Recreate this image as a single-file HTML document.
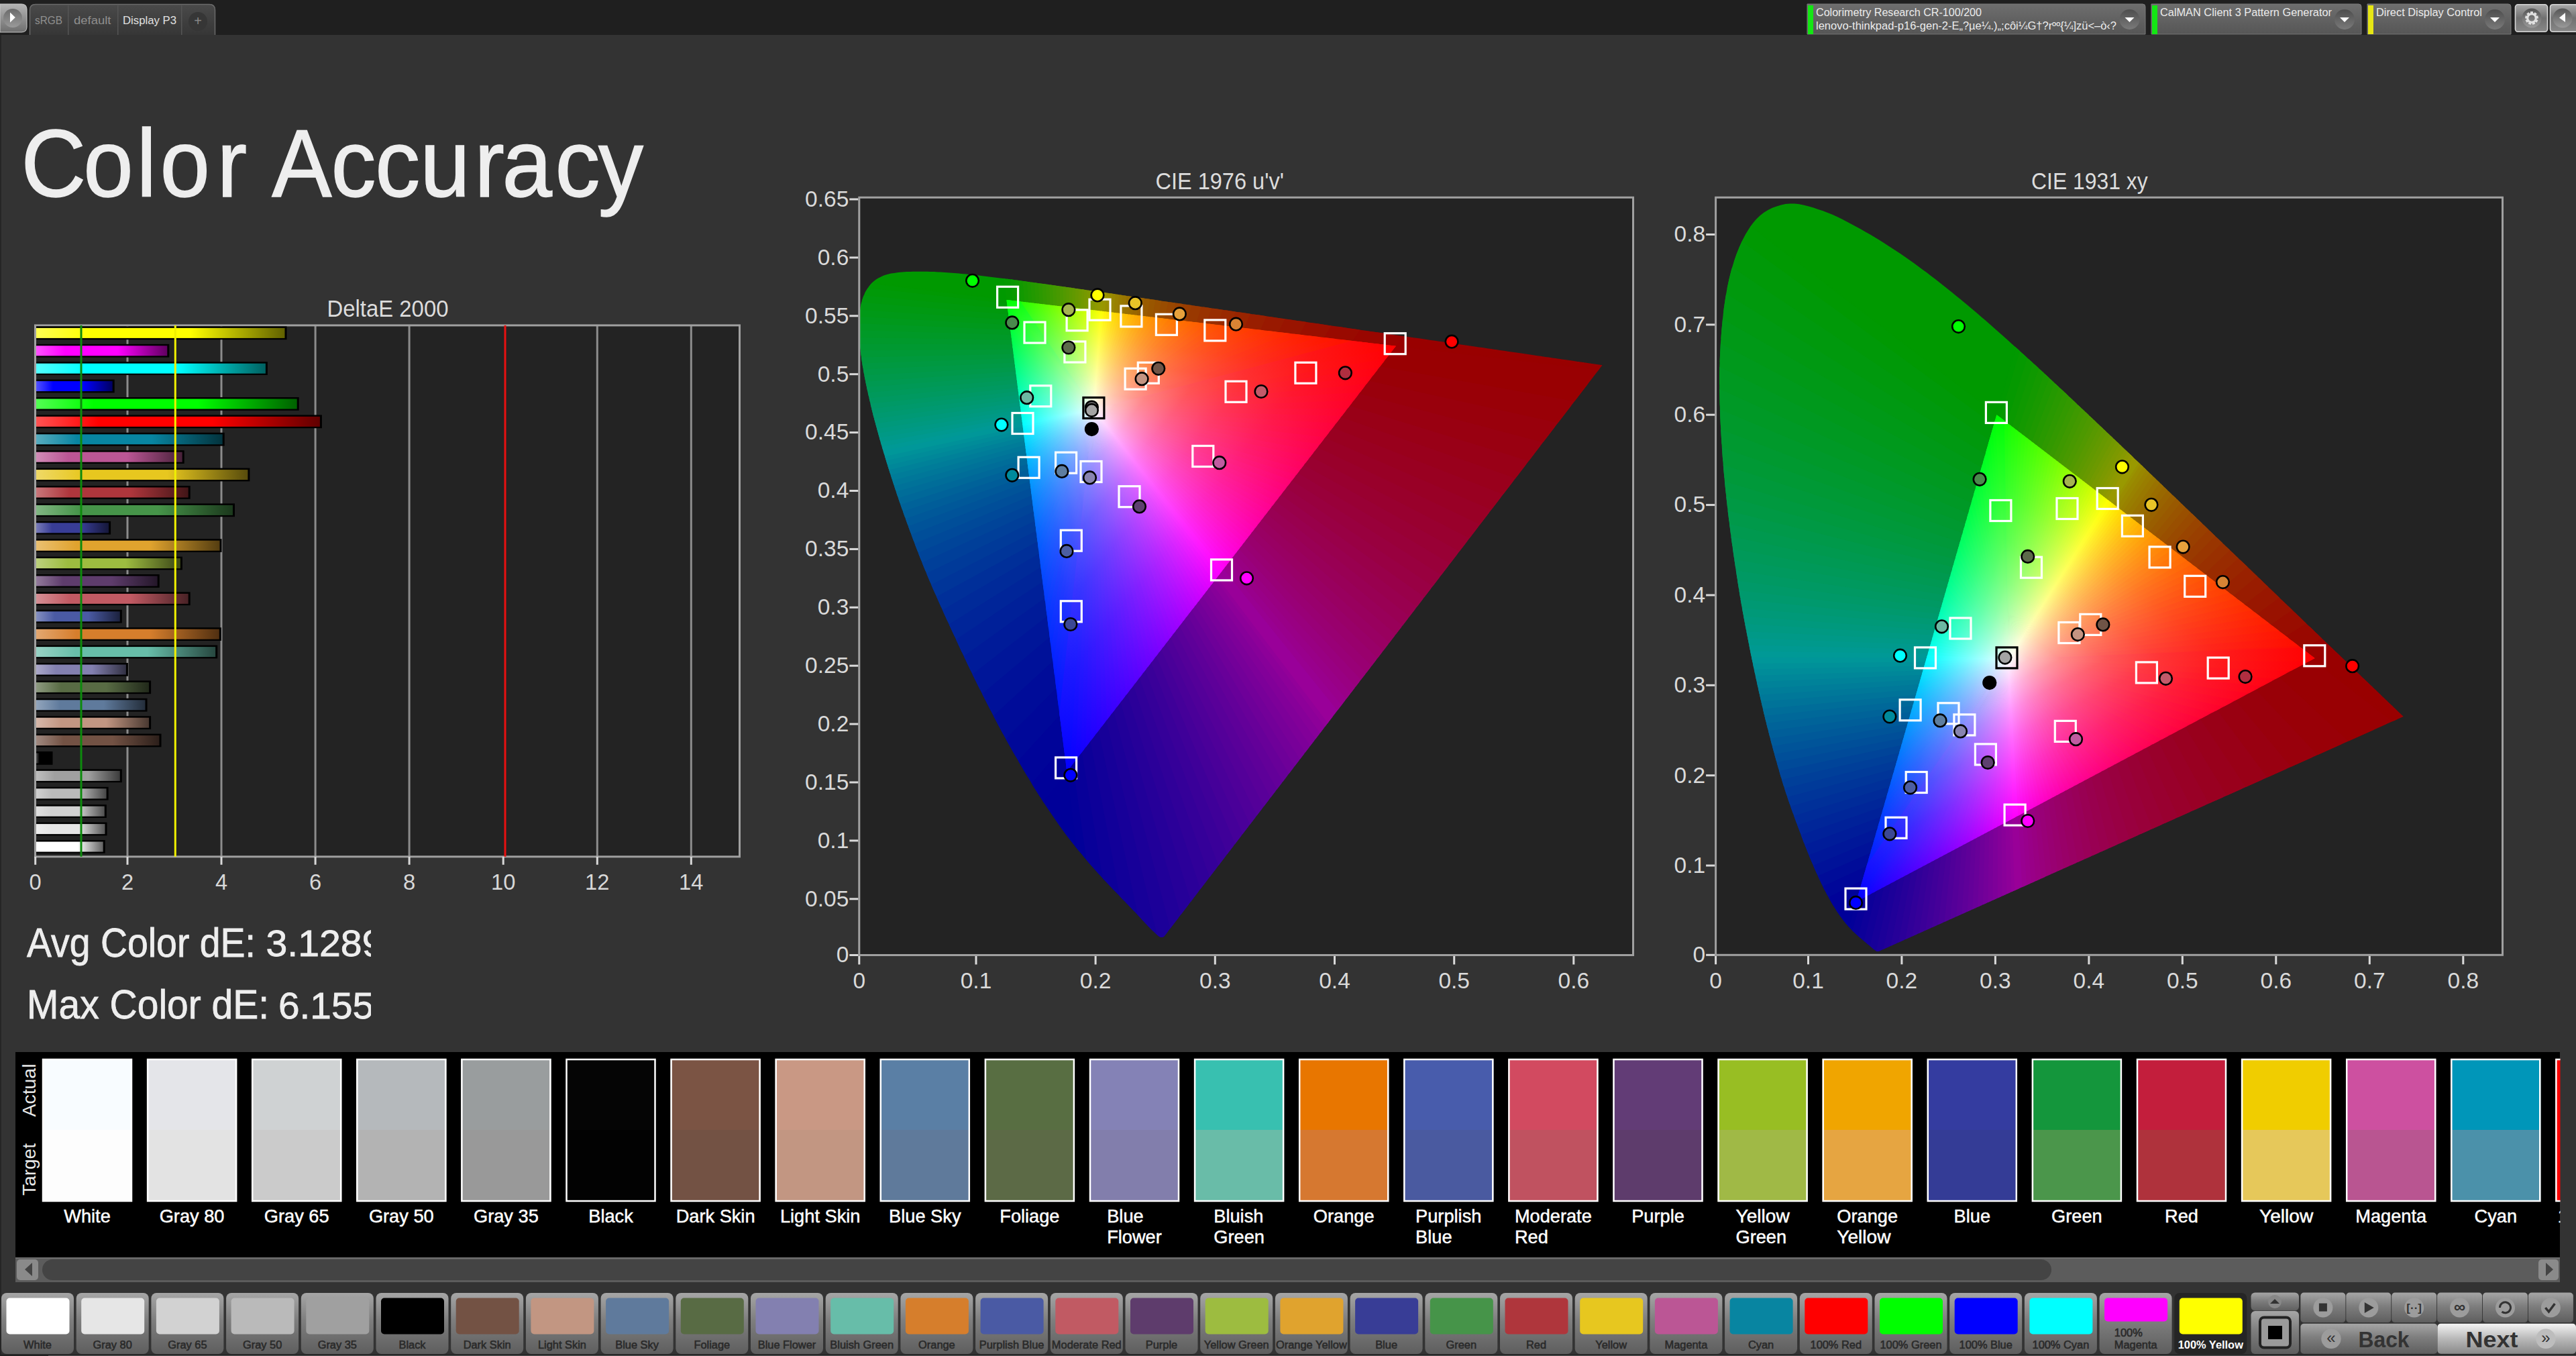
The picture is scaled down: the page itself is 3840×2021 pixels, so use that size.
<!DOCTYPE html>
<html><head><meta charset="utf-8"><style>
html,body{margin:0;padding:0;background:#333;overflow:hidden}
svg{display:block}
text{font-family:"Liberation Sans",sans-serif}
</style></head><body>
<svg width="3840" height="2021" viewBox="0 0 3840 2021">
<defs>
<linearGradient id="gPlay" x1="0" y1="0" x2="0" y2="1"><stop offset="0" stop-color="#b4b4b4"/><stop offset="1" stop-color="#6e6e6e"/></linearGradient>
<linearGradient id="gPlayC" x1="0" y1="0" x2="0" y2="1"><stop offset="0" stop-color="#6a6a6a"/><stop offset="1" stop-color="#9a9a9a"/></linearGradient>
<linearGradient id="gTab" x1="0" y1="0" x2="0" y2="1"><stop offset="0" stop-color="#4a4a4a"/><stop offset="1" stop-color="#363636"/></linearGradient>
<linearGradient id="gDev" x1="0" y1="0" x2="0" y2="1"><stop offset="0" stop-color="#6e6e6e"/><stop offset="1" stop-color="#565656"/></linearGradient>
<linearGradient id="gDd" x1="0" y1="0" x2="0" y2="1"><stop offset="0" stop-color="#4e4e4e"/><stop offset="1" stop-color="#7a7a7a"/></linearGradient>
<linearGradient id="gBtn" x1="0" y1="0" x2="0" y2="1"><stop offset="0" stop-color="#8a8a8a"/><stop offset="1" stop-color="#5a5a5a"/></linearGradient>
<linearGradient id="gBtn2" x1="0" y1="0" x2="0" y2="1"><stop offset="0" stop-color="#a8a8a8"/><stop offset=".5" stop-color="#707070"/><stop offset="1" stop-color="#888"/></linearGradient>
<linearGradient id="gCirc" x1="0" y1="0" x2="0" y2="1"><stop offset="0" stop-color="#555"/><stop offset="1" stop-color="#9a9a9a"/></linearGradient>
<linearGradient id="gb0" x1="0" y1="0" x2="1" y2="0"><stop offset="0" stop-color="#ffff52"/><stop offset=".22" stop-color="#ffff00"/><stop offset=".62" stop-color="#ffff00"/><stop offset="1" stop-color="#616100"/></linearGradient>
<linearGradient id="gb1" x1="0" y1="0" x2="1" y2="0"><stop offset="0" stop-color="#ff52ff"/><stop offset=".22" stop-color="#ff00ff"/><stop offset=".62" stop-color="#ff00ff"/><stop offset="1" stop-color="#610061"/></linearGradient>
<linearGradient id="gb2" x1="0" y1="0" x2="1" y2="0"><stop offset="0" stop-color="#52ffff"/><stop offset=".22" stop-color="#00ffff"/><stop offset=".62" stop-color="#00ffff"/><stop offset="1" stop-color="#006161"/></linearGradient>
<linearGradient id="gb3" x1="0" y1="0" x2="1" y2="0"><stop offset="0" stop-color="#5252ff"/><stop offset=".22" stop-color="#0000ff"/><stop offset=".62" stop-color="#0000ff"/><stop offset="1" stop-color="#000061"/></linearGradient>
<linearGradient id="gb4" x1="0" y1="0" x2="1" y2="0"><stop offset="0" stop-color="#52ff52"/><stop offset=".22" stop-color="#00ff00"/><stop offset=".62" stop-color="#00ff00"/><stop offset="1" stop-color="#006100"/></linearGradient>
<linearGradient id="gb5" x1="0" y1="0" x2="1" y2="0"><stop offset="0" stop-color="#ff5252"/><stop offset=".22" stop-color="#ff0000"/><stop offset=".62" stop-color="#ff0000"/><stop offset="1" stop-color="#610000"/></linearGradient>
<linearGradient id="gb6" x1="0" y1="0" x2="1" y2="0"><stop offset="0" stop-color="#57acbf"/><stop offset=".22" stop-color="#0885a1"/><stop offset=".62" stop-color="#0885a1"/><stop offset="1" stop-color="#03333d"/></linearGradient>
<linearGradient id="gb7" x1="0" y1="0" x2="1" y2="0"><stop offset="0" stop-color="#d18cb7"/><stop offset=".22" stop-color="#bb5695"/><stop offset=".62" stop-color="#bb5695"/><stop offset="1" stop-color="#472139"/></linearGradient>
<linearGradient id="gb8" x1="0" y1="0" x2="1" y2="0"><stop offset="0" stop-color="#efd967"/><stop offset=".22" stop-color="#e7c71f"/><stop offset=".62" stop-color="#e7c71f"/><stop offset="1" stop-color="#584c0c"/></linearGradient>
<linearGradient id="gb9" x1="0" y1="0" x2="1" y2="0"><stop offset="0" stop-color="#c9767a"/><stop offset=".22" stop-color="#af363c"/><stop offset=".62" stop-color="#af363c"/><stop offset="1" stop-color="#421517"/></linearGradient>
<linearGradient id="gb10" x1="0" y1="0" x2="1" y2="0"><stop offset="0" stop-color="#81b683"/><stop offset=".22" stop-color="#469449"/><stop offset=".62" stop-color="#469449"/><stop offset="1" stop-color="#1b381c"/></linearGradient>
<linearGradient id="gb11" x1="0" y1="0" x2="1" y2="0"><stop offset="0" stop-color="#787bb8"/><stop offset=".22" stop-color="#383d96"/><stop offset=".62" stop-color="#383d96"/><stop offset="1" stop-color="#151739"/></linearGradient>
<linearGradient id="gb12" x1="0" y1="0" x2="1" y2="0"><stop offset="0" stop-color="#eac071"/><stop offset=".22" stop-color="#e0a32e"/><stop offset=".62" stop-color="#e0a32e"/><stop offset="1" stop-color="#553e11"/></linearGradient>
<linearGradient id="gb13" x1="0" y1="0" x2="1" y2="0"><stop offset="0" stop-color="#bcd17d"/><stop offset=".22" stop-color="#9dbc40"/><stop offset=".62" stop-color="#9dbc40"/><stop offset="1" stop-color="#3c4718"/></linearGradient>
<linearGradient id="gb14" x1="0" y1="0" x2="1" y2="0"><stop offset="0" stop-color="#927a9b"/><stop offset=".22" stop-color="#5e3c6c"/><stop offset=".62" stop-color="#5e3c6c"/><stop offset="1" stop-color="#241729"/></linearGradient>
<linearGradient id="gb15" x1="0" y1="0" x2="1" y2="0"><stop offset="0" stop-color="#d58f95"/><stop offset=".22" stop-color="#c15a63"/><stop offset=".62" stop-color="#c15a63"/><stop offset="1" stop-color="#492226"/></linearGradient>
<linearGradient id="gb16" x1="0" y1="0" x2="1" y2="0"><stop offset="0" stop-color="#848fc1"/><stop offset=".22" stop-color="#4a5aa4"/><stop offset=".62" stop-color="#4a5aa4"/><stop offset="1" stop-color="#1c223e"/></linearGradient>
<linearGradient id="gb17" x1="0" y1="0" x2="1" y2="0"><stop offset="0" stop-color="#e3a770"/><stop offset=".22" stop-color="#d67e2c"/><stop offset=".62" stop-color="#d67e2c"/><stop offset="1" stop-color="#513011"/></linearGradient>
<linearGradient id="gb18" x1="0" y1="0" x2="1" y2="0"><stop offset="0" stop-color="#98d2c5"/><stop offset=".22" stop-color="#67bda9"/><stop offset=".62" stop-color="#67bda9"/><stop offset="1" stop-color="#274840"/></linearGradient>
<linearGradient id="gb19" x1="0" y1="0" x2="1" y2="0"><stop offset="0" stop-color="#aba9c9"/><stop offset=".22" stop-color="#8380b0"/><stop offset=".62" stop-color="#8380b0"/><stop offset="1" stop-color="#323143"/></linearGradient>
<linearGradient id="gb20" x1="0" y1="0" x2="1" y2="0"><stop offset="0" stop-color="#8d9a80"/><stop offset=".22" stop-color="#586b44"/><stop offset=".62" stop-color="#586b44"/><stop offset="1" stop-color="#21291a"/></linearGradient>
<linearGradient id="gb21" x1="0" y1="0" x2="1" y2="0"><stop offset="0" stop-color="#92a5bc"/><stop offset=".22" stop-color="#5f7a9c"/><stop offset=".62" stop-color="#5f7a9c"/><stop offset="1" stop-color="#242e3b"/></linearGradient>
<linearGradient id="gb22" x1="0" y1="0" x2="1" y2="0"><stop offset="0" stop-color="#d6b8aa"/><stop offset=".22" stop-color="#c29682"/><stop offset=".62" stop-color="#c29682"/><stop offset="1" stop-color="#4a3931"/></linearGradient>
<linearGradient id="gb23" x1="0" y1="0" x2="1" y2="0"><stop offset="0" stop-color="#a08980"/><stop offset=".22" stop-color="#735244"/><stop offset=".62" stop-color="#735244"/><stop offset="1" stop-color="#2c1f1a"/></linearGradient>
<linearGradient id="gb24" x1="0" y1="0" x2="1" y2="0"><stop offset="0" stop-color="#525252"/><stop offset=".22" stop-color="#000000"/><stop offset=".62" stop-color="#000000"/><stop offset="1" stop-color="#000000"/></linearGradient>
<linearGradient id="gb25" x1="0" y1="0" x2="1" y2="0"><stop offset="0" stop-color="#bebebe"/><stop offset=".22" stop-color="#a0a0a0"/><stop offset=".62" stop-color="#a0a0a0"/><stop offset="1" stop-color="#3d3d3d"/></linearGradient>
<linearGradient id="gb26" x1="0" y1="0" x2="1" y2="0"><stop offset="0" stop-color="#d0d0d0"/><stop offset=".22" stop-color="#bababa"/><stop offset=".62" stop-color="#bababa"/><stop offset="1" stop-color="#474747"/></linearGradient>
<linearGradient id="gb27" x1="0" y1="0" x2="1" y2="0"><stop offset="0" stop-color="#e0e0e0"/><stop offset=".22" stop-color="#d2d2d2"/><stop offset=".62" stop-color="#d2d2d2"/><stop offset="1" stop-color="#505050"/></linearGradient>
<linearGradient id="gb28" x1="0" y1="0" x2="1" y2="0"><stop offset="0" stop-color="#eeeeee"/><stop offset=".22" stop-color="#e6e6e6"/><stop offset=".62" stop-color="#e6e6e6"/><stop offset="1" stop-color="#575757"/></linearGradient>
<linearGradient id="gb29" x1="0" y1="0" x2="1" y2="0"><stop offset="0" stop-color="#ffffff"/><stop offset=".22" stop-color="#ffffff"/><stop offset=".62" stop-color="#ffffff"/><stop offset="1" stop-color="#616161"/></linearGradient>
<clipPath id="clipAvg"><rect x="0" y="1300" width="553" height="260"/></clipPath>
<clipPath id="uhs"><path d="M1735.3 1395.7 L1735.3 1395.7 L1735.3 1395.6 L1735.3 1395.6 L1735.2 1395.6 L1735.2 1395.6 L1735.1 1395.6 L1735.1 1395.6 L1735.1 1395.7 L1735 1395.7 L1735 1395.8 L1734.9 1395.9 L1734.9 1395.9 L1734.8 1396 L1734.8 1396.1 L1734.7 1396.2 L1734.7 1396.2 L1734.6 1396.3 L1734.5 1396.3 L1734.5 1396.2 L1734.4 1396.2 L1734.3 1396.2 L1734.2 1396.2 L1734.1 1396.2 L1734.1 1396.2 L1734 1396.3 L1733.9 1396.4 L1733.8 1396.4 L1733.7 1396.5 L1733.7 1396.6 L1733.6 1396.7 L1733.5 1396.8 L1733.4 1396.8 L1733.3 1396.8 L1733.2 1396.8 L1733.1 1396.8 L1733 1396.8 L1732.9 1396.8 L1732.7 1396.8 L1732.6 1396.8 L1732.5 1396.8 L1732.4 1396.8 L1732.2 1396.8 L1732.1 1396.8 L1731.9 1396.8 L1731.8 1396.8 L1731.6 1396.8 L1731.5 1396.8 L1731.3 1396.8 L1731.1 1396.8 L1731 1396.9 L1730.8 1396.9 L1730.7 1396.9 L1730.5 1396.9 L1730.3 1396.9 L1730.1 1396.9 L1729.8 1396.8 L1729.6 1396.7 L1729.3 1396.6 L1729 1396.4 L1728.7 1396.2 L1728.4 1396 L1728 1395.8 L1727.6 1395.5 L1727.2 1395.2 L1726.7 1394.8 L1726.2 1394.4 L1725.6 1394 L1725.1 1393.5 L1724.5 1393 L1723.9 1392.4 L1723.2 1391.9 L1722.5 1391.3 L1721.9 1390.6 L1721.2 1390 L1720.4 1389.3 L1719.7 1388.6 L1718.9 1387.8 L1718.1 1387 L1717.2 1386.1 L1716.3 1385.2 L1715.3 1384.2 L1714.3 1383.2 L1713.2 1382.1 L1712.1 1380.9 L1711 1379.8 L1709.8 1378.5 L1708.6 1377.3 L1707.3 1375.9 L1706 1374.6 L1704.7 1373.1 L1703.3 1371.7 L1702 1370.2 L1700.5 1368.6 L1699.1 1367 L1697.5 1365.3 L1695.9 1363.7 L1694.3 1361.9 L1692.7 1360.2 L1691 1358.4 L1689.2 1356.6 L1687.4 1354.7 L1685.6 1352.7 L1683.6 1350.7 L1681.6 1348.6 L1679.5 1346.4 L1677.3 1344.1 L1675 1341.8 L1672.7 1339.4 L1670.3 1336.9 L1667.8 1334.3 L1665.3 1331.7 L1662.8 1329 L1660.1 1326.3 L1657.5 1323.5 L1654.8 1320.7 L1652 1317.8 L1649.2 1314.8 L1646.2 1311.7 L1643.2 1308.4 L1640.1 1305 L1636.9 1301.4 L1633.6 1297.8 L1630.3 1294.1 L1626.9 1290.3 L1623.4 1286.3 L1619.8 1282.1 L1616.1 1277.7 L1612.3 1273.1 L1608.4 1268.4 L1604.6 1263.7 L1600.7 1258.9 L1596.7 1254 L1592.6 1248.7 L1588.2 1243 L1583.7 1236.7 L1578.8 1229.9 L1573.8 1222.7 L1568.7 1215.2 L1563.4 1207.5 L1557.9 1199.3 L1552.3 1190.8 L1546.6 1181.7 L1540.6 1172.2 L1534.5 1162.1 L1528.3 1151.7 L1522 1141.1 L1515.7 1130.2 L1509.2 1119 L1502.6 1107.3 L1495.9 1095.2 L1489.1 1082.5 L1482.1 1069.3 L1475.1 1055.7 L1468.1 1041.9 L1461 1027.9 L1453.9 1013.7 L1446.8 999.2 L1439.7 984.3 L1432.5 969.2 L1425.4 953.8 L1418.2 938.2 L1411 922.7 L1403.9 907.1 L1397 891.5 L1390.1 875.9 L1383.4 860.3 L1376.9 844.6 L1370.7 828.9 L1364.6 813.2 L1358.8 797.7 L1353.1 782.3 L1347.6 767 L1342.3 752.1 L1337.3 737.4 L1332.5 723 L1328 709 L1323.6 695.2 L1319.4 681.5 L1315.4 668.2 L1311.6 655.2 L1308.1 642.6 L1304.8 630.5 L1301.7 619 L1299 607.9 L1296.5 597.3 L1294.1 586.9 L1291.9 576.9 L1289.9 567.2 L1288.1 557.9 L1286.5 549.1 L1285.1 540.7 L1284 532.8 L1283 525.2 L1282.2 518 L1281.5 511 L1280.9 504.3 L1280.5 497.9 L1280.3 491.8 L1280.3 486 L1280.4 480.5 L1280.6 475.2 L1281 470.2 L1281.5 465.3 L1282.2 460.7 L1283 456.3 L1283.9 452.1 L1284.9 448.2 L1286.1 444.5 L1287.4 441.1 L1288.8 437.8 L1290.4 434.6 L1292.1 431.7 L1293.9 428.9 L1295.7 426.3 L1297.7 423.9 L1299.7 421.7 L1301.8 419.7 L1304 417.9 L1306.3 416.3 L1308.8 414.8 L1311.3 413.5 L1313.8 412.2 L1316.4 411.1 L1319 410.1 L1321.6 409.2 L1324.4 408.4 L1327.2 407.8 L1330.1 407.3 L1333 406.9 L1336 406.5 L1339 406.1 L1342 405.8 L1345 405.5 L1348 405.3 L1351.1 405.1 L1354.3 405 L1357.5 404.9 L1360.6 404.8 L1363.8 404.8 L1367 404.7 L1370.1 404.7 L1373.3 404.7 L1376.4 404.7 L1379.6 404.8 L1382.8 404.8 L1386 404.9 L1389.2 405 L1392.4 405.1 L1395.7 405.3 L1398.9 405.4 L1402.2 405.6 L1405.5 405.8 L1408.8 406 L1412.2 406.2 L1415.5 406.4 L1419 406.7 L1422.4 407 L1425.9 407.3 L1429.4 407.6 L1433 407.9 L1436.6 408.2 L1440.2 408.6 L1443.8 408.9 L1447.5 409.3 L1451.3 409.7 L1455.1 410.1 L1458.9 410.5 L1462.7 411 L1466.6 411.4 L1470.6 411.9 L1474.6 412.4 L1478.6 412.9 L1482.7 413.4 L1486.8 413.9 L1491 414.4 L1495.2 415 L1499.5 415.5 L1503.9 416.1 L1508.3 416.6 L1512.7 417.2 L1517.2 417.8 L1521.8 418.4 L1526.5 419.1 L1531.2 419.7 L1535.9 420.4 L1540.8 421 L1545.6 421.7 L1550.6 422.4 L1555.6 423.1 L1560.6 423.8 L1565.8 424.5 L1571 425.3 L1576.2 426 L1581.6 426.8 L1587 427.5 L1592.4 428.3 L1598 429.1 L1603.6 429.9 L1609.3 430.7 L1615 431.5 L1620.9 432.4 L1626.8 433.2 L1632.7 434.1 L1638.8 434.9 L1644.9 435.8 L1651.1 436.7 L1657.3 437.6 L1663.6 438.6 L1670 439.5 L1676.5 440.4 L1683.1 441.4 L1689.7 442.3 L1696.4 443.3 L1703.1 444.3 L1710 445.3 L1716.9 446.3 L1723.9 447.3 L1730.9 448.4 L1738 449.4 L1745.2 450.5 L1752.5 451.5 L1759.8 452.6 L1767.2 453.7 L1774.7 454.8 L1782.2 455.9 L1789.8 457 L1797.4 458.1 L1805.1 459.2 L1812.9 460.3 L1820.7 461.5 L1828.5 462.6 L1836.5 463.7 L1844.4 464.9 L1852.4 466.1 L1860.4 467.2 L1868.5 468.4 L1876.6 469.6 L1884.7 470.8 L1892.8 472 L1901 473.2 L1909.2 474.4 L1917.4 475.6 L1925.5 476.8 L1933.6 477.9 L1941.6 479.1 L1949.6 480.3 L1957.5 481.4 L1965.4 482.6 L1973.2 483.7 L1981 484.9 L1988.9 486 L1996.7 487.1 L2004.5 488.3 L2012.3 489.4 L2020.1 490.5 L2027.8 491.7 L2035.5 492.8 L2043.1 493.9 L2050.7 495 L2058.1 496.1 L2065.4 497.1 L2072.6 498.2 L2079.7 499.2 L2086.7 500.2 L2093.6 501.2 L2100.4 502.2 L2107.1 503.2 L2113.7 504.1 L2120.3 505.1 L2126.7 506 L2133 506.9 L2139.2 507.8 L2145.3 508.7 L2151.2 509.6 L2157.1 510.5 L2162.9 511.3 L2168.5 512.1 L2174.1 513 L2179.4 513.7 L2184.7 514.5 L2189.9 515.3 L2194.9 516 L2199.9 516.7 L2204.7 517.4 L2209.5 518.1 L2214.1 518.8 L2218.6 519.5 L2223 520.1 L2227.3 520.7 L2231.6 521.3 L2235.7 521.9 L2239.8 522.5 L2243.8 523.1 L2247.7 523.7 L2251.4 524.2 L2255.1 524.8 L2258.8 525.3 L2262.3 525.8 L2265.8 526.3 L2269.3 526.8 L2272.7 527.3 L2276.1 527.8 L2279.4 528.3 L2282.6 528.8 L2285.8 529.3 L2288.9 529.7 L2291.9 530.2 L2294.9 530.6 L2297.9 531 L2300.7 531.4 L2303.5 531.9 L2306.3 532.3 L2308.9 532.6 L2311.6 533 L2314.1 533.4 L2316.6 533.8 L2319 534.1 L2321.4 534.4 L2323.6 534.8 L2325.9 535.1 L2328 535.4 L2330.1 535.7 L2332.1 536 L2334.1 536.3 L2336 536.5 L2337.9 536.8 L2339.6 537.1 L2341.3 537.3 L2343 537.6 L2344.6 537.8 L2346.2 538 L2347.7 538.2 L2349.2 538.5 L2350.6 538.7 L2352 538.9 L2353.4 539.1 L2354.6 539.3 L2355.9 539.4 L2357.1 539.6 L2358.3 539.8 L2359.4 540 L2360.5 540.1 L2361.6 540.3 L2362.6 540.4 L2363.6 540.6 L2364.5 540.7 L2365.4 540.8 L2366.2 541 L2367 541.1 L2367.7 541.2 L2368.4 541.3 L2369 541.4 L2369.6 541.5 L2370.2 541.5 L2370.8 541.6 L2371.4 541.7 L2371.9 541.8 L2372.4 541.9 L2372.9 541.9 L2373.4 542 L2373.9 542.1 L2374.4 542.2 L2375 542.2 L2375.6 542.3 L2376.3 542.4 L2377.2 542.6 L2378 542.7 L2378.9 542.8 L2379.8 542.9 L2380.7 543.1 L2381.5 543.2 L2382.3 543.3 L2383 543.4 L2383.7 543.5 L2384.3 543.6 L2385 543.7 L2385.6 543.8 L2386.1 543.9 L2386.6 543.9 L2387.1 544 L2387.4 544.1 L2387.7 544.1 L2387.9 544.1 L2388.1 544.2 L2388.2 544.2 L2388.3 544.2 L2388.4 544.2 L2388.5 544.2Z"/></clipPath>
<clipPath id="utr"><path d="M2080.8 515.7 L1500.5 446.9 L1590.4 1150.1 Z"/></clipPath>
<clipPath id="uf0"><path d="M2080.8 515.7 L-1401 102.6 L-861.8 4321.9 Z"/></clipPath>
<clipPath id="uf1"><path d="M1590.4 1150.1 L4533 -2656.1 L1051.2 -3069.1 Z"/></clipPath>
<clipPath id="uf2"><path d="M1500.5 446.9 L2039.7 4666.1 L4982.4 860 Z"/></clipPath>
<radialGradient id="uwr"><stop offset="0" stop-color="#fff"/><stop offset=".4" stop-color="#fff" stop-opacity=".9"/><stop offset="1" stop-color="#fff" stop-opacity="0"/></radialGradient>
<linearGradient id="u0" gradientUnits="userSpaceOnUse" x1="1630.3" y1="610.6" x2="2068.7" y2="514.3"><stop offset=".00" stop-color="#fff"/><stop offset=".07" stop-color="#ffbebd"/><stop offset=".17" stop-color="#ff8685"/><stop offset=".32" stop-color="#ff5553"/><stop offset=".50" stop-color="#ff3331"/><stop offset=".72" stop-color="#ff1917"/><stop offset="1" stop-color="#ff0300"/></linearGradient>
<linearGradient id="u1" gradientUnits="userSpaceOnUse" x1="1630.3" y1="610.6" x2="2044.3" y2="511.4"><stop offset=".00" stop-color="#fff"/><stop offset=".07" stop-color="#ffc1c0"/><stop offset=".17" stop-color="#ff8a87"/><stop offset=".32" stop-color="#ff5a56"/><stop offset=".50" stop-color="#ff3733"/><stop offset=".72" stop-color="#ff1e18"/><stop offset="1" stop-color="#ff0800"/></linearGradient>
<linearGradient id="u2" gradientUnits="userSpaceOnUse" x1="1630.3" y1="610.6" x2="2020" y2="508.5"><stop offset=".00" stop-color="#fff"/><stop offset=".07" stop-color="#ffc4c2"/><stop offset=".17" stop-color="#ff8f8a"/><stop offset=".32" stop-color="#ff5f58"/><stop offset=".50" stop-color="#ff3d34"/><stop offset=".72" stop-color="#ff2319"/><stop offset="1" stop-color="#ff0d01"/></linearGradient>
<linearGradient id="u3" gradientUnits="userSpaceOnUse" x1="1630.3" y1="610.6" x2="1995.7" y2="505.6"><stop offset=".00" stop-color="#fff"/><stop offset=".07" stop-color="#ffc7c4"/><stop offset=".17" stop-color="#ff948d"/><stop offset=".32" stop-color="#ff655b"/><stop offset=".50" stop-color="#ff4236"/><stop offset=".72" stop-color="#ff281a"/><stop offset="1" stop-color="#ff1301"/></linearGradient>
<linearGradient id="u4" gradientUnits="userSpaceOnUse" x1="1630.3" y1="610.6" x2="1971.4" y2="502.7"><stop offset=".00" stop-color="#fff"/><stop offset=".07" stop-color="#ffcac6"/><stop offset=".17" stop-color="#ff9990"/><stop offset=".32" stop-color="#ff6a5e"/><stop offset=".50" stop-color="#ff4838"/><stop offset=".72" stop-color="#ff2e1b"/><stop offset="1" stop-color="#ff1801"/></linearGradient>
<linearGradient id="u5" gradientUnits="userSpaceOnUse" x1="1630.3" y1="610.6" x2="1947.8" y2="499.9"><stop offset=".00" stop-color="#fff"/><stop offset=".07" stop-color="#ffcec8"/><stop offset=".17" stop-color="#ff9e93"/><stop offset=".32" stop-color="#ff7161"/><stop offset=".50" stop-color="#ff4f3b"/><stop offset=".72" stop-color="#ff341c"/><stop offset="1" stop-color="#ff1e01"/></linearGradient>
<linearGradient id="u6" gradientUnits="userSpaceOnUse" x1="1630.3" y1="610.6" x2="1925.9" y2="497.3"><stop offset=".00" stop-color="#fff"/><stop offset=".07" stop-color="#ffd1ca"/><stop offset=".17" stop-color="#ffa396"/><stop offset=".32" stop-color="#ff7764"/><stop offset=".50" stop-color="#ff553d"/><stop offset=".72" stop-color="#ff3a1d"/><stop offset="1" stop-color="#ff2401"/></linearGradient>
<linearGradient id="u7" gradientUnits="userSpaceOnUse" x1="1630.3" y1="610.6" x2="1905.8" y2="495"><stop offset=".00" stop-color="#fff"/><stop offset=".07" stop-color="#ffd3cc"/><stop offset=".17" stop-color="#ffa899"/><stop offset=".32" stop-color="#ff7c67"/><stop offset=".50" stop-color="#ff5b3f"/><stop offset=".72" stop-color="#ff411e"/><stop offset="1" stop-color="#ff2b01"/></linearGradient>
<linearGradient id="u8" gradientUnits="userSpaceOnUse" x1="1630.3" y1="610.6" x2="1887.2" y2="492.8"><stop offset=".00" stop-color="#fff"/><stop offset=".07" stop-color="#ffd6ce"/><stop offset=".17" stop-color="#ffac9c"/><stop offset=".32" stop-color="#ff8269"/><stop offset=".50" stop-color="#ff6141"/><stop offset=".72" stop-color="#ff471f"/><stop offset="1" stop-color="#ff3101"/></linearGradient>
<linearGradient id="u9" gradientUnits="userSpaceOnUse" x1="1630.3" y1="610.6" x2="1870.1" y2="490.7"><stop offset=".00" stop-color="#fff"/><stop offset=".07" stop-color="#ffd9d0"/><stop offset=".17" stop-color="#ffb19f"/><stop offset=".32" stop-color="#ff886c"/><stop offset=".50" stop-color="#ff6743"/><stop offset=".72" stop-color="#ff4d21"/><stop offset="1" stop-color="#ff3701"/></linearGradient>
<linearGradient id="u10" gradientUnits="userSpaceOnUse" x1="1630.3" y1="610.6" x2="1854.2" y2="488.8"><stop offset=".00" stop-color="#fff"/><stop offset=".07" stop-color="#ffdbd2"/><stop offset=".17" stop-color="#ffb5a1"/><stop offset=".32" stop-color="#ff8d6f"/><stop offset=".50" stop-color="#ff6d45"/><stop offset=".72" stop-color="#ff5322"/><stop offset="1" stop-color="#ff3d01"/></linearGradient>
<linearGradient id="u11" gradientUnits="userSpaceOnUse" x1="1630.3" y1="610.6" x2="1839.3" y2="487.1"><stop offset=".00" stop-color="#fff"/><stop offset=".07" stop-color="#ffddd3"/><stop offset=".17" stop-color="#ffb9a4"/><stop offset=".32" stop-color="#ff9371"/><stop offset=".50" stop-color="#ff7347"/><stop offset=".72" stop-color="#ff5923"/><stop offset="1" stop-color="#ff4301"/></linearGradient>
<linearGradient id="u12" gradientUnits="userSpaceOnUse" x1="1630.3" y1="610.6" x2="1825.4" y2="485.4"><stop offset=".00" stop-color="#fff"/><stop offset=".07" stop-color="#ffdfd5"/><stop offset=".17" stop-color="#ffbda6"/><stop offset=".32" stop-color="#ff9874"/><stop offset=".50" stop-color="#ff7949"/><stop offset=".72" stop-color="#ff5f24"/><stop offset="1" stop-color="#ff4901"/></linearGradient>
<linearGradient id="u13" gradientUnits="userSpaceOnUse" x1="1630.3" y1="610.6" x2="1812.5" y2="483.9"><stop offset=".00" stop-color="#fff"/><stop offset=".07" stop-color="#ffe1d6"/><stop offset=".17" stop-color="#ffc1a8"/><stop offset=".32" stop-color="#ff9d76"/><stop offset=".50" stop-color="#ff7f4b"/><stop offset=".72" stop-color="#ff6525"/><stop offset="1" stop-color="#ff4f01"/></linearGradient>
<linearGradient id="u14" gradientUnits="userSpaceOnUse" x1="1630.3" y1="610.6" x2="1800.6" y2="482.5"><stop offset=".00" stop-color="#fff"/><stop offset=".07" stop-color="#ffe3d7"/><stop offset=".17" stop-color="#ffc4ab"/><stop offset=".32" stop-color="#ffa279"/><stop offset=".50" stop-color="#ff854d"/><stop offset=".72" stop-color="#ff6c27"/><stop offset="1" stop-color="#ff5501"/></linearGradient>
<linearGradient id="u15" gradientUnits="userSpaceOnUse" x1="1630.3" y1="610.6" x2="1789.4" y2="481.2"><stop offset=".00" stop-color="#fff"/><stop offset=".07" stop-color="#ffe5d9"/><stop offset=".17" stop-color="#ffc8ad"/><stop offset=".32" stop-color="#ffa77b"/><stop offset=".50" stop-color="#ff8a4f"/><stop offset=".72" stop-color="#ff7128"/><stop offset="1" stop-color="#ff5c01"/></linearGradient>
<linearGradient id="u16" gradientUnits="userSpaceOnUse" x1="1630.3" y1="610.6" x2="1779" y2="479.9"><stop offset=".00" stop-color="#fff"/><stop offset=".07" stop-color="#ffe7da"/><stop offset=".17" stop-color="#ffcbaf"/><stop offset=".32" stop-color="#ffab7d"/><stop offset=".50" stop-color="#ff9051"/><stop offset=".72" stop-color="#ff7729"/><stop offset="1" stop-color="#ff6201"/></linearGradient>
<linearGradient id="u17" gradientUnits="userSpaceOnUse" x1="1630.3" y1="610.6" x2="1769.3" y2="478.8"><stop offset=".00" stop-color="#fff"/><stop offset=".07" stop-color="#ffe8db"/><stop offset=".17" stop-color="#ffceb1"/><stop offset=".32" stop-color="#ffb07f"/><stop offset=".50" stop-color="#ff9553"/><stop offset=".72" stop-color="#ff7d2a"/><stop offset="1" stop-color="#ff6801"/></linearGradient>
<linearGradient id="u18" gradientUnits="userSpaceOnUse" x1="1630.3" y1="610.6" x2="1760.1" y2="477.7"><stop offset=".00" stop-color="#fff"/><stop offset=".07" stop-color="#ffeadc"/><stop offset=".17" stop-color="#ffd1b2"/><stop offset=".32" stop-color="#ffb482"/><stop offset=".50" stop-color="#ff9a55"/><stop offset=".72" stop-color="#ff832b"/><stop offset="1" stop-color="#ff6e01"/></linearGradient>
<linearGradient id="u19" gradientUnits="userSpaceOnUse" x1="1630.3" y1="610.6" x2="1751.4" y2="476.6"><stop offset=".00" stop-color="#fff"/><stop offset=".07" stop-color="#ffebdd"/><stop offset=".17" stop-color="#ffd4b4"/><stop offset=".32" stop-color="#ffb984"/><stop offset=".50" stop-color="#ffa057"/><stop offset=".72" stop-color="#ff892c"/><stop offset="1" stop-color="#ff7401"/></linearGradient>
<linearGradient id="u20" gradientUnits="userSpaceOnUse" x1="1630.3" y1="610.6" x2="1743.3" y2="475.7"><stop offset=".00" stop-color="#fff"/><stop offset=".07" stop-color="#ffedde"/><stop offset=".17" stop-color="#ffd7b6"/><stop offset=".32" stop-color="#ffbd86"/><stop offset=".50" stop-color="#ffa559"/><stop offset=".72" stop-color="#ff8f2e"/><stop offset="1" stop-color="#ff7a01"/></linearGradient>
<linearGradient id="u21" gradientUnits="userSpaceOnUse" x1="1630.3" y1="610.6" x2="1735.6" y2="474.8"><stop offset=".00" stop-color="#fff"/><stop offset=".07" stop-color="#ffeedf"/><stop offset=".17" stop-color="#ffd9b8"/><stop offset=".32" stop-color="#ffc188"/><stop offset=".50" stop-color="#ffaa5a"/><stop offset=".72" stop-color="#ff952f"/><stop offset="1" stop-color="#ff8101"/></linearGradient>
<linearGradient id="u22" gradientUnits="userSpaceOnUse" x1="1630.3" y1="610.6" x2="1728.4" y2="473.9"><stop offset=".00" stop-color="#fff"/><stop offset=".07" stop-color="#ffefe0"/><stop offset=".17" stop-color="#ffdcb9"/><stop offset=".32" stop-color="#ffc58a"/><stop offset=".50" stop-color="#ffaf5c"/><stop offset=".72" stop-color="#ff9a30"/><stop offset="1" stop-color="#ff8701"/></linearGradient>
<linearGradient id="u23" gradientUnits="userSpaceOnUse" x1="1630.3" y1="610.6" x2="1721.7" y2="473.1"><stop offset=".00" stop-color="#fff"/><stop offset=".07" stop-color="#fff0e1"/><stop offset=".17" stop-color="#ffdebb"/><stop offset=".32" stop-color="#ffc88c"/><stop offset=".50" stop-color="#ffb45e"/><stop offset=".72" stop-color="#ffa031"/><stop offset="1" stop-color="#ff8d01"/></linearGradient>
<linearGradient id="u24" gradientUnits="userSpaceOnUse" x1="1630.3" y1="610.6" x2="1715.2" y2="472.3"><stop offset=".00" stop-color="#fff"/><stop offset=".07" stop-color="#fff2e1"/><stop offset=".17" stop-color="#ffe1bc"/><stop offset=".32" stop-color="#ffcc8d"/><stop offset=".50" stop-color="#ffb860"/><stop offset=".72" stop-color="#ffa532"/><stop offset="1" stop-color="#ff9301"/></linearGradient>
<linearGradient id="u25" gradientUnits="userSpaceOnUse" x1="1630.3" y1="610.6" x2="1709" y2="471.6"><stop offset=".00" stop-color="#fff"/><stop offset=".07" stop-color="#fff3e2"/><stop offset=".17" stop-color="#ffe3be"/><stop offset=".32" stop-color="#ffd08f"/><stop offset=".50" stop-color="#ffbd61"/><stop offset=".72" stop-color="#ffab33"/><stop offset="1" stop-color="#ff9901"/></linearGradient>
<linearGradient id="u26" gradientUnits="userSpaceOnUse" x1="1630.3" y1="610.6" x2="1703" y2="470.9"><stop offset=".00" stop-color="#fff"/><stop offset=".07" stop-color="#fff4e3"/><stop offset=".17" stop-color="#ffe5bf"/><stop offset=".32" stop-color="#ffd391"/><stop offset=".50" stop-color="#ffc263"/><stop offset=".72" stop-color="#ffb134"/><stop offset="1" stop-color="#ffa001"/></linearGradient>
<linearGradient id="u27" gradientUnits="userSpaceOnUse" x1="1630.3" y1="610.6" x2="1697.3" y2="470.2"><stop offset=".00" stop-color="#fff"/><stop offset=".07" stop-color="#fff5e3"/><stop offset=".17" stop-color="#ffe8c0"/><stop offset=".32" stop-color="#ffd793"/><stop offset=".50" stop-color="#ffc665"/><stop offset=".72" stop-color="#ffb635"/><stop offset="1" stop-color="#ffa601"/></linearGradient>
<linearGradient id="u28" gradientUnits="userSpaceOnUse" x1="1630.3" y1="610.6" x2="1692.1" y2="469.6"><stop offset=".00" stop-color="#fff"/><stop offset=".07" stop-color="#fff6e4"/><stop offset=".17" stop-color="#ffeac1"/><stop offset=".32" stop-color="#ffda94"/><stop offset=".50" stop-color="#ffcb66"/><stop offset=".72" stop-color="#ffbc37"/><stop offset="1" stop-color="#ffac01"/></linearGradient>
<linearGradient id="u29" gradientUnits="userSpaceOnUse" x1="1630.3" y1="610.6" x2="1687.2" y2="469"><stop offset=".00" stop-color="#fff"/><stop offset=".07" stop-color="#fff7e5"/><stop offset=".17" stop-color="#ffecc3"/><stop offset=".32" stop-color="#ffdd96"/><stop offset=".50" stop-color="#ffcf68"/><stop offset=".72" stop-color="#ffc138"/><stop offset="1" stop-color="#ffb301"/></linearGradient>
<linearGradient id="u30" gradientUnits="userSpaceOnUse" x1="1630.3" y1="610.6" x2="1682.2" y2="468.4"><stop offset=".00" stop-color="#fff"/><stop offset=".07" stop-color="#fff7e5"/><stop offset=".17" stop-color="#ffeec4"/><stop offset=".32" stop-color="#ffe197"/><stop offset=".50" stop-color="#ffd469"/><stop offset=".72" stop-color="#ffc639"/><stop offset="1" stop-color="#ffb901"/></linearGradient>
<linearGradient id="u31" gradientUnits="userSpaceOnUse" x1="1630.3" y1="610.6" x2="1677.5" y2="467.9"><stop offset=".00" stop-color="#fff"/><stop offset=".07" stop-color="#fff8e6"/><stop offset=".17" stop-color="#ffefc5"/><stop offset=".32" stop-color="#ffe499"/><stop offset=".50" stop-color="#ffd86b"/><stop offset=".72" stop-color="#ffcc3a"/><stop offset="1" stop-color="#ffc001"/></linearGradient>
<linearGradient id="u32" gradientUnits="userSpaceOnUse" x1="1630.3" y1="610.6" x2="1673" y2="467.3"><stop offset=".00" stop-color="#fff"/><stop offset=".07" stop-color="#fff9e7"/><stop offset=".17" stop-color="#fff1c6"/><stop offset=".32" stop-color="#ffe79b"/><stop offset=".50" stop-color="#ffdc6c"/><stop offset=".72" stop-color="#ffd13b"/><stop offset="1" stop-color="#ffc601"/></linearGradient>
<linearGradient id="u33" gradientUnits="userSpaceOnUse" x1="1630.3" y1="610.6" x2="1668.8" y2="466.8"><stop offset=".00" stop-color="#fff"/><stop offset=".07" stop-color="#fffae7"/><stop offset=".17" stop-color="#fff3c7"/><stop offset=".32" stop-color="#ffea9c"/><stop offset=".50" stop-color="#ffe16e"/><stop offset=".72" stop-color="#ffd73c"/><stop offset="1" stop-color="#ffcc01"/></linearGradient>
<linearGradient id="u34" gradientUnits="userSpaceOnUse" x1="1630.3" y1="610.6" x2="1664.8" y2="466.4"><stop offset=".00" stop-color="#fff"/><stop offset=".07" stop-color="#fffbe8"/><stop offset=".17" stop-color="#fff5c8"/><stop offset=".32" stop-color="#ffed9d"/><stop offset=".50" stop-color="#ffe56f"/><stop offset=".72" stop-color="#ffdc3d"/><stop offset="1" stop-color="#ffd301"/></linearGradient>
<linearGradient id="u35" gradientUnits="userSpaceOnUse" x1="1630.3" y1="610.6" x2="1660.9" y2="465.9"><stop offset=".00" stop-color="#fff"/><stop offset=".07" stop-color="#fffbe8"/><stop offset=".17" stop-color="#fff6c9"/><stop offset=".32" stop-color="#fff09f"/><stop offset=".50" stop-color="#ffe971"/><stop offset=".72" stop-color="#ffe13e"/><stop offset="1" stop-color="#ffd901"/></linearGradient>
<linearGradient id="u36" gradientUnits="userSpaceOnUse" x1="1630.3" y1="610.6" x2="1657.1" y2="465.5"><stop offset=".00" stop-color="#fff"/><stop offset=".07" stop-color="#fffce9"/><stop offset=".17" stop-color="#fff8ca"/><stop offset=".32" stop-color="#fff3a0"/><stop offset=".50" stop-color="#ffed72"/><stop offset=".72" stop-color="#ffe63f"/><stop offset="1" stop-color="#ffe002"/></linearGradient>
<linearGradient id="u37" gradientUnits="userSpaceOnUse" x1="1630.3" y1="610.6" x2="1653.7" y2="465"><stop offset=".00" stop-color="#fff"/><stop offset=".07" stop-color="#fffde9"/><stop offset=".17" stop-color="#fffacb"/><stop offset=".32" stop-color="#fff5a2"/><stop offset=".50" stop-color="#fff074"/><stop offset=".72" stop-color="#ffeb40"/><stop offset="1" stop-color="#ffe602"/></linearGradient>
<linearGradient id="u38" gradientUnits="userSpaceOnUse" x1="1630.3" y1="610.6" x2="1650.2" y2="464.6"><stop offset=".00" stop-color="#fff"/><stop offset=".07" stop-color="#fffdea"/><stop offset=".17" stop-color="#fffbcc"/><stop offset=".32" stop-color="#fff8a3"/><stop offset=".50" stop-color="#fff475"/><stop offset=".72" stop-color="#fff141"/><stop offset="1" stop-color="#ffed02"/></linearGradient>
<linearGradient id="u39" gradientUnits="userSpaceOnUse" x1="1630.3" y1="610.6" x2="1646.7" y2="464.2"><stop offset=".00" stop-color="#fff"/><stop offset=".07" stop-color="#fffeea"/><stop offset=".17" stop-color="#fffdcd"/><stop offset=".32" stop-color="#fffba4"/><stop offset=".50" stop-color="#fff877"/><stop offset=".72" stop-color="#fff642"/><stop offset="1" stop-color="#fff302"/></linearGradient>
<linearGradient id="u40" gradientUnits="userSpaceOnUse" x1="1630.3" y1="610.6" x2="1643.5" y2="463.8"><stop offset=".00" stop-color="#fff"/><stop offset=".07" stop-color="#ffffea"/><stop offset=".17" stop-color="#fffece"/><stop offset=".32" stop-color="#fffda6"/><stop offset=".50" stop-color="#fffc78"/><stop offset=".72" stop-color="#fffb43"/><stop offset="1" stop-color="#fffa02"/></linearGradient>
<linearGradient id="u41" gradientUnits="userSpaceOnUse" x1="1630.3" y1="610.6" x2="1640" y2="463.4"><stop offset=".00" stop-color="#fff"/><stop offset=".07" stop-color="#ffffeb"/><stop offset=".17" stop-color="#feffce"/><stop offset=".32" stop-color="#feffa6"/><stop offset=".50" stop-color="#feff79"/><stop offset=".72" stop-color="#fdff44"/><stop offset="1" stop-color="#fcff02"/></linearGradient>
<linearGradient id="u42" gradientUnits="userSpaceOnUse" x1="1630.3" y1="610.6" x2="1636.5" y2="463"><stop offset=".00" stop-color="#fff"/><stop offset=".07" stop-color="#feffea"/><stop offset=".17" stop-color="#fdffce"/><stop offset=".32" stop-color="#fbffa6"/><stop offset=".50" stop-color="#f9ff78"/><stop offset=".72" stop-color="#f7ff44"/><stop offset="1" stop-color="#f5ff02"/></linearGradient>
<linearGradient id="u43" gradientUnits="userSpaceOnUse" x1="1630.3" y1="610.6" x2="1633.6" y2="462.7"><stop offset=".00" stop-color="#fff"/><stop offset=".07" stop-color="#fdffea"/><stop offset=".17" stop-color="#fcffce"/><stop offset=".32" stop-color="#f9ffa5"/><stop offset=".50" stop-color="#f6ff78"/><stop offset=".72" stop-color="#f2ff43"/><stop offset="1" stop-color="#efff02"/></linearGradient>
<linearGradient id="u44" gradientUnits="userSpaceOnUse" x1="1630.3" y1="610.6" x2="1630.6" y2="462.3"><stop offset=".00" stop-color="#fff"/><stop offset=".07" stop-color="#fdffea"/><stop offset=".17" stop-color="#faffce"/><stop offset=".32" stop-color="#f6ffa5"/><stop offset=".50" stop-color="#f2ff77"/><stop offset=".72" stop-color="#eeff43"/><stop offset="1" stop-color="#e8ff02"/></linearGradient>
<linearGradient id="u45" gradientUnits="userSpaceOnUse" x1="1630.3" y1="610.6" x2="1627.6" y2="462"><stop offset=".00" stop-color="#fff"/><stop offset=".07" stop-color="#fcffea"/><stop offset=".17" stop-color="#f9ffcd"/><stop offset=".32" stop-color="#f4ffa5"/><stop offset=".50" stop-color="#efff77"/><stop offset=".72" stop-color="#e9ff43"/><stop offset="1" stop-color="#e2ff02"/></linearGradient>
<linearGradient id="u46" gradientUnits="userSpaceOnUse" x1="1630.3" y1="610.6" x2="1624.6" y2="461.6"><stop offset=".00" stop-color="#fff"/><stop offset=".07" stop-color="#fcffea"/><stop offset=".17" stop-color="#f8ffcd"/><stop offset=".32" stop-color="#f2ffa4"/><stop offset=".50" stop-color="#ebff77"/><stop offset=".72" stop-color="#e4ff42"/><stop offset="1" stop-color="#dcff02"/></linearGradient>
<linearGradient id="u47" gradientUnits="userSpaceOnUse" x1="1630.3" y1="610.6" x2="1621.6" y2="461.2"><stop offset=".00" stop-color="#fff"/><stop offset=".07" stop-color="#fbffea"/><stop offset=".17" stop-color="#f6ffcd"/><stop offset=".32" stop-color="#efffa4"/><stop offset=".50" stop-color="#e8ff76"/><stop offset=".72" stop-color="#dfff42"/><stop offset="1" stop-color="#d6ff02"/></linearGradient>
<linearGradient id="u48" gradientUnits="userSpaceOnUse" x1="1630.3" y1="610.6" x2="1618.4" y2="460.9"><stop offset=".00" stop-color="#fff"/><stop offset=".07" stop-color="#fbffea"/><stop offset=".17" stop-color="#f5ffcd"/><stop offset=".32" stop-color="#edffa4"/><stop offset=".50" stop-color="#e4ff76"/><stop offset=".72" stop-color="#daff42"/><stop offset="1" stop-color="#d0ff02"/></linearGradient>
<linearGradient id="u49" gradientUnits="userSpaceOnUse" x1="1630.3" y1="610.6" x2="1614.9" y2="460.5"><stop offset=".00" stop-color="#fff"/><stop offset=".07" stop-color="#faffea"/><stop offset=".17" stop-color="#f3ffcc"/><stop offset=".32" stop-color="#eaffa3"/><stop offset=".50" stop-color="#e0ff75"/><stop offset=".72" stop-color="#d5ff41"/><stop offset="1" stop-color="#c9ff02"/></linearGradient>
<linearGradient id="u50" gradientUnits="userSpaceOnUse" x1="1630.3" y1="610.6" x2="1611.5" y2="460"><stop offset=".00" stop-color="#fff"/><stop offset=".07" stop-color="#f9ffe9"/><stop offset=".17" stop-color="#f2ffcc"/><stop offset=".32" stop-color="#e7ffa3"/><stop offset=".50" stop-color="#dcff75"/><stop offset=".72" stop-color="#cfff41"/><stop offset="1" stop-color="#c2ff02"/></linearGradient>
<linearGradient id="u51" gradientUnits="userSpaceOnUse" x1="1630.3" y1="610.6" x2="1608" y2="459.6"><stop offset=".00" stop-color="#fff"/><stop offset=".07" stop-color="#f9ffe9"/><stop offset=".17" stop-color="#f0ffcc"/><stop offset=".32" stop-color="#e5ffa2"/><stop offset=".50" stop-color="#d8ff74"/><stop offset=".72" stop-color="#caff41"/><stop offset="1" stop-color="#bbff02"/></linearGradient>
<linearGradient id="u52" gradientUnits="userSpaceOnUse" x1="1630.3" y1="610.6" x2="1604.5" y2="459.2"><stop offset=".00" stop-color="#fff"/><stop offset=".07" stop-color="#f8ffe9"/><stop offset=".17" stop-color="#efffcb"/><stop offset=".32" stop-color="#e2ffa2"/><stop offset=".50" stop-color="#d4ff74"/><stop offset=".72" stop-color="#c5ff40"/><stop offset="1" stop-color="#b4ff02"/></linearGradient>
<linearGradient id="u53" gradientUnits="userSpaceOnUse" x1="1630.3" y1="610.6" x2="1601" y2="458.8"><stop offset=".00" stop-color="#fff"/><stop offset=".07" stop-color="#f7ffe9"/><stop offset=".17" stop-color="#edffcb"/><stop offset=".32" stop-color="#dfffa1"/><stop offset=".50" stop-color="#d0ff74"/><stop offset=".72" stop-color="#c0ff40"/><stop offset="1" stop-color="#aeff02"/></linearGradient>
<linearGradient id="u54" gradientUnits="userSpaceOnUse" x1="1630.3" y1="610.6" x2="1597.6" y2="458.4"><stop offset=".00" stop-color="#fff"/><stop offset=".07" stop-color="#f7ffe9"/><stop offset=".17" stop-color="#ecffcb"/><stop offset=".32" stop-color="#dcffa1"/><stop offset=".50" stop-color="#ccff73"/><stop offset=".72" stop-color="#baff40"/><stop offset="1" stop-color="#a7ff02"/></linearGradient>
<linearGradient id="u55" gradientUnits="userSpaceOnUse" x1="1630.3" y1="610.6" x2="1594.1" y2="458"><stop offset=".00" stop-color="#fff"/><stop offset=".07" stop-color="#f6ffe9"/><stop offset=".17" stop-color="#eaffcb"/><stop offset=".32" stop-color="#daffa1"/><stop offset=".50" stop-color="#c8ff73"/><stop offset=".72" stop-color="#b5ff3f"/><stop offset="1" stop-color="#a1ff02"/></linearGradient>
<linearGradient id="u56" gradientUnits="userSpaceOnUse" x1="1630.3" y1="610.6" x2="1590.6" y2="457.6"><stop offset=".00" stop-color="#fff"/><stop offset=".07" stop-color="#f5ffe9"/><stop offset=".17" stop-color="#e9ffca"/><stop offset=".32" stop-color="#d7ffa0"/><stop offset=".50" stop-color="#c4ff72"/><stop offset=".72" stop-color="#b0ff3f"/><stop offset="1" stop-color="#9aff02"/></linearGradient>
<linearGradient id="u57" gradientUnits="userSpaceOnUse" x1="1630.3" y1="610.6" x2="1587.1" y2="457.2"><stop offset=".00" stop-color="#fff"/><stop offset=".07" stop-color="#f5ffe8"/><stop offset=".17" stop-color="#e7ffca"/><stop offset=".32" stop-color="#d5ffa0"/><stop offset=".50" stop-color="#c1ff72"/><stop offset=".72" stop-color="#abff3f"/><stop offset="1" stop-color="#94ff02"/></linearGradient>
<linearGradient id="u58" gradientUnits="userSpaceOnUse" x1="1630.3" y1="610.6" x2="1583.7" y2="456.7"><stop offset=".00" stop-color="#fff"/><stop offset=".07" stop-color="#f4ffe8"/><stop offset=".17" stop-color="#e6ffca"/><stop offset=".32" stop-color="#d2ff9f"/><stop offset=".50" stop-color="#bdff71"/><stop offset=".72" stop-color="#a6ff3e"/><stop offset="1" stop-color="#8eff01"/></linearGradient>
<linearGradient id="u59" gradientUnits="userSpaceOnUse" x1="1630.3" y1="610.6" x2="1580.2" y2="456.3"><stop offset=".00" stop-color="#fff"/><stop offset=".07" stop-color="#f3ffe8"/><stop offset=".17" stop-color="#e4ffc9"/><stop offset=".32" stop-color="#cfff9f"/><stop offset=".50" stop-color="#b9ff71"/><stop offset=".72" stop-color="#a1ff3e"/><stop offset="1" stop-color="#88ff01"/></linearGradient>
<linearGradient id="u60" gradientUnits="userSpaceOnUse" x1="1630.3" y1="610.6" x2="1576.7" y2="455.9"><stop offset=".00" stop-color="#fff"/><stop offset=".07" stop-color="#f3ffe8"/><stop offset=".17" stop-color="#e3ffc9"/><stop offset=".32" stop-color="#cdff9f"/><stop offset=".50" stop-color="#b5ff71"/><stop offset=".72" stop-color="#9cff3e"/><stop offset="1" stop-color="#81ff01"/></linearGradient>
<linearGradient id="u61" gradientUnits="userSpaceOnUse" x1="1630.3" y1="610.6" x2="1573.2" y2="455.5"><stop offset=".00" stop-color="#fff"/><stop offset=".07" stop-color="#f2ffe8"/><stop offset=".17" stop-color="#e1ffc9"/><stop offset=".32" stop-color="#caff9e"/><stop offset=".50" stop-color="#b2ff70"/><stop offset=".72" stop-color="#97ff3e"/><stop offset="1" stop-color="#7bff01"/></linearGradient>
<linearGradient id="u62" gradientUnits="userSpaceOnUse" x1="1630.3" y1="610.6" x2="1569.8" y2="455.1"><stop offset=".00" stop-color="#fff"/><stop offset=".07" stop-color="#f2ffe8"/><stop offset=".17" stop-color="#e0ffc8"/><stop offset=".32" stop-color="#c7ff9e"/><stop offset=".50" stop-color="#aeff70"/><stop offset=".72" stop-color="#93ff3d"/><stop offset="1" stop-color="#75ff01"/></linearGradient>
<linearGradient id="u63" gradientUnits="userSpaceOnUse" x1="1630.3" y1="610.6" x2="1566" y2="454.6"><stop offset=".00" stop-color="#fff"/><stop offset=".07" stop-color="#f1ffe8"/><stop offset=".17" stop-color="#deffc8"/><stop offset=".32" stop-color="#c5ff9d"/><stop offset=".50" stop-color="#aaff6f"/><stop offset=".72" stop-color="#8dff3d"/><stop offset="1" stop-color="#6fff01"/></linearGradient>
<linearGradient id="u64" gradientUnits="userSpaceOnUse" x1="1630.3" y1="610.6" x2="1562.1" y2="454.2"><stop offset=".00" stop-color="#fff"/><stop offset=".07" stop-color="#f0ffe7"/><stop offset=".17" stop-color="#dcffc8"/><stop offset=".32" stop-color="#c2ff9d"/><stop offset=".50" stop-color="#a6ff6f"/><stop offset=".72" stop-color="#88ff3d"/><stop offset="1" stop-color="#68ff01"/></linearGradient>
<linearGradient id="u65" gradientUnits="userSpaceOnUse" x1="1630.3" y1="610.6" x2="1558.1" y2="453.7"><stop offset=".00" stop-color="#fff"/><stop offset=".07" stop-color="#efffe7"/><stop offset=".17" stop-color="#dbffc8"/><stop offset=".32" stop-color="#bfff9c"/><stop offset=".50" stop-color="#a2ff6e"/><stop offset=".72" stop-color="#82ff3c"/><stop offset="1" stop-color="#61ff01"/></linearGradient>
<linearGradient id="u66" gradientUnits="userSpaceOnUse" x1="1630.3" y1="610.6" x2="1554.1" y2="453.2"><stop offset=".00" stop-color="#fff"/><stop offset=".07" stop-color="#efffe7"/><stop offset=".17" stop-color="#d9ffc7"/><stop offset=".32" stop-color="#bcff9c"/><stop offset=".50" stop-color="#9dff6e"/><stop offset=".72" stop-color="#7dff3c"/><stop offset="1" stop-color="#5bff01"/></linearGradient>
<linearGradient id="u67" gradientUnits="userSpaceOnUse" x1="1630.3" y1="610.6" x2="1550.2" y2="452.8"><stop offset=".00" stop-color="#fff"/><stop offset=".07" stop-color="#eeffe7"/><stop offset=".17" stop-color="#d7ffc7"/><stop offset=".32" stop-color="#b9ff9c"/><stop offset=".50" stop-color="#99ff6d"/><stop offset=".72" stop-color="#78ff3c"/><stop offset="1" stop-color="#54ff01"/></linearGradient>
<linearGradient id="u68" gradientUnits="userSpaceOnUse" x1="1630.3" y1="610.6" x2="1546.2" y2="452.3"><stop offset=".00" stop-color="#fff"/><stop offset=".07" stop-color="#edffe7"/><stop offset=".17" stop-color="#d6ffc7"/><stop offset=".32" stop-color="#b6ff9b"/><stop offset=".50" stop-color="#95ff6d"/><stop offset=".72" stop-color="#72ff3b"/><stop offset="1" stop-color="#4dff01"/></linearGradient>
<linearGradient id="u69" gradientUnits="userSpaceOnUse" x1="1630.3" y1="610.6" x2="1542.2" y2="451.8"><stop offset=".00" stop-color="#fff"/><stop offset=".07" stop-color="#ecffe7"/><stop offset=".17" stop-color="#d4ffc6"/><stop offset=".32" stop-color="#b3ff9b"/><stop offset=".50" stop-color="#91ff6d"/><stop offset=".72" stop-color="#6dff3b"/><stop offset="1" stop-color="#47ff01"/></linearGradient>
<linearGradient id="u70" gradientUnits="userSpaceOnUse" x1="1630.3" y1="610.6" x2="1538.2" y2="451.4"><stop offset=".00" stop-color="#fff"/><stop offset=".07" stop-color="#ecffe6"/><stop offset=".17" stop-color="#d2ffc6"/><stop offset=".32" stop-color="#b1ff9a"/><stop offset=".50" stop-color="#8dff6c"/><stop offset=".72" stop-color="#68ff3b"/><stop offset="1" stop-color="#40ff01"/></linearGradient>
<linearGradient id="u71" gradientUnits="userSpaceOnUse" x1="1630.3" y1="610.6" x2="1534.3" y2="450.9"><stop offset=".00" stop-color="#fff"/><stop offset=".07" stop-color="#ebffe6"/><stop offset=".17" stop-color="#d1ffc6"/><stop offset=".32" stop-color="#aeff9a"/><stop offset=".50" stop-color="#89ff6c"/><stop offset=".72" stop-color="#63ff3a"/><stop offset="1" stop-color="#3aff01"/></linearGradient>
<linearGradient id="u72" gradientUnits="userSpaceOnUse" x1="1630.3" y1="610.6" x2="1530.3" y2="450.4"><stop offset=".00" stop-color="#fff"/><stop offset=".07" stop-color="#eaffe6"/><stop offset=".17" stop-color="#cfffc5"/><stop offset=".32" stop-color="#abff99"/><stop offset=".50" stop-color="#85ff6b"/><stop offset=".72" stop-color="#5eff3a"/><stop offset="1" stop-color="#33ff01"/></linearGradient>
<linearGradient id="u73" gradientUnits="userSpaceOnUse" x1="1630.3" y1="610.6" x2="1526.3" y2="449.9"><stop offset=".00" stop-color="#fff"/><stop offset=".07" stop-color="#eaffe6"/><stop offset=".17" stop-color="#cdffc5"/><stop offset=".32" stop-color="#a8ff99"/><stop offset=".50" stop-color="#81ff6b"/><stop offset=".72" stop-color="#58ff3a"/><stop offset="1" stop-color="#2dff01"/></linearGradient>
<linearGradient id="u74" gradientUnits="userSpaceOnUse" x1="1630.3" y1="610.6" x2="1522.4" y2="449.5"><stop offset=".00" stop-color="#fff"/><stop offset=".07" stop-color="#e9ffe6"/><stop offset=".17" stop-color="#ccffc5"/><stop offset=".32" stop-color="#a5ff98"/><stop offset=".50" stop-color="#7dff6a"/><stop offset=".72" stop-color="#53ff39"/><stop offset="1" stop-color="#27ff01"/></linearGradient>
<linearGradient id="u75" gradientUnits="userSpaceOnUse" x1="1630.3" y1="610.6" x2="1518.4" y2="449"><stop offset=".00" stop-color="#fff"/><stop offset=".07" stop-color="#e8ffe6"/><stop offset=".17" stop-color="#caffc4"/><stop offset=".32" stop-color="#a3ff98"/><stop offset=".50" stop-color="#79ff6a"/><stop offset=".72" stop-color="#4eff39"/><stop offset="1" stop-color="#20ff01"/></linearGradient>
<linearGradient id="u76" gradientUnits="userSpaceOnUse" x1="1630.3" y1="610.6" x2="1514.4" y2="448.5"><stop offset=".00" stop-color="#fff"/><stop offset=".07" stop-color="#e7ffe5"/><stop offset=".17" stop-color="#c9ffc4"/><stop offset=".32" stop-color="#a0ff98"/><stop offset=".50" stop-color="#76ff6a"/><stop offset=".72" stop-color="#49ff39"/><stop offset="1" stop-color="#1aff01"/></linearGradient>
<linearGradient id="u77" gradientUnits="userSpaceOnUse" x1="1630.3" y1="610.6" x2="1510.4" y2="448.1"><stop offset=".00" stop-color="#fff"/><stop offset=".07" stop-color="#e7ffe5"/><stop offset=".17" stop-color="#c7ffc4"/><stop offset=".32" stop-color="#9dff97"/><stop offset=".50" stop-color="#72ff69"/><stop offset=".72" stop-color="#44ff39"/><stop offset="1" stop-color="#13ff01"/></linearGradient>
<linearGradient id="u78" gradientUnits="userSpaceOnUse" x1="1630.3" y1="610.6" x2="1506.5" y2="447.6"><stop offset=".00" stop-color="#fff"/><stop offset=".07" stop-color="#e6ffe5"/><stop offset=".17" stop-color="#c5ffc3"/><stop offset=".32" stop-color="#9aff97"/><stop offset=".50" stop-color="#6eff69"/><stop offset=".72" stop-color="#3fff38"/><stop offset="1" stop-color="#0cff01"/></linearGradient>
<linearGradient id="u79" gradientUnits="userSpaceOnUse" x1="1630.3" y1="610.6" x2="1502.5" y2="447.1"><stop offset=".00" stop-color="#fff"/><stop offset=".07" stop-color="#e5ffe5"/><stop offset=".17" stop-color="#c4ffc3"/><stop offset=".32" stop-color="#98ff96"/><stop offset=".50" stop-color="#6aff68"/><stop offset=".72" stop-color="#3aff38"/><stop offset="1" stop-color="#05ff01"/></linearGradient>
<linearGradient id="u80" gradientUnits="userSpaceOnUse" x1="1630.3" y1="610.6" x2="1500.8" y2="449.1"><stop offset=".00" stop-color="#fff"/><stop offset=".07" stop-color="#e5ffe5"/><stop offset=".17" stop-color="#c3ffc4"/><stop offset=".32" stop-color="#96ff97"/><stop offset=".50" stop-color="#68ff6a"/><stop offset=".72" stop-color="#38ff3a"/><stop offset="1" stop-color="#01ff05"/></linearGradient>
<linearGradient id="u81" gradientUnits="userSpaceOnUse" x1="1630.3" y1="610.6" x2="1501.4" y2="453.8"><stop offset=".00" stop-color="#fff"/><stop offset=".07" stop-color="#e5ffe6"/><stop offset=".17" stop-color="#c3ffc5"/><stop offset=".32" stop-color="#97ff9a"/><stop offset=".50" stop-color="#69ff6d"/><stop offset=".72" stop-color="#38ff3e"/><stop offset="1" stop-color="#01ff0b"/></linearGradient>
<linearGradient id="u82" gradientUnits="userSpaceOnUse" x1="1630.3" y1="610.6" x2="1502" y2="458.8"><stop offset=".00" stop-color="#fff"/><stop offset=".07" stop-color="#e5ffe6"/><stop offset=".17" stop-color="#c4ffc7"/><stop offset=".32" stop-color="#97ff9c"/><stop offset=".50" stop-color="#69ff71"/><stop offset=".72" stop-color="#39ff43"/><stop offset="1" stop-color="#01ff11"/></linearGradient>
<linearGradient id="u83" gradientUnits="userSpaceOnUse" x1="1630.3" y1="610.6" x2="1502.7" y2="463.7"><stop offset=".00" stop-color="#fff"/><stop offset=".07" stop-color="#e5ffe7"/><stop offset=".17" stop-color="#c4ffc8"/><stop offset=".32" stop-color="#98ff9f"/><stop offset=".50" stop-color="#6aff74"/><stop offset=".72" stop-color="#39ff48"/><stop offset="1" stop-color="#01ff17"/></linearGradient>
<linearGradient id="u84" gradientUnits="userSpaceOnUse" x1="1630.3" y1="610.6" x2="1503.3" y2="468.7"><stop offset=".00" stop-color="#fff"/><stop offset=".07" stop-color="#e6ffe8"/><stop offset=".17" stop-color="#c4ffca"/><stop offset=".32" stop-color="#98ffa1"/><stop offset=".50" stop-color="#6aff78"/><stop offset=".72" stop-color="#39ff4c"/><stop offset="1" stop-color="#01ff1d"/></linearGradient>
<linearGradient id="u85" gradientUnits="userSpaceOnUse" x1="1630.3" y1="610.6" x2="1504" y2="473.9"><stop offset=".00" stop-color="#fff"/><stop offset=".07" stop-color="#e6ffe9"/><stop offset=".17" stop-color="#c5ffcb"/><stop offset=".32" stop-color="#99ffa4"/><stop offset=".50" stop-color="#6aff7c"/><stop offset=".72" stop-color="#39ff51"/><stop offset="1" stop-color="#01ff23"/></linearGradient>
<linearGradient id="u86" gradientUnits="userSpaceOnUse" x1="1630.3" y1="610.6" x2="1504.7" y2="479.4"><stop offset=".00" stop-color="#fff"/><stop offset=".07" stop-color="#e6ffe9"/><stop offset=".17" stop-color="#c5ffcd"/><stop offset=".32" stop-color="#99ffa7"/><stop offset=".50" stop-color="#6bff80"/><stop offset=".72" stop-color="#3aff56"/><stop offset="1" stop-color="#01ff2a"/></linearGradient>
<linearGradient id="u87" gradientUnits="userSpaceOnUse" x1="1630.3" y1="610.6" x2="1505.4" y2="484.8"><stop offset=".00" stop-color="#fff"/><stop offset=".07" stop-color="#e6ffea"/><stop offset=".17" stop-color="#c5ffcf"/><stop offset=".32" stop-color="#9fa"/><stop offset=".50" stop-color="#6bff84"/><stop offset=".72" stop-color="#3aff5c"/><stop offset="1" stop-color="#01ff31"/></linearGradient>
<linearGradient id="u88" gradientUnits="userSpaceOnUse" x1="1630.3" y1="610.6" x2="1506" y2="490"><stop offset=".00" stop-color="#fff"/><stop offset=".07" stop-color="#e6ffeb"/><stop offset=".17" stop-color="#c6ffd0"/><stop offset=".32" stop-color="#9affad"/><stop offset=".50" stop-color="#6cff88"/><stop offset=".72" stop-color="#3aff61"/><stop offset="1" stop-color="#01ff37"/></linearGradient>
<linearGradient id="u89" gradientUnits="userSpaceOnUse" x1="1630.3" y1="610.6" x2="1506.7" y2="495"><stop offset=".00" stop-color="#fff"/><stop offset=".07" stop-color="#e6ffeb"/><stop offset=".17" stop-color="#c6ffd2"/><stop offset=".32" stop-color="#9affaf"/><stop offset=".50" stop-color="#6cff8b"/><stop offset=".72" stop-color="#3bff65"/><stop offset="1" stop-color="#01ff3d"/></linearGradient>
<linearGradient id="u90" gradientUnits="userSpaceOnUse" x1="1630.3" y1="610.6" x2="1507.3" y2="499.9"><stop offset=".00" stop-color="#fff"/><stop offset=".07" stop-color="#e7ffec"/><stop offset=".17" stop-color="#c6ffd3"/><stop offset=".32" stop-color="#9bffb2"/><stop offset=".50" stop-color="#6dff8f"/><stop offset=".72" stop-color="#3bff6a"/><stop offset="1" stop-color="#01ff43"/></linearGradient>
<linearGradient id="u91" gradientUnits="userSpaceOnUse" x1="1630.3" y1="610.6" x2="1507.9" y2="504.9"><stop offset=".00" stop-color="#fff"/><stop offset=".07" stop-color="#e7ffed"/><stop offset=".17" stop-color="#c7ffd5"/><stop offset=".32" stop-color="#9bffb5"/><stop offset=".50" stop-color="#6dff93"/><stop offset=".72" stop-color="#3bff6f"/><stop offset="1" stop-color="#01ff49"/></linearGradient>
<linearGradient id="u92" gradientUnits="userSpaceOnUse" x1="1630.3" y1="610.6" x2="1508.6" y2="509.9"><stop offset=".00" stop-color="#fff"/><stop offset=".07" stop-color="#e7ffee"/><stop offset=".17" stop-color="#c7ffd6"/><stop offset=".32" stop-color="#9cffb7"/><stop offset=".50" stop-color="#6eff97"/><stop offset=".72" stop-color="#3cff74"/><stop offset="1" stop-color="#01ff4f"/></linearGradient>
<linearGradient id="u93" gradientUnits="userSpaceOnUse" x1="1630.3" y1="610.6" x2="1509.2" y2="514.8"><stop offset=".00" stop-color="#fff"/><stop offset=".07" stop-color="#e7ffee"/><stop offset=".17" stop-color="#c7ffd8"/><stop offset=".32" stop-color="#9cffba"/><stop offset=".50" stop-color="#6eff9b"/><stop offset=".72" stop-color="#3cff79"/><stop offset="1" stop-color="#01ff55"/></linearGradient>
<linearGradient id="u94" gradientUnits="userSpaceOnUse" x1="1630.3" y1="610.6" x2="1509.8" y2="519.8"><stop offset=".00" stop-color="#fff"/><stop offset=".07" stop-color="#e7ffef"/><stop offset=".17" stop-color="#c8ffda"/><stop offset=".32" stop-color="#9dffbd"/><stop offset=".50" stop-color="#6fff9e"/><stop offset=".72" stop-color="#3cff7e"/><stop offset="1" stop-color="#01ff5c"/></linearGradient>
<linearGradient id="u95" gradientUnits="userSpaceOnUse" x1="1630.3" y1="610.6" x2="1510.5" y2="524.7"><stop offset=".00" stop-color="#fff"/><stop offset=".07" stop-color="#e7fff0"/><stop offset=".17" stop-color="#c8ffdb"/><stop offset=".32" stop-color="#9dffc0"/><stop offset=".50" stop-color="#6fffa2"/><stop offset=".72" stop-color="#3dff83"/><stop offset="1" stop-color="#01ff62"/></linearGradient>
<linearGradient id="u96" gradientUnits="userSpaceOnUse" x1="1630.3" y1="610.6" x2="1511.1" y2="529.7"><stop offset=".00" stop-color="#fff"/><stop offset=".07" stop-color="#e8fff0"/><stop offset=".17" stop-color="#c8ffdd"/><stop offset=".32" stop-color="#9effc2"/><stop offset=".50" stop-color="#70ffa6"/><stop offset=".72" stop-color="#3dff88"/><stop offset="1" stop-color="#01ff68"/></linearGradient>
<linearGradient id="u97" gradientUnits="userSpaceOnUse" x1="1630.3" y1="610.6" x2="1511.7" y2="534.7"><stop offset=".00" stop-color="#fff"/><stop offset=".07" stop-color="#e8fff1"/><stop offset=".17" stop-color="#c9ffde"/><stop offset=".32" stop-color="#9effc5"/><stop offset=".50" stop-color="#70ffaa"/><stop offset=".72" stop-color="#3dff8d"/><stop offset="1" stop-color="#01ff6f"/></linearGradient>
<linearGradient id="u98" gradientUnits="userSpaceOnUse" x1="1630.3" y1="610.6" x2="1512.4" y2="539.6"><stop offset=".00" stop-color="#fff"/><stop offset=".07" stop-color="#e8fff2"/><stop offset=".17" stop-color="#c9ffe0"/><stop offset=".32" stop-color="#9fffc8"/><stop offset=".50" stop-color="#71ffae"/><stop offset=".72" stop-color="#3eff93"/><stop offset="1" stop-color="#01ff75"/></linearGradient>
<linearGradient id="u99" gradientUnits="userSpaceOnUse" x1="1630.3" y1="610.6" x2="1513" y2="544.6"><stop offset=".00" stop-color="#fff"/><stop offset=".07" stop-color="#e8fff2"/><stop offset=".17" stop-color="#c9ffe2"/><stop offset=".32" stop-color="#9fffcb"/><stop offset=".50" stop-color="#71ffb2"/><stop offset=".72" stop-color="#3eff98"/><stop offset="1" stop-color="#01ff7c"/></linearGradient>
<linearGradient id="u100" gradientUnits="userSpaceOnUse" x1="1630.3" y1="610.6" x2="1513.6" y2="549.5"><stop offset=".00" stop-color="#fff"/><stop offset=".07" stop-color="#e8fff3"/><stop offset=".17" stop-color="#caffe3"/><stop offset=".32" stop-color="#a0ffcd"/><stop offset=".50" stop-color="#72ffb6"/><stop offset=".72" stop-color="#3fff9d"/><stop offset="1" stop-color="#01ff82"/></linearGradient>
<linearGradient id="u101" gradientUnits="userSpaceOnUse" x1="1630.3" y1="610.6" x2="1514.2" y2="554.2"><stop offset=".00" stop-color="#fff"/><stop offset=".07" stop-color="#e8fff4"/><stop offset=".17" stop-color="#caffe5"/><stop offset=".32" stop-color="#a0ffd0"/><stop offset=".50" stop-color="#72ffba"/><stop offset=".72" stop-color="#3fffa2"/><stop offset="1" stop-color="#01ff88"/></linearGradient>
<linearGradient id="u102" gradientUnits="userSpaceOnUse" x1="1630.3" y1="610.6" x2="1514.8" y2="558.7"><stop offset=".00" stop-color="#fff"/><stop offset=".07" stop-color="#e9fff4"/><stop offset=".17" stop-color="#caffe6"/><stop offset=".32" stop-color="#a0ffd3"/><stop offset=".50" stop-color="#72ffbe"/><stop offset=".72" stop-color="#3fffa7"/><stop offset="1" stop-color="#02ff8f"/></linearGradient>
<linearGradient id="u103" gradientUnits="userSpaceOnUse" x1="1630.3" y1="610.6" x2="1515.4" y2="563.2"><stop offset=".00" stop-color="#fff"/><stop offset=".07" stop-color="#e9fff5"/><stop offset=".17" stop-color="#cbffe8"/><stop offset=".32" stop-color="#a1ffd5"/><stop offset=".50" stop-color="#73ffc1"/><stop offset=".72" stop-color="#40ffac"/><stop offset="1" stop-color="#02ff95"/></linearGradient>
<linearGradient id="u104" gradientUnits="userSpaceOnUse" x1="1630.3" y1="610.6" x2="1515.9" y2="567.6"><stop offset=".00" stop-color="#fff"/><stop offset=".07" stop-color="#e9fff6"/><stop offset=".17" stop-color="#cbffe9"/><stop offset=".32" stop-color="#a1ffd8"/><stop offset=".50" stop-color="#73ffc5"/><stop offset=".72" stop-color="#40ffb1"/><stop offset="1" stop-color="#02ff9b"/></linearGradient>
<linearGradient id="u105" gradientUnits="userSpaceOnUse" x1="1630.3" y1="610.6" x2="1516.5" y2="572.1"><stop offset=".00" stop-color="#fff"/><stop offset=".07" stop-color="#e9fff6"/><stop offset=".17" stop-color="#cbffeb"/><stop offset=".32" stop-color="#a2ffda"/><stop offset=".50" stop-color="#74ffc9"/><stop offset=".72" stop-color="#40ffb6"/><stop offset="1" stop-color="#02ffa1"/></linearGradient>
<linearGradient id="u106" gradientUnits="userSpaceOnUse" x1="1630.3" y1="610.6" x2="1517.1" y2="576.6"><stop offset=".00" stop-color="#fff"/><stop offset=".07" stop-color="#e9fff7"/><stop offset=".17" stop-color="#ccffec"/><stop offset=".32" stop-color="#a2ffdd"/><stop offset=".50" stop-color="#74ffcd"/><stop offset=".72" stop-color="#41ffbb"/><stop offset="1" stop-color="#02ffa8"/></linearGradient>
<linearGradient id="u107" gradientUnits="userSpaceOnUse" x1="1630.3" y1="610.6" x2="1517.7" y2="581"><stop offset=".00" stop-color="#fff"/><stop offset=".07" stop-color="#e9fff8"/><stop offset=".17" stop-color="#cfe"/><stop offset=".32" stop-color="#a3ffe0"/><stop offset=".50" stop-color="#75ffd1"/><stop offset=".72" stop-color="#41ffc0"/><stop offset="1" stop-color="#02ffae"/></linearGradient>
<linearGradient id="u108" gradientUnits="userSpaceOnUse" x1="1630.3" y1="610.6" x2="1518.2" y2="585.5"><stop offset=".00" stop-color="#fff"/><stop offset=".07" stop-color="#e9fff8"/><stop offset=".17" stop-color="#ccffef"/><stop offset=".32" stop-color="#a3ffe2"/><stop offset=".50" stop-color="#75ffd4"/><stop offset=".72" stop-color="#41ffc5"/><stop offset="1" stop-color="#02ffb5"/></linearGradient>
<linearGradient id="u109" gradientUnits="userSpaceOnUse" x1="1630.3" y1="610.6" x2="1518.8" y2="589.9"><stop offset=".00" stop-color="#fff"/><stop offset=".07" stop-color="#eafff9"/><stop offset=".17" stop-color="#cdfff1"/><stop offset=".32" stop-color="#a4ffe5"/><stop offset=".50" stop-color="#76ffd8"/><stop offset=".72" stop-color="#42ffca"/><stop offset="1" stop-color="#02ffbb"/></linearGradient>
<linearGradient id="u110" gradientUnits="userSpaceOnUse" x1="1630.3" y1="610.6" x2="1519.4" y2="594.4"><stop offset=".00" stop-color="#fff"/><stop offset=".07" stop-color="#eafff9"/><stop offset=".17" stop-color="#cdfff2"/><stop offset=".32" stop-color="#a4ffe8"/><stop offset=".50" stop-color="#76ffdc"/><stop offset=".72" stop-color="#42ffd0"/><stop offset="1" stop-color="#02ffc2"/></linearGradient>
<linearGradient id="u111" gradientUnits="userSpaceOnUse" x1="1630.3" y1="610.6" x2="1519.9" y2="598.6"><stop offset=".00" stop-color="#fff"/><stop offset=".07" stop-color="#eafffa"/><stop offset=".17" stop-color="#cdfff3"/><stop offset=".32" stop-color="#a4ffea"/><stop offset=".50" stop-color="#77ffe0"/><stop offset=".72" stop-color="#42ffd5"/><stop offset="1" stop-color="#02ffc8"/></linearGradient>
<linearGradient id="u112" gradientUnits="userSpaceOnUse" x1="1630.3" y1="610.6" x2="1520.4" y2="602.6"><stop offset=".00" stop-color="#fff"/><stop offset=".07" stop-color="#eafffb"/><stop offset=".17" stop-color="#cdfff5"/><stop offset=".32" stop-color="#a5ffec"/><stop offset=".50" stop-color="#77ffe3"/><stop offset=".72" stop-color="#43ffd9"/><stop offset="1" stop-color="#02ffce"/></linearGradient>
<linearGradient id="u113" gradientUnits="userSpaceOnUse" x1="1630.3" y1="610.6" x2="1520.9" y2="606.6"><stop offset=".00" stop-color="#fff"/><stop offset=".07" stop-color="#eafffb"/><stop offset=".17" stop-color="#cefff6"/><stop offset=".32" stop-color="#a5ffef"/><stop offset=".50" stop-color="#78ffe7"/><stop offset=".72" stop-color="#43ffde"/><stop offset="1" stop-color="#02ffd4"/></linearGradient>
<linearGradient id="u114" gradientUnits="userSpaceOnUse" x1="1630.3" y1="610.6" x2="1521.4" y2="610.5"><stop offset=".00" stop-color="#fff"/><stop offset=".07" stop-color="#eafffc"/><stop offset=".17" stop-color="#cefff7"/><stop offset=".32" stop-color="#a6fff1"/><stop offset=".50" stop-color="#78ffea"/><stop offset=".72" stop-color="#43ffe3"/><stop offset="1" stop-color="#02ffdb"/></linearGradient>
<linearGradient id="u115" gradientUnits="userSpaceOnUse" x1="1630.3" y1="610.6" x2="1521.9" y2="614.5"><stop offset=".00" stop-color="#fff"/><stop offset=".07" stop-color="#ebfffc"/><stop offset=".17" stop-color="#cefff9"/><stop offset=".32" stop-color="#a6fff4"/><stop offset=".50" stop-color="#79ffee"/><stop offset=".72" stop-color="#44ffe8"/><stop offset="1" stop-color="#02ffe1"/></linearGradient>
<linearGradient id="u116" gradientUnits="userSpaceOnUse" x1="1630.3" y1="610.6" x2="1522.4" y2="618.5"><stop offset=".00" stop-color="#fff"/><stop offset=".07" stop-color="#ebfffd"/><stop offset=".17" stop-color="#cffffa"/><stop offset=".32" stop-color="#a7fff6"/><stop offset=".50" stop-color="#79fff2"/><stop offset=".72" stop-color="#44ffed"/><stop offset="1" stop-color="#02ffe7"/></linearGradient>
<linearGradient id="u117" gradientUnits="userSpaceOnUse" x1="1630.3" y1="610.6" x2="1522.9" y2="622.4"><stop offset=".00" stop-color="#fff"/><stop offset=".07" stop-color="#ebfffd"/><stop offset=".17" stop-color="#cffffb"/><stop offset=".32" stop-color="#a7fff9"/><stop offset=".50" stop-color="#79fff5"/><stop offset=".72" stop-color="#45fff2"/><stop offset="1" stop-color="#02ffee"/></linearGradient>
<linearGradient id="u118" gradientUnits="userSpaceOnUse" x1="1630.3" y1="610.6" x2="1523.5" y2="626.4"><stop offset=".00" stop-color="#fff"/><stop offset=".07" stop-color="#ebfffe"/><stop offset=".17" stop-color="#cffffd"/><stop offset=".32" stop-color="#a7fffb"/><stop offset=".50" stop-color="#7afff9"/><stop offset=".72" stop-color="#45fff7"/><stop offset="1" stop-color="#02fff4"/></linearGradient>
<linearGradient id="u119" gradientUnits="userSpaceOnUse" x1="1630.3" y1="610.6" x2="1524" y2="630.4"><stop offset=".00" stop-color="#fff"/><stop offset=".07" stop-color="#ebffff"/><stop offset=".17" stop-color="#cffffe"/><stop offset=".32" stop-color="#a8fffd"/><stop offset=".50" stop-color="#7afffd"/><stop offset=".72" stop-color="#45fffc"/><stop offset="1" stop-color="#02fffb"/></linearGradient>
<linearGradient id="u120" gradientUnits="userSpaceOnUse" x1="1630.3" y1="610.6" x2="1524.5" y2="634.6"><stop offset=".00" stop-color="#fff"/><stop offset=".07" stop-color="#ebffff"/><stop offset=".17" stop-color="#cffeff"/><stop offset=".32" stop-color="#a8feff"/><stop offset=".50" stop-color="#7afdff"/><stop offset=".72" stop-color="#45fdff"/><stop offset="1" stop-color="#02fcff"/></linearGradient>
<linearGradient id="u121" gradientUnits="userSpaceOnUse" x1="1630.3" y1="610.6" x2="1525" y2="638.8"><stop offset=".00" stop-color="#fff"/><stop offset=".07" stop-color="#ebfeff"/><stop offset=".17" stop-color="#cefdff"/><stop offset=".32" stop-color="#a6fbff"/><stop offset=".50" stop-color="#79faff"/><stop offset=".72" stop-color="#44f8ff"/><stop offset="1" stop-color="#02f5ff"/></linearGradient>
<linearGradient id="u122" gradientUnits="userSpaceOnUse" x1="1630.3" y1="610.6" x2="1525.5" y2="642.8"><stop offset=".00" stop-color="#fff"/><stop offset=".07" stop-color="#eafeff"/><stop offset=".17" stop-color="#cefcff"/><stop offset=".32" stop-color="#a5f9ff"/><stop offset=".50" stop-color="#78f6ff"/><stop offset=".72" stop-color="#43f3ff"/><stop offset="1" stop-color="#02efff"/></linearGradient>
<linearGradient id="u123" gradientUnits="userSpaceOnUse" x1="1630.3" y1="610.6" x2="1526.1" y2="647"><stop offset=".00" stop-color="#fff"/><stop offset=".07" stop-color="#eafdff"/><stop offset=".17" stop-color="#cdfaff"/><stop offset=".32" stop-color="#a4f6ff"/><stop offset=".50" stop-color="#76f2ff"/><stop offset=".72" stop-color="#42eeff"/><stop offset="1" stop-color="#02e9ff"/></linearGradient>
<linearGradient id="u124" gradientUnits="userSpaceOnUse" x1="1630.3" y1="610.6" x2="1526.7" y2="651.4"><stop offset=".00" stop-color="#fff"/><stop offset=".07" stop-color="#e9fcff"/><stop offset=".17" stop-color="#ccf9ff"/><stop offset=".32" stop-color="#a3f4ff"/><stop offset=".50" stop-color="#75eeff"/><stop offset=".72" stop-color="#41e9ff"/><stop offset="1" stop-color="#02e2ff"/></linearGradient>
<linearGradient id="u125" gradientUnits="userSpaceOnUse" x1="1630.3" y1="610.6" x2="1527.2" y2="655.9"><stop offset=".00" stop-color="#fff"/><stop offset=".07" stop-color="#e9fcff"/><stop offset=".17" stop-color="#cbf7ff"/><stop offset=".32" stop-color="#a1f1ff"/><stop offset=".50" stop-color="#74ebff"/><stop offset=".72" stop-color="#40e4ff"/><stop offset="1" stop-color="#02dcff"/></linearGradient>
<linearGradient id="u126" gradientUnits="userSpaceOnUse" x1="1630.3" y1="610.6" x2="1527.8" y2="660.6"><stop offset=".00" stop-color="#fff"/><stop offset=".07" stop-color="#e8fbff"/><stop offset=".17" stop-color="#caf6ff"/><stop offset=".32" stop-color="#a0efff"/><stop offset=".50" stop-color="#72e7ff"/><stop offset=".72" stop-color="#3fdfff"/><stop offset="1" stop-color="#01d6ff"/></linearGradient>
<linearGradient id="u127" gradientUnits="userSpaceOnUse" x1="1630.3" y1="610.6" x2="1528.5" y2="665.6"><stop offset=".00" stop-color="#fff"/><stop offset=".07" stop-color="#e8faff"/><stop offset=".17" stop-color="#c9f4ff"/><stop offset=".32" stop-color="#9fecff"/><stop offset=".50" stop-color="#71e3ff"/><stop offset=".72" stop-color="#3edaff"/><stop offset="1" stop-color="#01d0ff"/></linearGradient>
<linearGradient id="u128" gradientUnits="userSpaceOnUse" x1="1630.3" y1="610.6" x2="1529.1" y2="670.8"><stop offset=".00" stop-color="#fff"/><stop offset=".07" stop-color="#e8faff"/><stop offset=".17" stop-color="#c8f3ff"/><stop offset=".32" stop-color="#9de9ff"/><stop offset=".50" stop-color="#6fdfff"/><stop offset=".72" stop-color="#3dd4ff"/><stop offset="1" stop-color="#01c9ff"/></linearGradient>
<linearGradient id="u129" gradientUnits="userSpaceOnUse" x1="1630.3" y1="610.6" x2="1529.8" y2="676.2"><stop offset=".00" stop-color="#fff"/><stop offset=".07" stop-color="#e7f9ff"/><stop offset=".17" stop-color="#c7f1ff"/><stop offset=".32" stop-color="#9ce6ff"/><stop offset=".50" stop-color="#6edbff"/><stop offset=".72" stop-color="#3ccfff"/><stop offset="1" stop-color="#01c3ff"/></linearGradient>
<linearGradient id="u130" gradientUnits="userSpaceOnUse" x1="1630.3" y1="610.6" x2="1530.6" y2="681.9"><stop offset=".00" stop-color="#fff"/><stop offset=".07" stop-color="#e6f8ff"/><stop offset=".17" stop-color="#c6efff"/><stop offset=".32" stop-color="#9be3ff"/><stop offset=".50" stop-color="#6cd7ff"/><stop offset=".72" stop-color="#3bcaff"/><stop offset="1" stop-color="#01bcff"/></linearGradient>
<linearGradient id="u131" gradientUnits="userSpaceOnUse" x1="1630.3" y1="610.6" x2="1531.3" y2="687.9"><stop offset=".00" stop-color="#fff"/><stop offset=".07" stop-color="#e6f7ff"/><stop offset=".17" stop-color="#c5edff"/><stop offset=".32" stop-color="#99e0ff"/><stop offset=".50" stop-color="#6bd2ff"/><stop offset=".72" stop-color="#3ac4ff"/><stop offset="1" stop-color="#01b6ff"/></linearGradient>
<linearGradient id="u132" gradientUnits="userSpaceOnUse" x1="1630.3" y1="610.6" x2="1532.1" y2="694.1"><stop offset=".00" stop-color="#fff"/><stop offset=".07" stop-color="#e5f6ff"/><stop offset=".17" stop-color="#c4ebff"/><stop offset=".32" stop-color="#98ddff"/><stop offset=".50" stop-color="#69ceff"/><stop offset=".72" stop-color="#39bfff"/><stop offset="1" stop-color="#01b0ff"/></linearGradient>
<linearGradient id="u133" gradientUnits="userSpaceOnUse" x1="1630.3" y1="610.6" x2="1532.9" y2="700.5"><stop offset=".00" stop-color="#fff"/><stop offset=".07" stop-color="#e5f6ff"/><stop offset=".17" stop-color="#c3e9ff"/><stop offset=".32" stop-color="#96daff"/><stop offset=".50" stop-color="#68caff"/><stop offset=".72" stop-color="#38baff"/><stop offset="1" stop-color="#01aaff"/></linearGradient>
<linearGradient id="u134" gradientUnits="userSpaceOnUse" x1="1630.3" y1="610.6" x2="1533.8" y2="707.2"><stop offset=".00" stop-color="#fff"/><stop offset=".07" stop-color="#e4f5ff"/><stop offset=".17" stop-color="#c2e7ff"/><stop offset=".32" stop-color="#94d6ff"/><stop offset=".50" stop-color="#66c5ff"/><stop offset=".72" stop-color="#37b4ff"/><stop offset="1" stop-color="#01a3ff"/></linearGradient>
<linearGradient id="u135" gradientUnits="userSpaceOnUse" x1="1630.3" y1="610.6" x2="1534.7" y2="714.4"><stop offset=".00" stop-color="#fff"/><stop offset=".07" stop-color="#e3f4ff"/><stop offset=".17" stop-color="#c0e5ff"/><stop offset=".32" stop-color="#93d3ff"/><stop offset=".50" stop-color="#65c1ff"/><stop offset=".72" stop-color="#36afff"/><stop offset="1" stop-color="#019dff"/></linearGradient>
<linearGradient id="u136" gradientUnits="userSpaceOnUse" x1="1630.3" y1="610.6" x2="1535.7" y2="721.9"><stop offset=".00" stop-color="#fff"/><stop offset=".07" stop-color="#e3f3ff"/><stop offset=".17" stop-color="#bfe3ff"/><stop offset=".32" stop-color="#91cfff"/><stop offset=".50" stop-color="#63bcff"/><stop offset=".72" stop-color="#34a9ff"/><stop offset="1" stop-color="#0197ff"/></linearGradient>
<linearGradient id="u137" gradientUnits="userSpaceOnUse" x1="1630.3" y1="610.6" x2="1536.6" y2="729.5"><stop offset=".00" stop-color="#fff"/><stop offset=".07" stop-color="#e2f2ff"/><stop offset=".17" stop-color="#bee1ff"/><stop offset=".32" stop-color="#8fccff"/><stop offset=".50" stop-color="#62b8ff"/><stop offset=".72" stop-color="#33a4ff"/><stop offset="1" stop-color="#0191ff"/></linearGradient>
<linearGradient id="u138" gradientUnits="userSpaceOnUse" x1="1630.3" y1="610.6" x2="1537.7" y2="737.7"><stop offset=".00" stop-color="#fff"/><stop offset=".07" stop-color="#e1f1ff"/><stop offset=".17" stop-color="#bcdfff"/><stop offset=".32" stop-color="#8ec8ff"/><stop offset=".50" stop-color="#60b3ff"/><stop offset=".72" stop-color="#329eff"/><stop offset="1" stop-color="#018bff"/></linearGradient>
<linearGradient id="u139" gradientUnits="userSpaceOnUse" x1="1630.3" y1="610.6" x2="1538.8" y2="746.4"><stop offset=".00" stop-color="#fff"/><stop offset=".07" stop-color="#e1efff"/><stop offset=".17" stop-color="#bbdcff"/><stop offset=".32" stop-color="#8cc5ff"/><stop offset=".50" stop-color="#5eaeff"/><stop offset=".72" stop-color="#3199ff"/><stop offset="1" stop-color="#0184ff"/></linearGradient>
<linearGradient id="u140" gradientUnits="userSpaceOnUse" x1="1630.3" y1="610.6" x2="1540" y2="755.6"><stop offset=".00" stop-color="#fff"/><stop offset=".07" stop-color="#e0eeff"/><stop offset=".17" stop-color="#b9daff"/><stop offset=".32" stop-color="#8ac1ff"/><stop offset=".50" stop-color="#5ca9ff"/><stop offset=".72" stop-color="#3093ff"/><stop offset="1" stop-color="#017eff"/></linearGradient>
<linearGradient id="u141" gradientUnits="userSpaceOnUse" x1="1630.3" y1="610.6" x2="1541.2" y2="765.3"><stop offset=".00" stop-color="#fff"/><stop offset=".07" stop-color="#dfedff"/><stop offset=".17" stop-color="#b8d7ff"/><stop offset=".32" stop-color="#88bdff"/><stop offset=".50" stop-color="#5ba4ff"/><stop offset=".72" stop-color="#2f8dff"/><stop offset="1" stop-color="#0178ff"/></linearGradient>
<linearGradient id="u142" gradientUnits="userSpaceOnUse" x1="1630.3" y1="610.6" x2="1542.5" y2="775.4"><stop offset=".00" stop-color="#fff"/><stop offset=".07" stop-color="#deecff"/><stop offset=".17" stop-color="#b6d4ff"/><stop offset=".32" stop-color="#86b9ff"/><stop offset=".50" stop-color="#599fff"/><stop offset=".72" stop-color="#2e88ff"/><stop offset="1" stop-color="#0172ff"/></linearGradient>
<linearGradient id="u143" gradientUnits="userSpaceOnUse" x1="1630.3" y1="610.6" x2="1543.9" y2="786.1"><stop offset=".00" stop-color="#fff"/><stop offset=".07" stop-color="#ddeaff"/><stop offset=".17" stop-color="#b5d2ff"/><stop offset=".32" stop-color="#84b5ff"/><stop offset=".50" stop-color="#579aff"/><stop offset=".72" stop-color="#2d82ff"/><stop offset="1" stop-color="#016cff"/></linearGradient>
<linearGradient id="u144" gradientUnits="userSpaceOnUse" x1="1630.3" y1="610.6" x2="1545.3" y2="797.5"><stop offset=".00" stop-color="#fff"/><stop offset=".07" stop-color="#dce9ff"/><stop offset=".17" stop-color="#b3cfff"/><stop offset=".32" stop-color="#82b0ff"/><stop offset=".50" stop-color="#5595ff"/><stop offset=".72" stop-color="#2c7cff"/><stop offset="1" stop-color="#0165ff"/></linearGradient>
<linearGradient id="u145" gradientUnits="userSpaceOnUse" x1="1630.3" y1="610.6" x2="1546.9" y2="809.6"><stop offset=".00" stop-color="#fff"/><stop offset=".07" stop-color="#dbe7ff"/><stop offset=".17" stop-color="#b1ccff"/><stop offset=".32" stop-color="#80acff"/><stop offset=".50" stop-color="#5490ff"/><stop offset=".72" stop-color="#2a76ff"/><stop offset="1" stop-color="#015fff"/></linearGradient>
<linearGradient id="u146" gradientUnits="userSpaceOnUse" x1="1630.3" y1="610.6" x2="1548.5" y2="822.5"><stop offset=".00" stop-color="#fff"/><stop offset=".07" stop-color="#dae6ff"/><stop offset=".17" stop-color="#afc9ff"/><stop offset=".32" stop-color="#7ea7ff"/><stop offset=".50" stop-color="#528aff"/><stop offset=".72" stop-color="#2970ff"/><stop offset="1" stop-color="#0159ff"/></linearGradient>
<linearGradient id="u147" gradientUnits="userSpaceOnUse" x1="1630.3" y1="610.6" x2="1550.3" y2="836.2"><stop offset=".00" stop-color="#fff"/><stop offset=".07" stop-color="#d9e4ff"/><stop offset=".17" stop-color="#adc5ff"/><stop offset=".32" stop-color="#7ca3ff"/><stop offset=".50" stop-color="#5085ff"/><stop offset=".72" stop-color="#286bff"/><stop offset="1" stop-color="#0153ff"/></linearGradient>
<linearGradient id="u148" gradientUnits="userSpaceOnUse" x1="1630.3" y1="610.6" x2="1552.1" y2="850.5"><stop offset=".00" stop-color="#fff"/><stop offset=".07" stop-color="#d8e2ff"/><stop offset=".17" stop-color="#abc2ff"/><stop offset=".32" stop-color="#799eff"/><stop offset=".50" stop-color="#4e7fff"/><stop offset=".72" stop-color="#2765ff"/><stop offset="1" stop-color="#014dff"/></linearGradient>
<linearGradient id="u149" gradientUnits="userSpaceOnUse" x1="1630.3" y1="610.6" x2="1554.1" y2="865.9"><stop offset=".00" stop-color="#fff"/><stop offset=".07" stop-color="#d6e0ff"/><stop offset=".17" stop-color="#a9beff"/><stop offset=".32" stop-color="#79f"/><stop offset=".50" stop-color="#4c7aff"/><stop offset=".72" stop-color="#265fff"/><stop offset="1" stop-color="#0147ff"/></linearGradient>
<linearGradient id="u150" gradientUnits="userSpaceOnUse" x1="1630.3" y1="610.6" x2="1556.2" y2="882.5"><stop offset=".00" stop-color="#fff"/><stop offset=".07" stop-color="#d5deff"/><stop offset=".17" stop-color="#a7bbff"/><stop offset=".32" stop-color="#7594ff"/><stop offset=".50" stop-color="#4a74ff"/><stop offset=".72" stop-color="#2559ff"/><stop offset="1" stop-color="#0141ff"/></linearGradient>
<linearGradient id="u151" gradientUnits="userSpaceOnUse" x1="1630.3" y1="610.6" x2="1558.5" y2="900.4"><stop offset=".00" stop-color="#fff"/><stop offset=".07" stop-color="#d4dcff"/><stop offset=".17" stop-color="#a5b7ff"/><stop offset=".32" stop-color="#728fff"/><stop offset=".50" stop-color="#486eff"/><stop offset=".72" stop-color="#2353ff"/><stop offset="1" stop-color="#013bff"/></linearGradient>
<linearGradient id="u152" gradientUnits="userSpaceOnUse" x1="1630.3" y1="610.6" x2="1560.9" y2="919.5"><stop offset=".00" stop-color="#fff"/><stop offset=".07" stop-color="#d2daff"/><stop offset=".17" stop-color="#a2b3ff"/><stop offset=".32" stop-color="#708aff"/><stop offset=".50" stop-color="#4668ff"/><stop offset=".72" stop-color="#224dff"/><stop offset="1" stop-color="#0135ff"/></linearGradient>
<linearGradient id="u153" gradientUnits="userSpaceOnUse" x1="1630.3" y1="610.6" x2="1563.5" y2="940.1"><stop offset=".00" stop-color="#fff"/><stop offset=".07" stop-color="#d1d8ff"/><stop offset=".17" stop-color="#a0afff"/><stop offset=".32" stop-color="#6d84ff"/><stop offset=".50" stop-color="#4462ff"/><stop offset=".72" stop-color="#2146ff"/><stop offset="1" stop-color="#012fff"/></linearGradient>
<linearGradient id="u154" gradientUnits="userSpaceOnUse" x1="1630.3" y1="610.6" x2="1566.4" y2="962.1"><stop offset=".00" stop-color="#fff"/><stop offset=".07" stop-color="#cfd5ff"/><stop offset=".17" stop-color="#9daaff"/><stop offset=".32" stop-color="#6b7fff"/><stop offset=".50" stop-color="#425cff"/><stop offset=".72" stop-color="#2040ff"/><stop offset="1" stop-color="#0129ff"/></linearGradient>
<linearGradient id="u155" gradientUnits="userSpaceOnUse" x1="1630.3" y1="610.6" x2="1569.4" y2="985.7"><stop offset=".00" stop-color="#fff"/><stop offset=".07" stop-color="#cdd3ff"/><stop offset=".17" stop-color="#9ba6ff"/><stop offset=".32" stop-color="#6879ff"/><stop offset=".50" stop-color="#4056ff"/><stop offset=".72" stop-color="#1f3aff"/><stop offset="1" stop-color="#0123ff"/></linearGradient>
<linearGradient id="u156" gradientUnits="userSpaceOnUse" x1="1630.3" y1="610.6" x2="1572.5" y2="1010"><stop offset=".00" stop-color="#fff"/><stop offset=".07" stop-color="#cbd0ff"/><stop offset=".17" stop-color="#98a2ff"/><stop offset=".32" stop-color="#6574ff"/><stop offset=".50" stop-color="#3e51ff"/><stop offset=".72" stop-color="#1e34ff"/><stop offset="1" stop-color="#011dff"/></linearGradient>
<linearGradient id="u157" gradientUnits="userSpaceOnUse" x1="1630.3" y1="610.6" x2="1575.6" y2="1034.3"><stop offset=".00" stop-color="#fff"/><stop offset=".07" stop-color="#caceff"/><stop offset=".17" stop-color="#959dff"/><stop offset=".32" stop-color="#636eff"/><stop offset=".50" stop-color="#3c4bff"/><stop offset=".72" stop-color="#1d2fff"/><stop offset="1" stop-color="#0117ff"/></linearGradient>
<linearGradient id="u158" gradientUnits="userSpaceOnUse" x1="1630.3" y1="610.6" x2="1578.7" y2="1058.6"><stop offset=".00" stop-color="#fff"/><stop offset=".07" stop-color="#c8cbff"/><stop offset=".17" stop-color="#9399ff"/><stop offset=".32" stop-color="#6069ff"/><stop offset=".50" stop-color="#3a46ff"/><stop offset=".72" stop-color="#1c2aff"/><stop offset="1" stop-color="#0112ff"/></linearGradient>
<linearGradient id="u159" gradientUnits="userSpaceOnUse" x1="1630.3" y1="610.6" x2="1581.8" y2="1082.9"><stop offset=".00" stop-color="#fff"/><stop offset=".07" stop-color="#c6c9ff"/><stop offset=".17" stop-color="#9195ff"/><stop offset=".32" stop-color="#5e65ff"/><stop offset=".50" stop-color="#3941ff"/><stop offset=".72" stop-color="#1b25ff"/><stop offset="1" stop-color="#010dff"/></linearGradient>
<linearGradient id="u160" gradientUnits="userSpaceOnUse" x1="1630.3" y1="610.6" x2="1584.9" y2="1107.2"><stop offset=".00" stop-color="#fff"/><stop offset=".07" stop-color="#c5c6ff"/><stop offset=".17" stop-color="#8e91ff"/><stop offset=".32" stop-color="#5c60ff"/><stop offset=".50" stop-color="#373cff"/><stop offset=".72" stop-color="#1a20ff"/><stop offset="1" stop-color="#0109ff"/></linearGradient>
<linearGradient id="u161" gradientUnits="userSpaceOnUse" x1="1630.3" y1="610.6" x2="1588" y2="1131.5"><stop offset=".00" stop-color="#fff"/><stop offset=".07" stop-color="#c3c4ff"/><stop offset=".17" stop-color="#8c8dff"/><stop offset=".32" stop-color="#5a5cff"/><stop offset=".50" stop-color="#3638ff"/><stop offset=".72" stop-color="#191cff"/><stop offset="1" stop-color="#0104ff"/></linearGradient>
<linearGradient id="u162" gradientUnits="userSpaceOnUse" x1="1630.3" y1="610.6" x2="1590" y2="1146.9"><stop offset=".00" stop-color="#fff"/><stop offset=".07" stop-color="#c2c2ff"/><stop offset=".17" stop-color="#8b8bff"/><stop offset=".32" stop-color="#5959ff"/><stop offset=".50" stop-color="#3535ff"/><stop offset=".72" stop-color="#1919ff"/><stop offset="1" stop-color="#0001ff"/></linearGradient>
<linearGradient id="u163" gradientUnits="userSpaceOnUse" x1="1630.3" y1="610.6" x2="1594" y2="1145.3"><stop offset=".00" stop-color="#fff"/><stop offset=".07" stop-color="#c3c2ff"/><stop offset=".17" stop-color="#8c8bff"/><stop offset=".32" stop-color="#5b59ff"/><stop offset=".50" stop-color="#3735ff"/><stop offset=".72" stop-color="#1b19ff"/><stop offset="1" stop-color="#0401ff"/></linearGradient>
<linearGradient id="u164" gradientUnits="userSpaceOnUse" x1="1630.3" y1="610.6" x2="1601.7" y2="1135.4"><stop offset=".00" stop-color="#fff"/><stop offset=".07" stop-color="#c5c3ff"/><stop offset=".17" stop-color="#8f8cff"/><stop offset=".32" stop-color="#5f5aff"/><stop offset=".50" stop-color="#3b36ff"/><stop offset=".72" stop-color="#2019ff"/><stop offset="1" stop-color="#0a01ff"/></linearGradient>
<linearGradient id="u165" gradientUnits="userSpaceOnUse" x1="1630.3" y1="610.6" x2="1609.6" y2="1125.2"><stop offset=".00" stop-color="#fff"/><stop offset=".07" stop-color="#c6c4ff"/><stop offset=".17" stop-color="#928dff"/><stop offset=".32" stop-color="#635bff"/><stop offset=".50" stop-color="#4036ff"/><stop offset=".72" stop-color="#261aff"/><stop offset="1" stop-color="#1001ff"/></linearGradient>
<linearGradient id="u166" gradientUnits="userSpaceOnUse" x1="1630.3" y1="610.6" x2="1617.6" y2="1114.9"><stop offset=".00" stop-color="#fff"/><stop offset=".07" stop-color="#c8c5ff"/><stop offset=".17" stop-color="#968eff"/><stop offset=".32" stop-color="#675cff"/><stop offset=".50" stop-color="#4537ff"/><stop offset=".72" stop-color="#2b1aff"/><stop offset="1" stop-color="#1601ff"/></linearGradient>
<linearGradient id="u167" gradientUnits="userSpaceOnUse" x1="1630.3" y1="610.6" x2="1625.5" y2="1104.6"><stop offset=".00" stop-color="#fff"/><stop offset=".07" stop-color="#cac5ff"/><stop offset=".17" stop-color="#998fff"/><stop offset=".32" stop-color="#6c5dff"/><stop offset=".50" stop-color="#4a38ff"/><stop offset=".72" stop-color="#311aff"/><stop offset="1" stop-color="#1c01ff"/></linearGradient>
<linearGradient id="u168" gradientUnits="userSpaceOnUse" x1="1630.3" y1="610.6" x2="1633.5" y2="1094.3"><stop offset=".00" stop-color="#fff"/><stop offset=".07" stop-color="#ccc6ff"/><stop offset=".17" stop-color="#9c90ff"/><stop offset=".32" stop-color="#705eff"/><stop offset=".50" stop-color="#5038ff"/><stop offset=".72" stop-color="#361bff"/><stop offset="1" stop-color="#2201ff"/></linearGradient>
<linearGradient id="u169" gradientUnits="userSpaceOnUse" x1="1630.3" y1="610.6" x2="1641.3" y2="1084.2"><stop offset=".00" stop-color="#fff"/><stop offset=".07" stop-color="#cec7ff"/><stop offset=".17" stop-color="#a091ff"/><stop offset=".32" stop-color="#755fff"/><stop offset=".50" stop-color="#5539ff"/><stop offset=".72" stop-color="#3c1bff"/><stop offset="1" stop-color="#2801ff"/></linearGradient>
<linearGradient id="u170" gradientUnits="userSpaceOnUse" x1="1630.3" y1="610.6" x2="1648.9" y2="1074.3"><stop offset=".00" stop-color="#fff"/><stop offset=".07" stop-color="#d0c8ff"/><stop offset=".17" stop-color="#a392ff"/><stop offset=".32" stop-color="#7960ff"/><stop offset=".50" stop-color="#5a3aff"/><stop offset=".72" stop-color="#421cff"/><stop offset="1" stop-color="#2e01ff"/></linearGradient>
<linearGradient id="u171" gradientUnits="userSpaceOnUse" x1="1630.3" y1="610.6" x2="1656.4" y2="1064.7"><stop offset=".00" stop-color="#fff"/><stop offset=".07" stop-color="#d2c8ff"/><stop offset=".17" stop-color="#a793ff"/><stop offset=".32" stop-color="#7e61ff"/><stop offset=".50" stop-color="#5f3bff"/><stop offset=".72" stop-color="#481cff"/><stop offset="1" stop-color="#3501ff"/></linearGradient>
<linearGradient id="u172" gradientUnits="userSpaceOnUse" x1="1630.3" y1="610.6" x2="1663.8" y2="1055.2"><stop offset=".00" stop-color="#fff"/><stop offset=".07" stop-color="#d4c9ff"/><stop offset=".17" stop-color="#aa94ff"/><stop offset=".32" stop-color="#8262ff"/><stop offset=".50" stop-color="#653bff"/><stop offset=".72" stop-color="#4d1cff"/><stop offset="1" stop-color="#3b01ff"/></linearGradient>
<linearGradient id="u173" gradientUnits="userSpaceOnUse" x1="1630.3" y1="610.6" x2="1670.9" y2="1045.9"><stop offset=".00" stop-color="#fff"/><stop offset=".07" stop-color="#d6caff"/><stop offset=".17" stop-color="#ad95ff"/><stop offset=".32" stop-color="#8763ff"/><stop offset=".50" stop-color="#6a3cff"/><stop offset=".72" stop-color="#531dff"/><stop offset="1" stop-color="#4101ff"/></linearGradient>
<linearGradient id="u174" gradientUnits="userSpaceOnUse" x1="1630.3" y1="610.6" x2="1677.8" y2="1037"><stop offset=".00" stop-color="#fff"/><stop offset=".07" stop-color="#d7caff"/><stop offset=".17" stop-color="#b097ff"/><stop offset=".32" stop-color="#8b64ff"/><stop offset=".50" stop-color="#6f3dff"/><stop offset=".72" stop-color="#591dff"/><stop offset="1" stop-color="#4701ff"/></linearGradient>
<linearGradient id="u175" gradientUnits="userSpaceOnUse" x1="1630.3" y1="610.6" x2="1684.6" y2="1028.3"><stop offset=".00" stop-color="#fff"/><stop offset=".07" stop-color="#d9cbff"/><stop offset=".17" stop-color="#b498ff"/><stop offset=".32" stop-color="#8f65ff"/><stop offset=".50" stop-color="#743eff"/><stop offset=".72" stop-color="#5e1eff"/><stop offset="1" stop-color="#4d01ff"/></linearGradient>
<linearGradient id="u176" gradientUnits="userSpaceOnUse" x1="1630.3" y1="610.6" x2="1691.1" y2="1019.8"><stop offset=".00" stop-color="#fff"/><stop offset=".07" stop-color="#dbccff"/><stop offset=".17" stop-color="#b799ff"/><stop offset=".32" stop-color="#9466ff"/><stop offset=".50" stop-color="#793eff"/><stop offset=".72" stop-color="#641eff"/><stop offset="1" stop-color="#5301ff"/></linearGradient>
<linearGradient id="u177" gradientUnits="userSpaceOnUse" x1="1630.3" y1="610.6" x2="1697.5" y2="1011.5"><stop offset=".00" stop-color="#fff"/><stop offset=".07" stop-color="#dccdff"/><stop offset=".17" stop-color="#ba9aff"/><stop offset=".32" stop-color="#9867ff"/><stop offset=".50" stop-color="#7e3fff"/><stop offset=".72" stop-color="#6a1eff"/><stop offset="1" stop-color="#5901ff"/></linearGradient>
<linearGradient id="u178" gradientUnits="userSpaceOnUse" x1="1630.3" y1="610.6" x2="1703.8" y2="1003.4"><stop offset=".00" stop-color="#fff"/><stop offset=".07" stop-color="#decdff"/><stop offset=".17" stop-color="#bd9bff"/><stop offset=".32" stop-color="#9c68ff"/><stop offset=".50" stop-color="#8340ff"/><stop offset=".72" stop-color="#701fff"/><stop offset="1" stop-color="#5f01ff"/></linearGradient>
<linearGradient id="u179" gradientUnits="userSpaceOnUse" x1="1630.3" y1="610.6" x2="1709.9" y2="995.4"><stop offset=".00" stop-color="#fff"/><stop offset=".07" stop-color="#e0ceff"/><stop offset=".17" stop-color="#c09bff"/><stop offset=".32" stop-color="#a169ff"/><stop offset=".50" stop-color="#8941ff"/><stop offset=".72" stop-color="#751fff"/><stop offset="1" stop-color="#6601ff"/></linearGradient>
<linearGradient id="u180" gradientUnits="userSpaceOnUse" x1="1630.3" y1="610.6" x2="1715.9" y2="987.7"><stop offset=".00" stop-color="#fff"/><stop offset=".07" stop-color="#e1ceff"/><stop offset=".17" stop-color="#c39cff"/><stop offset=".32" stop-color="#a56aff"/><stop offset=".50" stop-color="#8e41ff"/><stop offset=".72" stop-color="#7b20ff"/><stop offset="1" stop-color="#6c01ff"/></linearGradient>
<linearGradient id="u181" gradientUnits="userSpaceOnUse" x1="1630.3" y1="610.6" x2="1721.7" y2="980.2"><stop offset=".00" stop-color="#fff"/><stop offset=".07" stop-color="#e3cfff"/><stop offset=".17" stop-color="#c69dff"/><stop offset=".32" stop-color="#a96bff"/><stop offset=".50" stop-color="#9342ff"/><stop offset=".72" stop-color="#8120ff"/><stop offset="1" stop-color="#7201ff"/></linearGradient>
<linearGradient id="u182" gradientUnits="userSpaceOnUse" x1="1630.3" y1="610.6" x2="1727.4" y2="972.9"><stop offset=".00" stop-color="#fff"/><stop offset=".07" stop-color="#e4d0ff"/><stop offset=".17" stop-color="#c99eff"/><stop offset=".32" stop-color="#ad6cff"/><stop offset=".50" stop-color="#9843ff"/><stop offset=".72" stop-color="#8620ff"/><stop offset="1" stop-color="#7801ff"/></linearGradient>
<linearGradient id="u183" gradientUnits="userSpaceOnUse" x1="1630.3" y1="610.6" x2="1732.9" y2="965.8"><stop offset=".00" stop-color="#fff"/><stop offset=".07" stop-color="#e6d0ff"/><stop offset=".17" stop-color="#cc9fff"/><stop offset=".32" stop-color="#b16dff"/><stop offset=".50" stop-color="#9d44ff"/><stop offset=".72" stop-color="#8c21ff"/><stop offset="1" stop-color="#7e01ff"/></linearGradient>
<linearGradient id="u184" gradientUnits="userSpaceOnUse" x1="1630.3" y1="610.6" x2="1738.2" y2="958.9"><stop offset=".00" stop-color="#fff"/><stop offset=".07" stop-color="#e7d1ff"/><stop offset=".17" stop-color="#cfa0ff"/><stop offset=".32" stop-color="#b66dff"/><stop offset=".50" stop-color="#a244ff"/><stop offset=".72" stop-color="#9221ff"/><stop offset="1" stop-color="#8401ff"/></linearGradient>
<linearGradient id="u185" gradientUnits="userSpaceOnUse" x1="1630.3" y1="610.6" x2="1743.4" y2="952.1"><stop offset=".00" stop-color="#fff"/><stop offset=".07" stop-color="#e9d1ff"/><stop offset=".17" stop-color="#d1a1ff"/><stop offset=".32" stop-color="#ba6eff"/><stop offset=".50" stop-color="#a745ff"/><stop offset=".72" stop-color="#9722ff"/><stop offset="1" stop-color="#8a01ff"/></linearGradient>
<linearGradient id="u186" gradientUnits="userSpaceOnUse" x1="1630.3" y1="610.6" x2="1748.6" y2="945.4"><stop offset=".00" stop-color="#fff"/><stop offset=".07" stop-color="#ead2ff"/><stop offset=".17" stop-color="#d4a2ff"/><stop offset=".32" stop-color="#be6fff"/><stop offset=".50" stop-color="#ac46ff"/><stop offset=".72" stop-color="#9d22ff"/><stop offset="1" stop-color="#9101ff"/></linearGradient>
<linearGradient id="u187" gradientUnits="userSpaceOnUse" x1="1630.3" y1="610.6" x2="1753.7" y2="938.9"><stop offset=".00" stop-color="#fff"/><stop offset=".07" stop-color="#ecd3ff"/><stop offset=".17" stop-color="#d7a3ff"/><stop offset=".32" stop-color="#c270ff"/><stop offset=".50" stop-color="#b146ff"/><stop offset=".72" stop-color="#a323ff"/><stop offset="1" stop-color="#9701ff"/></linearGradient>
<linearGradient id="u188" gradientUnits="userSpaceOnUse" x1="1630.3" y1="610.6" x2="1758.5" y2="932.6"><stop offset=".00" stop-color="#fff"/><stop offset=".07" stop-color="#edd3ff"/><stop offset=".17" stop-color="#daa4ff"/><stop offset=".32" stop-color="#c671ff"/><stop offset=".50" stop-color="#b647ff"/><stop offset=".72" stop-color="#a823ff"/><stop offset="1" stop-color="#9d01ff"/></linearGradient>
<linearGradient id="u189" gradientUnits="userSpaceOnUse" x1="1630.3" y1="610.6" x2="1763.3" y2="926.4"><stop offset=".00" stop-color="#fff"/><stop offset=".07" stop-color="#eed4ff"/><stop offset=".17" stop-color="#dca5ff"/><stop offset=".32" stop-color="#ca72ff"/><stop offset=".50" stop-color="#ba48ff"/><stop offset=".72" stop-color="#ae23ff"/><stop offset="1" stop-color="#a301ff"/></linearGradient>
<linearGradient id="u190" gradientUnits="userSpaceOnUse" x1="1630.3" y1="610.6" x2="1767.9" y2="920.5"><stop offset=".00" stop-color="#fff"/><stop offset=".07" stop-color="#f0d4ff"/><stop offset=".17" stop-color="#dfa5ff"/><stop offset=".32" stop-color="#cd73ff"/><stop offset=".50" stop-color="#bf49ff"/><stop offset=".72" stop-color="#b324ff"/><stop offset="1" stop-color="#aa01ff"/></linearGradient>
<linearGradient id="u191" gradientUnits="userSpaceOnUse" x1="1630.3" y1="610.6" x2="1772.5" y2="914.6"><stop offset=".00" stop-color="#fff"/><stop offset=".07" stop-color="#f1d5ff"/><stop offset=".17" stop-color="#e2a6ff"/><stop offset=".32" stop-color="#d174ff"/><stop offset=".50" stop-color="#c449ff"/><stop offset=".72" stop-color="#b924ff"/><stop offset="1" stop-color="#b001ff"/></linearGradient>
<linearGradient id="u192" gradientUnits="userSpaceOnUse" x1="1630.3" y1="610.6" x2="1776.9" y2="908.8"><stop offset=".00" stop-color="#fff"/><stop offset=".07" stop-color="#f2d5ff"/><stop offset=".17" stop-color="#e4a7ff"/><stop offset=".32" stop-color="#d575ff"/><stop offset=".50" stop-color="#c94aff"/><stop offset=".72" stop-color="#bf25ff"/><stop offset="1" stop-color="#b601ff"/></linearGradient>
<linearGradient id="u193" gradientUnits="userSpaceOnUse" x1="1630.3" y1="610.6" x2="1781.2" y2="903.3"><stop offset=".00" stop-color="#fff"/><stop offset=".07" stop-color="#f3d6ff"/><stop offset=".17" stop-color="#e7a8ff"/><stop offset=".32" stop-color="#d976ff"/><stop offset=".50" stop-color="#ce4bff"/><stop offset=".72" stop-color="#c425ff"/><stop offset="1" stop-color="#bc01ff"/></linearGradient>
<linearGradient id="u194" gradientUnits="userSpaceOnUse" x1="1630.3" y1="610.6" x2="1785.5" y2="897.8"><stop offset=".00" stop-color="#fff"/><stop offset=".07" stop-color="#f5d6ff"/><stop offset=".17" stop-color="#e9a9ff"/><stop offset=".32" stop-color="#d7f"/><stop offset=".50" stop-color="#d34cff"/><stop offset=".72" stop-color="#ca26ff"/><stop offset="1" stop-color="#c301ff"/></linearGradient>
<linearGradient id="u195" gradientUnits="userSpaceOnUse" x1="1630.3" y1="610.6" x2="1789.6" y2="892.4"><stop offset=".00" stop-color="#fff"/><stop offset=".07" stop-color="#f6d7ff"/><stop offset=".17" stop-color="#eba9ff"/><stop offset=".32" stop-color="#e077ff"/><stop offset=".50" stop-color="#d74cff"/><stop offset=".72" stop-color="#d026ff"/><stop offset="1" stop-color="#c901ff"/></linearGradient>
<linearGradient id="u196" gradientUnits="userSpaceOnUse" x1="1630.3" y1="610.6" x2="1793.6" y2="887.3"><stop offset=".00" stop-color="#fff"/><stop offset=".07" stop-color="#f7d7ff"/><stop offset=".17" stop-color="#eaf"/><stop offset=".32" stop-color="#e478ff"/><stop offset=".50" stop-color="#dc4dff"/><stop offset=".72" stop-color="#d526ff"/><stop offset="1" stop-color="#cf01ff"/></linearGradient>
<linearGradient id="u197" gradientUnits="userSpaceOnUse" x1="1630.3" y1="610.6" x2="1797.5" y2="882.1"><stop offset=".00" stop-color="#fff"/><stop offset=".07" stop-color="#f8d8ff"/><stop offset=".17" stop-color="#f0abff"/><stop offset=".32" stop-color="#e879ff"/><stop offset=".50" stop-color="#e14eff"/><stop offset=".72" stop-color="#db27ff"/><stop offset="1" stop-color="#d501ff"/></linearGradient>
<linearGradient id="u198" gradientUnits="userSpaceOnUse" x1="1630.3" y1="610.6" x2="1801.4" y2="877.2"><stop offset=".00" stop-color="#fff"/><stop offset=".07" stop-color="#f9d8ff"/><stop offset=".17" stop-color="#f3acff"/><stop offset=".32" stop-color="#eb7aff"/><stop offset=".50" stop-color="#e54eff"/><stop offset=".72" stop-color="#e027ff"/><stop offset="1" stop-color="#dc01ff"/></linearGradient>
<linearGradient id="u199" gradientUnits="userSpaceOnUse" x1="1630.3" y1="610.6" x2="1805" y2="872.4"><stop offset=".00" stop-color="#fff"/><stop offset=".07" stop-color="#fad8ff"/><stop offset=".17" stop-color="#f5acff"/><stop offset=".32" stop-color="#ef7bff"/><stop offset=".50" stop-color="#ea4fff"/><stop offset=".72" stop-color="#e628ff"/><stop offset="1" stop-color="#e201ff"/></linearGradient>
<linearGradient id="u200" gradientUnits="userSpaceOnUse" x1="1630.3" y1="610.6" x2="1808.7" y2="867.7"><stop offset=".00" stop-color="#fff"/><stop offset=".07" stop-color="#fbd9ff"/><stop offset=".17" stop-color="#f7adff"/><stop offset=".32" stop-color="#f27cff"/><stop offset=".50" stop-color="#ef50ff"/><stop offset=".72" stop-color="#eb28ff"/><stop offset="1" stop-color="#e801ff"/></linearGradient>
<linearGradient id="u201" gradientUnits="userSpaceOnUse" x1="1630.3" y1="610.6" x2="1812.4" y2="863"><stop offset=".00" stop-color="#fff"/><stop offset=".07" stop-color="#fcd9ff"/><stop offset=".17" stop-color="#f9aeff"/><stop offset=".32" stop-color="#f67cff"/><stop offset=".50" stop-color="#f350ff"/><stop offset=".72" stop-color="#f128ff"/><stop offset="1" stop-color="#ef01ff"/></linearGradient>
<linearGradient id="u202" gradientUnits="userSpaceOnUse" x1="1630.3" y1="610.6" x2="1815.9" y2="858.4"><stop offset=".00" stop-color="#fff"/><stop offset=".07" stop-color="#fddaff"/><stop offset=".17" stop-color="#fcafff"/><stop offset=".32" stop-color="#fa7dff"/><stop offset=".50" stop-color="#f851ff"/><stop offset=".72" stop-color="#f629ff"/><stop offset="1" stop-color="#f501ff"/></linearGradient>
<linearGradient id="u203" gradientUnits="userSpaceOnUse" x1="1630.3" y1="610.6" x2="1819.2" y2="854.1"><stop offset=".00" stop-color="#fff"/><stop offset=".07" stop-color="#fedaff"/><stop offset=".17" stop-color="#feafff"/><stop offset=".32" stop-color="#fd7eff"/><stop offset=".50" stop-color="#fc52ff"/><stop offset=".72" stop-color="#fc29ff"/><stop offset="1" stop-color="#fb01ff"/></linearGradient>
<linearGradient id="u204" gradientUnits="userSpaceOnUse" x1="1630.3" y1="610.6" x2="1822.8" y2="849.5"><stop offset=".00" stop-color="#fff"/><stop offset=".07" stop-color="#ffdaff"/><stop offset=".17" stop-color="#ffaffe"/><stop offset=".32" stop-color="#ff7efe"/><stop offset=".50" stop-color="#ff52fd"/><stop offset=".72" stop-color="#ff29fd"/><stop offset="1" stop-color="#ff01fc"/></linearGradient>
<linearGradient id="u205" gradientUnits="userSpaceOnUse" x1="1630.3" y1="610.6" x2="1826.3" y2="845"><stop offset=".00" stop-color="#fff"/><stop offset=".07" stop-color="#ffdafe"/><stop offset=".17" stop-color="#ffaffc"/><stop offset=".32" stop-color="#ff7dfa"/><stop offset=".50" stop-color="#ff51f8"/><stop offset=".72" stop-color="#ff29f7"/><stop offset="1" stop-color="#ff01f6"/></linearGradient>
<linearGradient id="u206" gradientUnits="userSpaceOnUse" x1="1630.3" y1="610.6" x2="1829.8" y2="840.4"><stop offset=".00" stop-color="#fff"/><stop offset=".07" stop-color="#ffd9fd"/><stop offset=".17" stop-color="#ffaefa"/><stop offset=".32" stop-color="#ff7cf6"/><stop offset=".50" stop-color="#ff50f4"/><stop offset=".72" stop-color="#ff28f1"/><stop offset="1" stop-color="#ff01ef"/></linearGradient>
<linearGradient id="u207" gradientUnits="userSpaceOnUse" x1="1630.3" y1="610.6" x2="1833.5" y2="835.7"><stop offset=".00" stop-color="#fff"/><stop offset=".07" stop-color="#ffd9fb"/><stop offset=".17" stop-color="#ffadf7"/><stop offset=".32" stop-color="#ff7bf3"/><stop offset=".50" stop-color="#ff50ef"/><stop offset=".72" stop-color="#ff28ec"/><stop offset="1" stop-color="#ff01e9"/></linearGradient>
<linearGradient id="u208" gradientUnits="userSpaceOnUse" x1="1630.3" y1="610.6" x2="1837.1" y2="830.9"><stop offset=".00" stop-color="#fff"/><stop offset=".07" stop-color="#ffd8fa"/><stop offset=".17" stop-color="#ffacf5"/><stop offset=".32" stop-color="#ff7aef"/><stop offset=".50" stop-color="#ff4feb"/><stop offset=".72" stop-color="#ff27e6"/><stop offset="1" stop-color="#ff01e3"/></linearGradient>
<linearGradient id="u209" gradientUnits="userSpaceOnUse" x1="1630.3" y1="610.6" x2="1841" y2="826"><stop offset=".00" stop-color="#fff"/><stop offset=".07" stop-color="#ffd8f9"/><stop offset=".17" stop-color="#ffabf3"/><stop offset=".32" stop-color="#ff79ec"/><stop offset=".50" stop-color="#ff4ee6"/><stop offset=".72" stop-color="#ff27e1"/><stop offset="1" stop-color="#ff01dc"/></linearGradient>
<linearGradient id="u210" gradientUnits="userSpaceOnUse" x1="1630.3" y1="610.6" x2="1844.9" y2="820.8"><stop offset=".00" stop-color="#fff"/><stop offset=".07" stop-color="#ffd7f8"/><stop offset=".17" stop-color="#ffaaf0"/><stop offset=".32" stop-color="#ff78e8"/><stop offset=".50" stop-color="#ff4de1"/><stop offset=".72" stop-color="#ff27db"/><stop offset="1" stop-color="#ff01d6"/></linearGradient>
<linearGradient id="u211" gradientUnits="userSpaceOnUse" x1="1630.3" y1="610.6" x2="1848.9" y2="815.7"><stop offset=".00" stop-color="#fff"/><stop offset=".07" stop-color="#ffd7f7"/><stop offset=".17" stop-color="#fae"/><stop offset=".32" stop-color="#ff78e4"/><stop offset=".50" stop-color="#ff4cdc"/><stop offset=".72" stop-color="#ff26d6"/><stop offset="1" stop-color="#ff01d0"/></linearGradient>
<linearGradient id="u212" gradientUnits="userSpaceOnUse" x1="1630.3" y1="610.6" x2="1853" y2="810.4"><stop offset=".00" stop-color="#fff"/><stop offset=".07" stop-color="#ffd6f6"/><stop offset=".17" stop-color="#ffa9ec"/><stop offset=".32" stop-color="#ff77e1"/><stop offset=".50" stop-color="#ff4cd8"/><stop offset=".72" stop-color="#ff26d0"/><stop offset="1" stop-color="#ff01ca"/></linearGradient>
<linearGradient id="u213" gradientUnits="userSpaceOnUse" x1="1630.3" y1="610.6" x2="1857.3" y2="804.8"><stop offset=".00" stop-color="#fff"/><stop offset=".07" stop-color="#ffd6f5"/><stop offset=".17" stop-color="#ffa8e9"/><stop offset=".32" stop-color="#ff76dd"/><stop offset=".50" stop-color="#ff4bd3"/><stop offset=".72" stop-color="#ff25ca"/><stop offset="1" stop-color="#ff01c3"/></linearGradient>
<linearGradient id="u214" gradientUnits="userSpaceOnUse" x1="1630.3" y1="610.6" x2="1861.6" y2="799.3"><stop offset=".00" stop-color="#fff"/><stop offset=".07" stop-color="#ffd5f3"/><stop offset=".17" stop-color="#ffa7e7"/><stop offset=".32" stop-color="#ff75d9"/><stop offset=".50" stop-color="#ff4ace"/><stop offset=".72" stop-color="#ff25c5"/><stop offset="1" stop-color="#ff01bd"/></linearGradient>
<linearGradient id="u215" gradientUnits="userSpaceOnUse" x1="1630.3" y1="610.6" x2="1866" y2="793.5"><stop offset=".00" stop-color="#fff"/><stop offset=".07" stop-color="#ffd5f2"/><stop offset=".17" stop-color="#ffa6e4"/><stop offset=".32" stop-color="#ff74d5"/><stop offset=".50" stop-color="#ff49c9"/><stop offset=".72" stop-color="#ff24bf"/><stop offset="1" stop-color="#ff01b7"/></linearGradient>
<linearGradient id="u216" gradientUnits="userSpaceOnUse" x1="1630.3" y1="610.6" x2="1870.6" y2="787.6"><stop offset=".00" stop-color="#fff"/><stop offset=".07" stop-color="#ffd4f1"/><stop offset=".17" stop-color="#ffa5e2"/><stop offset=".32" stop-color="#ff73d1"/><stop offset=".50" stop-color="#ff48c4"/><stop offset=".72" stop-color="#ff24ba"/><stop offset="1" stop-color="#ff01b1"/></linearGradient>
<linearGradient id="u217" gradientUnits="userSpaceOnUse" x1="1630.3" y1="610.6" x2="1875.3" y2="781.5"><stop offset=".00" stop-color="#fff"/><stop offset=".07" stop-color="#ffd3ef"/><stop offset=".17" stop-color="#ffa4df"/><stop offset=".32" stop-color="#ff72ce"/><stop offset=".50" stop-color="#ff48c0"/><stop offset=".72" stop-color="#ff23b4"/><stop offset="1" stop-color="#ff01aa"/></linearGradient>
<linearGradient id="u218" gradientUnits="userSpaceOnUse" x1="1630.3" y1="610.6" x2="1880.2" y2="775.2"><stop offset=".00" stop-color="#fff"/><stop offset=".07" stop-color="#ffd3ee"/><stop offset=".17" stop-color="#ffa3dc"/><stop offset=".32" stop-color="#ff71ca"/><stop offset=".50" stop-color="#ff47bb"/><stop offset=".72" stop-color="#ff23ae"/><stop offset="1" stop-color="#ff01a4"/></linearGradient>
<linearGradient id="u219" gradientUnits="userSpaceOnUse" x1="1630.3" y1="610.6" x2="1885.3" y2="768.6"><stop offset=".00" stop-color="#fff"/><stop offset=".07" stop-color="#ffd2ed"/><stop offset=".17" stop-color="#ffa2d9"/><stop offset=".32" stop-color="#ff6fc5"/><stop offset=".50" stop-color="#ff46b6"/><stop offset=".72" stop-color="#ff22a9"/><stop offset="1" stop-color="#ff019e"/></linearGradient>
<linearGradient id="u220" gradientUnits="userSpaceOnUse" x1="1630.3" y1="610.6" x2="1890.5" y2="761.9"><stop offset=".00" stop-color="#fff"/><stop offset=".07" stop-color="#ffd1eb"/><stop offset=".17" stop-color="#ffa1d7"/><stop offset=".32" stop-color="#ff6ec1"/><stop offset=".50" stop-color="#ff45b1"/><stop offset=".72" stop-color="#ff22a3"/><stop offset="1" stop-color="#ff0198"/></linearGradient>
<linearGradient id="u221" gradientUnits="userSpaceOnUse" x1="1630.3" y1="610.6" x2="1895.8" y2="755"><stop offset=".00" stop-color="#fff"/><stop offset=".07" stop-color="#ffd1ea"/><stop offset=".17" stop-color="#ffa0d4"/><stop offset=".32" stop-color="#ff6dbd"/><stop offset=".50" stop-color="#ff44ac"/><stop offset=".72" stop-color="#ff219d"/><stop offset="1" stop-color="#ff0192"/></linearGradient>
<linearGradient id="u222" gradientUnits="userSpaceOnUse" x1="1630.3" y1="610.6" x2="1901.3" y2="747.9"><stop offset=".00" stop-color="#fff"/><stop offset=".07" stop-color="#ffd0e8"/><stop offset=".17" stop-color="#ff9fd1"/><stop offset=".32" stop-color="#ff6cb9"/><stop offset=".50" stop-color="#ff43a7"/><stop offset=".72" stop-color="#ff2198"/><stop offset="1" stop-color="#ff018b"/></linearGradient>
<linearGradient id="u223" gradientUnits="userSpaceOnUse" x1="1630.3" y1="610.6" x2="1907" y2="740.6"><stop offset=".00" stop-color="#fff"/><stop offset=".07" stop-color="#ffcfe7"/><stop offset=".17" stop-color="#ff9ece"/><stop offset=".32" stop-color="#ff6bb5"/><stop offset=".50" stop-color="#ff42a1"/><stop offset=".72" stop-color="#ff2092"/><stop offset="1" stop-color="#ff0185"/></linearGradient>
<linearGradient id="u224" gradientUnits="userSpaceOnUse" x1="1630.3" y1="610.6" x2="1912.8" y2="733"><stop offset=".00" stop-color="#fff"/><stop offset=".07" stop-color="#ffcfe5"/><stop offset=".17" stop-color="#ff9dcb"/><stop offset=".32" stop-color="#ff6ab1"/><stop offset=".50" stop-color="#ff429c"/><stop offset=".72" stop-color="#ff208c"/><stop offset="1" stop-color="#ff017f"/></linearGradient>
<linearGradient id="u225" gradientUnits="userSpaceOnUse" x1="1630.3" y1="610.6" x2="1918.8" y2="725.3"><stop offset=".00" stop-color="#fff"/><stop offset=".07" stop-color="#ffcee4"/><stop offset=".17" stop-color="#ff9cc8"/><stop offset=".32" stop-color="#ff69ac"/><stop offset=".50" stop-color="#ff4197"/><stop offset=".72" stop-color="#ff1f87"/><stop offset="1" stop-color="#ff0179"/></linearGradient>
<linearGradient id="u226" gradientUnits="userSpaceOnUse" x1="1630.3" y1="610.6" x2="1925" y2="717.2"><stop offset=".00" stop-color="#fff"/><stop offset=".07" stop-color="#ffcde2"/><stop offset=".17" stop-color="#ff9bc5"/><stop offset=".32" stop-color="#ff68a8"/><stop offset=".50" stop-color="#ff4092"/><stop offset=".72" stop-color="#ff1f81"/><stop offset="1" stop-color="#ff0173"/></linearGradient>
<linearGradient id="u227" gradientUnits="userSpaceOnUse" x1="1630.3" y1="610.6" x2="1931.5" y2="708.9"><stop offset=".00" stop-color="#fff"/><stop offset=".07" stop-color="#ffcde0"/><stop offset=".17" stop-color="#ff9ac2"/><stop offset=".32" stop-color="#ff67a4"/><stop offset=".50" stop-color="#ff3f8d"/><stop offset=".72" stop-color="#ff1e7b"/><stop offset="1" stop-color="#ff016c"/></linearGradient>
<linearGradient id="u228" gradientUnits="userSpaceOnUse" x1="1630.3" y1="610.6" x2="1938" y2="700.4"><stop offset=".00" stop-color="#fff"/><stop offset=".07" stop-color="#ffccdf"/><stop offset=".17" stop-color="#ff98bf"/><stop offset=".32" stop-color="#ff669f"/><stop offset=".50" stop-color="#ff3e88"/><stop offset=".72" stop-color="#ff1e75"/><stop offset="1" stop-color="#ff0166"/></linearGradient>
<linearGradient id="u229" gradientUnits="userSpaceOnUse" x1="1630.3" y1="610.6" x2="1944.9" y2="691.5"><stop offset=".00" stop-color="#fff"/><stop offset=".07" stop-color="#ffcbdd"/><stop offset=".17" stop-color="#ff97bb"/><stop offset=".32" stop-color="#ff649b"/><stop offset=".50" stop-color="#ff3d82"/><stop offset=".72" stop-color="#ff1d6f"/><stop offset="1" stop-color="#ff0160"/></linearGradient>
<linearGradient id="u230" gradientUnits="userSpaceOnUse" x1="1630.3" y1="610.6" x2="1951.9" y2="682.4"><stop offset=".00" stop-color="#fff"/><stop offset=".07" stop-color="#ffcadb"/><stop offset=".17" stop-color="#ff96b8"/><stop offset=".32" stop-color="#ff6396"/><stop offset=".50" stop-color="#ff3c7d"/><stop offset=".72" stop-color="#ff1d6a"/><stop offset="1" stop-color="#ff015a"/></linearGradient>
<linearGradient id="u231" gradientUnits="userSpaceOnUse" x1="1630.3" y1="610.6" x2="1959.1" y2="673.1"><stop offset=".00" stop-color="#fff"/><stop offset=".07" stop-color="#ffc9d9"/><stop offset=".17" stop-color="#ff95b5"/><stop offset=".32" stop-color="#ff6292"/><stop offset=".50" stop-color="#ff3c78"/><stop offset=".72" stop-color="#ff1d64"/><stop offset="1" stop-color="#ff0154"/></linearGradient>
<linearGradient id="u232" gradientUnits="userSpaceOnUse" x1="1630.3" y1="610.6" x2="1966.6" y2="663.4"><stop offset=".00" stop-color="#fff"/><stop offset=".07" stop-color="#ffc8d7"/><stop offset=".17" stop-color="#ff94b1"/><stop offset=".32" stop-color="#ff618d"/><stop offset=".50" stop-color="#ff3b73"/><stop offset=".72" stop-color="#ff1c5e"/><stop offset="1" stop-color="#ff014e"/></linearGradient>
<linearGradient id="u233" gradientUnits="userSpaceOnUse" x1="1630.3" y1="610.6" x2="1974.4" y2="653.4"><stop offset=".00" stop-color="#fff"/><stop offset=".07" stop-color="#ffc8d5"/><stop offset=".17" stop-color="#ff92ae"/><stop offset=".32" stop-color="#ff6089"/><stop offset=".50" stop-color="#ff3a6d"/><stop offset=".72" stop-color="#ff1c58"/><stop offset="1" stop-color="#ff0148"/></linearGradient>
<linearGradient id="u234" gradientUnits="userSpaceOnUse" x1="1630.3" y1="610.6" x2="1982.5" y2="642.9"><stop offset=".00" stop-color="#fff"/><stop offset=".07" stop-color="#ffc7d3"/><stop offset=".17" stop-color="#ff91aa"/><stop offset=".32" stop-color="#ff5f84"/><stop offset=".50" stop-color="#ff3968"/><stop offset=".72" stop-color="#ff1b52"/><stop offset="1" stop-color="#ff0141"/></linearGradient>
<linearGradient id="u235" gradientUnits="userSpaceOnUse" x1="1630.3" y1="610.6" x2="1990.8" y2="632.2"><stop offset=".00" stop-color="#fff"/><stop offset=".07" stop-color="#ffc6d1"/><stop offset=".17" stop-color="#ff90a7"/><stop offset=".32" stop-color="#ff5d7f"/><stop offset=".50" stop-color="#ff3863"/><stop offset=".72" stop-color="#ff1b4d"/><stop offset="1" stop-color="#ff013b"/></linearGradient>
<linearGradient id="u236" gradientUnits="userSpaceOnUse" x1="1630.3" y1="610.6" x2="1999.2" y2="621.3"><stop offset=".00" stop-color="#fff"/><stop offset=".07" stop-color="#ffc5cf"/><stop offset=".17" stop-color="#ff8fa3"/><stop offset=".32" stop-color="#ff5c7b"/><stop offset=".50" stop-color="#ff375d"/><stop offset=".72" stop-color="#ff1a47"/><stop offset="1" stop-color="#ff0135"/></linearGradient>
<linearGradient id="u237" gradientUnits="userSpaceOnUse" x1="1630.3" y1="610.6" x2="2007.9" y2="610"><stop offset=".00" stop-color="#fff"/><stop offset=".07" stop-color="#ffc4cd"/><stop offset=".17" stop-color="#ff8d9f"/><stop offset=".32" stop-color="#ff5b76"/><stop offset=".50" stop-color="#ff3658"/><stop offset=".72" stop-color="#ff1a41"/><stop offset="1" stop-color="#ff012f"/></linearGradient>
<linearGradient id="u238" gradientUnits="userSpaceOnUse" x1="1630.3" y1="610.6" x2="2016.9" y2="598.4"><stop offset=".00" stop-color="#fff"/><stop offset=".07" stop-color="#ffc3cb"/><stop offset=".17" stop-color="#ff8c9c"/><stop offset=".32" stop-color="#ff5a71"/><stop offset=".50" stop-color="#ff3653"/><stop offset=".72" stop-color="#ff193b"/><stop offset="1" stop-color="#ff0129"/></linearGradient>
<linearGradient id="u239" gradientUnits="userSpaceOnUse" x1="1630.3" y1="610.6" x2="2026.2" y2="586.3"><stop offset=".00" stop-color="#fff"/><stop offset=".07" stop-color="#ffc2c9"/><stop offset=".17" stop-color="#ff8b98"/><stop offset=".32" stop-color="#ff596c"/><stop offset=".50" stop-color="#ff354d"/><stop offset=".72" stop-color="#ff1936"/><stop offset="1" stop-color="#ff0123"/></linearGradient>
<linearGradient id="u240" gradientUnits="userSpaceOnUse" x1="1630.3" y1="610.6" x2="2035.7" y2="574.1"><stop offset=".00" stop-color="#fff"/><stop offset=".07" stop-color="#ffc1c7"/><stop offset=".17" stop-color="#ff8994"/><stop offset=".32" stop-color="#ff5867"/><stop offset=".50" stop-color="#ff3448"/><stop offset=".72" stop-color="#ff1830"/><stop offset="1" stop-color="#ff011d"/></linearGradient>
<linearGradient id="u241" gradientUnits="userSpaceOnUse" x1="1630.3" y1="610.6" x2="2045.4" y2="561.6"><stop offset=".00" stop-color="#fff"/><stop offset=".07" stop-color="#ffc0c4"/><stop offset=".17" stop-color="#ff8890"/><stop offset=".32" stop-color="#ff5663"/><stop offset=".50" stop-color="#ff3342"/><stop offset=".72" stop-color="#ff182a"/><stop offset="1" stop-color="#ff0117"/></linearGradient>
<linearGradient id="u242" gradientUnits="userSpaceOnUse" x1="1630.3" y1="610.6" x2="2055.1" y2="548.9"><stop offset=".00" stop-color="#fff"/><stop offset=".07" stop-color="#ffbfc2"/><stop offset=".17" stop-color="#ff878d"/><stop offset=".32" stop-color="#ff555e"/><stop offset=".50" stop-color="#ff323d"/><stop offset=".72" stop-color="#ff1725"/><stop offset="1" stop-color="#ff0111"/></linearGradient>
<linearGradient id="u243" gradientUnits="userSpaceOnUse" x1="1630.3" y1="610.6" x2="2064.9" y2="536.3"><stop offset=".00" stop-color="#fff"/><stop offset=".07" stop-color="#ffbec0"/><stop offset=".17" stop-color="#ff8589"/><stop offset=".32" stop-color="#ff5459"/><stop offset=".50" stop-color="#ff3138"/><stop offset=".72" stop-color="#ff171f"/><stop offset="1" stop-color="#ff010b"/></linearGradient>
<linearGradient id="u244" gradientUnits="userSpaceOnUse" x1="1630.3" y1="610.6" x2="2074.6" y2="523.8"><stop offset=".00" stop-color="#fff"/><stop offset=".07" stop-color="#ffbdbe"/><stop offset=".17" stop-color="#ff8486"/><stop offset=".32" stop-color="#ff5355"/><stop offset=".50" stop-color="#ff3133"/><stop offset=".72" stop-color="#ff171a"/><stop offset="1" stop-color="#ff0105"/></linearGradient>
<linearGradient id="u245" gradientUnits="userSpaceOnUse" x1="1630.3" y1="610.6" x2="2080.1" y2="516.7"><stop offset=".00" stop-color="#fff"/><stop offset=".07" stop-color="#ffbdbd"/><stop offset=".17" stop-color="#ff8384"/><stop offset=".32" stop-color="#ff5253"/><stop offset=".50" stop-color="#ff3031"/><stop offset=".72" stop-color="#ff1617"/><stop offset="1" stop-color="#ff0101"/></linearGradient>
<clipPath id="xhs"><path d="M2800.8 1417.7 L2800.8 1417.7 L2800.8 1417.7 L2800.8 1417.7 L2800.8 1417.7 L2800.7 1417.7 L2800.7 1417.7 L2800.7 1417.7 L2800.7 1417.7 L2800.6 1417.7 L2800.6 1417.7 L2800.6 1417.7 L2800.5 1417.7 L2800.5 1417.8 L2800.5 1417.8 L2800.4 1417.8 L2800.4 1417.8 L2800.4 1417.8 L2800.3 1417.8 L2800.3 1417.8 L2800.3 1417.8 L2800.2 1417.8 L2800.2 1417.8 L2800.2 1417.8 L2800.1 1417.8 L2800.1 1417.8 L2800 1417.8 L2800 1417.9 L2799.9 1417.9 L2799.9 1417.9 L2799.8 1417.9 L2799.8 1417.9 L2799.7 1418 L2799.7 1418 L2799.6 1418 L2799.6 1418 L2799.5 1418 L2799.5 1418 L2799.4 1418 L2799.3 1418 L2799.3 1418 L2799.2 1418 L2799.2 1418 L2799.1 1418 L2799 1418 L2799 1418 L2798.9 1418 L2798.8 1418 L2798.7 1418 L2798.6 1418 L2798.6 1418 L2798.5 1418 L2798.4 1418 L2798.3 1418 L2798.2 1418 L2798.1 1418 L2798 1418 L2797.9 1417.9 L2797.8 1417.9 L2797.7 1417.9 L2797.6 1417.8 L2797.5 1417.8 L2797.3 1417.7 L2797.2 1417.6 L2797.1 1417.5 L2796.9 1417.5 L2796.7 1417.4 L2796.5 1417.3 L2796.3 1417.1 L2796.1 1417 L2795.9 1416.9 L2795.7 1416.8 L2795.5 1416.6 L2795.3 1416.5 L2795.1 1416.3 L2794.9 1416.1 L2794.6 1416 L2794.4 1415.8 L2794.1 1415.6 L2793.9 1415.4 L2793.6 1415.1 L2793.3 1414.9 L2792.9 1414.6 L2792.6 1414.4 L2792.3 1414.1 L2791.9 1413.8 L2791.5 1413.5 L2791.2 1413.2 L2790.8 1412.8 L2790.4 1412.5 L2790 1412.1 L2789.6 1411.8 L2789.1 1411.4 L2788.7 1411 L2788.3 1410.6 L2787.8 1410.2 L2787.3 1409.8 L2786.8 1409.3 L2786.3 1408.9 L2785.7 1408.4 L2785.2 1407.9 L2784.6 1407.5 L2784 1406.9 L2783.3 1406.4 L2782.7 1405.9 L2782 1405.3 L2781.3 1404.7 L2780.5 1404.1 L2779.7 1403.4 L2778.9 1402.8 L2778.1 1402.1 L2777.3 1401.4 L2776.4 1400.6 L2775.5 1399.9 L2774.6 1399.1 L2773.7 1398.3 L2772.7 1397.5 L2771.7 1396.7 L2770.7 1395.8 L2769.7 1394.9 L2768.6 1393.9 L2767.5 1392.9 L2766.3 1391.8 L2765.2 1390.8 L2764 1389.6 L2762.7 1388.5 L2761.5 1387.2 L2760.2 1385.9 L2758.8 1384.5 L2757.5 1383.1 L2756.1 1381.6 L2754.7 1380.1 L2753.3 1378.6 L2751.8 1376.9 L2750.3 1375 L2748.7 1373 L2747 1370.8 L2745.2 1368.4 L2743.4 1365.9 L2741.5 1363.2 L2739.6 1360.3 L2737.5 1357.3 L2735.5 1354 L2733.3 1350.5 L2731.1 1346.7 L2728.8 1342.7 L2726.5 1338.6 L2724 1334.2 L2721.6 1329.6 L2719 1324.7 L2716.4 1319.5 L2713.7 1313.8 L2710.9 1307.8 L2708 1301.4 L2705 1294.7 L2701.9 1287.6 L2698.8 1280.2 L2695.6 1272.4 L2692.3 1264.1 L2688.8 1255.4 L2685.3 1246.1 L2681.7 1236.3 L2677.9 1226.2 L2674 1215.6 L2670 1204.5 L2666 1192.9 L2661.9 1180.8 L2657.8 1168.1 L2653.8 1154.7 L2649.8 1140.8 L2645.7 1126.3 L2641.6 1111.2 L2637.5 1095.6 L2633.4 1079.4 L2629.3 1062.8 L2625.3 1045.6 L2621.3 1028 L2617.3 1009.8 L2613.3 991 L2609.3 971.5 L2605.4 951.6 L2601.5 931.4 L2597.7 910.9 L2594.1 890.4 L2590.8 869.9 L2587.6 849.2 L2584.4 828.1 L2581.4 806.8 L2578.6 785.3 L2575.9 763.9 L2573.5 742.6 L2571.3 721.6 L2569.4 701 L2567.8 680.7 L2566.4 660.4 L2565.2 640.2 L2564.2 620.3 L2563.6 600.6 L2563.2 581.4 L2563.1 562.7 L2563.4 544.6 L2564.1 526.9 L2565 509.5 L2566.3 492.5 L2567.9 475.9 L2569.7 460 L2572 444.6 L2574.5 430.1 L2577.4 416.4 L2580.6 403.5 L2584.3 391.2 L2588.3 379.6 L2592.6 368.7 L2597.2 358.6 L2602 349.3 L2607.1 340.9 L2612.3 333.4 L2617.7 326.9 L2623.4 321.4 L2629.4 316.7 L2635.6 312.9 L2642 309.8 L2648.5 307.4 L2655.1 305.5 L2661.6 304.1 L2668.3 303.4 L2675.1 303.5 L2682 304.3 L2689 305.7 L2696.1 307.5 L2703.2 309.6 L2710.2 312 L2717.3 314.3 L2724.3 316.9 L2731.4 319.8 L2738.5 323.1 L2745.7 326.6 L2752.8 330.2 L2759.8 334 L2766.8 337.8 L2773.8 341.6 L2780.6 345.4 L2787.4 349.3 L2794.1 353.3 L2800.7 357.3 L2807.4 361.5 L2813.9 365.7 L2820.5 369.9 L2827 374.2 L2833.5 378.6 L2840 383 L2846.4 387.5 L2852.8 392.1 L2859.2 396.7 L2865.5 401.4 L2871.9 406.1 L2878.2 410.9 L2884.6 415.8 L2890.9 420.7 L2897.2 425.7 L2903.5 430.7 L2909.8 435.8 L2916.1 440.9 L2922.4 446 L2928.7 451.2 L2935 456.5 L2941.2 461.7 L2947.5 467.1 L2953.7 472.4 L2960 477.8 L2966.2 483.3 L2972.4 488.7 L2978.6 494.2 L2984.9 499.7 L2991.1 505.3 L2997.3 510.9 L3003.5 516.5 L3009.8 522.1 L3016 527.7 L3022.2 533.4 L3028.4 539.1 L3034.7 544.8 L3040.9 550.5 L3047.2 556.3 L3053.4 562.1 L3059.7 567.9 L3065.9 573.7 L3072.1 579.5 L3078.4 585.3 L3084.6 591.2 L3090.8 597 L3097 602.9 L3103.2 608.7 L3109.4 614.6 L3115.6 620.5 L3121.8 626.3 L3128 632.2 L3134.2 638.1 L3140.4 643.9 L3146.6 649.8 L3152.8 655.7 L3159 661.6 L3165.1 667.4 L3171.3 673.3 L3177.4 679.1 L3183.5 684.9 L3189.6 690.8 L3195.7 696.6 L3201.7 702.4 L3207.8 708.2 L3213.8 714 L3219.8 719.7 L3225.8 725.5 L3231.7 731.2 L3237.7 736.9 L3243.6 742.6 L3249.5 748.2 L3255.4 753.9 L3261.2 759.5 L3267 765.1 L3272.8 770.6 L3278.5 776.1 L3284.2 781.6 L3289.9 787.1 L3295.6 792.5 L3301.2 797.9 L3306.8 803.3 L3312.3 808.6 L3317.8 813.9 L3323.3 819.1 L3328.7 824.3 L3334.1 829.4 L3339.4 834.5 L3344.7 839.6 L3350 844.6 L3355.1 849.6 L3360.2 854.4 L3365.3 859.3 L3370.3 864.1 L3375.2 868.9 L3380.1 873.6 L3384.9 878.2 L3389.6 882.8 L3394.3 887.3 L3398.9 891.7 L3403.3 896 L3407.7 900.2 L3412 904.3 L3416.2 908.3 L3420.4 912.3 L3424.5 916.2 L3428.5 920.1 L3432.5 923.9 L3436.4 927.7 L3440.3 931.4 L3444.1 935 L3447.8 938.6 L3451.5 942.2 L3455.1 945.6 L3458.6 949 L3462 952.3 L3465.4 955.4 L3468.6 958.6 L3471.8 961.6 L3474.9 964.5 L3477.9 967.4 L3480.9 970.2 L3483.8 972.9 L3486.6 975.6 L3489.3 978.3 L3492 980.8 L3494.6 983.3 L3497.1 985.7 L3499.6 988.1 L3501.9 990.4 L3504.3 992.7 L3506.5 994.9 L3508.7 997 L3510.9 999 L3512.9 1001 L3514.9 1003 L3516.9 1004.8 L3518.8 1006.7 L3520.6 1008.4 L3522.4 1010.2 L3524.2 1011.8 L3525.9 1013.5 L3527.5 1015 L3529.1 1016.6 L3530.7 1018 L3532.2 1019.5 L3533.7 1020.9 L3535.1 1022.3 L3536.5 1023.6 L3537.9 1024.9 L3539.2 1026.2 L3540.5 1027.4 L3541.7 1028.6 L3542.9 1029.8 L3544.1 1030.9 L3545.3 1032.1 L3546.5 1033.2 L3547.6 1034.3 L3548.7 1035.3 L3549.8 1036.4 L3550.8 1037.4 L3551.8 1038.4 L3552.8 1039.3 L3553.8 1040.3 L3554.8 1041.2 L3555.7 1042.1 L3556.6 1043 L3557.5 1043.8 L3558.3 1044.6 L3559.2 1045.4 L3560 1046.2 L3560.8 1047 L3561.6 1047.7 L3562.3 1048.4 L3563 1049.1 L3563.8 1049.8 L3564.4 1050.4 L3565.1 1051 L3565.7 1051.6 L3566.4 1052.2 L3567 1052.8 L3567.5 1053.3 L3568.1 1053.9 L3568.6 1054.4 L3569.1 1054.9 L3569.6 1055.3 L3570.1 1055.8 L3570.6 1056.3 L3571 1056.7 L3571.4 1057.1 L3571.9 1057.5 L3572.3 1057.9 L3572.7 1058.3 L3573 1058.7 L3573.4 1059 L3573.8 1059.3 L3574.1 1059.7 L3574.4 1060 L3574.7 1060.3 L3575.1 1060.6 L3575.3 1060.9 L3575.6 1061.1 L3575.9 1061.4 L3576.1 1061.6 L3576.4 1061.9 L3576.6 1062.1 L3576.8 1062.3 L3577 1062.4 L3577.1 1062.6 L3577.3 1062.8 L3577.5 1062.9 L3577.7 1063.1 L3577.8 1063.3 L3578 1063.4 L3578.1 1063.5 L3578.3 1063.7 L3578.4 1063.8 L3578.6 1064 L3578.7 1064.1 L3578.9 1064.3 L3579.1 1064.5 L3579.4 1064.8 L3579.6 1065 L3579.9 1065.2 L3580.2 1065.5 L3580.4 1065.7 L3580.7 1066 L3580.9 1066.2 L3581.1 1066.4 L3581.3 1066.6 L3581.5 1066.8 L3581.7 1067 L3581.8 1067.1 L3582 1067.3 L3582.1 1067.4 L3582.3 1067.5 L3582.4 1067.6 L3582.5 1067.7 L3582.5 1067.8 L3582.6 1067.8 L3582.6 1067.9 L3582.6 1067.9 L3582.7 1067.9 L3582.7 1067.9Z"/></clipPath>
<clipPath id="xtr"><path d="M3450.6 981 L2976.4 618.2 L2767.2 1343.8 Z"/></clipPath>
<clipPath id="xf0"><path d="M3450.6 981 L605.4 -1195.6 L-649.8 3157.6 Z"/></clipPath>
<clipPath id="xf1"><path d="M2767.2 1343.8 L6867.6 -832.8 L4022.4 -3009.5 Z"/></clipPath>
<clipPath id="xf2"><path d="M2976.4 618.2 L1721.2 4971.5 L5821.6 2794.9 Z"/></clipPath>
<radialGradient id="xwr"><stop offset="0" stop-color="#fff"/><stop offset=".4" stop-color="#fff" stop-opacity=".9"/><stop offset="1" stop-color="#fff" stop-opacity="0"/></radialGradient>
<linearGradient id="x0" gradientUnits="userSpaceOnUse" x1="2994.1" y1="982.4" x2="3443.5" y2="975.5"><stop offset=".00" stop-color="#fff"/><stop offset=".07" stop-color="#ffc3c2"/><stop offset=".17" stop-color="#ff8c8b"/><stop offset=".32" stop-color="#ff5a59"/><stop offset=".50" stop-color="#ff3735"/><stop offset=".72" stop-color="#ff1b19"/><stop offset="1" stop-color="#ff0401"/></linearGradient>
<linearGradient id="x1" gradientUnits="userSpaceOnUse" x1="2994.1" y1="982.4" x2="3428.8" y2="964.3"><stop offset=".00" stop-color="#fff"/><stop offset=".07" stop-color="#ffc5c4"/><stop offset=".17" stop-color="#ff908d"/><stop offset=".32" stop-color="#ff5f5b"/><stop offset=".50" stop-color="#ff3c36"/><stop offset=".72" stop-color="#ff201a"/><stop offset="1" stop-color="#ff0a01"/></linearGradient>
<linearGradient id="x2" gradientUnits="userSpaceOnUse" x1="2994.1" y1="982.4" x2="3413.9" y2="952.9"><stop offset=".00" stop-color="#fff"/><stop offset=".07" stop-color="#ffc8c5"/><stop offset=".17" stop-color="#ff948f"/><stop offset=".32" stop-color="#ff645d"/><stop offset=".50" stop-color="#ff4138"/><stop offset=".72" stop-color="#ff261a"/><stop offset="1" stop-color="#ff1001"/></linearGradient>
<linearGradient id="x3" gradientUnits="userSpaceOnUse" x1="2994.1" y1="982.4" x2="3399.4" y2="941.9"><stop offset=".00" stop-color="#fff"/><stop offset=".07" stop-color="#ffcac7"/><stop offset=".17" stop-color="#ff9891"/><stop offset=".32" stop-color="#ff6a5f"/><stop offset=".50" stop-color="#ff4739"/><stop offset=".72" stop-color="#ff2c1b"/><stop offset="1" stop-color="#ff1601"/></linearGradient>
<linearGradient id="x4" gradientUnits="userSpaceOnUse" x1="2994.1" y1="982.4" x2="3385.3" y2="931.1"><stop offset=".00" stop-color="#fff"/><stop offset=".07" stop-color="#ffcdc8"/><stop offset=".17" stop-color="#ff9d93"/><stop offset=".32" stop-color="#ff6f60"/><stop offset=".50" stop-color="#ff4d3a"/><stop offset=".72" stop-color="#ff321c"/><stop offset="1" stop-color="#ff1c01"/></linearGradient>
<linearGradient id="x5" gradientUnits="userSpaceOnUse" x1="2994.1" y1="982.4" x2="3371.8" y2="920.8"><stop offset=".00" stop-color="#fff"/><stop offset=".07" stop-color="#ffcfc9"/><stop offset=".17" stop-color="#ffa195"/><stop offset=".32" stop-color="#ff7462"/><stop offset=".50" stop-color="#ff523c"/><stop offset=".72" stop-color="#ff381d"/><stop offset="1" stop-color="#ff2201"/></linearGradient>
<linearGradient id="x6" gradientUnits="userSpaceOnUse" x1="2994.1" y1="982.4" x2="3359.1" y2="911"><stop offset=".00" stop-color="#fff"/><stop offset=".07" stop-color="#ffd2cb"/><stop offset=".17" stop-color="#ffa597"/><stop offset=".32" stop-color="#ff7964"/><stop offset=".50" stop-color="#ff583d"/><stop offset=".72" stop-color="#ff3e1d"/><stop offset="1" stop-color="#ff2801"/></linearGradient>
<linearGradient id="x7" gradientUnits="userSpaceOnUse" x1="2994.1" y1="982.4" x2="3347" y2="901.8"><stop offset=".00" stop-color="#fff"/><stop offset=".07" stop-color="#ffd4cc"/><stop offset=".17" stop-color="#ffa999"/><stop offset=".32" stop-color="#ff7e66"/><stop offset=".50" stop-color="#ff5e3f"/><stop offset=".72" stop-color="#ff441e"/><stop offset="1" stop-color="#ff2e01"/></linearGradient>
<linearGradient id="x8" gradientUnits="userSpaceOnUse" x1="2994.1" y1="982.4" x2="3335.5" y2="893"><stop offset=".00" stop-color="#fff"/><stop offset=".07" stop-color="#ffd6cd"/><stop offset=".17" stop-color="#ffad9b"/><stop offset=".32" stop-color="#ff8368"/><stop offset=".50" stop-color="#ff6340"/><stop offset=".72" stop-color="#ff4a1f"/><stop offset="1" stop-color="#ff3401"/></linearGradient>
<linearGradient id="x9" gradientUnits="userSpaceOnUse" x1="2994.1" y1="982.4" x2="3324.6" y2="884.6"><stop offset=".00" stop-color="#fff"/><stop offset=".07" stop-color="#ffd8cf"/><stop offset=".17" stop-color="#ffb09d"/><stop offset=".32" stop-color="#ff886a"/><stop offset=".50" stop-color="#ff6941"/><stop offset=".72" stop-color="#ff4f20"/><stop offset="1" stop-color="#ff3a01"/></linearGradient>
<linearGradient id="x10" gradientUnits="userSpaceOnUse" x1="2994.1" y1="982.4" x2="3314.1" y2="876.6"><stop offset=".00" stop-color="#fff"/><stop offset=".07" stop-color="#ffdad0"/><stop offset=".17" stop-color="#ffb49e"/><stop offset=".32" stop-color="#ff8d6c"/><stop offset=".50" stop-color="#ff6e43"/><stop offset=".72" stop-color="#ff5521"/><stop offset="1" stop-color="#ff4001"/></linearGradient>
<linearGradient id="x11" gradientUnits="userSpaceOnUse" x1="2994.1" y1="982.4" x2="3304" y2="868.8"><stop offset=".00" stop-color="#fff"/><stop offset=".07" stop-color="#ffdcd1"/><stop offset=".17" stop-color="#ffb8a0"/><stop offset=".32" stop-color="#ff926e"/><stop offset=".50" stop-color="#ff7444"/><stop offset=".72" stop-color="#ff5b21"/><stop offset="1" stop-color="#ff4701"/></linearGradient>
<linearGradient id="x12" gradientUnits="userSpaceOnUse" x1="2994.1" y1="982.4" x2="3294.5" y2="861.6"><stop offset=".00" stop-color="#fff"/><stop offset=".07" stop-color="#ffded2"/><stop offset=".17" stop-color="#ffbba2"/><stop offset=".32" stop-color="#ff976f"/><stop offset=".50" stop-color="#ff7946"/><stop offset=".72" stop-color="#ff6122"/><stop offset="1" stop-color="#ff4d01"/></linearGradient>
<linearGradient id="x13" gradientUnits="userSpaceOnUse" x1="2994.1" y1="982.4" x2="3285.5" y2="854.7"><stop offset=".00" stop-color="#fff"/><stop offset=".07" stop-color="#ffe0d3"/><stop offset=".17" stop-color="#ffbea4"/><stop offset=".32" stop-color="#ff9b71"/><stop offset=".50" stop-color="#ff7f47"/><stop offset=".72" stop-color="#ff6723"/><stop offset="1" stop-color="#ff5301"/></linearGradient>
<linearGradient id="x14" gradientUnits="userSpaceOnUse" x1="2994.1" y1="982.4" x2="3277" y2="848.2"><stop offset=".00" stop-color="#fff"/><stop offset=".07" stop-color="#ffe2d4"/><stop offset=".17" stop-color="#ffc2a5"/><stop offset=".32" stop-color="#ffa073"/><stop offset=".50" stop-color="#ff8448"/><stop offset=".72" stop-color="#ff6d24"/><stop offset="1" stop-color="#ff5901"/></linearGradient>
<linearGradient id="x15" gradientUnits="userSpaceOnUse" x1="2994.1" y1="982.4" x2="3268.9" y2="842"><stop offset=".00" stop-color="#fff"/><stop offset=".07" stop-color="#ffe3d5"/><stop offset=".17" stop-color="#ffc5a7"/><stop offset=".32" stop-color="#ffa474"/><stop offset=".50" stop-color="#ff894a"/><stop offset=".72" stop-color="#ff7225"/><stop offset="1" stop-color="#ff5f01"/></linearGradient>
<linearGradient id="x16" gradientUnits="userSpaceOnUse" x1="2994.1" y1="982.4" x2="3261.1" y2="836.1"><stop offset=".00" stop-color="#fff"/><stop offset=".07" stop-color="#ffe5d6"/><stop offset=".17" stop-color="#ffc8a8"/><stop offset=".32" stop-color="#ffa976"/><stop offset=".50" stop-color="#ff8e4b"/><stop offset=".72" stop-color="#ff7825"/><stop offset="1" stop-color="#ff6501"/></linearGradient>
<linearGradient id="x17" gradientUnits="userSpaceOnUse" x1="2994.1" y1="982.4" x2="3253.8" y2="830.4"><stop offset=".00" stop-color="#fff"/><stop offset=".07" stop-color="#ffe6d7"/><stop offset=".17" stop-color="#ffcbaa"/><stop offset=".32" stop-color="#ffad78"/><stop offset=".50" stop-color="#ff944d"/><stop offset=".72" stop-color="#ff7e26"/><stop offset="1" stop-color="#ff6b01"/></linearGradient>
<linearGradient id="x18" gradientUnits="userSpaceOnUse" x1="2994.1" y1="982.4" x2="3246.6" y2="825"><stop offset=".00" stop-color="#fff"/><stop offset=".07" stop-color="#ffe8d8"/><stop offset=".17" stop-color="#ffceab"/><stop offset=".32" stop-color="#ffb179"/><stop offset=".50" stop-color="#ff994e"/><stop offset=".72" stop-color="#ff8427"/><stop offset="1" stop-color="#ff7101"/></linearGradient>
<linearGradient id="x19" gradientUnits="userSpaceOnUse" x1="2994.1" y1="982.4" x2="3239.7" y2="819.7"><stop offset=".00" stop-color="#fff"/><stop offset=".07" stop-color="#ffe9d9"/><stop offset=".17" stop-color="#ffd1ad"/><stop offset=".32" stop-color="#ffb57b"/><stop offset=".50" stop-color="#ff9e4f"/><stop offset=".72" stop-color="#ff8928"/><stop offset="1" stop-color="#ff7701"/></linearGradient>
<linearGradient id="x20" gradientUnits="userSpaceOnUse" x1="2994.1" y1="982.4" x2="3233.2" y2="814.7"><stop offset=".00" stop-color="#fff"/><stop offset=".07" stop-color="#ffebd9"/><stop offset=".17" stop-color="#ffd3ae"/><stop offset=".32" stop-color="#ffb97c"/><stop offset=".50" stop-color="#ffa351"/><stop offset=".72" stop-color="#ff8f29"/><stop offset="1" stop-color="#ff7e01"/></linearGradient>
<linearGradient id="x21" gradientUnits="userSpaceOnUse" x1="2994.1" y1="982.4" x2="3227" y2="809.9"><stop offset=".00" stop-color="#fff"/><stop offset=".07" stop-color="#ffecda"/><stop offset=".17" stop-color="#ffd6af"/><stop offset=".32" stop-color="#ffbd7e"/><stop offset=".50" stop-color="#ffa852"/><stop offset=".72" stop-color="#ff9529"/><stop offset="1" stop-color="#ff8401"/></linearGradient>
<linearGradient id="x22" gradientUnits="userSpaceOnUse" x1="2994.1" y1="982.4" x2="3221" y2="805.4"><stop offset=".00" stop-color="#fff"/><stop offset=".07" stop-color="#ffeddb"/><stop offset=".17" stop-color="#ffd9b1"/><stop offset=".32" stop-color="#ffc17f"/><stop offset=".50" stop-color="#ffad53"/><stop offset=".72" stop-color="#ff9a2a"/><stop offset="1" stop-color="#ff8a01"/></linearGradient>
<linearGradient id="x23" gradientUnits="userSpaceOnUse" x1="2994.1" y1="982.4" x2="3215.3" y2="801"><stop offset=".00" stop-color="#fff"/><stop offset=".07" stop-color="#ffefdc"/><stop offset=".17" stop-color="#ffdbb2"/><stop offset=".32" stop-color="#ffc581"/><stop offset=".50" stop-color="#ffb154"/><stop offset=".72" stop-color="#ffa02b"/><stop offset="1" stop-color="#ff9001"/></linearGradient>
<linearGradient id="x24" gradientUnits="userSpaceOnUse" x1="2994.1" y1="982.4" x2="3209.7" y2="796.7"><stop offset=".00" stop-color="#fff"/><stop offset=".07" stop-color="#fff0dc"/><stop offset=".17" stop-color="#ffdeb3"/><stop offset=".32" stop-color="#ffc982"/><stop offset=".50" stop-color="#ffb656"/><stop offset=".72" stop-color="#ffa62c"/><stop offset="1" stop-color="#ff9601"/></linearGradient>
<linearGradient id="x25" gradientUnits="userSpaceOnUse" x1="2994.1" y1="982.4" x2="3204.4" y2="792.6"><stop offset=".00" stop-color="#fff"/><stop offset=".07" stop-color="#fff1dd"/><stop offset=".17" stop-color="#ffe0b4"/><stop offset=".32" stop-color="#ffcd84"/><stop offset=".50" stop-color="#ffbb57"/><stop offset=".72" stop-color="#ffab2c"/><stop offset="1" stop-color="#ff9d01"/></linearGradient>
<linearGradient id="x26" gradientUnits="userSpaceOnUse" x1="2994.1" y1="982.4" x2="3199.2" y2="788.7"><stop offset=".00" stop-color="#fff"/><stop offset=".07" stop-color="#fff2de"/><stop offset=".17" stop-color="#ffe3b5"/><stop offset=".32" stop-color="#ffd085"/><stop offset=".50" stop-color="#ffc058"/><stop offset=".72" stop-color="#ffb12d"/><stop offset="1" stop-color="#ffa301"/></linearGradient>
<linearGradient id="x27" gradientUnits="userSpaceOnUse" x1="2994.1" y1="982.4" x2="3194.3" y2="784.9"><stop offset=".00" stop-color="#fff"/><stop offset=".07" stop-color="#fff3de"/><stop offset=".17" stop-color="#ffe5b7"/><stop offset=".32" stop-color="#ffd487"/><stop offset=".50" stop-color="#ffc559"/><stop offset=".72" stop-color="#ffb62e"/><stop offset="1" stop-color="#ffa901"/></linearGradient>
<linearGradient id="x28" gradientUnits="userSpaceOnUse" x1="2994.1" y1="982.4" x2="3189.5" y2="781.3"><stop offset=".00" stop-color="#fff"/><stop offset=".07" stop-color="#fff4df"/><stop offset=".17" stop-color="#ffe7b8"/><stop offset=".32" stop-color="#ffd888"/><stop offset=".50" stop-color="#ffc95b"/><stop offset=".72" stop-color="#ffbc2f"/><stop offset="1" stop-color="#ffb001"/></linearGradient>
<linearGradient id="x29" gradientUnits="userSpaceOnUse" x1="2994.1" y1="982.4" x2="3184.9" y2="777.8"><stop offset=".00" stop-color="#fff"/><stop offset=".07" stop-color="#fff5e0"/><stop offset=".17" stop-color="#ffe9b9"/><stop offset=".32" stop-color="#ffdb89"/><stop offset=".50" stop-color="#ffce5c"/><stop offset=".72" stop-color="#ffc130"/><stop offset="1" stop-color="#ffb601"/></linearGradient>
<linearGradient id="x30" gradientUnits="userSpaceOnUse" x1="2994.1" y1="982.4" x2="3180.6" y2="774.4"><stop offset=".00" stop-color="#fff"/><stop offset=".07" stop-color="#fff6e0"/><stop offset=".17" stop-color="#ffecba"/><stop offset=".32" stop-color="#ffdf8b"/><stop offset=".50" stop-color="#ffd25d"/><stop offset=".72" stop-color="#ffc730"/><stop offset="1" stop-color="#ffbc01"/></linearGradient>
<linearGradient id="x31" gradientUnits="userSpaceOnUse" x1="2994.1" y1="982.4" x2="3176.4" y2="771.2"><stop offset=".00" stop-color="#fff"/><stop offset=".07" stop-color="#fff7e1"/><stop offset=".17" stop-color="#feb"/><stop offset=".32" stop-color="#ffe28c"/><stop offset=".50" stop-color="#ffd75e"/><stop offset=".72" stop-color="#ffcc31"/><stop offset="1" stop-color="#ffc201"/></linearGradient>
<linearGradient id="x32" gradientUnits="userSpaceOnUse" x1="2994.1" y1="982.4" x2="3172.4" y2="768.2"><stop offset=".00" stop-color="#fff"/><stop offset=".07" stop-color="#fff8e1"/><stop offset=".17" stop-color="#fff0bc"/><stop offset=".32" stop-color="#ffe58d"/><stop offset=".50" stop-color="#ffdb5f"/><stop offset=".72" stop-color="#ffd232"/><stop offset="1" stop-color="#ffc901"/></linearGradient>
<linearGradient id="x33" gradientUnits="userSpaceOnUse" x1="2994.1" y1="982.4" x2="3168.5" y2="765.2"><stop offset=".00" stop-color="#fff"/><stop offset=".07" stop-color="#fff9e2"/><stop offset=".17" stop-color="#fff2bd"/><stop offset=".32" stop-color="#ffe88e"/><stop offset=".50" stop-color="#ffe061"/><stop offset=".72" stop-color="#ffd733"/><stop offset="1" stop-color="#ffcf01"/></linearGradient>
<linearGradient id="x34" gradientUnits="userSpaceOnUse" x1="2994.1" y1="982.4" x2="3164.7" y2="762.3"><stop offset=".00" stop-color="#fff"/><stop offset=".07" stop-color="#fffae2"/><stop offset=".17" stop-color="#fff4be"/><stop offset=".32" stop-color="#ffec90"/><stop offset=".50" stop-color="#ffe462"/><stop offset=".72" stop-color="#ffdc33"/><stop offset="1" stop-color="#ffd501"/></linearGradient>
<linearGradient id="x35" gradientUnits="userSpaceOnUse" x1="2994.1" y1="982.4" x2="3161.1" y2="759.6"><stop offset=".00" stop-color="#fff"/><stop offset=".07" stop-color="#fffbe3"/><stop offset=".17" stop-color="#fff5bf"/><stop offset=".32" stop-color="#ffef91"/><stop offset=".50" stop-color="#ffe863"/><stop offset=".72" stop-color="#ffe234"/><stop offset="1" stop-color="#ffdb01"/></linearGradient>
<linearGradient id="x36" gradientUnits="userSpaceOnUse" x1="2994.1" y1="982.4" x2="3157.6" y2="756.8"><stop offset=".00" stop-color="#fff"/><stop offset=".07" stop-color="#fffce3"/><stop offset=".17" stop-color="#fff7c0"/><stop offset=".32" stop-color="#fff292"/><stop offset=".50" stop-color="#ffec64"/><stop offset=".72" stop-color="#ffe735"/><stop offset="1" stop-color="#ffe201"/></linearGradient>
<linearGradient id="x37" gradientUnits="userSpaceOnUse" x1="2994.1" y1="982.4" x2="3154.2" y2="754.2"><stop offset=".00" stop-color="#fff"/><stop offset=".07" stop-color="#fffce4"/><stop offset=".17" stop-color="#fff9c1"/><stop offset=".32" stop-color="#fff593"/><stop offset=".50" stop-color="#fff065"/><stop offset=".72" stop-color="#ffec36"/><stop offset="1" stop-color="#ffe801"/></linearGradient>
<linearGradient id="x38" gradientUnits="userSpaceOnUse" x1="2994.1" y1="982.4" x2="3151" y2="751.8"><stop offset=".00" stop-color="#fff"/><stop offset=".07" stop-color="#fffde4"/><stop offset=".17" stop-color="#fffbc1"/><stop offset=".32" stop-color="#fff794"/><stop offset=".50" stop-color="#fff466"/><stop offset=".72" stop-color="#fff136"/><stop offset="1" stop-color="#ffee01"/></linearGradient>
<linearGradient id="x39" gradientUnits="userSpaceOnUse" x1="2994.1" y1="982.4" x2="3147.8" y2="749.4"><stop offset=".00" stop-color="#fff"/><stop offset=".07" stop-color="#fffee5"/><stop offset=".17" stop-color="#fffcc2"/><stop offset=".32" stop-color="#fffa95"/><stop offset=".50" stop-color="#fff867"/><stop offset=".72" stop-color="#fff737"/><stop offset="1" stop-color="#fff501"/></linearGradient>
<linearGradient id="x40" gradientUnits="userSpaceOnUse" x1="2994.1" y1="982.4" x2="3144.7" y2="747"><stop offset=".00" stop-color="#fff"/><stop offset=".07" stop-color="#ffffe5"/><stop offset=".17" stop-color="#fffec3"/><stop offset=".32" stop-color="#fffd96"/><stop offset=".50" stop-color="#fffd68"/><stop offset=".72" stop-color="#fffc38"/><stop offset="1" stop-color="#fffb01"/></linearGradient>
<linearGradient id="x41" gradientUnits="userSpaceOnUse" x1="2994.1" y1="982.4" x2="3141.5" y2="744.5"><stop offset=".00" stop-color="#fff"/><stop offset=".07" stop-color="#ffffe5"/><stop offset=".17" stop-color="#feffc3"/><stop offset=".32" stop-color="#feff97"/><stop offset=".50" stop-color="#fdff69"/><stop offset=".72" stop-color="#fdff38"/><stop offset="1" stop-color="#fcff01"/></linearGradient>
<linearGradient id="x42" gradientUnits="userSpaceOnUse" x1="2994.1" y1="982.4" x2="3138.3" y2="742.1"><stop offset=".00" stop-color="#fff"/><stop offset=".07" stop-color="#feffe5"/><stop offset=".17" stop-color="#fdffc3"/><stop offset=".32" stop-color="#fbff96"/><stop offset=".50" stop-color="#f9ff68"/><stop offset=".72" stop-color="#f7ff38"/><stop offset="1" stop-color="#f5ff01"/></linearGradient>
<linearGradient id="x43" gradientUnits="userSpaceOnUse" x1="2994.1" y1="982.4" x2="3135.1" y2="739.7"><stop offset=".00" stop-color="#fff"/><stop offset=".07" stop-color="#fdffe5"/><stop offset=".17" stop-color="#fbffc2"/><stop offset=".32" stop-color="#f8ff96"/><stop offset=".50" stop-color="#f5ff67"/><stop offset=".72" stop-color="#f2ff37"/><stop offset="1" stop-color="#efff01"/></linearGradient>
<linearGradient id="x44" gradientUnits="userSpaceOnUse" x1="2994.1" y1="982.4" x2="3132" y2="737.2"><stop offset=".00" stop-color="#fff"/><stop offset=".07" stop-color="#fcffe4"/><stop offset=".17" stop-color="#f9ffc2"/><stop offset=".32" stop-color="#f5ff95"/><stop offset=".50" stop-color="#f1ff67"/><stop offset=".72" stop-color="#edff37"/><stop offset="1" stop-color="#e8ff01"/></linearGradient>
<linearGradient id="x45" gradientUnits="userSpaceOnUse" x1="2994.1" y1="982.4" x2="3128.8" y2="734.8"><stop offset=".00" stop-color="#fff"/><stop offset=".07" stop-color="#fcffe4"/><stop offset=".17" stop-color="#f7ffc2"/><stop offset=".32" stop-color="#f2ff94"/><stop offset=".50" stop-color="#edff66"/><stop offset=".72" stop-color="#e7ff37"/><stop offset="1" stop-color="#e2ff01"/></linearGradient>
<linearGradient id="x46" gradientUnits="userSpaceOnUse" x1="2994.1" y1="982.4" x2="3125.6" y2="732.4"><stop offset=".00" stop-color="#fff"/><stop offset=".07" stop-color="#fbffe4"/><stop offset=".17" stop-color="#f6ffc1"/><stop offset=".32" stop-color="#efff94"/><stop offset=".50" stop-color="#e9ff66"/><stop offset=".72" stop-color="#e2ff36"/><stop offset="1" stop-color="#dcff01"/></linearGradient>
<linearGradient id="x47" gradientUnits="userSpaceOnUse" x1="2994.1" y1="982.4" x2="3122.4" y2="730"><stop offset=".00" stop-color="#fff"/><stop offset=".07" stop-color="#faffe4"/><stop offset=".17" stop-color="#f4ffc1"/><stop offset=".32" stop-color="#ecff93"/><stop offset=".50" stop-color="#e5ff65"/><stop offset=".72" stop-color="#ddff36"/><stop offset="1" stop-color="#d6ff01"/></linearGradient>
<linearGradient id="x48" gradientUnits="userSpaceOnUse" x1="2994.1" y1="982.4" x2="3119.1" y2="727.4"><stop offset=".00" stop-color="#fff"/><stop offset=".07" stop-color="#f9ffe3"/><stop offset=".17" stop-color="#f2ffc0"/><stop offset=".32" stop-color="#e9ff93"/><stop offset=".50" stop-color="#e0ff65"/><stop offset=".72" stop-color="#d8ff35"/><stop offset="1" stop-color="#cfff01"/></linearGradient>
<linearGradient id="x49" gradientUnits="userSpaceOnUse" x1="2994.1" y1="982.4" x2="3115.5" y2="724.6"><stop offset=".00" stop-color="#fff"/><stop offset=".07" stop-color="#f9ffe3"/><stop offset=".17" stop-color="#f0ffc0"/><stop offset=".32" stop-color="#e6ff92"/><stop offset=".50" stop-color="#dcff64"/><stop offset=".72" stop-color="#d2ff35"/><stop offset="1" stop-color="#c9ff01"/></linearGradient>
<linearGradient id="x50" gradientUnits="userSpaceOnUse" x1="2994.1" y1="982.4" x2="3111.9" y2="721.9"><stop offset=".00" stop-color="#fff"/><stop offset=".07" stop-color="#f8ffe3"/><stop offset=".17" stop-color="#efffbf"/><stop offset=".32" stop-color="#e3ff91"/><stop offset=".50" stop-color="#d8ff63"/><stop offset=".72" stop-color="#cdff35"/><stop offset="1" stop-color="#c2ff01"/></linearGradient>
<linearGradient id="x51" gradientUnits="userSpaceOnUse" x1="2994.1" y1="982.4" x2="3108.4" y2="719.2"><stop offset=".00" stop-color="#fff"/><stop offset=".07" stop-color="#f7ffe3"/><stop offset=".17" stop-color="#edffbf"/><stop offset=".32" stop-color="#e0ff91"/><stop offset=".50" stop-color="#d3ff63"/><stop offset=".72" stop-color="#c7ff34"/><stop offset="1" stop-color="#bcff01"/></linearGradient>
<linearGradient id="x52" gradientUnits="userSpaceOnUse" x1="2994.1" y1="982.4" x2="3104.8" y2="716.4"><stop offset=".00" stop-color="#fff"/><stop offset=".07" stop-color="#f6ffe2"/><stop offset=".17" stop-color="#ebffbe"/><stop offset=".32" stop-color="#ddff90"/><stop offset=".50" stop-color="#cfff62"/><stop offset=".72" stop-color="#c2ff34"/><stop offset="1" stop-color="#b5ff01"/></linearGradient>
<linearGradient id="x53" gradientUnits="userSpaceOnUse" x1="2994.1" y1="982.4" x2="3101.2" y2="713.7"><stop offset=".00" stop-color="#fff"/><stop offset=".07" stop-color="#f5ffe2"/><stop offset=".17" stop-color="#e9ffbe"/><stop offset=".32" stop-color="#daff8f"/><stop offset=".50" stop-color="#cbff62"/><stop offset=".72" stop-color="#bdff33"/><stop offset="1" stop-color="#afff01"/></linearGradient>
<linearGradient id="x54" gradientUnits="userSpaceOnUse" x1="2994.1" y1="982.4" x2="3097.6" y2="711"><stop offset=".00" stop-color="#fff"/><stop offset=".07" stop-color="#f4ffe2"/><stop offset=".17" stop-color="#e7ffbd"/><stop offset=".32" stop-color="#d7ff8f"/><stop offset=".50" stop-color="#c7ff61"/><stop offset=".72" stop-color="#b8ff33"/><stop offset="1" stop-color="#a9ff01"/></linearGradient>
<linearGradient id="x55" gradientUnits="userSpaceOnUse" x1="2994.1" y1="982.4" x2="3093.9" y2="708.1"><stop offset=".00" stop-color="#fff"/><stop offset=".07" stop-color="#f3ffe2"/><stop offset=".17" stop-color="#e5ffbd"/><stop offset=".32" stop-color="#d4ff8e"/><stop offset=".50" stop-color="#c3ff60"/><stop offset=".72" stop-color="#b2ff33"/><stop offset="1" stop-color="#a3ff01"/></linearGradient>
<linearGradient id="x56" gradientUnits="userSpaceOnUse" x1="2994.1" y1="982.4" x2="3089.9" y2="705.1"><stop offset=".00" stop-color="#fff"/><stop offset=".07" stop-color="#f3ffe1"/><stop offset=".17" stop-color="#e3ffbc"/><stop offset=".32" stop-color="#d0ff8d"/><stop offset=".50" stop-color="#beff60"/><stop offset=".72" stop-color="#adff32"/><stop offset="1" stop-color="#9cff01"/></linearGradient>
<linearGradient id="x57" gradientUnits="userSpaceOnUse" x1="2994.1" y1="982.4" x2="3085.9" y2="702"><stop offset=".00" stop-color="#fff"/><stop offset=".07" stop-color="#f2ffe1"/><stop offset=".17" stop-color="#e1ffbc"/><stop offset=".32" stop-color="#cdff8d"/><stop offset=".50" stop-color="#baff5f"/><stop offset=".72" stop-color="#a7ff32"/><stop offset="1" stop-color="#96ff01"/></linearGradient>
<linearGradient id="x58" gradientUnits="userSpaceOnUse" x1="2994.1" y1="982.4" x2="3082" y2="699"><stop offset=".00" stop-color="#fff"/><stop offset=".07" stop-color="#f1ffe1"/><stop offset=".17" stop-color="#dfffbb"/><stop offset=".32" stop-color="#caff8c"/><stop offset=".50" stop-color="#b5ff5e"/><stop offset=".72" stop-color="#a2ff31"/><stop offset="1" stop-color="#8fff01"/></linearGradient>
<linearGradient id="x59" gradientUnits="userSpaceOnUse" x1="2994.1" y1="982.4" x2="3078" y2="696"><stop offset=".00" stop-color="#fff"/><stop offset=".07" stop-color="#f0ffe0"/><stop offset=".17" stop-color="#dfb"/><stop offset=".32" stop-color="#c7ff8b"/><stop offset=".50" stop-color="#b1ff5e"/><stop offset=".72" stop-color="#9dff31"/><stop offset="1" stop-color="#89ff01"/></linearGradient>
<linearGradient id="x60" gradientUnits="userSpaceOnUse" x1="2994.1" y1="982.4" x2="3074" y2="692.9"><stop offset=".00" stop-color="#fff"/><stop offset=".07" stop-color="#efffe0"/><stop offset=".17" stop-color="#dbffba"/><stop offset=".32" stop-color="#c3ff8b"/><stop offset=".50" stop-color="#adff5d"/><stop offset=".72" stop-color="#97ff31"/><stop offset="1" stop-color="#83ff01"/></linearGradient>
<linearGradient id="x61" gradientUnits="userSpaceOnUse" x1="2994.1" y1="982.4" x2="3069.9" y2="689.7"><stop offset=".00" stop-color="#fff"/><stop offset=".07" stop-color="#eeffe0"/><stop offset=".17" stop-color="#d9ffb9"/><stop offset=".32" stop-color="#c0ff8a"/><stop offset=".50" stop-color="#a8ff5d"/><stop offset=".72" stop-color="#92ff30"/><stop offset="1" stop-color="#7dff01"/></linearGradient>
<linearGradient id="x62" gradientUnits="userSpaceOnUse" x1="2994.1" y1="982.4" x2="3065.5" y2="686.4"><stop offset=".00" stop-color="#fff"/><stop offset=".07" stop-color="#edffe0"/><stop offset=".17" stop-color="#d7ffb9"/><stop offset=".32" stop-color="#bdff89"/><stop offset=".50" stop-color="#a4ff5c"/><stop offset=".72" stop-color="#8cff30"/><stop offset="1" stop-color="#76ff01"/></linearGradient>
<linearGradient id="x63" gradientUnits="userSpaceOnUse" x1="2994.1" y1="982.4" x2="3061.1" y2="683.1"><stop offset=".00" stop-color="#fff"/><stop offset=".07" stop-color="#ecffdf"/><stop offset=".17" stop-color="#d5ffb8"/><stop offset=".32" stop-color="#b9ff89"/><stop offset=".50" stop-color="#9fff5b"/><stop offset=".72" stop-color="#87ff2f"/><stop offset="1" stop-color="#70ff01"/></linearGradient>
<linearGradient id="x64" gradientUnits="userSpaceOnUse" x1="2994.1" y1="982.4" x2="3056.8" y2="679.7"><stop offset=".00" stop-color="#fff"/><stop offset=".07" stop-color="#ebffdf"/><stop offset=".17" stop-color="#d3ffb8"/><stop offset=".32" stop-color="#b6ff88"/><stop offset=".50" stop-color="#9bff5b"/><stop offset=".72" stop-color="#81ff2f"/><stop offset="1" stop-color="#6aff01"/></linearGradient>
<linearGradient id="x65" gradientUnits="userSpaceOnUse" x1="2994.1" y1="982.4" x2="3052.4" y2="676.4"><stop offset=".00" stop-color="#fff"/><stop offset=".07" stop-color="#eaffdf"/><stop offset=".17" stop-color="#d1ffb7"/><stop offset=".32" stop-color="#b2ff87"/><stop offset=".50" stop-color="#96ff5a"/><stop offset=".72" stop-color="#7cff2e"/><stop offset="1" stop-color="#63ff01"/></linearGradient>
<linearGradient id="x66" gradientUnits="userSpaceOnUse" x1="2994.1" y1="982.4" x2="3048" y2="673"><stop offset=".00" stop-color="#fff"/><stop offset=".07" stop-color="#e9ffde"/><stop offset=".17" stop-color="#cfffb7"/><stop offset=".32" stop-color="#afff87"/><stop offset=".50" stop-color="#92ff59"/><stop offset=".72" stop-color="#77ff2e"/><stop offset="1" stop-color="#5dff01"/></linearGradient>
<linearGradient id="x67" gradientUnits="userSpaceOnUse" x1="2994.1" y1="982.4" x2="3043.5" y2="669.5"><stop offset=".00" stop-color="#fff"/><stop offset=".07" stop-color="#e8ffde"/><stop offset=".17" stop-color="#cdffb6"/><stop offset=".32" stop-color="#acff86"/><stop offset=".50" stop-color="#8dff59"/><stop offset=".72" stop-color="#71ff2e"/><stop offset="1" stop-color="#57ff01"/></linearGradient>
<linearGradient id="x68" gradientUnits="userSpaceOnUse" x1="2994.1" y1="982.4" x2="3038.7" y2="665.9"><stop offset=".00" stop-color="#fff"/><stop offset=".07" stop-color="#e7ffde"/><stop offset=".17" stop-color="#caffb5"/><stop offset=".32" stop-color="#a8ff85"/><stop offset=".50" stop-color="#89ff58"/><stop offset=".72" stop-color="#6cff2d"/><stop offset="1" stop-color="#51ff01"/></linearGradient>
<linearGradient id="x69" gradientUnits="userSpaceOnUse" x1="2994.1" y1="982.4" x2="3033.9" y2="662.3"><stop offset=".00" stop-color="#fff"/><stop offset=".07" stop-color="#e6ffdd"/><stop offset=".17" stop-color="#c8ffb5"/><stop offset=".32" stop-color="#a5ff85"/><stop offset=".50" stop-color="#84ff58"/><stop offset=".72" stop-color="#66ff2d"/><stop offset="1" stop-color="#4aff01"/></linearGradient>
<linearGradient id="x70" gradientUnits="userSpaceOnUse" x1="2994.1" y1="982.4" x2="3029.2" y2="658.6"><stop offset=".00" stop-color="#fff"/><stop offset=".07" stop-color="#e5ffdd"/><stop offset=".17" stop-color="#c6ffb4"/><stop offset=".32" stop-color="#a1ff84"/><stop offset=".50" stop-color="#80ff57"/><stop offset=".72" stop-color="#61ff2c"/><stop offset="1" stop-color="#44ff01"/></linearGradient>
<linearGradient id="x71" gradientUnits="userSpaceOnUse" x1="2994.1" y1="982.4" x2="3024.4" y2="655"><stop offset=".00" stop-color="#fff"/><stop offset=".07" stop-color="#e4ffdd"/><stop offset=".17" stop-color="#c4ffb4"/><stop offset=".32" stop-color="#9eff83"/><stop offset=".50" stop-color="#7bff56"/><stop offset=".72" stop-color="#5bff2c"/><stop offset="1" stop-color="#3eff01"/></linearGradient>
<linearGradient id="x72" gradientUnits="userSpaceOnUse" x1="2994.1" y1="982.4" x2="3019.7" y2="651.3"><stop offset=".00" stop-color="#fff"/><stop offset=".07" stop-color="#e3ffdc"/><stop offset=".17" stop-color="#c1ffb3"/><stop offset=".32" stop-color="#9aff82"/><stop offset=".50" stop-color="#77ff56"/><stop offset=".72" stop-color="#56ff2c"/><stop offset="1" stop-color="#38ff01"/></linearGradient>
<linearGradient id="x73" gradientUnits="userSpaceOnUse" x1="2994.1" y1="982.4" x2="3014.7" y2="647.5"><stop offset=".00" stop-color="#fff"/><stop offset=".07" stop-color="#e2ffdc"/><stop offset=".17" stop-color="#bfffb3"/><stop offset=".32" stop-color="#97ff82"/><stop offset=".50" stop-color="#72ff55"/><stop offset=".72" stop-color="#51ff2b"/><stop offset="1" stop-color="#31ff01"/></linearGradient>
<linearGradient id="x74" gradientUnits="userSpaceOnUse" x1="2994.1" y1="982.4" x2="3009.5" y2="643.6"><stop offset=".00" stop-color="#fff"/><stop offset=".07" stop-color="#e1ffdc"/><stop offset=".17" stop-color="#bdffb2"/><stop offset=".32" stop-color="#93ff81"/><stop offset=".50" stop-color="#6dff54"/><stop offset=".72" stop-color="#4bff2b"/><stop offset="1" stop-color="#2bff01"/></linearGradient>
<linearGradient id="x75" gradientUnits="userSpaceOnUse" x1="2994.1" y1="982.4" x2="3004.4" y2="639.6"><stop offset=".00" stop-color="#fff"/><stop offset=".07" stop-color="#dfffdb"/><stop offset=".17" stop-color="#baffb1"/><stop offset=".32" stop-color="#8fff80"/><stop offset=".50" stop-color="#69ff54"/><stop offset=".72" stop-color="#45ff2b"/><stop offset="1" stop-color="#24ff01"/></linearGradient>
<linearGradient id="x76" gradientUnits="userSpaceOnUse" x1="2994.1" y1="982.4" x2="2999.2" y2="635.7"><stop offset=".00" stop-color="#fff"/><stop offset=".07" stop-color="#deffdb"/><stop offset=".17" stop-color="#b8ffb1"/><stop offset=".32" stop-color="#8cff80"/><stop offset=".50" stop-color="#64ff53"/><stop offset=".72" stop-color="#40ff2a"/><stop offset="1" stop-color="#1eff01"/></linearGradient>
<linearGradient id="x77" gradientUnits="userSpaceOnUse" x1="2994.1" y1="982.4" x2="2994.1" y2="631.7"><stop offset=".00" stop-color="#fff"/><stop offset=".07" stop-color="#ddffdb"/><stop offset=".17" stop-color="#b6ffb0"/><stop offset=".32" stop-color="#88ff7f"/><stop offset=".50" stop-color="#60ff53"/><stop offset=".72" stop-color="#3bff2a"/><stop offset="1" stop-color="#18ff01"/></linearGradient>
<linearGradient id="x78" gradientUnits="userSpaceOnUse" x1="2994.1" y1="982.4" x2="2988.9" y2="627.8"><stop offset=".00" stop-color="#fff"/><stop offset=".07" stop-color="#dcffda"/><stop offset=".17" stop-color="#b3ffaf"/><stop offset=".32" stop-color="#85ff7e"/><stop offset=".50" stop-color="#5bff52"/><stop offset=".72" stop-color="#35ff29"/><stop offset="1" stop-color="#11ff01"/></linearGradient>
<linearGradient id="x79" gradientUnits="userSpaceOnUse" x1="2994.1" y1="982.4" x2="2983.9" y2="624"><stop offset=".00" stop-color="#fff"/><stop offset=".07" stop-color="#dbffda"/><stop offset=".17" stop-color="#b1ffaf"/><stop offset=".32" stop-color="#82ff7e"/><stop offset=".50" stop-color="#57ff51"/><stop offset=".72" stop-color="#30ff29"/><stop offset="1" stop-color="#0bff01"/></linearGradient>
<linearGradient id="x80" gradientUnits="userSpaceOnUse" x1="2994.1" y1="982.4" x2="2979" y2="620.2"><stop offset=".00" stop-color="#fff"/><stop offset=".07" stop-color="#daffda"/><stop offset=".17" stop-color="#afffae"/><stop offset=".32" stop-color="#7eff7d"/><stop offset=".50" stop-color="#53ff51"/><stop offset=".72" stop-color="#2bff29"/><stop offset="1" stop-color="#05ff01"/></linearGradient>
<linearGradient id="x81" gradientUnits="userSpaceOnUse" x1="2994.1" y1="982.4" x2="2974.6" y2="624.5"><stop offset=".00" stop-color="#fff"/><stop offset=".07" stop-color="#daffda"/><stop offset=".17" stop-color="#aeffaf"/><stop offset=".32" stop-color="#7dff7e"/><stop offset=".50" stop-color="#51ff53"/><stop offset=".72" stop-color="#29ff2b"/><stop offset="1" stop-color="#01ff04"/></linearGradient>
<linearGradient id="x82" gradientUnits="userSpaceOnUse" x1="2994.1" y1="982.4" x2="2970.9" y2="637.4"><stop offset=".00" stop-color="#fff"/><stop offset=".07" stop-color="#daffdb"/><stop offset=".17" stop-color="#afffb2"/><stop offset=".32" stop-color="#7eff82"/><stop offset=".50" stop-color="#52ff57"/><stop offset=".72" stop-color="#29ff30"/><stop offset="1" stop-color="#01ff0a"/></linearGradient>
<linearGradient id="x83" gradientUnits="userSpaceOnUse" x1="2994.1" y1="982.4" x2="2967" y2="650.9"><stop offset=".00" stop-color="#fff"/><stop offset=".07" stop-color="#dbffdd"/><stop offset=".17" stop-color="#b0ffb4"/><stop offset=".32" stop-color="#7fff86"/><stop offset=".50" stop-color="#53ff5c"/><stop offset=".72" stop-color="#2aff35"/><stop offset="1" stop-color="#01ff10"/></linearGradient>
<linearGradient id="x84" gradientUnits="userSpaceOnUse" x1="2994.1" y1="982.4" x2="2963.1" y2="664.3"><stop offset=".00" stop-color="#fff"/><stop offset=".07" stop-color="#dbffde"/><stop offset=".17" stop-color="#b2ffb7"/><stop offset=".32" stop-color="#81ff89"/><stop offset=".50" stop-color="#54ff60"/><stop offset=".72" stop-color="#2bff3a"/><stop offset="1" stop-color="#01ff16"/></linearGradient>
<linearGradient id="x85" gradientUnits="userSpaceOnUse" x1="2994.1" y1="982.4" x2="2959.3" y2="677.5"><stop offset=".00" stop-color="#fff"/><stop offset=".07" stop-color="#dcffdf"/><stop offset=".17" stop-color="#b3ffb9"/><stop offset=".32" stop-color="#82ff8d"/><stop offset=".50" stop-color="#55ff65"/><stop offset=".72" stop-color="#2bff40"/><stop offset="1" stop-color="#01ff1d"/></linearGradient>
<linearGradient id="x86" gradientUnits="userSpaceOnUse" x1="2994.1" y1="982.4" x2="2955.6" y2="690.5"><stop offset=".00" stop-color="#fff"/><stop offset=".07" stop-color="#ddffe0"/><stop offset=".17" stop-color="#b4ffbc"/><stop offset=".32" stop-color="#83ff91"/><stop offset=".50" stop-color="#56ff6a"/><stop offset=".72" stop-color="#2cff45"/><stop offset="1" stop-color="#01ff23"/></linearGradient>
<linearGradient id="x87" gradientUnits="userSpaceOnUse" x1="2994.1" y1="982.4" x2="2951.9" y2="703.2"><stop offset=".00" stop-color="#fff"/><stop offset=".07" stop-color="#ddffe2"/><stop offset=".17" stop-color="#b5ffbf"/><stop offset=".32" stop-color="#84ff95"/><stop offset=".50" stop-color="#57ff6f"/><stop offset=".72" stop-color="#2dff4b"/><stop offset="1" stop-color="#01ff29"/></linearGradient>
<linearGradient id="x88" gradientUnits="userSpaceOnUse" x1="2994.1" y1="982.4" x2="2948.3" y2="715.7"><stop offset=".00" stop-color="#fff"/><stop offset=".07" stop-color="#deffe3"/><stop offset=".17" stop-color="#b6ffc1"/><stop offset=".32" stop-color="#85ff99"/><stop offset=".50" stop-color="#58ff73"/><stop offset=".72" stop-color="#2dff50"/><stop offset="1" stop-color="#01ff2f"/></linearGradient>
<linearGradient id="x89" gradientUnits="userSpaceOnUse" x1="2994.1" y1="982.4" x2="2944.8" y2="728"><stop offset=".00" stop-color="#fff"/><stop offset=".07" stop-color="#deffe4"/><stop offset=".17" stop-color="#b7ffc4"/><stop offset=".32" stop-color="#87ff9d"/><stop offset=".50" stop-color="#59ff78"/><stop offset=".72" stop-color="#2eff56"/><stop offset="1" stop-color="#01ff35"/></linearGradient>
<linearGradient id="x90" gradientUnits="userSpaceOnUse" x1="2994.1" y1="982.4" x2="2941.4" y2="739.7"><stop offset=".00" stop-color="#fff"/><stop offset=".07" stop-color="#dfffe5"/><stop offset=".17" stop-color="#b8ffc6"/><stop offset=".32" stop-color="#88ffa0"/><stop offset=".50" stop-color="#5bff7d"/><stop offset=".72" stop-color="#2fff5b"/><stop offset="1" stop-color="#01ff3b"/></linearGradient>
<linearGradient id="x91" gradientUnits="userSpaceOnUse" x1="2994.1" y1="982.4" x2="2938.1" y2="751.2"><stop offset=".00" stop-color="#fff"/><stop offset=".07" stop-color="#dfffe6"/><stop offset=".17" stop-color="#b9ffc8"/><stop offset=".32" stop-color="#89ffa4"/><stop offset=".50" stop-color="#5cff82"/><stop offset=".72" stop-color="#2fff61"/><stop offset="1" stop-color="#01ff42"/></linearGradient>
<linearGradient id="x92" gradientUnits="userSpaceOnUse" x1="2994.1" y1="982.4" x2="2934.8" y2="762.5"><stop offset=".00" stop-color="#fff"/><stop offset=".07" stop-color="#e0ffe8"/><stop offset=".17" stop-color="#baffcb"/><stop offset=".32" stop-color="#8affa8"/><stop offset=".50" stop-color="#5dff86"/><stop offset=".72" stop-color="#30ff66"/><stop offset="1" stop-color="#01ff48"/></linearGradient>
<linearGradient id="x93" gradientUnits="userSpaceOnUse" x1="2994.1" y1="982.4" x2="2931.7" y2="773.3"><stop offset=".00" stop-color="#fff"/><stop offset=".07" stop-color="#e0ffe9"/><stop offset=".17" stop-color="#baffcd"/><stop offset=".32" stop-color="#8bffab"/><stop offset=".50" stop-color="#5eff8b"/><stop offset=".72" stop-color="#31ff6c"/><stop offset="1" stop-color="#01ff4e"/></linearGradient>
<linearGradient id="x94" gradientUnits="userSpaceOnUse" x1="2994.1" y1="982.4" x2="2928.6" y2="783.9"><stop offset=".00" stop-color="#fff"/><stop offset=".07" stop-color="#e1ffea"/><stop offset=".17" stop-color="#bbffcf"/><stop offset=".32" stop-color="#8cffaf"/><stop offset=".50" stop-color="#5fff90"/><stop offset=".72" stop-color="#32ff71"/><stop offset="1" stop-color="#01ff54"/></linearGradient>
<linearGradient id="x95" gradientUnits="userSpaceOnUse" x1="2994.1" y1="982.4" x2="2925.7" y2="794.2"><stop offset=".00" stop-color="#fff"/><stop offset=".07" stop-color="#e1ffeb"/><stop offset=".17" stop-color="#bcffd2"/><stop offset=".32" stop-color="#8effb2"/><stop offset=".50" stop-color="#60ff94"/><stop offset=".72" stop-color="#32ff77"/><stop offset="1" stop-color="#01ff5a"/></linearGradient>
<linearGradient id="x96" gradientUnits="userSpaceOnUse" x1="2994.1" y1="982.4" x2="2922.8" y2="804.1"><stop offset=".00" stop-color="#fff"/><stop offset=".07" stop-color="#e2ffec"/><stop offset=".17" stop-color="#bdffd4"/><stop offset=".32" stop-color="#8fffb6"/><stop offset=".50" stop-color="#61ff99"/><stop offset=".72" stop-color="#33ff7c"/><stop offset="1" stop-color="#01ff60"/></linearGradient>
<linearGradient id="x97" gradientUnits="userSpaceOnUse" x1="2994.1" y1="982.4" x2="2920.1" y2="813.7"><stop offset=".00" stop-color="#fff"/><stop offset=".07" stop-color="#e2ffed"/><stop offset=".17" stop-color="#beffd6"/><stop offset=".32" stop-color="#90ffb9"/><stop offset=".50" stop-color="#62ff9d"/><stop offset=".72" stop-color="#34ff82"/><stop offset="1" stop-color="#01ff66"/></linearGradient>
<linearGradient id="x98" gradientUnits="userSpaceOnUse" x1="2994.1" y1="982.4" x2="2917.4" y2="823"><stop offset=".00" stop-color="#fff"/><stop offset=".07" stop-color="#e3ffee"/><stop offset=".17" stop-color="#bfffd8"/><stop offset=".32" stop-color="#91ffbd"/><stop offset=".50" stop-color="#63ffa2"/><stop offset=".72" stop-color="#34ff87"/><stop offset="1" stop-color="#01ff6d"/></linearGradient>
<linearGradient id="x99" gradientUnits="userSpaceOnUse" x1="2994.1" y1="982.4" x2="2914.7" y2="832.2"><stop offset=".00" stop-color="#fff"/><stop offset=".07" stop-color="#e3ffef"/><stop offset=".17" stop-color="#c0ffda"/><stop offset=".32" stop-color="#92ffc0"/><stop offset=".50" stop-color="#64ffa6"/><stop offset=".72" stop-color="#35ff8c"/><stop offset="1" stop-color="#01ff73"/></linearGradient>
<linearGradient id="x100" gradientUnits="userSpaceOnUse" x1="2994.1" y1="982.4" x2="2912.2" y2="841"><stop offset=".00" stop-color="#fff"/><stop offset=".07" stop-color="#e4fff0"/><stop offset=".17" stop-color="#c1ffdc"/><stop offset=".32" stop-color="#93ffc3"/><stop offset=".50" stop-color="#65ffaa"/><stop offset=".72" stop-color="#36ff92"/><stop offset="1" stop-color="#01ff79"/></linearGradient>
<linearGradient id="x101" gradientUnits="userSpaceOnUse" x1="2994.1" y1="982.4" x2="2909.7" y2="849.7"><stop offset=".00" stop-color="#fff"/><stop offset=".07" stop-color="#e4fff1"/><stop offset=".17" stop-color="#c1ffde"/><stop offset=".32" stop-color="#94ffc6"/><stop offset=".50" stop-color="#66ffaf"/><stop offset=".72" stop-color="#36ff97"/><stop offset="1" stop-color="#01ff7f"/></linearGradient>
<linearGradient id="x102" gradientUnits="userSpaceOnUse" x1="2994.1" y1="982.4" x2="2907.3" y2="858.1"><stop offset=".00" stop-color="#fff"/><stop offset=".07" stop-color="#e4fff1"/><stop offset=".17" stop-color="#c2ffe0"/><stop offset=".32" stop-color="#95ffca"/><stop offset=".50" stop-color="#67ffb3"/><stop offset=".72" stop-color="#37ff9c"/><stop offset="1" stop-color="#01ff86"/></linearGradient>
<linearGradient id="x103" gradientUnits="userSpaceOnUse" x1="2994.1" y1="982.4" x2="2904.9" y2="866.3"><stop offset=".00" stop-color="#fff"/><stop offset=".07" stop-color="#e5fff2"/><stop offset=".17" stop-color="#c3ffe2"/><stop offset=".32" stop-color="#96ffcd"/><stop offset=".50" stop-color="#68ffb7"/><stop offset=".72" stop-color="#38ffa2"/><stop offset="1" stop-color="#01ff8c"/></linearGradient>
<linearGradient id="x104" gradientUnits="userSpaceOnUse" x1="2994.1" y1="982.4" x2="2902.6" y2="874.2"><stop offset=".00" stop-color="#fff"/><stop offset=".07" stop-color="#e5fff3"/><stop offset=".17" stop-color="#c4ffe4"/><stop offset=".32" stop-color="#97ffd0"/><stop offset=".50" stop-color="#69ffbc"/><stop offset=".72" stop-color="#39ffa7"/><stop offset="1" stop-color="#01ff92"/></linearGradient>
<linearGradient id="x105" gradientUnits="userSpaceOnUse" x1="2994.1" y1="982.4" x2="2900.4" y2="881.9"><stop offset=".00" stop-color="#fff"/><stop offset=".07" stop-color="#e6fff4"/><stop offset=".17" stop-color="#c4ffe6"/><stop offset=".32" stop-color="#98ffd3"/><stop offset=".50" stop-color="#6affc0"/><stop offset=".72" stop-color="#39ffac"/><stop offset="1" stop-color="#01ff98"/></linearGradient>
<linearGradient id="x106" gradientUnits="userSpaceOnUse" x1="2994.1" y1="982.4" x2="2898.3" y2="889.3"><stop offset=".00" stop-color="#fff"/><stop offset=".07" stop-color="#e6fff5"/><stop offset=".17" stop-color="#c5ffe8"/><stop offset=".32" stop-color="#99ffd6"/><stop offset=".50" stop-color="#6bffc4"/><stop offset=".72" stop-color="#3affb1"/><stop offset="1" stop-color="#01ff9e"/></linearGradient>
<linearGradient id="x107" gradientUnits="userSpaceOnUse" x1="2994.1" y1="982.4" x2="2896.2" y2="896.5"><stop offset=".00" stop-color="#fff"/><stop offset=".07" stop-color="#e6fff6"/><stop offset=".17" stop-color="#c6ffe9"/><stop offset=".32" stop-color="#9affd9"/><stop offset=".50" stop-color="#6cffc8"/><stop offset=".72" stop-color="#3bffb7"/><stop offset="1" stop-color="#01ffa5"/></linearGradient>
<linearGradient id="x108" gradientUnits="userSpaceOnUse" x1="2994.1" y1="982.4" x2="2894.1" y2="903.7"><stop offset=".00" stop-color="#fff"/><stop offset=".07" stop-color="#e7fff6"/><stop offset=".17" stop-color="#c7ffeb"/><stop offset=".32" stop-color="#9bffdc"/><stop offset=".50" stop-color="#6dffcc"/><stop offset=".72" stop-color="#3bffbc"/><stop offset="1" stop-color="#01ffab"/></linearGradient>
<linearGradient id="x109" gradientUnits="userSpaceOnUse" x1="2994.1" y1="982.4" x2="2892.1" y2="910.7"><stop offset=".00" stop-color="#fff"/><stop offset=".07" stop-color="#e7fff7"/><stop offset=".17" stop-color="#c7ffed"/><stop offset=".32" stop-color="#9cffdf"/><stop offset=".50" stop-color="#6effd0"/><stop offset=".72" stop-color="#3cffc1"/><stop offset="1" stop-color="#01ffb1"/></linearGradient>
<linearGradient id="x110" gradientUnits="userSpaceOnUse" x1="2994.1" y1="982.4" x2="2890.2" y2="917.4"><stop offset=".00" stop-color="#fff"/><stop offset=".07" stop-color="#e7fff8"/><stop offset=".17" stop-color="#c8ffee"/><stop offset=".32" stop-color="#9dffe2"/><stop offset=".50" stop-color="#6fffd4"/><stop offset=".72" stop-color="#3dffc6"/><stop offset="1" stop-color="#01ffb7"/></linearGradient>
<linearGradient id="x111" gradientUnits="userSpaceOnUse" x1="2994.1" y1="982.4" x2="2888.3" y2="923.9"><stop offset=".00" stop-color="#fff"/><stop offset=".07" stop-color="#e8fff9"/><stop offset=".17" stop-color="#c9fff0"/><stop offset=".32" stop-color="#9effe4"/><stop offset=".50" stop-color="#70ffd8"/><stop offset=".72" stop-color="#3dffcb"/><stop offset="1" stop-color="#01ffbe"/></linearGradient>
<linearGradient id="x112" gradientUnits="userSpaceOnUse" x1="2994.1" y1="982.4" x2="2886.5" y2="930.1"><stop offset=".00" stop-color="#fff"/><stop offset=".07" stop-color="#e8fff9"/><stop offset=".17" stop-color="#c9fff1"/><stop offset=".32" stop-color="#9fffe7"/><stop offset=".50" stop-color="#71ffdc"/><stop offset=".72" stop-color="#3effd0"/><stop offset="1" stop-color="#01ffc4"/></linearGradient>
<linearGradient id="x113" gradientUnits="userSpaceOnUse" x1="2994.1" y1="982.4" x2="2884.7" y2="936.4"><stop offset=".00" stop-color="#fff"/><stop offset=".07" stop-color="#e8fffa"/><stop offset=".17" stop-color="#cafff3"/><stop offset=".32" stop-color="#a0ffea"/><stop offset=".50" stop-color="#72ffe0"/><stop offset=".72" stop-color="#3fffd5"/><stop offset="1" stop-color="#01ffca"/></linearGradient>
<linearGradient id="x114" gradientUnits="userSpaceOnUse" x1="2994.1" y1="982.4" x2="2883" y2="942.4"><stop offset=".00" stop-color="#fff"/><stop offset=".07" stop-color="#e9fffb"/><stop offset=".17" stop-color="#cafff5"/><stop offset=".32" stop-color="#a0ffec"/><stop offset=".50" stop-color="#73ffe4"/><stop offset=".72" stop-color="#3fffda"/><stop offset="1" stop-color="#01ffd0"/></linearGradient>
<linearGradient id="x115" gradientUnits="userSpaceOnUse" x1="2994.1" y1="982.4" x2="2881.3" y2="948.1"><stop offset=".00" stop-color="#fff"/><stop offset=".07" stop-color="#e9fffb"/><stop offset=".17" stop-color="#cbfff6"/><stop offset=".32" stop-color="#a1ffef"/><stop offset=".50" stop-color="#73ffe7"/><stop offset=".72" stop-color="#40ffdf"/><stop offset="1" stop-color="#02ffd6"/></linearGradient>
<linearGradient id="x116" gradientUnits="userSpaceOnUse" x1="2994.1" y1="982.4" x2="2879.6" y2="953.9"><stop offset=".00" stop-color="#fff"/><stop offset=".07" stop-color="#e9fffc"/><stop offset=".17" stop-color="#ccfff8"/><stop offset=".32" stop-color="#a2fff2"/><stop offset=".50" stop-color="#74ffeb"/><stop offset=".72" stop-color="#41ffe4"/><stop offset="1" stop-color="#02ffdd"/></linearGradient>
<linearGradient id="x117" gradientUnits="userSpaceOnUse" x1="2994.1" y1="982.4" x2="2878" y2="959.4"><stop offset=".00" stop-color="#fff"/><stop offset=".07" stop-color="#e9fffc"/><stop offset=".17" stop-color="#ccfff9"/><stop offset=".32" stop-color="#a3fff4"/><stop offset=".50" stop-color="#75ffef"/><stop offset=".72" stop-color="#41ffe9"/><stop offset="1" stop-color="#02ffe3"/></linearGradient>
<linearGradient id="x118" gradientUnits="userSpaceOnUse" x1="2994.1" y1="982.4" x2="2876.5" y2="964.7"><stop offset=".00" stop-color="#fff"/><stop offset=".07" stop-color="#eafffd"/><stop offset=".17" stop-color="#cdfffa"/><stop offset=".32" stop-color="#a4fff7"/><stop offset=".50" stop-color="#76fff2"/><stop offset=".72" stop-color="#42ffee"/><stop offset="1" stop-color="#02ffe9"/></linearGradient>
<linearGradient id="x119" gradientUnits="userSpaceOnUse" x1="2994.1" y1="982.4" x2="2875" y2="970"><stop offset=".00" stop-color="#fff"/><stop offset=".07" stop-color="#eafffe"/><stop offset=".17" stop-color="#cdfffc"/><stop offset=".32" stop-color="#a5fff9"/><stop offset=".50" stop-color="#77fff6"/><stop offset=".72" stop-color="#43fff3"/><stop offset="1" stop-color="#02ffef"/></linearGradient>
<linearGradient id="x120" gradientUnits="userSpaceOnUse" x1="2994.1" y1="982.4" x2="2873.5" y2="975.2"><stop offset=".00" stop-color="#fff"/><stop offset=".07" stop-color="#eafffe"/><stop offset=".17" stop-color="#cefffd"/><stop offset=".32" stop-color="#a5fffb"/><stop offset=".50" stop-color="#78fffa"/><stop offset=".72" stop-color="#43fff8"/><stop offset="1" stop-color="#02fff6"/></linearGradient>
<linearGradient id="x121" gradientUnits="userSpaceOnUse" x1="2994.1" y1="982.4" x2="2872" y2="980.3"><stop offset=".00" stop-color="#fff"/><stop offset=".07" stop-color="#ebffff"/><stop offset=".17" stop-color="#cefffe"/><stop offset=".32" stop-color="#a6fffe"/><stop offset=".50" stop-color="#79fffd"/><stop offset=".72" stop-color="#44fffd"/><stop offset="1" stop-color="#02fffc"/></linearGradient>
<linearGradient id="x122" gradientUnits="userSpaceOnUse" x1="2994.1" y1="982.4" x2="2870.6" y2="985.1"><stop offset=".00" stop-color="#fff"/><stop offset=".07" stop-color="#ebffff"/><stop offset=".17" stop-color="#cefeff"/><stop offset=".32" stop-color="#a6feff"/><stop offset=".50" stop-color="#79fdff"/><stop offset=".72" stop-color="#44fdff"/><stop offset="1" stop-color="#02fcff"/></linearGradient>
<linearGradient id="x123" gradientUnits="userSpaceOnUse" x1="2994.1" y1="982.4" x2="2869.2" y2="990.1"><stop offset=".00" stop-color="#fff"/><stop offset=".07" stop-color="#eafeff"/><stop offset=".17" stop-color="#cefdff"/><stop offset=".32" stop-color="#a5fbff"/><stop offset=".50" stop-color="#78faff"/><stop offset=".72" stop-color="#43f8ff"/><stop offset="1" stop-color="#02f6ff"/></linearGradient>
<linearGradient id="x124" gradientUnits="userSpaceOnUse" x1="2994.1" y1="982.4" x2="2867.7" y2="995.4"><stop offset=".00" stop-color="#fff"/><stop offset=".07" stop-color="#eafeff"/><stop offset=".17" stop-color="#cdfcff"/><stop offset=".32" stop-color="#a5f9ff"/><stop offset=".50" stop-color="#77f6ff"/><stop offset=".72" stop-color="#43f3ff"/><stop offset="1" stop-color="#02efff"/></linearGradient>
<linearGradient id="x125" gradientUnits="userSpaceOnUse" x1="2994.1" y1="982.4" x2="2866.1" y2="1000.7"><stop offset=".00" stop-color="#fff"/><stop offset=".07" stop-color="#eafdff"/><stop offset=".17" stop-color="#cdfaff"/><stop offset=".32" stop-color="#a4f7ff"/><stop offset=".50" stop-color="#76f2ff"/><stop offset=".72" stop-color="#42eeff"/><stop offset="1" stop-color="#02e9ff"/></linearGradient>
<linearGradient id="x126" gradientUnits="userSpaceOnUse" x1="2994.1" y1="982.4" x2="2864.6" y2="1006"><stop offset=".00" stop-color="#fff"/><stop offset=".07" stop-color="#e9fcff"/><stop offset=".17" stop-color="#ccf9ff"/><stop offset=".32" stop-color="#a3f4ff"/><stop offset=".50" stop-color="#75efff"/><stop offset=".72" stop-color="#41e9ff"/><stop offset="1" stop-color="#02e3ff"/></linearGradient>
<linearGradient id="x127" gradientUnits="userSpaceOnUse" x1="2994.1" y1="982.4" x2="2863" y2="1011.5"><stop offset=".00" stop-color="#fff"/><stop offset=".07" stop-color="#e9fcff"/><stop offset=".17" stop-color="#ccf8ff"/><stop offset=".32" stop-color="#a2f2ff"/><stop offset=".50" stop-color="#74ebff"/><stop offset=".72" stop-color="#41e4ff"/><stop offset="1" stop-color="#02ddff"/></linearGradient>
<linearGradient id="x128" gradientUnits="userSpaceOnUse" x1="2994.1" y1="982.4" x2="2861.4" y2="1017.3"><stop offset=".00" stop-color="#fff"/><stop offset=".07" stop-color="#e9fbff"/><stop offset=".17" stop-color="#cbf6ff"/><stop offset=".32" stop-color="#a1efff"/><stop offset=".50" stop-color="#73e7ff"/><stop offset=".72" stop-color="#40dfff"/><stop offset="1" stop-color="#02d6ff"/></linearGradient>
<linearGradient id="x129" gradientUnits="userSpaceOnUse" x1="2994.1" y1="982.4" x2="2859.7" y2="1023"><stop offset=".00" stop-color="#fff"/><stop offset=".07" stop-color="#e9fbff"/><stop offset=".17" stop-color="#caf5ff"/><stop offset=".32" stop-color="#a1ecff"/><stop offset=".50" stop-color="#73e4ff"/><stop offset=".72" stop-color="#3fdaff"/><stop offset="1" stop-color="#01d0ff"/></linearGradient>
<linearGradient id="x130" gradientUnits="userSpaceOnUse" x1="2994.1" y1="982.4" x2="2858" y2="1029"><stop offset=".00" stop-color="#fff"/><stop offset=".07" stop-color="#e8faff"/><stop offset=".17" stop-color="#caf3ff"/><stop offset=".32" stop-color="#a0eaff"/><stop offset=".50" stop-color="#72e0ff"/><stop offset=".72" stop-color="#3fd5ff"/><stop offset="1" stop-color="#01caff"/></linearGradient>
<linearGradient id="x131" gradientUnits="userSpaceOnUse" x1="2994.1" y1="982.4" x2="2856.2" y2="1035.3"><stop offset=".00" stop-color="#fff"/><stop offset=".07" stop-color="#e8f9ff"/><stop offset=".17" stop-color="#c9f2ff"/><stop offset=".32" stop-color="#9fe7ff"/><stop offset=".50" stop-color="#71dcff"/><stop offset=".72" stop-color="#3ed0ff"/><stop offset="1" stop-color="#01c4ff"/></linearGradient>
<linearGradient id="x132" gradientUnits="userSpaceOnUse" x1="2994.1" y1="982.4" x2="2854.4" y2="1041.5"><stop offset=".00" stop-color="#fff"/><stop offset=".07" stop-color="#e8f9ff"/><stop offset=".17" stop-color="#c9f0ff"/><stop offset=".32" stop-color="#9ee4ff"/><stop offset=".50" stop-color="#70d8ff"/><stop offset=".72" stop-color="#3dcbff"/><stop offset="1" stop-color="#01beff"/></linearGradient>
<linearGradient id="x133" gradientUnits="userSpaceOnUse" x1="2994.1" y1="982.4" x2="2852.5" y2="1048"><stop offset=".00" stop-color="#fff"/><stop offset=".07" stop-color="#e7f8ff"/><stop offset=".17" stop-color="#c8eeff"/><stop offset=".32" stop-color="#9de2ff"/><stop offset=".50" stop-color="#6fd4ff"/><stop offset=".72" stop-color="#3dc6ff"/><stop offset="1" stop-color="#01b7ff"/></linearGradient>
<linearGradient id="x134" gradientUnits="userSpaceOnUse" x1="2994.1" y1="982.4" x2="2850.6" y2="1054.7"><stop offset=".00" stop-color="#fff"/><stop offset=".07" stop-color="#e7f7ff"/><stop offset=".17" stop-color="#c7edff"/><stop offset=".32" stop-color="#9cdfff"/><stop offset=".50" stop-color="#6ed0ff"/><stop offset=".72" stop-color="#3cc1ff"/><stop offset="1" stop-color="#01b1ff"/></linearGradient>
<linearGradient id="x135" gradientUnits="userSpaceOnUse" x1="2994.1" y1="982.4" x2="2848.6" y2="1061.4"><stop offset=".00" stop-color="#fff"/><stop offset=".07" stop-color="#e7f6ff"/><stop offset=".17" stop-color="#c7ebff"/><stop offset=".32" stop-color="#9bdcff"/><stop offset=".50" stop-color="#6dccff"/><stop offset=".72" stop-color="#3bbcff"/><stop offset="1" stop-color="#01abff"/></linearGradient>
<linearGradient id="x136" gradientUnits="userSpaceOnUse" x1="2994.1" y1="982.4" x2="2846.6" y2="1068.4"><stop offset=".00" stop-color="#fff"/><stop offset=".07" stop-color="#e6f6ff"/><stop offset=".17" stop-color="#c6e9ff"/><stop offset=".32" stop-color="#9ad9ff"/><stop offset=".50" stop-color="#6cc8ff"/><stop offset=".72" stop-color="#3bb7ff"/><stop offset="1" stop-color="#01a5ff"/></linearGradient>
<linearGradient id="x137" gradientUnits="userSpaceOnUse" x1="2994.1" y1="982.4" x2="2844.5" y2="1075.6"><stop offset=".00" stop-color="#fff"/><stop offset=".07" stop-color="#e6f5ff"/><stop offset=".17" stop-color="#c5e8ff"/><stop offset=".32" stop-color="#99d6ff"/><stop offset=".50" stop-color="#6bc4ff"/><stop offset=".72" stop-color="#3ab2ff"/><stop offset="1" stop-color="#019fff"/></linearGradient>
<linearGradient id="x138" gradientUnits="userSpaceOnUse" x1="2994.1" y1="982.4" x2="2842.4" y2="1083"><stop offset=".00" stop-color="#fff"/><stop offset=".07" stop-color="#e6f4ff"/><stop offset=".17" stop-color="#c5e6ff"/><stop offset=".32" stop-color="#98d3ff"/><stop offset=".50" stop-color="#6ac0ff"/><stop offset=".72" stop-color="#39acff"/><stop offset="1" stop-color="#0198ff"/></linearGradient>
<linearGradient id="x139" gradientUnits="userSpaceOnUse" x1="2994.1" y1="982.4" x2="2840.2" y2="1090.7"><stop offset=".00" stop-color="#fff"/><stop offset=".07" stop-color="#e5f3ff"/><stop offset=".17" stop-color="#c4e4ff"/><stop offset=".32" stop-color="#97d0ff"/><stop offset=".50" stop-color="#69bcff"/><stop offset=".72" stop-color="#39a7ff"/><stop offset="1" stop-color="#0192ff"/></linearGradient>
<linearGradient id="x140" gradientUnits="userSpaceOnUse" x1="2994.1" y1="982.4" x2="2837.9" y2="1098.7"><stop offset=".00" stop-color="#fff"/><stop offset=".07" stop-color="#e5f2ff"/><stop offset=".17" stop-color="#c3e2ff"/><stop offset=".32" stop-color="#96cdff"/><stop offset=".50" stop-color="#68b8ff"/><stop offset=".72" stop-color="#38a2ff"/><stop offset="1" stop-color="#018cff"/></linearGradient>
<linearGradient id="x141" gradientUnits="userSpaceOnUse" x1="2994.1" y1="982.4" x2="2835.5" y2="1106.8"><stop offset=".00" stop-color="#fff"/><stop offset=".07" stop-color="#e4f2ff"/><stop offset=".17" stop-color="#c2e0ff"/><stop offset=".32" stop-color="#95caff"/><stop offset=".50" stop-color="#67b3ff"/><stop offset=".72" stop-color="#379dff"/><stop offset="1" stop-color="#0186ff"/></linearGradient>
<linearGradient id="x142" gradientUnits="userSpaceOnUse" x1="2994.1" y1="982.4" x2="2833.2" y2="1115"><stop offset=".00" stop-color="#fff"/><stop offset=".07" stop-color="#e4f1ff"/><stop offset=".17" stop-color="#c2deff"/><stop offset=".32" stop-color="#94c7ff"/><stop offset=".50" stop-color="#66afff"/><stop offset=".72" stop-color="#3797ff"/><stop offset="1" stop-color="#017fff"/></linearGradient>
<linearGradient id="x143" gradientUnits="userSpaceOnUse" x1="2994.1" y1="982.4" x2="2830.8" y2="1123.4"><stop offset=".00" stop-color="#fff"/><stop offset=".07" stop-color="#e4f0ff"/><stop offset=".17" stop-color="#c1dcff"/><stop offset=".32" stop-color="#93c4ff"/><stop offset=".50" stop-color="#65abff"/><stop offset=".72" stop-color="#3692ff"/><stop offset="1" stop-color="#0179ff"/></linearGradient>
<linearGradient id="x144" gradientUnits="userSpaceOnUse" x1="2994.1" y1="982.4" x2="2828.3" y2="1132"><stop offset=".00" stop-color="#fff"/><stop offset=".07" stop-color="#e3efff"/><stop offset=".17" stop-color="#c0daff"/><stop offset=".32" stop-color="#92c0ff"/><stop offset=".50" stop-color="#64a6ff"/><stop offset=".72" stop-color="#358dff"/><stop offset="1" stop-color="#0173ff"/></linearGradient>
<linearGradient id="x145" gradientUnits="userSpaceOnUse" x1="2994.1" y1="982.4" x2="2825.7" y2="1140.9"><stop offset=".00" stop-color="#fff"/><stop offset=".07" stop-color="#e3eeff"/><stop offset=".17" stop-color="#bfd8ff"/><stop offset=".32" stop-color="#91bdff"/><stop offset=".50" stop-color="#63a2ff"/><stop offset=".72" stop-color="#3588ff"/><stop offset="1" stop-color="#016dff"/></linearGradient>
<linearGradient id="x146" gradientUnits="userSpaceOnUse" x1="2994.1" y1="982.4" x2="2823" y2="1150.3"><stop offset=".00" stop-color="#fff"/><stop offset=".07" stop-color="#e2edff"/><stop offset=".17" stop-color="#bed6ff"/><stop offset=".32" stop-color="#90baff"/><stop offset=".50" stop-color="#629eff"/><stop offset=".72" stop-color="#3482ff"/><stop offset="1" stop-color="#0167ff"/></linearGradient>
<linearGradient id="x147" gradientUnits="userSpaceOnUse" x1="2994.1" y1="982.4" x2="2820.2" y2="1159.9"><stop offset=".00" stop-color="#fff"/><stop offset=".07" stop-color="#e2ecff"/><stop offset=".17" stop-color="#bdd4ff"/><stop offset=".32" stop-color="#8fb6ff"/><stop offset=".50" stop-color="#6199ff"/><stop offset=".72" stop-color="#337dff"/><stop offset="1" stop-color="#0161ff"/></linearGradient>
<linearGradient id="x148" gradientUnits="userSpaceOnUse" x1="2994.1" y1="982.4" x2="2817.4" y2="1169.7"><stop offset=".00" stop-color="#fff"/><stop offset=".07" stop-color="#e2ebff"/><stop offset=".17" stop-color="#bdd2ff"/><stop offset=".32" stop-color="#8eb3ff"/><stop offset=".50" stop-color="#6095ff"/><stop offset=".72" stop-color="#3277ff"/><stop offset="1" stop-color="#015bff"/></linearGradient>
<linearGradient id="x149" gradientUnits="userSpaceOnUse" x1="2994.1" y1="982.4" x2="2814.5" y2="1179.8"><stop offset=".00" stop-color="#fff"/><stop offset=".07" stop-color="#e1eaff"/><stop offset=".17" stop-color="#bcd0ff"/><stop offset=".32" stop-color="#8dafff"/><stop offset=".50" stop-color="#5f90ff"/><stop offset=".72" stop-color="#3272ff"/><stop offset="1" stop-color="#0154ff"/></linearGradient>
<linearGradient id="x150" gradientUnits="userSpaceOnUse" x1="2994.1" y1="982.4" x2="2811.5" y2="1190.1"><stop offset=".00" stop-color="#fff"/><stop offset=".07" stop-color="#e1e9ff"/><stop offset=".17" stop-color="#bbceff"/><stop offset=".32" stop-color="#8cacff"/><stop offset=".50" stop-color="#5e8bff"/><stop offset=".72" stop-color="#316cff"/><stop offset="1" stop-color="#014eff"/></linearGradient>
<linearGradient id="x151" gradientUnits="userSpaceOnUse" x1="2994.1" y1="982.4" x2="2808.4" y2="1200.9"><stop offset=".00" stop-color="#fff"/><stop offset=".07" stop-color="#e0e8ff"/><stop offset=".17" stop-color="#bacbff"/><stop offset=".32" stop-color="#8ba8ff"/><stop offset=".50" stop-color="#5d87ff"/><stop offset=".72" stop-color="#3067ff"/><stop offset="1" stop-color="#0148ff"/></linearGradient>
<linearGradient id="x152" gradientUnits="userSpaceOnUse" x1="2994.1" y1="982.4" x2="2805.2" y2="1212"><stop offset=".00" stop-color="#fff"/><stop offset=".07" stop-color="#e0e7ff"/><stop offset=".17" stop-color="#b9c9ff"/><stop offset=".32" stop-color="#89a4ff"/><stop offset=".50" stop-color="#5c82ff"/><stop offset=".72" stop-color="#3061ff"/><stop offset="1" stop-color="#0142ff"/></linearGradient>
<linearGradient id="x153" gradientUnits="userSpaceOnUse" x1="2994.1" y1="982.4" x2="2802" y2="1223.3"><stop offset=".00" stop-color="#fff"/><stop offset=".07" stop-color="#dfe6ff"/><stop offset=".17" stop-color="#b8c7ff"/><stop offset=".32" stop-color="#88a1ff"/><stop offset=".50" stop-color="#5b7dff"/><stop offset=".72" stop-color="#2f5cff"/><stop offset="1" stop-color="#013cff"/></linearGradient>
<linearGradient id="x154" gradientUnits="userSpaceOnUse" x1="2994.1" y1="982.4" x2="2798.6" y2="1234.8"><stop offset=".00" stop-color="#fff"/><stop offset=".07" stop-color="#dee4ff"/><stop offset=".17" stop-color="#b7c4ff"/><stop offset=".32" stop-color="#879dff"/><stop offset=".50" stop-color="#5a79ff"/><stop offset=".72" stop-color="#2e57ff"/><stop offset="1" stop-color="#0136ff"/></linearGradient>
<linearGradient id="x155" gradientUnits="userSpaceOnUse" x1="2994.1" y1="982.4" x2="2795.2" y2="1246.5"><stop offset=".00" stop-color="#fff"/><stop offset=".07" stop-color="#dee3ff"/><stop offset=".17" stop-color="#b6c2ff"/><stop offset=".32" stop-color="#8699ff"/><stop offset=".50" stop-color="#5974ff"/><stop offset=".72" stop-color="#2e51ff"/><stop offset="1" stop-color="#0130ff"/></linearGradient>
<linearGradient id="x156" gradientUnits="userSpaceOnUse" x1="2994.1" y1="982.4" x2="2791.7" y2="1258.8"><stop offset=".00" stop-color="#fff"/><stop offset=".07" stop-color="#dde2ff"/><stop offset=".17" stop-color="#b5bfff"/><stop offset=".32" stop-color="#8596ff"/><stop offset=".50" stop-color="#586fff"/><stop offset=".72" stop-color="#2d4cff"/><stop offset="1" stop-color="#012aff"/></linearGradient>
<linearGradient id="x157" gradientUnits="userSpaceOnUse" x1="2994.1" y1="982.4" x2="2788.1" y2="1271.3"><stop offset=".00" stop-color="#fff"/><stop offset=".07" stop-color="#dde1ff"/><stop offset=".17" stop-color="#b4bdff"/><stop offset=".32" stop-color="#8492ff"/><stop offset=".50" stop-color="#576bff"/><stop offset=".72" stop-color="#2c46ff"/><stop offset="1" stop-color="#0123ff"/></linearGradient>
<linearGradient id="x158" gradientUnits="userSpaceOnUse" x1="2994.1" y1="982.4" x2="2784.4" y2="1284"><stop offset=".00" stop-color="#fff"/><stop offset=".07" stop-color="#dcdfff"/><stop offset=".17" stop-color="#b3baff"/><stop offset=".32" stop-color="#828eff"/><stop offset=".50" stop-color="#5666ff"/><stop offset=".72" stop-color="#2c41ff"/><stop offset="1" stop-color="#011dff"/></linearGradient>
<linearGradient id="x159" gradientUnits="userSpaceOnUse" x1="2994.1" y1="982.4" x2="2780.7" y2="1297"><stop offset=".00" stop-color="#fff"/><stop offset=".07" stop-color="#dcdeff"/><stop offset=".17" stop-color="#b2b8ff"/><stop offset=".32" stop-color="#818aff"/><stop offset=".50" stop-color="#5561ff"/><stop offset=".72" stop-color="#2b3bff"/><stop offset="1" stop-color="#0117ff"/></linearGradient>
<linearGradient id="x160" gradientUnits="userSpaceOnUse" x1="2994.1" y1="982.4" x2="2777" y2="1309.9"><stop offset=".00" stop-color="#fff"/><stop offset=".07" stop-color="#dbddff"/><stop offset=".17" stop-color="#b1b5ff"/><stop offset=".32" stop-color="#8087ff"/><stop offset=".50" stop-color="#545dff"/><stop offset=".72" stop-color="#2a36ff"/><stop offset="1" stop-color="#0111ff"/></linearGradient>
<linearGradient id="x161" gradientUnits="userSpaceOnUse" x1="2994.1" y1="982.4" x2="2773.2" y2="1322.9"><stop offset=".00" stop-color="#fff"/><stop offset=".07" stop-color="#dbdcff"/><stop offset=".17" stop-color="#b0b3ff"/><stop offset=".32" stop-color="#7f83ff"/><stop offset=".50" stop-color="#5358ff"/><stop offset=".72" stop-color="#2a31ff"/><stop offset="1" stop-color="#010bff"/></linearGradient>
<linearGradient id="x162" gradientUnits="userSpaceOnUse" x1="2994.1" y1="982.4" x2="2769.3" y2="1336.6"><stop offset=".00" stop-color="#fff"/><stop offset=".07" stop-color="#dadaff"/><stop offset=".17" stop-color="#afb0ff"/><stop offset=".32" stop-color="#7e7fff"/><stop offset=".50" stop-color="#5254ff"/><stop offset=".72" stop-color="#292cff"/><stop offset="1" stop-color="#0105ff"/></linearGradient>
<linearGradient id="x163" gradientUnits="userSpaceOnUse" x1="2994.1" y1="982.4" x2="2770.3" y2="1342.1"><stop offset=".00" stop-color="#fff"/><stop offset=".07" stop-color="#dadaff"/><stop offset=".17" stop-color="#afafff"/><stop offset=".32" stop-color="#7e7dff"/><stop offset=".50" stop-color="#5351ff"/><stop offset=".72" stop-color="#2b29ff"/><stop offset="1" stop-color="#0401ff"/></linearGradient>
<linearGradient id="x164" gradientUnits="userSpaceOnUse" x1="2994.1" y1="982.4" x2="2776.9" y2="1338.6"><stop offset=".00" stop-color="#fff"/><stop offset=".07" stop-color="#dbdaff"/><stop offset=".17" stop-color="#b1afff"/><stop offset=".32" stop-color="#827eff"/><stop offset=".50" stop-color="#5752ff"/><stop offset=".72" stop-color="#3029ff"/><stop offset="1" stop-color="#0a01ff"/></linearGradient>
<linearGradient id="x165" gradientUnits="userSpaceOnUse" x1="2994.1" y1="982.4" x2="2784" y2="1334.9"><stop offset=".00" stop-color="#fff"/><stop offset=".07" stop-color="#dcdaff"/><stop offset=".17" stop-color="#b4b0ff"/><stop offset=".32" stop-color="#857fff"/><stop offset=".50" stop-color="#5b52ff"/><stop offset=".72" stop-color="#352aff"/><stop offset="1" stop-color="#1001ff"/></linearGradient>
<linearGradient id="x166" gradientUnits="userSpaceOnUse" x1="2994.1" y1="982.4" x2="2791" y2="1331.1"><stop offset=".00" stop-color="#fff"/><stop offset=".07" stop-color="#dddbff"/><stop offset=".17" stop-color="#b6b0ff"/><stop offset=".32" stop-color="#887fff"/><stop offset=".50" stop-color="#5f53ff"/><stop offset=".72" stop-color="#3a2aff"/><stop offset="1" stop-color="#1701ff"/></linearGradient>
<linearGradient id="x167" gradientUnits="userSpaceOnUse" x1="2994.1" y1="982.4" x2="2798.1" y2="1327.4"><stop offset=".00" stop-color="#fff"/><stop offset=".07" stop-color="#dedbff"/><stop offset=".17" stop-color="#b8b1ff"/><stop offset=".32" stop-color="#8c80ff"/><stop offset=".50" stop-color="#6454ff"/><stop offset=".72" stop-color="#3f2aff"/><stop offset="1" stop-color="#1d01ff"/></linearGradient>
<linearGradient id="x168" gradientUnits="userSpaceOnUse" x1="2994.1" y1="982.4" x2="2805.2" y2="1323.6"><stop offset=".00" stop-color="#fff"/><stop offset=".07" stop-color="#dfdbff"/><stop offset=".17" stop-color="#bab2ff"/><stop offset=".32" stop-color="#8f81ff"/><stop offset=".50" stop-color="#6854ff"/><stop offset=".72" stop-color="#442bff"/><stop offset="1" stop-color="#2301ff"/></linearGradient>
<linearGradient id="x169" gradientUnits="userSpaceOnUse" x1="2994.1" y1="982.4" x2="2812.2" y2="1319.9"><stop offset=".00" stop-color="#fff"/><stop offset=".07" stop-color="#e0dcff"/><stop offset=".17" stop-color="#bcb2ff"/><stop offset=".32" stop-color="#9281ff"/><stop offset=".50" stop-color="#6c55ff"/><stop offset=".72" stop-color="#492bff"/><stop offset="1" stop-color="#2901ff"/></linearGradient>
<linearGradient id="x170" gradientUnits="userSpaceOnUse" x1="2994.1" y1="982.4" x2="2819.3" y2="1316.1"><stop offset=".00" stop-color="#fff"/><stop offset=".07" stop-color="#e1dcff"/><stop offset=".17" stop-color="#bfb3ff"/><stop offset=".32" stop-color="#9682ff"/><stop offset=".50" stop-color="#7155ff"/><stop offset=".72" stop-color="#4f2bff"/><stop offset="1" stop-color="#2f01ff"/></linearGradient>
<linearGradient id="x171" gradientUnits="userSpaceOnUse" x1="2994.1" y1="982.4" x2="2826.4" y2="1312.4"><stop offset=".00" stop-color="#fff"/><stop offset=".07" stop-color="#e3dcff"/><stop offset=".17" stop-color="#c1b3ff"/><stop offset=".32" stop-color="#9983ff"/><stop offset=".50" stop-color="#7556ff"/><stop offset=".72" stop-color="#542cff"/><stop offset="1" stop-color="#3501ff"/></linearGradient>
<linearGradient id="x172" gradientUnits="userSpaceOnUse" x1="2994.1" y1="982.4" x2="2833.4" y2="1308.6"><stop offset=".00" stop-color="#fff"/><stop offset=".07" stop-color="#e4ddff"/><stop offset=".17" stop-color="#c3b4ff"/><stop offset=".32" stop-color="#9d83ff"/><stop offset=".50" stop-color="#7a57ff"/><stop offset=".72" stop-color="#5a2cff"/><stop offset="1" stop-color="#3c01ff"/></linearGradient>
<linearGradient id="x173" gradientUnits="userSpaceOnUse" x1="2994.1" y1="982.4" x2="2840.3" y2="1305"><stop offset=".00" stop-color="#fff"/><stop offset=".07" stop-color="#e5ddff"/><stop offset=".17" stop-color="#c5b5ff"/><stop offset=".32" stop-color="#a084ff"/><stop offset=".50" stop-color="#7e57ff"/><stop offset=".72" stop-color="#5f2dff"/><stop offset="1" stop-color="#4201ff"/></linearGradient>
<linearGradient id="x174" gradientUnits="userSpaceOnUse" x1="2994.1" y1="982.4" x2="2846.9" y2="1301.5"><stop offset=".00" stop-color="#fff"/><stop offset=".07" stop-color="#e6ddff"/><stop offset=".17" stop-color="#c8b5ff"/><stop offset=".32" stop-color="#a485ff"/><stop offset=".50" stop-color="#8358ff"/><stop offset=".72" stop-color="#642dff"/><stop offset="1" stop-color="#4801ff"/></linearGradient>
<linearGradient id="x175" gradientUnits="userSpaceOnUse" x1="2994.1" y1="982.4" x2="2853.5" y2="1298"><stop offset=".00" stop-color="#fff"/><stop offset=".07" stop-color="#e7deff"/><stop offset=".17" stop-color="#cab6ff"/><stop offset=".32" stop-color="#a785ff"/><stop offset=".50" stop-color="#8758ff"/><stop offset=".72" stop-color="#6a2dff"/><stop offset="1" stop-color="#4e01ff"/></linearGradient>
<linearGradient id="x176" gradientUnits="userSpaceOnUse" x1="2994.1" y1="982.4" x2="2860.1" y2="1294.5"><stop offset=".00" stop-color="#fff"/><stop offset=".07" stop-color="#e8deff"/><stop offset=".17" stop-color="#ccb6ff"/><stop offset=".32" stop-color="#aa86ff"/><stop offset=".50" stop-color="#8c59ff"/><stop offset=".72" stop-color="#6f2eff"/><stop offset="1" stop-color="#5401ff"/></linearGradient>
<linearGradient id="x177" gradientUnits="userSpaceOnUse" x1="2994.1" y1="982.4" x2="2866.8" y2="1290.9"><stop offset=".00" stop-color="#fff"/><stop offset=".07" stop-color="#e9deff"/><stop offset=".17" stop-color="#ceb7ff"/><stop offset=".32" stop-color="#ae87ff"/><stop offset=".50" stop-color="#905aff"/><stop offset=".72" stop-color="#742eff"/><stop offset="1" stop-color="#5a01ff"/></linearGradient>
<linearGradient id="x178" gradientUnits="userSpaceOnUse" x1="2994.1" y1="982.4" x2="2873.2" y2="1287.5"><stop offset=".00" stop-color="#fff"/><stop offset=".07" stop-color="#eadfff"/><stop offset=".17" stop-color="#d0b7ff"/><stop offset=".32" stop-color="#b188ff"/><stop offset=".50" stop-color="#955aff"/><stop offset=".72" stop-color="#7a2fff"/><stop offset="1" stop-color="#6101ff"/></linearGradient>
<linearGradient id="x179" gradientUnits="userSpaceOnUse" x1="2994.1" y1="982.4" x2="2879.3" y2="1284.3"><stop offset=".00" stop-color="#fff"/><stop offset=".07" stop-color="#ebdfff"/><stop offset=".17" stop-color="#d2b8ff"/><stop offset=".32" stop-color="#b588ff"/><stop offset=".50" stop-color="#995bff"/><stop offset=".72" stop-color="#7f2fff"/><stop offset="1" stop-color="#6701ff"/></linearGradient>
<linearGradient id="x180" gradientUnits="userSpaceOnUse" x1="2994.1" y1="982.4" x2="2885.5" y2="1281"><stop offset=".00" stop-color="#fff"/><stop offset=".07" stop-color="#ecdfff"/><stop offset=".17" stop-color="#d4b8ff"/><stop offset=".32" stop-color="#b889ff"/><stop offset=".50" stop-color="#9d5bff"/><stop offset=".72" stop-color="#842fff"/><stop offset="1" stop-color="#6d01ff"/></linearGradient>
<linearGradient id="x181" gradientUnits="userSpaceOnUse" x1="2994.1" y1="982.4" x2="2891.7" y2="1277.7"><stop offset=".00" stop-color="#fff"/><stop offset=".07" stop-color="#ede0ff"/><stop offset=".17" stop-color="#d6b9ff"/><stop offset=".32" stop-color="#bb8aff"/><stop offset=".50" stop-color="#a25cff"/><stop offset=".72" stop-color="#8a30ff"/><stop offset="1" stop-color="#7301ff"/></linearGradient>
<linearGradient id="x182" gradientUnits="userSpaceOnUse" x1="2994.1" y1="982.4" x2="2897.9" y2="1274.4"><stop offset=".00" stop-color="#fff"/><stop offset=".07" stop-color="#eee0ff"/><stop offset=".17" stop-color="#d8baff"/><stop offset=".32" stop-color="#bf8aff"/><stop offset=".50" stop-color="#a65dff"/><stop offset=".72" stop-color="#8f30ff"/><stop offset="1" stop-color="#7a01ff"/></linearGradient>
<linearGradient id="x183" gradientUnits="userSpaceOnUse" x1="2994.1" y1="982.4" x2="2903.8" y2="1271.3"><stop offset=".00" stop-color="#fff"/><stop offset=".07" stop-color="#efe0ff"/><stop offset=".17" stop-color="#dabaff"/><stop offset=".32" stop-color="#c28bff"/><stop offset=".50" stop-color="#ab5dff"/><stop offset=".72" stop-color="#9531ff"/><stop offset="1" stop-color="#8001ff"/></linearGradient>
<linearGradient id="x184" gradientUnits="userSpaceOnUse" x1="2994.1" y1="982.4" x2="2909.6" y2="1268.2"><stop offset=".00" stop-color="#fff"/><stop offset=".07" stop-color="#efe0ff"/><stop offset=".17" stop-color="#dcbbff"/><stop offset=".32" stop-color="#c58cff"/><stop offset=".50" stop-color="#af5eff"/><stop offset=".72" stop-color="#9a31ff"/><stop offset="1" stop-color="#8601ff"/></linearGradient>
<linearGradient id="x185" gradientUnits="userSpaceOnUse" x1="2994.1" y1="982.4" x2="2915.3" y2="1265.2"><stop offset=".00" stop-color="#fff"/><stop offset=".07" stop-color="#f0e1ff"/><stop offset=".17" stop-color="#debbff"/><stop offset=".32" stop-color="#c88cff"/><stop offset=".50" stop-color="#b35fff"/><stop offset=".72" stop-color="#9f31ff"/><stop offset="1" stop-color="#8c01ff"/></linearGradient>
<linearGradient id="x186" gradientUnits="userSpaceOnUse" x1="2994.1" y1="982.4" x2="2921.1" y2="1262.1"><stop offset=".00" stop-color="#fff"/><stop offset=".07" stop-color="#f1e1ff"/><stop offset=".17" stop-color="#e0bcff"/><stop offset=".32" stop-color="#cc8dff"/><stop offset=".50" stop-color="#b85fff"/><stop offset=".72" stop-color="#a532ff"/><stop offset="1" stop-color="#9301ff"/></linearGradient>
<linearGradient id="x187" gradientUnits="userSpaceOnUse" x1="2994.1" y1="982.4" x2="2926.8" y2="1259.1"><stop offset=".00" stop-color="#fff"/><stop offset=".07" stop-color="#f2e1ff"/><stop offset=".17" stop-color="#e2bcff"/><stop offset=".32" stop-color="#cf8eff"/><stop offset=".50" stop-color="#bc60ff"/><stop offset=".72" stop-color="#aa32ff"/><stop offset="1" stop-color="#9901ff"/></linearGradient>
<linearGradient id="x188" gradientUnits="userSpaceOnUse" x1="2994.1" y1="982.4" x2="2932.3" y2="1256.1"><stop offset=".00" stop-color="#fff"/><stop offset=".07" stop-color="#f3e2ff"/><stop offset=".17" stop-color="#e4bdff"/><stop offset=".32" stop-color="#d28eff"/><stop offset=".50" stop-color="#c060ff"/><stop offset=".72" stop-color="#b033ff"/><stop offset="1" stop-color="#9f01ff"/></linearGradient>
<linearGradient id="x189" gradientUnits="userSpaceOnUse" x1="2994.1" y1="982.4" x2="2937.6" y2="1253.3"><stop offset=".00" stop-color="#fff"/><stop offset=".07" stop-color="#f4e2ff"/><stop offset=".17" stop-color="#e6bdff"/><stop offset=".32" stop-color="#d58fff"/><stop offset=".50" stop-color="#c561ff"/><stop offset=".72" stop-color="#b533ff"/><stop offset="1" stop-color="#a501ff"/></linearGradient>
<linearGradient id="x190" gradientUnits="userSpaceOnUse" x1="2994.1" y1="982.4" x2="2942.9" y2="1250.5"><stop offset=".00" stop-color="#fff"/><stop offset=".07" stop-color="#f5e2ff"/><stop offset=".17" stop-color="#e8beff"/><stop offset=".32" stop-color="#d88fff"/><stop offset=".50" stop-color="#c962ff"/><stop offset=".72" stop-color="#ba33ff"/><stop offset="1" stop-color="#ac01ff"/></linearGradient>
<linearGradient id="x191" gradientUnits="userSpaceOnUse" x1="2994.1" y1="982.4" x2="2948.2" y2="1247.7"><stop offset=".00" stop-color="#fff"/><stop offset=".07" stop-color="#f6e2ff"/><stop offset=".17" stop-color="#eabeff"/><stop offset=".32" stop-color="#db90ff"/><stop offset=".50" stop-color="#cd62ff"/><stop offset=".72" stop-color="#bf34ff"/><stop offset="1" stop-color="#b201ff"/></linearGradient>
<linearGradient id="x192" gradientUnits="userSpaceOnUse" x1="2994.1" y1="982.4" x2="2953.5" y2="1244.9"><stop offset=".00" stop-color="#fff"/><stop offset=".07" stop-color="#f6e3ff"/><stop offset=".17" stop-color="#ecbfff"/><stop offset=".32" stop-color="#de91ff"/><stop offset=".50" stop-color="#d163ff"/><stop offset=".72" stop-color="#c534ff"/><stop offset="1" stop-color="#b801ff"/></linearGradient>
<linearGradient id="x193" gradientUnits="userSpaceOnUse" x1="2994.1" y1="982.4" x2="2958.6" y2="1242.2"><stop offset=".00" stop-color="#fff"/><stop offset=".07" stop-color="#f7e3ff"/><stop offset=".17" stop-color="#eebfff"/><stop offset=".32" stop-color="#e291ff"/><stop offset=".50" stop-color="#d663ff"/><stop offset=".72" stop-color="#ca35ff"/><stop offset="1" stop-color="#bf01ff"/></linearGradient>
<linearGradient id="x194" gradientUnits="userSpaceOnUse" x1="2994.1" y1="982.4" x2="2963.4" y2="1239.6"><stop offset=".00" stop-color="#fff"/><stop offset=".07" stop-color="#f8e3ff"/><stop offset=".17" stop-color="#efc0ff"/><stop offset=".32" stop-color="#e492ff"/><stop offset=".50" stop-color="#da64ff"/><stop offset=".72" stop-color="#cf35ff"/><stop offset="1" stop-color="#c501ff"/></linearGradient>
<linearGradient id="x195" gradientUnits="userSpaceOnUse" x1="2994.1" y1="982.4" x2="2968.3" y2="1237"><stop offset=".00" stop-color="#fff"/><stop offset=".07" stop-color="#f9e3ff"/><stop offset=".17" stop-color="#f1c0ff"/><stop offset=".32" stop-color="#e793ff"/><stop offset=".50" stop-color="#de65ff"/><stop offset=".72" stop-color="#d435ff"/><stop offset="1" stop-color="#cb01ff"/></linearGradient>
<linearGradient id="x196" gradientUnits="userSpaceOnUse" x1="2994.1" y1="982.4" x2="2973.2" y2="1234.5"><stop offset=".00" stop-color="#fff"/><stop offset=".07" stop-color="#fae4ff"/><stop offset=".17" stop-color="#f3c1ff"/><stop offset=".32" stop-color="#ea93ff"/><stop offset=".50" stop-color="#e265ff"/><stop offset=".72" stop-color="#da36ff"/><stop offset="1" stop-color="#d201ff"/></linearGradient>
<linearGradient id="x197" gradientUnits="userSpaceOnUse" x1="2994.1" y1="982.4" x2="2978" y2="1231.9"><stop offset=".00" stop-color="#fff"/><stop offset=".07" stop-color="#fae4ff"/><stop offset=".17" stop-color="#f5c1ff"/><stop offset=".32" stop-color="#ed94ff"/><stop offset=".50" stop-color="#e666ff"/><stop offset=".72" stop-color="#df36ff"/><stop offset="1" stop-color="#d801ff"/></linearGradient>
<linearGradient id="x198" gradientUnits="userSpaceOnUse" x1="2994.1" y1="982.4" x2="2982.6" y2="1229.4"><stop offset=".00" stop-color="#fff"/><stop offset=".07" stop-color="#fbe4ff"/><stop offset=".17" stop-color="#f6c2ff"/><stop offset=".32" stop-color="#f094ff"/><stop offset=".50" stop-color="#ea66ff"/><stop offset=".72" stop-color="#e437ff"/><stop offset="1" stop-color="#de01ff"/></linearGradient>
<linearGradient id="x199" gradientUnits="userSpaceOnUse" x1="2994.1" y1="982.4" x2="2987.1" y2="1227.1"><stop offset=".00" stop-color="#fff"/><stop offset=".07" stop-color="#fce4ff"/><stop offset=".17" stop-color="#f8c2ff"/><stop offset=".32" stop-color="#f395ff"/><stop offset=".50" stop-color="#ee67ff"/><stop offset=".72" stop-color="#e937ff"/><stop offset="1" stop-color="#e401ff"/></linearGradient>
<linearGradient id="x200" gradientUnits="userSpaceOnUse" x1="2994.1" y1="982.4" x2="2991.5" y2="1224.7"><stop offset=".00" stop-color="#fff"/><stop offset=".07" stop-color="#fde5ff"/><stop offset=".17" stop-color="#fac2ff"/><stop offset=".32" stop-color="#f696ff"/><stop offset=".50" stop-color="#f267ff"/><stop offset=".72" stop-color="#ee37ff"/><stop offset="1" stop-color="#eb01ff"/></linearGradient>
<linearGradient id="x201" gradientUnits="userSpaceOnUse" x1="2994.1" y1="982.4" x2="2995.9" y2="1222.4"><stop offset=".00" stop-color="#fff"/><stop offset=".07" stop-color="#fde5ff"/><stop offset=".17" stop-color="#fbc3ff"/><stop offset=".32" stop-color="#f996ff"/><stop offset=".50" stop-color="#f668ff"/><stop offset=".72" stop-color="#f338ff"/><stop offset="1" stop-color="#f101ff"/></linearGradient>
<linearGradient id="x202" gradientUnits="userSpaceOnUse" x1="2994.1" y1="982.4" x2="3000.3" y2="1220"><stop offset=".00" stop-color="#fff"/><stop offset=".07" stop-color="#fee5ff"/><stop offset=".17" stop-color="#fdc3ff"/><stop offset=".32" stop-color="#fc97ff"/><stop offset=".50" stop-color="#fa69ff"/><stop offset=".72" stop-color="#f938ff"/><stop offset="1" stop-color="#f701ff"/></linearGradient>
<linearGradient id="x203" gradientUnits="userSpaceOnUse" x1="2994.1" y1="982.4" x2="3006.3" y2="1216.9"><stop offset=".00" stop-color="#fff"/><stop offset=".07" stop-color="#ffe5ff"/><stop offset=".17" stop-color="#ffc4ff"/><stop offset=".32" stop-color="#ff97ff"/><stop offset=".50" stop-color="#ff69fe"/><stop offset=".72" stop-color="#ff39fe"/><stop offset="1" stop-color="#ff01fe"/></linearGradient>
<linearGradient id="x204" gradientUnits="userSpaceOnUse" x1="2994.1" y1="982.4" x2="3012.2" y2="1213.7"><stop offset=".00" stop-color="#fff"/><stop offset=".07" stop-color="#ffe5fe"/><stop offset=".17" stop-color="#ffc3fd"/><stop offset=".32" stop-color="#ff96fb"/><stop offset=".50" stop-color="#ff68f9"/><stop offset=".72" stop-color="#ff38f7"/><stop offset="1" stop-color="#ff01f5"/></linearGradient>
<linearGradient id="x205" gradientUnits="userSpaceOnUse" x1="2994.1" y1="982.4" x2="3016.6" y2="1211.4"><stop offset=".00" stop-color="#fff"/><stop offset=".07" stop-color="#ffe4fd"/><stop offset=".17" stop-color="#ffc2fb"/><stop offset=".32" stop-color="#ff95f8"/><stop offset=".50" stop-color="#ff67f5"/><stop offset=".72" stop-color="#ff37f2"/><stop offset="1" stop-color="#ff01ef"/></linearGradient>
<linearGradient id="x206" gradientUnits="userSpaceOnUse" x1="2994.1" y1="982.4" x2="3021.3" y2="1208.9"><stop offset=".00" stop-color="#fff"/><stop offset=".07" stop-color="#ffe4fc"/><stop offset=".17" stop-color="#ffc1f9"/><stop offset=".32" stop-color="#ff94f5"/><stop offset=".50" stop-color="#ff66f1"/><stop offset=".72" stop-color="#ff36ed"/><stop offset="1" stop-color="#ff01e9"/></linearGradient>
<linearGradient id="x207" gradientUnits="userSpaceOnUse" x1="2994.1" y1="982.4" x2="3026.1" y2="1206.3"><stop offset=".00" stop-color="#fff"/><stop offset=".07" stop-color="#ffe3fc"/><stop offset=".17" stop-color="#ffc0f7"/><stop offset=".32" stop-color="#ff92f2"/><stop offset=".50" stop-color="#ff64ed"/><stop offset=".72" stop-color="#ff35e8"/><stop offset="1" stop-color="#ff01e3"/></linearGradient>
<linearGradient id="x208" gradientUnits="userSpaceOnUse" x1="2994.1" y1="982.4" x2="3031.2" y2="1203.6"><stop offset=".00" stop-color="#fff"/><stop offset=".07" stop-color="#ffe3fb"/><stop offset=".17" stop-color="#ffbff6"/><stop offset=".32" stop-color="#ff91ef"/><stop offset=".50" stop-color="#ff63e9"/><stop offset=".72" stop-color="#ff35e2"/><stop offset="1" stop-color="#ff01dc"/></linearGradient>
<linearGradient id="x209" gradientUnits="userSpaceOnUse" x1="2994.1" y1="982.4" x2="3036.5" y2="1200.8"><stop offset=".00" stop-color="#fff"/><stop offset=".07" stop-color="#ffe2fa"/><stop offset=".17" stop-color="#ffbef4"/><stop offset=".32" stop-color="#ff90ec"/><stop offset=".50" stop-color="#ff62e4"/><stop offset=".72" stop-color="#ff34dd"/><stop offset="1" stop-color="#ff01d6"/></linearGradient>
<linearGradient id="x210" gradientUnits="userSpaceOnUse" x1="2994.1" y1="982.4" x2="3041.8" y2="1198"><stop offset=".00" stop-color="#fff"/><stop offset=".07" stop-color="#ffe2f9"/><stop offset=".17" stop-color="#ffbdf2"/><stop offset=".32" stop-color="#ff8fe9"/><stop offset=".50" stop-color="#ff61e0"/><stop offset=".72" stop-color="#ff33d8"/><stop offset="1" stop-color="#ff01d0"/></linearGradient>
<linearGradient id="x211" gradientUnits="userSpaceOnUse" x1="2994.1" y1="982.4" x2="3047.3" y2="1195.1"><stop offset=".00" stop-color="#fff"/><stop offset=".07" stop-color="#ffe1f8"/><stop offset=".17" stop-color="#ffbcf0"/><stop offset=".32" stop-color="#ff8ee6"/><stop offset=".50" stop-color="#ff60dc"/><stop offset=".72" stop-color="#ff32d2"/><stop offset="1" stop-color="#ff01c9"/></linearGradient>
<linearGradient id="x212" gradientUnits="userSpaceOnUse" x1="2994.1" y1="982.4" x2="3053.1" y2="1192"><stop offset=".00" stop-color="#fff"/><stop offset=".07" stop-color="#ffe1f7"/><stop offset=".17" stop-color="#fbe"/><stop offset=".32" stop-color="#ff8ce2"/><stop offset=".50" stop-color="#ff5fd7"/><stop offset=".72" stop-color="#ff32cd"/><stop offset="1" stop-color="#ff01c3"/></linearGradient>
<linearGradient id="x213" gradientUnits="userSpaceOnUse" x1="2994.1" y1="982.4" x2="3059" y2="1188.9"><stop offset=".00" stop-color="#fff"/><stop offset=".07" stop-color="#ffe0f6"/><stop offset=".17" stop-color="#ffbaec"/><stop offset=".32" stop-color="#ff8bdf"/><stop offset=".50" stop-color="#ff5ed3"/><stop offset=".72" stop-color="#ff31c8"/><stop offset="1" stop-color="#ff01bd"/></linearGradient>
<linearGradient id="x214" gradientUnits="userSpaceOnUse" x1="2994.1" y1="982.4" x2="3065.2" y2="1185.6"><stop offset=".00" stop-color="#fff"/><stop offset=".07" stop-color="#ffe0f5"/><stop offset=".17" stop-color="#ffb9ea"/><stop offset=".32" stop-color="#ff8adc"/><stop offset=".50" stop-color="#ff5ccf"/><stop offset=".72" stop-color="#ff30c2"/><stop offset="1" stop-color="#ff01b7"/></linearGradient>
<linearGradient id="x215" gradientUnits="userSpaceOnUse" x1="2994.1" y1="982.4" x2="3071.6" y2="1182.2"><stop offset=".00" stop-color="#fff"/><stop offset=".07" stop-color="#ffdff4"/><stop offset=".17" stop-color="#ffb8e8"/><stop offset=".32" stop-color="#ff89d8"/><stop offset=".50" stop-color="#ff5bca"/><stop offset=".72" stop-color="#ff2fbd"/><stop offset="1" stop-color="#ff01b1"/></linearGradient>
<linearGradient id="x216" gradientUnits="userSpaceOnUse" x1="2994.1" y1="982.4" x2="3078.2" y2="1178.7"><stop offset=".00" stop-color="#fff"/><stop offset=".07" stop-color="#ffdff3"/><stop offset=".17" stop-color="#ffb7e6"/><stop offset=".32" stop-color="#ff87d5"/><stop offset=".50" stop-color="#ff5ac6"/><stop offset=".72" stop-color="#ff2eb8"/><stop offset="1" stop-color="#ff01aa"/></linearGradient>
<linearGradient id="x217" gradientUnits="userSpaceOnUse" x1="2994.1" y1="982.4" x2="3085.1" y2="1175.1"><stop offset=".00" stop-color="#fff"/><stop offset=".07" stop-color="#ffdef2"/><stop offset=".17" stop-color="#ffb6e3"/><stop offset=".32" stop-color="#ff86d1"/><stop offset=".50" stop-color="#ff59c1"/><stop offset=".72" stop-color="#ff2eb2"/><stop offset="1" stop-color="#ff01a4"/></linearGradient>
<linearGradient id="x218" gradientUnits="userSpaceOnUse" x1="2994.1" y1="982.4" x2="3092.4" y2="1171.2"><stop offset=".00" stop-color="#fff"/><stop offset=".07" stop-color="#ffddf1"/><stop offset=".17" stop-color="#ffb5e1"/><stop offset=".32" stop-color="#ff84ce"/><stop offset=".50" stop-color="#ff58bc"/><stop offset=".72" stop-color="#ff2dad"/><stop offset="1" stop-color="#ff019e"/></linearGradient>
<linearGradient id="x219" gradientUnits="userSpaceOnUse" x1="2994.1" y1="982.4" x2="3099.9" y2="1167.2"><stop offset=".00" stop-color="#fff"/><stop offset=".07" stop-color="#ffddf0"/><stop offset=".17" stop-color="#ffb4df"/><stop offset=".32" stop-color="#ff83ca"/><stop offset=".50" stop-color="#ff56b8"/><stop offset=".72" stop-color="#ff2ca7"/><stop offset="1" stop-color="#ff0198"/></linearGradient>
<linearGradient id="x220" gradientUnits="userSpaceOnUse" x1="2994.1" y1="982.4" x2="3107.6" y2="1163.1"><stop offset=".00" stop-color="#fff"/><stop offset=".07" stop-color="#ffdcef"/><stop offset=".17" stop-color="#ffb2dc"/><stop offset=".32" stop-color="#ff82c6"/><stop offset=".50" stop-color="#ff55b3"/><stop offset=".72" stop-color="#ff2ba2"/><stop offset="1" stop-color="#ff0192"/></linearGradient>
<linearGradient id="x221" gradientUnits="userSpaceOnUse" x1="2994.1" y1="982.4" x2="3115.7" y2="1158.8"><stop offset=".00" stop-color="#fff"/><stop offset=".07" stop-color="#ffdbee"/><stop offset=".17" stop-color="#ffb1da"/><stop offset=".32" stop-color="#ff80c3"/><stop offset=".50" stop-color="#ff54ae"/><stop offset=".72" stop-color="#ff2a9c"/><stop offset="1" stop-color="#ff018c"/></linearGradient>
<linearGradient id="x222" gradientUnits="userSpaceOnUse" x1="2994.1" y1="982.4" x2="3124.4" y2="1154.2"><stop offset=".00" stop-color="#fff"/><stop offset=".07" stop-color="#ffdaec"/><stop offset=".17" stop-color="#ffb0d7"/><stop offset=".32" stop-color="#ff7fbf"/><stop offset=".50" stop-color="#ff52a9"/><stop offset=".72" stop-color="#ff2a96"/><stop offset="1" stop-color="#ff0185"/></linearGradient>
<linearGradient id="x223" gradientUnits="userSpaceOnUse" x1="2994.1" y1="982.4" x2="3133.4" y2="1149.4"><stop offset=".00" stop-color="#fff"/><stop offset=".07" stop-color="#ffdaeb"/><stop offset=".17" stop-color="#ffafd4"/><stop offset=".32" stop-color="#ff7dbb"/><stop offset=".50" stop-color="#ff51a4"/><stop offset=".72" stop-color="#ff2991"/><stop offset="1" stop-color="#ff017f"/></linearGradient>
<linearGradient id="x224" gradientUnits="userSpaceOnUse" x1="2994.1" y1="982.4" x2="3142.7" y2="1144.5"><stop offset=".00" stop-color="#fff"/><stop offset=".07" stop-color="#ffd9ea"/><stop offset=".17" stop-color="#ffadd2"/><stop offset=".32" stop-color="#ff7cb6"/><stop offset=".50" stop-color="#ff509f"/><stop offset=".72" stop-color="#ff288b"/><stop offset="1" stop-color="#ff0179"/></linearGradient>
<linearGradient id="x225" gradientUnits="userSpaceOnUse" x1="2994.1" y1="982.4" x2="3152.2" y2="1139.4"><stop offset=".00" stop-color="#fff"/><stop offset=".07" stop-color="#ffd8e8"/><stop offset=".17" stop-color="#ffaccf"/><stop offset=".32" stop-color="#ff7ab2"/><stop offset=".50" stop-color="#ff4e9a"/><stop offset=".72" stop-color="#ff2785"/><stop offset="1" stop-color="#ff0173"/></linearGradient>
<linearGradient id="x226" gradientUnits="userSpaceOnUse" x1="2994.1" y1="982.4" x2="3162.1" y2="1134.2"><stop offset=".00" stop-color="#fff"/><stop offset=".07" stop-color="#ffd7e7"/><stop offset=".17" stop-color="#fac"/><stop offset=".32" stop-color="#ff78ae"/><stop offset=".50" stop-color="#ff4d95"/><stop offset=".72" stop-color="#ff2780"/><stop offset="1" stop-color="#ff016d"/></linearGradient>
<linearGradient id="x227" gradientUnits="userSpaceOnUse" x1="2994.1" y1="982.4" x2="3172.7" y2="1128.5"><stop offset=".00" stop-color="#fff"/><stop offset=".07" stop-color="#ffd6e5"/><stop offset=".17" stop-color="#ffa9c9"/><stop offset=".32" stop-color="#f7a"/><stop offset=".50" stop-color="#ff4c90"/><stop offset=".72" stop-color="#ff267a"/><stop offset="1" stop-color="#ff0167"/></linearGradient>
<linearGradient id="x228" gradientUnits="userSpaceOnUse" x1="2994.1" y1="982.4" x2="3184" y2="1122.6"><stop offset=".00" stop-color="#fff"/><stop offset=".07" stop-color="#ffd5e4"/><stop offset=".17" stop-color="#ffa7c6"/><stop offset=".32" stop-color="#ff75a6"/><stop offset=".50" stop-color="#ff4a8b"/><stop offset=".72" stop-color="#ff2574"/><stop offset="1" stop-color="#ff0161"/></linearGradient>
<linearGradient id="x229" gradientUnits="userSpaceOnUse" x1="2994.1" y1="982.4" x2="3195.7" y2="1116.3"><stop offset=".00" stop-color="#fff"/><stop offset=".07" stop-color="#ffd4e2"/><stop offset=".17" stop-color="#ffa6c3"/><stop offset=".32" stop-color="#ff73a1"/><stop offset=".50" stop-color="#ff4986"/><stop offset=".72" stop-color="#ff246e"/><stop offset="1" stop-color="#ff015a"/></linearGradient>
<linearGradient id="x230" gradientUnits="userSpaceOnUse" x1="2994.1" y1="982.4" x2="3207.8" y2="1109.9"><stop offset=".00" stop-color="#fff"/><stop offset=".07" stop-color="#ffd3e0"/><stop offset=".17" stop-color="#ffa4bf"/><stop offset=".32" stop-color="#ff729d"/><stop offset=".50" stop-color="#ff4880"/><stop offset=".72" stop-color="#ff2369"/><stop offset="1" stop-color="#ff0154"/></linearGradient>
<linearGradient id="x231" gradientUnits="userSpaceOnUse" x1="2994.1" y1="982.4" x2="3220.6" y2="1103.1"><stop offset=".00" stop-color="#fff"/><stop offset=".07" stop-color="#ffd2df"/><stop offset=".17" stop-color="#ffa3bc"/><stop offset=".32" stop-color="#ff7098"/><stop offset=".50" stop-color="#ff467b"/><stop offset=".72" stop-color="#ff2263"/><stop offset="1" stop-color="#ff014e"/></linearGradient>
<linearGradient id="x232" gradientUnits="userSpaceOnUse" x1="2994.1" y1="982.4" x2="3234.1" y2="1096"><stop offset=".00" stop-color="#fff"/><stop offset=".07" stop-color="#ffd1dd"/><stop offset=".17" stop-color="#ffa1b9"/><stop offset=".32" stop-color="#ff6e93"/><stop offset=".50" stop-color="#ff4576"/><stop offset=".72" stop-color="#ff225d"/><stop offset="1" stop-color="#ff0148"/></linearGradient>
<linearGradient id="x233" gradientUnits="userSpaceOnUse" x1="2994.1" y1="982.4" x2="3248.2" y2="1088.5"><stop offset=".00" stop-color="#fff"/><stop offset=".07" stop-color="#ffd0db"/><stop offset=".17" stop-color="#ff9fb5"/><stop offset=".32" stop-color="#ff6c8f"/><stop offset=".50" stop-color="#ff4370"/><stop offset=".72" stop-color="#ff2157"/><stop offset="1" stop-color="#ff0142"/></linearGradient>
<linearGradient id="x234" gradientUnits="userSpaceOnUse" x1="2994.1" y1="982.4" x2="3263.2" y2="1080.5"><stop offset=".00" stop-color="#fff"/><stop offset=".07" stop-color="#ffcfd9"/><stop offset=".17" stop-color="#ff9db2"/><stop offset=".32" stop-color="#ff6b8a"/><stop offset=".50" stop-color="#ff426b"/><stop offset=".72" stop-color="#ff2051"/><stop offset="1" stop-color="#ff013c"/></linearGradient>
<linearGradient id="x235" gradientUnits="userSpaceOnUse" x1="2994.1" y1="982.4" x2="3278.9" y2="1072.2"><stop offset=".00" stop-color="#fff"/><stop offset=".07" stop-color="#ffced7"/><stop offset=".17" stop-color="#ff9cae"/><stop offset=".32" stop-color="#ff6985"/><stop offset=".50" stop-color="#ff4165"/><stop offset=".72" stop-color="#ff1f4b"/><stop offset="1" stop-color="#ff0136"/></linearGradient>
<linearGradient id="x236" gradientUnits="userSpaceOnUse" x1="2994.1" y1="982.4" x2="3295.2" y2="1063.5"><stop offset=".00" stop-color="#fff"/><stop offset=".07" stop-color="#ffcdd5"/><stop offset=".17" stop-color="#ff9aaa"/><stop offset=".32" stop-color="#ff6780"/><stop offset=".50" stop-color="#ff3f5f"/><stop offset=".72" stop-color="#ff1e45"/><stop offset="1" stop-color="#ff0130"/></linearGradient>
<linearGradient id="x237" gradientUnits="userSpaceOnUse" x1="2994.1" y1="982.4" x2="3312.4" y2="1054.4"><stop offset=".00" stop-color="#fff"/><stop offset=".07" stop-color="#ffcbd2"/><stop offset=".17" stop-color="#ff98a6"/><stop offset=".32" stop-color="#ff657b"/><stop offset=".50" stop-color="#ff3e5a"/><stop offset=".72" stop-color="#ff1e40"/><stop offset="1" stop-color="#ff012a"/></linearGradient>
<linearGradient id="x238" gradientUnits="userSpaceOnUse" x1="2994.1" y1="982.4" x2="3330.5" y2="1044.8"><stop offset=".00" stop-color="#fff"/><stop offset=".07" stop-color="#ffcad0"/><stop offset=".17" stop-color="#ff96a2"/><stop offset=".32" stop-color="#ff6376"/><stop offset=".50" stop-color="#ff3c54"/><stop offset=".72" stop-color="#ff1d3a"/><stop offset="1" stop-color="#ff0124"/></linearGradient>
<linearGradient id="x239" gradientUnits="userSpaceOnUse" x1="2994.1" y1="982.4" x2="3349.5" y2="1034.7"><stop offset=".00" stop-color="#fff"/><stop offset=".07" stop-color="#ffc9ce"/><stop offset=".17" stop-color="#ff949e"/><stop offset=".32" stop-color="#ff6171"/><stop offset=".50" stop-color="#ff3b4f"/><stop offset=".72" stop-color="#ff1c34"/><stop offset="1" stop-color="#ff011e"/></linearGradient>
<linearGradient id="x240" gradientUnits="userSpaceOnUse" x1="2994.1" y1="982.4" x2="3369.4" y2="1024.1"><stop offset=".00" stop-color="#fff"/><stop offset=".07" stop-color="#ffc7cb"/><stop offset=".17" stop-color="#ff929a"/><stop offset=".32" stop-color="#ff5f6b"/><stop offset=".50" stop-color="#ff3949"/><stop offset=".72" stop-color="#ff1b2e"/><stop offset="1" stop-color="#ff0118"/></linearGradient>
<linearGradient id="x241" gradientUnits="userSpaceOnUse" x1="2994.1" y1="982.4" x2="3390.1" y2="1013.1"><stop offset=".00" stop-color="#fff"/><stop offset=".07" stop-color="#ffc6c9"/><stop offset=".17" stop-color="#ff9096"/><stop offset=".32" stop-color="#ff5d66"/><stop offset=".50" stop-color="#ff3843"/><stop offset=".72" stop-color="#ff1b28"/><stop offset="1" stop-color="#ff0112"/></linearGradient>
<linearGradient id="x242" gradientUnits="userSpaceOnUse" x1="2994.1" y1="982.4" x2="3411.5" y2="1001.8"><stop offset=".00" stop-color="#fff"/><stop offset=".07" stop-color="#ffc4c6"/><stop offset=".17" stop-color="#ff8e91"/><stop offset=".32" stop-color="#ff5b61"/><stop offset=".50" stop-color="#ff373e"/><stop offset=".72" stop-color="#ff1a22"/><stop offset="1" stop-color="#ff010c"/></linearGradient>
<linearGradient id="x243" gradientUnits="userSpaceOnUse" x1="2994.1" y1="982.4" x2="3433.2" y2="990.3"><stop offset=".00" stop-color="#fff"/><stop offset=".07" stop-color="#ffc3c4"/><stop offset=".17" stop-color="#ff8c8d"/><stop offset=".32" stop-color="#ff5a5c"/><stop offset=".50" stop-color="#ff3538"/><stop offset=".72" stop-color="#ff191d"/><stop offset="1" stop-color="#ff0106"/></linearGradient>
<linearGradient id="x244" gradientUnits="userSpaceOnUse" x1="2994.1" y1="982.4" x2="3447.3" y2="982.8"><stop offset=".00" stop-color="#fff"/><stop offset=".07" stop-color="#ffc2c2"/><stop offset=".17" stop-color="#ff8a8b"/><stop offset=".32" stop-color="#ff5859"/><stop offset=".50" stop-color="#ff3435"/><stop offset=".72" stop-color="#ff1919"/><stop offset="1" stop-color="#ff0102"/></linearGradient>
<clipPath id="swclip"><rect x="23" y="1568" width="3793.5" height="306"/></clipPath>
<linearGradient id="gBb" x1="0" y1="0" x2="0" y2="1"><stop offset="0" stop-color="#a6a6a6"/><stop offset=".45" stop-color="#7e7e7e"/><stop offset="1" stop-color="#5e5e5e"/></linearGradient>
<linearGradient id="gNext" x1="0" y1="0" x2="0" y2="1"><stop offset="0" stop-color="#f4f4f4"/><stop offset=".5" stop-color="#b8b8b8"/><stop offset="1" stop-color="#8a8a8a"/></linearGradient>
</defs>
<rect x="0" y="0" width="3840" height="2021" fill="#333333"/>
<rect x="0" y="0" width="3840" height="52" fill="#1f1f1f"/>
<rect x="0" y="52" width="2" height="1969" fill="#262626"/>
<path d="M0 6 H32 Q40 6 40 14 V40 Q40 48 32 48 H0 Z" fill="url(#gPlay)" stroke="#c8c8c8" stroke-width="1"/>
<circle cx="19" cy="27" r="14" fill="url(#gPlayC)"/>
<path d="M15 18.5 L22.8 26 L15 33.5 Z" fill="#fff"/>
<path d="M44 52 V15 Q44 6 53 6 H312 Q321 6 321 15 V52 Z" fill="url(#gTab)"/>
<path d="M44.5 52 V15 Q44.5 6.5 53 6.5 H312 Q320.5 6.5 320.5 15 V52" fill="none" stroke="#6a6a6a" stroke-width="1.5"/>
<rect x="101" y="8" width="1.5" height="44" fill="#555"/>
<rect x="175" y="8" width="1.5" height="44" fill="#555"/>
<rect x="270" y="8" width="1.5" height="44" fill="#555"/>
<text x="52" y="35.6" font-size="16.3" fill="#8f8f8f" textLength="41" lengthAdjust="spacingAndGlyphs">sRGB</text>
<text x="110" y="35.6" font-size="16.3" fill="#8f8f8f" textLength="55.5" lengthAdjust="spacingAndGlyphs">default</text>
<text x="183" y="35.6" font-size="16.3" fill="#e0e0e0" textLength="80" lengthAdjust="spacingAndGlyphs">Display P3</text>
<circle cx="295" cy="32" r="14" fill="#363636"/>
<text x="295" y="38" font-size="20" fill="#8a8a8a" text-anchor="middle">+</text>
<path d="M2694 6 H3194 Q3198 6 3198 10 V51 H2694 Z" fill="url(#gDev)" stroke="#7a7a7a" stroke-width="1"/>
<rect x="2695" y="8" width="8" height="43" fill="#14e614"/>
<text x="2707" y="23.6" font-size="16.3" fill="#ececec" textLength="247" lengthAdjust="spacingAndGlyphs">Colorimetry Research CR-100/200</text>
<text x="2707" y="44.1" font-size="16.3" fill="#ececec" textLength="448" lengthAdjust="spacingAndGlyphs">lenovo-thinkpad-p16-gen-2-E„?µe¼.)„;côi¼G†?rºº{¼]zü&lt;–ò‹?</text>
<circle cx="3174.5" cy="29" r="15" fill="url(#gDd)"/>
<path d="M3167.5 26 L3181.5 26 L3174.5 33 Z" fill="#fff"/>
<path d="M3207 6 H3516 Q3520 6 3520 10 V51 H3207 Z" fill="url(#gDev)" stroke="#7a7a7a" stroke-width="1"/>
<rect x="3208" y="8" width="8" height="43" fill="#14e614"/>
<text x="3220" y="23.6" font-size="16.3" fill="#ececec" textLength="256" lengthAdjust="spacingAndGlyphs">CalMAN Client 3 Pattern Generator</text>
<circle cx="3495" cy="29" r="15" fill="url(#gDd)"/>
<path d="M3488 26 L3502 26 L3495 33 Z" fill="#fff"/>
<path d="M3529 6 H3739 Q3743 6 3743 10 V51 H3529 Z" fill="url(#gDev)" stroke="#7a7a7a" stroke-width="1"/>
<rect x="3530" y="8" width="8" height="43" fill="#e6e614"/>
<text x="3542" y="23.6" font-size="16.3" fill="#ececec" textLength="158" lengthAdjust="spacingAndGlyphs">Direct Display Control</text>
<circle cx="3719" cy="29" r="15" fill="url(#gDd)"/>
<path d="M3712 26 L3726 26 L3719 33 Z" fill="#fff"/>
<rect x="3749.5" y="6.8" width="48" height="40.5" rx="4" fill="url(#gBtn2)" stroke="#d8d8d8" stroke-width="1.6"/>
<circle cx="3774" cy="27" r="14.5" fill="url(#gCirc)"/>
<g transform="translate(3774 27)"><rect x="-2" y="-9.8" width="4" height="5" transform="rotate(0)" fill="#e0e0e0"/><rect x="-2" y="-9.8" width="4" height="5" transform="rotate(40)" fill="#e0e0e0"/><rect x="-2" y="-9.8" width="4" height="5" transform="rotate(80)" fill="#e0e0e0"/><rect x="-2" y="-9.8" width="4" height="5" transform="rotate(120)" fill="#e0e0e0"/><rect x="-2" y="-9.8" width="4" height="5" transform="rotate(160)" fill="#e0e0e0"/><rect x="-2" y="-9.8" width="4" height="5" transform="rotate(200)" fill="#e0e0e0"/><rect x="-2" y="-9.8" width="4" height="5" transform="rotate(240)" fill="#e0e0e0"/><rect x="-2" y="-9.8" width="4" height="5" transform="rotate(280)" fill="#e0e0e0"/><rect x="-2" y="-9.8" width="4" height="5" transform="rotate(320)" fill="#e0e0e0"/><circle r="6.3" fill="none" stroke="#e0e0e0" stroke-width="3"/></g>
<path d="M3840 6.8 H3806 Q3801.5 6.8 3801.5 11 V43 Q3801.5 47.3 3806 47.3 H3840" fill="url(#gBtn2)" stroke="#d8d8d8" stroke-width="1.6"/>
<circle cx="3820" cy="27" r="14.5" fill="url(#gCirc)"/>
<path d="M3815 26.5 L3824 19 L3824 33 Z" fill="#fafafa"/>
<text x="33.6 132.2 216.6 253.8 344.1 391.5 431 524.9 594.9 666.2 752.4 796.4 880.4 948.9" y="292.8" font-size="142.4" fill="#eee" stroke="#eee" stroke-width="1.5" transform="scale(0.94 1)">Color Accuracy</text>
<text x="487.5" y="472.3" font-size="34.9" fill="#dcdcdc" textLength="181" lengthAdjust="spacingAndGlyphs">DeltaE 2000</text>
<rect x="52.5" y="484.9" width="1050" height="791.9" fill="#232323"/>
<rect x="188.5" y="484.9" width="3" height="791.9" fill="#8c8c8c"/>
<rect x="328.5" y="484.9" width="3" height="791.9" fill="#8c8c8c"/>
<rect x="468.6" y="484.9" width="3" height="791.9" fill="#8c8c8c"/>
<rect x="608.6" y="484.9" width="3" height="791.9" fill="#8c8c8c"/>
<rect x="888.8" y="484.9" width="3" height="791.9" fill="#8c8c8c"/>
<rect x="1028.8" y="484.9" width="3" height="791.9" fill="#8c8c8c"/>
<rect x="52.5" y="484.9" width="1050" height="791.9" fill="none" stroke="#a0a0a0" stroke-width="3"/>
<rect x="54" y="486.4" width="373.5" height="19.8" fill="#000"/>
<rect x="54" y="488.9" width="370.5" height="15" fill="url(#gb0)"/>
<rect x="54" y="512.8" width="198.3" height="19.8" fill="#000"/>
<rect x="54" y="515.3" width="195.3" height="15" fill="url(#gb1)"/>
<rect x="54" y="539.2" width="344.9" height="19.8" fill="#000"/>
<rect x="54" y="541.7" width="341.9" height="15" fill="url(#gb2)"/>
<rect x="54" y="565.6" width="116.7" height="19.8" fill="#000"/>
<rect x="54" y="568.1" width="113.7" height="15" fill="url(#gb3)"/>
<rect x="54" y="592" width="391.7" height="19.8" fill="#000"/>
<rect x="54" y="594.5" width="388.7" height="15" fill="url(#gb4)"/>
<rect x="54" y="618.4" width="425.9" height="19.8" fill="#000"/>
<rect x="54" y="620.9" width="422.9" height="15" fill="url(#gb5)"/>
<rect x="54" y="644.8" width="280.7" height="19.8" fill="#000"/>
<rect x="54" y="647.3" width="277.7" height="15" fill="url(#gb6)"/>
<rect x="54" y="671.2" width="220.7" height="19.8" fill="#000"/>
<rect x="54" y="673.7" width="217.7" height="15" fill="url(#gb7)"/>
<rect x="54" y="697.6" width="318.4" height="19.8" fill="#000"/>
<rect x="54" y="700.1" width="315.4" height="15" fill="url(#gb8)"/>
<rect x="54" y="724" width="229.7" height="19.8" fill="#000"/>
<rect x="54" y="726.5" width="226.7" height="15" fill="url(#gb9)"/>
<rect x="54" y="750.4" width="296" height="19.8" fill="#000"/>
<rect x="54" y="752.9" width="293" height="15" fill="url(#gb10)"/>
<rect x="54" y="776.8" width="111.1" height="19.8" fill="#000"/>
<rect x="54" y="779.3" width="108.1" height="15" fill="url(#gb11)"/>
<rect x="54" y="803.2" width="276.5" height="19.8" fill="#000"/>
<rect x="54" y="805.7" width="273.5" height="15" fill="url(#gb12)"/>
<rect x="54" y="829.6" width="217.9" height="19.8" fill="#000"/>
<rect x="54" y="832.1" width="214.9" height="15" fill="url(#gb13)"/>
<rect x="54" y="856" width="183.7" height="19.8" fill="#000"/>
<rect x="54" y="858.5" width="180.7" height="15" fill="url(#gb14)"/>
<rect x="54" y="882.4" width="229.7" height="19.8" fill="#000"/>
<rect x="54" y="884.9" width="226.7" height="15" fill="url(#gb15)"/>
<rect x="54" y="908.8" width="127.8" height="19.8" fill="#000"/>
<rect x="54" y="911.3" width="124.8" height="15" fill="url(#gb16)"/>
<rect x="54" y="935.2" width="275.8" height="19.8" fill="#000"/>
<rect x="54" y="937.7" width="272.8" height="15" fill="url(#gb17)"/>
<rect x="54" y="961.6" width="270.2" height="19.8" fill="#000"/>
<rect x="54" y="964.1" width="267.2" height="15" fill="url(#gb18)"/>
<rect x="54" y="988" width="136.9" height="19.8" fill="#000"/>
<rect x="54" y="990.5" width="133.9" height="15" fill="url(#gb19)"/>
<rect x="54" y="1014.4" width="171.1" height="19.8" fill="#000"/>
<rect x="54" y="1016.9" width="168.1" height="15" fill="url(#gb20)"/>
<rect x="54" y="1040.8" width="165.5" height="19.8" fill="#000"/>
<rect x="54" y="1043.3" width="162.5" height="15" fill="url(#gb21)"/>
<rect x="54" y="1067.2" width="171.1" height="19.8" fill="#000"/>
<rect x="54" y="1069.7" width="168.1" height="15" fill="url(#gb22)"/>
<rect x="54" y="1093.6" width="186.5" height="19.8" fill="#000"/>
<rect x="54" y="1096.1" width="183.5" height="15" fill="url(#gb23)"/>
<rect x="54" y="1120" width="24.5" height="19.8" fill="#000"/>
<rect x="54" y="1122.5" width="21.5" height="15" fill="url(#gb24)"/>
<rect x="54" y="1146.4" width="127.8" height="19.8" fill="#000"/>
<rect x="54" y="1148.9" width="124.8" height="15" fill="url(#gb25)"/>
<rect x="54" y="1172.8" width="107.6" height="19.8" fill="#000"/>
<rect x="54" y="1175.3" width="104.6" height="15" fill="url(#gb26)"/>
<rect x="54" y="1199.2" width="104.8" height="19.8" fill="#000"/>
<rect x="54" y="1201.7" width="101.8" height="15" fill="url(#gb27)"/>
<rect x="54" y="1225.6" width="105.5" height="19.8" fill="#000"/>
<rect x="54" y="1228.1" width="102.5" height="15" fill="url(#gb28)"/>
<rect x="54" y="1252" width="102.7" height="19.8" fill="#000"/>
<rect x="54" y="1254.5" width="99.7" height="15" fill="url(#gb29)"/>
<rect x="119.5" y="484.9" width="3" height="791.9" fill="#0c8a0c"/>
<rect x="259.8" y="484.9" width="3" height="791.9" fill="#f0f000"/>
<rect x="751.5" y="484.9" width="3" height="791.9" fill="#e81010"/>
<rect x="51.2" y="1276.8" width="3" height="12" fill="#d8d8d8"/>
<text x="52.7" y="1326" font-size="32.7" fill="#d8d8d8" text-anchor="middle">0</text>
<rect x="188.5" y="1276.8" width="3" height="12" fill="#d8d8d8"/>
<text x="190" y="1326" font-size="32.7" fill="#d8d8d8" text-anchor="middle">2</text>
<rect x="328.5" y="1276.8" width="3" height="12" fill="#d8d8d8"/>
<text x="330" y="1326" font-size="32.7" fill="#d8d8d8" text-anchor="middle">4</text>
<rect x="468.6" y="1276.8" width="3" height="12" fill="#d8d8d8"/>
<text x="470.1" y="1326" font-size="32.7" fill="#d8d8d8" text-anchor="middle">6</text>
<rect x="608.6" y="1276.8" width="3" height="12" fill="#d8d8d8"/>
<text x="610.1" y="1326" font-size="32.7" fill="#d8d8d8" text-anchor="middle">8</text>
<rect x="748.7" y="1276.8" width="3" height="12" fill="#d8d8d8"/>
<text x="750.2" y="1326" font-size="32.7" fill="#d8d8d8" text-anchor="middle">10</text>
<rect x="888.8" y="1276.8" width="3" height="12" fill="#d8d8d8"/>
<text x="890.3" y="1326" font-size="32.7" fill="#d8d8d8" text-anchor="middle">12</text>
<rect x="1028.8" y="1276.8" width="3" height="12" fill="#d8d8d8"/>
<text x="1030.3" y="1326" font-size="32.7" fill="#d8d8d8" text-anchor="middle">14</text>
<g clip-path="url(#clipAvg)">
<text x="40" y="1425.7" font-size="60.3" fill="#eeeeee" textLength="341" lengthAdjust="spacingAndGlyphs" stroke="#eee" stroke-width="0.8">Avg Color dE:</text>
<text x="396.5" y="1425.2" font-size="55.9" fill="#eeeeee" textLength="175" lengthAdjust="spacingAndGlyphs" stroke="#eee" stroke-width="0.8">3.1289</text>
<text x="40.1" y="1518" font-size="60.3" fill="#eeeeee" textLength="361" lengthAdjust="spacingAndGlyphs" stroke="#eee" stroke-width="0.8">Max Color dE:</text>
<text x="415" y="1517.8" font-size="55.9" fill="#eeeeee" textLength="142" lengthAdjust="spacingAndGlyphs" stroke="#eee" stroke-width="0.8">6.155</text>
</g>
<rect x="1280.8" y="294.3" width="1153.7" height="1129.2" fill="#232323"/>
<g clip-path="url(#uhs)">
<path fill="#090" stroke="#090" stroke-width="4" d="M1500.5 446.9 L-1981.3 33.8 L961.3 -3772.3 Z"/>
<path fill="#900" stroke="#900" stroke-width="4" d="M2080.8 515.7 L5562.7 928.8 L5023.5 -3290.4 Z"/>
<path fill="#009" stroke="#009" stroke-width="4" d="M1590.4 1150.1 L-1352.3 4956.2 L2129.6 5369.3 Z"/>
<g clip-path="url(#uf0)">
<path fill="#009903" d="M1558.2 450.7 L-1403.6 82.4 L-1392 173.5 L1559.9 464.4 Z"/>
<path fill="#009908" d="M1559.1 458.3 L-1397.1 133 L-1385.5 224 L1560.9 472 Z"/>
<path fill="#00990d" d="M1560.1 466.1 L-1390.5 184.8 L-1379.6 270.5 L1561.8 478.9 Z"/>
<path fill="#009912" d="M1561 473.2 L-1384.4 232.4 L-1373.5 318.1 L1562.7 486.1 Z"/>
<path fill="#009917" d="M1562 480.5 L-1378.2 281.2 L-1367.9 361.5 L1563.5 492.6 Z"/>
<path fill="#00991c" d="M1562.8 487.2 L-1372.5 325.8 L-1362.2 406.1 L1564.4 499.3 Z"/>
<path fill="#092" d="M1563.7 493.9 L-1366.8 370.4 L-1356.5 450.8 L1565.2 506 Z"/>
<path fill="#009927" d="M1564.5 500.6 L-1361.1 415.1 L-1350.8 495.4 L1566.1 512.7 Z"/>
<path fill="#00992c" d="M1565.4 507.5 L-1355.2 460.9 L-1345.7 535.9 L1566.8 518.7 Z"/>
<path fill="#009931" d="M1566.2 513.7 L-1349.9 502.5 L-1340.3 577.5 L1567.6 525 Z"/>
<path fill="#009936" d="M1567 520 L-1344.6 544.2 L-1335 619.2 L1568.4 531.2 Z"/>
<path fill="#00993c" d="M1567.8 526.4 L-1339.1 587 L-1330.2 656.7 L1569.2 536.9 Z"/>
<path fill="#009941" d="M1568.6 532.2 L-1334.2 625.7 L-1325.3 695.4 L1569.9 542.7 Z"/>
<path fill="#009946" d="M1569.3 538 L-1329.2 664.4 L-1320.3 734 L1570.6 548.5 Z"/>
<path fill="#00994b" d="M1570.1 543.8 L-1324.3 703.1 L-1315.4 772.7 L1571.4 554.3 Z"/>
<path fill="#009951" d="M1570.8 549.8 L-1319.2 743 L-1311 807.2 L1572 559.4 Z"/>
<path fill="#009956" d="M1571.5 555.2 L-1314.6 778.7 L-1306.4 842.9 L1572.7 564.8 Z"/>
<path fill="#00995b" d="M1572.2 560.5 L-1310.1 814.4 L-1301.9 878.6 L1573.4 570.2 Z"/>
<path fill="#009960" d="M1572.9 565.9 L-1305.5 850.1 L-1297.3 914.4 L1574.1 575.5 Z"/>
<path fill="#096" d="M1573.6 571.4 L-1300.8 887 L-1293.3 945.9 L1574.7 580.2 Z"/>
<path fill="#00996b" d="M1574.2 576.3 L-1296.6 919.7 L-1289.1 978.6 L1575.3 585.2 Z"/>
<path fill="#009970" d="M1574.8 581.2 L-1292.4 952.4 L-1284.9 1011.4 L1576 590.1 Z"/>
<path fill="#009975" d="M1575.5 586.1 L-1288.2 985.2 L-1280.7 1044.1 L1576.6 595 Z"/>
<path fill="#00997b" d="M1576.1 591 L-1284.1 1017.9 L-1276.5 1076.8 L1577.2 599.9 Z"/>
<path fill="#009980" d="M1576.7 596.1 L-1279.7 1051.8 L-1272.9 1105.4 L1577.8 604.2 Z"/>
<path fill="#009985" d="M1577.3 600.6 L-1275.9 1081.6 L-1269.1 1135.1 L1578.3 608.6 Z"/>
<path fill="#00998a" d="M1577.9 605.1 L-1272.1 1111.3 L-1265.3 1164.9 L1578.9 613.1 Z"/>
<path fill="#009990" d="M1578.4 609.5 L-1268.3 1141.1 L-1261.5 1194.6 L1579.5 617.6 Z"/>
<path fill="#009995" d="M1579 614 L-1264.5 1170.8 L-1257.7 1224.4 L1580 622 Z"/>
<path fill="#009799" d="M1579.5 618.1 L-1261 1198.2 L-1252.8 1262.5 L1580.8 627.7 Z"/>
<path fill="#009199" d="M1580.3 623.8 L-1256.1 1236.3 L-1249.3 1289.9 L1581.3 631.8 Z"/>
<path fill="#008c99" d="M1580.8 628.1 L-1252.5 1264.9 L-1245 1323.8 L1582 636.9 Z"/>
<path fill="#008799" d="M1581.4 633 L-1248.3 1297.6 L-1240.8 1356.5 L1582.6 641.8 Z"/>
<path fill="#008199" d="M1582.1 637.7 L-1244.3 1329.1 L-1236.1 1393.4 L1583.3 647.4 Z"/>
<path fill="#007c99" d="M1582.7 642.9 L-1239.9 1363.6 L-1231 1433.3 L1584.1 653.4 Z"/>
<path fill="#079" d="M1583.5 648.7 L-1234.9 1402.3 L-1226 1472 L1584.8 659.2 Z"/>
<path fill="#007299" d="M1584.2 654.3 L-1230.1 1439.8 L-1220.6 1514.8 L1585.6 665.6 Z"/>
<path fill="#006d99" d="M1585 660.4 L-1225 1480.3 L-1214.7 1560.6 L1586.5 672.5 Z"/>
<path fill="#006899" d="M1585.8 666.9 L-1219.4 1523.7 L-1208.5 1609.4 L1587.4 679.8 Z"/>
<path fill="#006299" d="M1586.7 673.9 L-1213.5 1570.1 L-1201.8 1661.2 L1588.4 687.5 Z"/>
<path fill="#005d99" d="M1587.6 681.3 L-1207.2 1619.5 L-1194.9 1715.9 L1589.5 695.8 Z"/>
<path fill="#005899" d="M1588.6 689.1 L-1200.5 1671.9 L-1187.5 1773.7 L1590.6 704.4 Z"/>
<path fill="#005399" d="M1589.7 697.3 L-1193.6 1726.1 L-1179.2 1838.5 L1591.8 714.1 Z"/>
<path fill="#004e99" d="M1590.8 706.3 L-1185.9 1786.2 L-1170.1 1909.3 L1593.2 724.8 Z"/>
<path fill="#004999" d="M1592.1 716.4 L-1177.3 1853.4 L-1160.9 1982 L1594.6 735.7 Z"/>
<path fill="#049" d="M1593.4 726.7 L-1168.5 1922.4 L-1150.7 2061.7 L1596.1 747.6 Z"/>
<path fill="#003f99" d="M1594.8 737.8 L-1159 1996.2 L-1139.2 2151.6 L1597.8 761.1 Z"/>
<path fill="#003a99" d="M1596.5 750.4 L-1148.3 2080.1 L-1127.1 2246.2 L1599.6 775.3 Z"/>
<path fill="#003599" d="M1598.2 763.7 L-1137 2168.8 L-1113.7 2350.9 L1601.6 791 Z"/>
<path fill="#002f99" d="M1600 778.1 L-1124.7 2265.2 L-1098.6 2468.7 L1603.9 808.7 Z"/>
<path fill="#002a99" d="M1602.1 794.4 L-1110.8 2373.5 L-1082.1 2598.5 L1606.4 828.1 Z"/>
<path fill="#002599" d="M1604.4 812.4 L-1095.5 2493.7 L-1064 2740.1 L1609.1 849.4 Z"/>
<path fill="#002099" d="M1606.9 831.9 L-1078.9 2623.5 L-1043.3 2902 L1612.2 873.7 Z"/>
<path fill="#001b99" d="M1609.7 854 L-1060 2771 L-1020.3 3081.7 L1615.6 900.6 Z"/>
<path fill="#001699" d="M1612.8 878.5 L-1039.2 2934.1 L-994 3287.6 L1619.6 931.5 Z"/>
<path fill="#019" d="M1616.4 906.3 L-1015.4 3119.8 L-964.1 3521.5 L1624.1 966.6 Z"/>
<path fill="#000c99" d="M1620.5 938.7 L-987.8 3335.8 L-932.4 3769.6 L1628.8 1003.8 Z"/>
<path fill="#000899" d="M1625.1 974.9 L-957 3576.8 L-901.6 4010.6 L1633.5 1040 Z"/>
<path fill="#000499" d="M1629.8 1011 L-926.2 3817.8 L-870.8 4251.6 L1638.1 1076.1 Z"/>
<path fill="#000199" d="M1635 1051.7 L-891.6 4088.6 L-853.3 4388.5 L1640.7 1096.6 Z"/>
</g>
<g clip-path="url(#uf1)">
<path fill="#990200" d="M2046.3 580.9 L4629.5 -2644.6 L4195.3 -2696.1 L1981.1 573.1 Z"/>
<path fill="#990600" d="M2010.1 576.6 L4388.3 -2673.2 L3954 -2724.8 L1944.9 568.9 Z"/>
<path fill="#990a00" d="M1973.9 572.3 L4147 -2701.9 L3712.8 -2753.4 L1908.7 564.6 Z"/>
<path fill="#990f00" d="M1935.7 567.8 L3892.7 -2732 L3517.4 -2776.6 L1879.4 561.1 Z"/>
<path fill="#991400" d="M1902.7 563.8 L3672.2 -2758.2 L3350.6 -2796.3 L1854.4 558.1 Z"/>
<path fill="#991900" d="M1874.4 560.5 L3484 -2780.5 L3205.2 -2813.6 L1832.6 555.5 Z"/>
<path fill="#991e00" d="M1850.1 557.6 L3322 -2799.7 L3075.4 -2829 L1813.1 553.2 Z"/>
<path fill="#992400" d="M1828.7 555.1 L3179 -2816.7 L2959.2 -2842.8 L1795.7 551.2 Z"/>
<path fill="#992900" d="M1809.5 552.8 L3050.9 -2831.9 L2857.9 -2854.8 L1780.5 549.3 Z"/>
<path fill="#992e00" d="M1792.7 550.8 L2938.9 -2845.2 L2767.4 -2865.5 L1766.9 547.7 Z"/>
<path fill="#930" d="M1777.8 549 L2840.1 -2856.9 L2684.6 -2875.4 L1754.5 546.3 Z"/>
<path fill="#993800" d="M1764.5 547.5 L2751.3 -2867.4 L2606.5 -2884.6 L1742.8 544.9 Z"/>
<path fill="#993d00" d="M1751.9 546 L2667.3 -2877.4 L2538.6 -2892.7 L1732.6 543.7 Z"/>
<path fill="#994200" d="M1740.8 544.6 L2593.4 -2886.2 L2475.5 -2900.2 L1723.1 542.5 Z"/>
<path fill="#994700" d="M1730.7 543.4 L2525.5 -2894.2 L2418.3 -2907 L1714.6 541.5 Z"/>
<path fill="#994c00" d="M1721.5 542.4 L2464.8 -2901.4 L2362.9 -2913.5 L1706.3 540.5 Z"/>
<path fill="#995100" d="M1712.7 541.3 L2405.8 -2908.4 L2314.7 -2919.2 L1699 539.7 Z"/>
<path fill="#995600" d="M1704.9 540.4 L2354 -2914.6 L2268.2 -2924.8 L1692.1 538.9 Z"/>
<path fill="#995b00" d="M1697.6 539.5 L2305.1 -2920.4 L2224.7 -2929.9 L1685.5 538.1 Z"/>
<path fill="#996100" d="M1690.7 538.7 L2259.3 -2925.8 L2184.2 -2934.7 L1679.5 537.4 Z"/>
<path fill="#960" d="M1684.3 537.9 L2216.4 -2930.9 L2146.7 -2939.2 L1673.8 536.7 Z"/>
<path fill="#996b00" d="M1678.3 537.2 L2176.5 -2935.6 L2112.1 -2943.3 L1668.6 536.1 Z"/>
<path fill="#997000" d="M1672.9 536.6 L2140.7 -2939.9 L2076.4 -2947.5 L1663.3 535.4 Z"/>
<path fill="#997600" d="M1667.4 535.9 L2103.8 -2944.3 L2044.8 -2951.3 L1658.5 534.9 Z"/>
<path fill="#997b00" d="M1662.3 535.3 L2069.8 -2948.3 L2016.2 -2954.7 L1654.3 534.4 Z"/>
<path fill="#998000" d="M1657.8 534.8 L2040 -2951.8 L1986.4 -2958.2 L1649.8 533.8 Z"/>
<path fill="#998600" d="M1653.2 534.2 L2009.1 -2955.5 L1960.8 -2961.2 L1645.9 533.4 Z"/>
<path fill="#998b00" d="M1649.2 533.8 L1982.3 -2958.7 L1934 -2964.4 L1641.9 532.9 Z"/>
<path fill="#999000" d="M1645 533.3 L1954.3 -2962 L1911.4 -2967.1 L1638.5 532.5 Z"/>
<path fill="#999600" d="M1641.4 532.8 L1930.4 -2964.8 L1887.5 -2969.9 L1635 532.1 Z"/>
<path fill="#979900" d="M1637.8 532.4 L1906.6 -2967.7 L1863.7 -2972.7 L1631.4 531.7 Z"/>
<path fill="#919900" d="M1634.2 532 L1882.8 -2970.5 L1839.9 -2975.6 L1627.8 531.2 Z"/>
<path fill="#8c9900" d="M1630.7 531.6 L1858.9 -2973.3 L1816.1 -2978.4 L1624.2 530.8 Z"/>
<path fill="#869900" d="M1627.1 531.1 L1835.1 -2976.1 L1792.2 -2981.2 L1620.7 530.4 Z"/>
<path fill="#819900" d="M1623.5 530.7 L1811.3 -2979 L1768.4 -2984.1 L1617.1 530 Z"/>
<path fill="#7c9900" d="M1619.9 530.3 L1787.5 -2981.8 L1744.6 -2986.9 L1613.5 529.5 Z"/>
<path fill="#769900" d="M1616.4 529.9 L1763.6 -2984.6 L1720.7 -2989.7 L1609.9 529.1 Z"/>
<path fill="#719900" d="M1612.8 529.5 L1739.8 -2987.4 L1696.9 -2992.5 L1606.4 528.7 Z"/>
<path fill="#6c9900" d="M1609.4 529 L1717.2 -2990.1 L1668.9 -2995.9 L1602.2 528.2 Z"/>
<path fill="#679900" d="M1605.4 528.6 L1690.4 -2993.3 L1642.1 -2999 L1598.1 527.7 Z"/>
<path fill="#619900" d="M1601.4 528.1 L1663.6 -2996.5 L1615.3 -3002.2 L1594.1 527.2 Z"/>
<path fill="#5c9900" d="M1597.3 527.6 L1636.7 -2999.7 L1588.5 -3005.4 L1590.1 526.8 Z"/>
<path fill="#579900" d="M1593.3 527.1 L1609.9 -3002.9 L1561.7 -3008.6 L1586.1 526.3 Z"/>
<path fill="#529900" d="M1589.3 526.7 L1583.1 -3006 L1534.9 -3011.8 L1582.1 525.8 Z"/>
<path fill="#4c9900" d="M1585.5 526.2 L1557.5 -3009.1 L1503.9 -3015.4 L1577.4 525.3 Z"/>
<path fill="#479900" d="M1581 525.7 L1527.7 -3012.6 L1474.1 -3019 L1572.9 524.7 Z"/>
<path fill="#429900" d="M1576.5 525.1 L1498 -3016.1 L1444.3 -3022.5 L1568.5 524.2 Z"/>
<path fill="#3c9900" d="M1572 524.6 L1468.2 -3019.7 L1414.6 -3026 L1564 523.7 Z"/>
<path fill="#379900" d="M1567.6 524.1 L1438.4 -3023.2 L1384.8 -3029.6 L1559.5 523.1 Z"/>
<path fill="#329900" d="M1563.3 523.6 L1409.8 -3026.6 L1350.8 -3033.6 L1554.4 522.5 Z"/>
<path fill="#2c9900" d="M1558.4 523 L1377 -3030.5 L1318.1 -3037.5 L1549.5 521.9 Z"/>
<path fill="#279900" d="M1553.5 522.4 L1344.3 -3034.4 L1285.3 -3041.4 L1544.6 521.4 Z"/>
<path fill="#290" d="M1548.5 521.8 L1311.5 -3038.3 L1252.5 -3045.3 L1539.7 520.8 Z"/>
<path fill="#1d9900" d="M1543.6 521.2 L1278.7 -3042.1 L1219.8 -3049.1 L1534.8 520.2 Z"/>
<path fill="#189900" d="M1538.9 520.7 L1247.2 -3045.9 L1182.8 -3053.5 L1529.2 519.5 Z"/>
<path fill="#129900" d="M1533.5 520 L1211.4 -3050.1 L1147.1 -3057.8 L1523.9 518.9 Z"/>
<path fill="#0d9900" d="M1528.2 519.4 L1175.7 -3054.4 L1111.3 -3062 L1518.5 518.3 Z"/>
<path fill="#089900" d="M1522.8 518.8 L1139.9 -3058.6 L1075.6 -3066.2 L1513.2 517.6 Z"/>
<path fill="#039900" d="M1517.6 518.2 L1105.4 -3062.7 L1035.7 -3071 L1507.2 516.9 Z"/>
</g>
<g clip-path="url(#uf2)">
<path fill="#020099" d="M1576.3 1086.3 L2006 4709.8 L2157.9 4513.3 L1599.1 1056.8 Z"/>
<path fill="#080099" d="M1589.3 1069.5 L2092.5 4597.8 L2234.5 4414.1 L1610.6 1042 Z"/>
<path fill="#0d0099" d="M1601.4 1053.9 L2172.9 4493.8 L2308.3 4318.7 L1621.7 1027.6 Z"/>
<path fill="#120099" d="M1612.9 1039 L2249.6 4394.6 L2378.4 4228.1 L1632.2 1014.1 Z"/>
<path fill="#170099" d="M1623.8 1024.9 L2322.6 4300.2 L2444.8 4142.2 L1642.2 1001.2 Z"/>
<path fill="#1c0099" d="M1634.2 1011.4 L2391.9 4210.5 L2507.5 4061 L1651.6 989 Z"/>
<path fill="#210099" d="M1644.1 998.7 L2457.6 4125.6 L2566.6 3984.6 L1660.4 977.5 Z"/>
<path fill="#260099" d="M1653.3 986.8 L2518.9 4046.3 L2624.6 3909.6 L1669.1 966.3 Z"/>
<path fill="#2b0099" d="M1662.3 975.1 L2579.1 3968.5 L2678.1 3840.3 L1677.2 955.9 Z"/>
<path fill="#300099" d="M1670.7 964.3 L2634.8 3896.3 L2730.6 3772.5 L1685 945.7 Z"/>
<path fill="#350099" d="M1678.8 953.8 L2688.8 3826.6 L2781.2 3707 L1692.6 935.9 Z"/>
<path fill="#3a0099" d="M1686.6 943.7 L2740.9 3759.2 L2830 3643.9 L1699.9 926.4 Z"/>
<path fill="#3f0099" d="M1694.2 933.8 L2791.9 3693.2 L2874.4 3586.4 L1706.6 917.8 Z"/>
<path fill="#450099" d="M1701.2 924.8 L2838.5 3632.9 L2917.7 3530.4 L1713.1 909.4 Z"/>
<path fill="#4a0099" d="M1707.9 916.1 L2883.2 3575 L2959.2 3476.8 L1719.3 901.4 Z"/>
<path fill="#4f0099" d="M1714.4 907.8 L2926.2 3519.5 L2998.8 3425.5 L1725.3 893.7 Z"/>
<path fill="#540099" d="M1720.4 899.9 L2966.5 3467.3 L3039.2 3373.3 L1731.3 885.8 Z"/>
<path fill="#590099" d="M1726.6 892 L3007.6 3414.2 L3077 3324.5 L1737 878.5 Z"/>
<path fill="#5e0099" d="M1732.5 884.3 L3046.9 3363.4 L3112.9 3277.9 L1742.4 871.5 Z"/>
<path fill="#630099" d="M1738.1 877.1 L3084.3 3315 L3147.1 3233.8 L1747.5 864.9 Z"/>
<path fill="#680099" d="M1743.3 870.3 L3119.2 3269.9 L3181.9 3188.7 L1752.7 858.2 Z"/>
<path fill="#6e0099" d="M1748.6 863.4 L3154.8 3223.8 L3214.2 3147 L1757.6 851.9 Z"/>
<path fill="#730099" d="M1753.7 856.9 L3188.5 3180.2 L3244.7 3107.6 L1762.1 846 Z"/>
<path fill="#780099" d="M1758.4 850.8 L3219.7 3139.8 L3275.8 3067.2 L1766.8 839.9 Z"/>
<path fill="#7d0099" d="M1763.2 844.6 L3251.6 3098.6 L3304.5 3030.2 L1771.1 834.4 Z"/>
<path fill="#820099" d="M1767.6 838.9 L3281 3060.6 L3333.8 2992.3 L1775.5 828.7 Z"/>
<path fill="#870099" d="M1772.1 833.1 L3311.1 3021.7 L3360.6 2957.6 L1779.5 823.5 Z"/>
<path fill="#8d0099" d="M1776.2 827.8 L3338.6 2986.1 L3388.1 2922 L1783.7 818.1 Z"/>
<path fill="#920099" d="M1780.5 822.3 L3366.8 2949.5 L3413.1 2889.7 L1787.4 813.3 Z"/>
<path fill="#909" d="M1783 819 L3383.7 2927.7 L3469.6 2816.7 L1795.9 802.3 Z"/>
<path fill="#990091" d="M1791.5 808 L3440.2 2854.6 L3486.5 2794.8 L1798.4 799.1 Z"/>
<path fill="#99008c" d="M1795.2 803.2 L3465.2 2822.4 L3514.7 2758.3 L1802.6 793.6 Z"/>
<path fill="#990087" d="M1799.3 797.9 L3492.7 2786.8 L3542.2 2722.7 L1806.8 788.2 Z"/>
<path fill="#990082" d="M1803.4 792.7 L3519.5 2752.1 L3572.3 2683.8 L1811.3 782.4 Z"/>
<path fill="#99007d" d="M1807.6 787.1 L3548.1 2715.1 L3604.2 2642.5 L1816.1 776.2 Z"/>
<path fill="#907" d="M1812.3 781.1 L3579.3 2674.8 L3635.4 2602.1 L1820.7 770.2 Z"/>
<path fill="#990072" d="M1816.9 775.1 L3609.7 2635.4 L3669.2 2558.5 L1825.8 763.6 Z"/>
<path fill="#99006d" d="M1821.7 768.9 L3642 2593.6 L3704.8 2512.4 L1831.2 756.7 Z"/>
<path fill="#990068" d="M1827 762.1 L3676.9 2548.5 L3739.6 2467.4 L1836.4 749.9 Z"/>
<path fill="#990063" d="M1832.1 755.5 L3711 2504.4 L3777 2419 L1842 742.7 Z"/>
<path fill="#99005e" d="M1837.5 748.5 L3747 2457.9 L3816.3 2368.2 L1847.9 735.1 Z"/>
<path fill="#990059" d="M1843.1 741.2 L3784.8 2409 L3857.4 2315 L1854 727.1 Z"/>
<path fill="#990054" d="M1849.1 733.5 L3824.4 2357.7 L3900.3 2259.5 L1860.5 718.8 Z"/>
<path fill="#99004f" d="M1855.3 725.5 L3865.8 2304.1 L3945.1 2201.6 L1867.2 710.1 Z"/>
<path fill="#99004a" d="M1861.8 717.1 L3909.1 2248.1 L3991.7 2141.3 L1874.2 701 Z"/>
<path fill="#904" d="M1868.5 708.4 L3953.5 2190.7 L4042.7 2075.4 L1881.8 691.1 Z"/>
<path fill="#99003f" d="M1875.8 699 L4002.3 2127.6 L4094.8 2008 L1889.7 681 Z"/>
<path fill="#99003a" d="M1883.4 689.2 L4053 2062.1 L4148.7 1938.2 L1897.7 670.6 Z"/>
<path fill="#990035" d="M1891.1 679.1 L4104.7 1995.2 L4207.1 1862.7 L1906.5 659.3 Z"/>
<path fill="#990030" d="M1899.5 668.4 L4160.1 1923.5 L4269.1 1782.5 L1915.8 647.2 Z"/>
<path fill="#99002b" d="M1908.3 656.9 L4219.2 1847.1 L4334.8 1697.6 L1925.6 634.5 Z"/>
<path fill="#990026" d="M1917.7 644.7 L4281.9 1765.9 L4404.1 1607.9 L1936.1 621 Z"/>
<path fill="#990021" d="M1927.7 631.8 L4348.3 1680 L4477.1 1513.5 L1947 606.9 Z"/>
<path fill="#99001c" d="M1938.2 618.3 L4418.4 1589.4 L4553.8 1414.3 L1958.5 592 Z"/>
<path fill="#990017" d="M1949.1 604.1 L4491.4 1494.9 L4636.7 1307 L1970.9 575.9 Z"/>
<path fill="#901" d="M1960.9 588.9 L4569.9 1393.4 L4725.1 1192.6 L1984.2 558.7 Z"/>
<path fill="#99000c" d="M1973.5 572.5 L4654 1284.7 L4819.1 1071.1 L1998.3 540.5 Z"/>
<path fill="#990007" d="M1986.8 555.3 L4742.8 1169.9 L4921.1 939.2 L2013.6 520.7 Z"/>
<path fill="#990002" d="M2001.6 536.2 L4841.1 1042.7 L5022.7 807.8 L2028.8 501 Z"/>
</g>
</g>
<g clip-path="url(#utr)">
<circle cx="1630.3" cy="610.6" r="85" fill="url(#uwr)"/>
<path fill="url(#u0)" d="M1630.3 610.6 L2129 515.5 L2064.7 507.9 Z"/>
<path fill="url(#u1)" d="M1630.3 610.6 L2082.4 510 L2039.4 504.9 Z"/>
<path fill="url(#u2)" d="M1630.3 610.6 L2057.1 507 L2014.1 501.9 Z"/>
<path fill="url(#u3)" d="M1630.3 610.6 L2031.8 504 L1988.8 498.9 Z"/>
<path fill="url(#u4)" d="M1630.3 610.6 L2006.5 501 L1963.5 495.9 Z"/>
<path fill="url(#u5)" d="M1630.3 610.6 L1980.7 497.9 L1940.3 493.1 Z"/>
<path fill="url(#u6)" d="M1630.3 610.6 L1956.2 495 L1919.3 490.6 Z"/>
<path fill="url(#u7)" d="M1630.3 610.6 L1934 492.4 L1899.7 488.3 Z"/>
<path fill="url(#u8)" d="M1630.3 610.6 L1913.3 489.9 L1881.7 486.2 Z"/>
<path fill="url(#u9)" d="M1630.3 610.6 L1894.2 487.6 L1865.2 484.2 Z"/>
<path fill="url(#u10)" d="M1630.3 610.6 L1876.8 485.6 L1849.6 482.4 Z"/>
<path fill="url(#u11)" d="M1630.3 610.6 L1860.4 483.6 L1835 480.6 Z"/>
<path fill="url(#u12)" d="M1630.3 610.6 L1845.1 481.8 L1821.4 479 Z"/>
<path fill="url(#u13)" d="M1630.3 610.6 L1830.8 480.1 L1808.8 477.5 Z"/>
<path fill="url(#u14)" d="M1630.3 610.6 L1817.5 478.6 L1797.3 476.2 Z"/>
<path fill="url(#u15)" d="M1630.3 610.6 L1805.4 477.1 L1786.1 474.8 Z"/>
<path fill="url(#u16)" d="M1630.3 610.6 L1793.7 475.7 L1776.2 473.6 Z"/>
<path fill="url(#u17)" d="M1630.3 610.6 L1783.2 474.5 L1766.5 472.5 Z"/>
<path fill="url(#u18)" d="M1630.3 610.6 L1773.2 473.3 L1757.4 471.4 Z"/>
<path fill="url(#u19)" d="M1630.3 610.6 L1763.8 472.2 L1748.8 470.4 Z"/>
<path fill="url(#u20)" d="M1630.3 610.6 L1754.8 471.1 L1740.8 469.4 Z"/>
<path fill="url(#u21)" d="M1630.3 610.6 L1746.4 470.1 L1733.2 468.5 Z"/>
<path fill="url(#u22)" d="M1630.3 610.6 L1738.4 469.2 L1726.1 467.7 Z"/>
<path fill="url(#u23)" d="M1630.3 610.6 L1731 468.3 L1719.6 466.9 Z"/>
<path fill="url(#u24)" d="M1630.3 610.6 L1724.3 467.5 L1712.9 466.1 Z"/>
<path fill="url(#u25)" d="M1630.3 610.6 L1717.4 466.7 L1706.9 465.4 Z"/>
<path fill="url(#u26)" d="M1630.3 610.6 L1711.2 465.9 L1700.7 464.7 Z"/>
<path fill="url(#u27)" d="M1630.3 610.6 L1704.9 465.2 L1695.2 464 Z"/>
<path fill="url(#u28)" d="M1630.3 610.6 L1699 464.5 L1690.2 463.4 Z"/>
<path fill="url(#u29)" d="M1630.3 610.6 L1693.8 463.9 L1685.1 462.8 Z"/>
<path fill="url(#u30)" d="M1630.3 610.6 L1688.7 463.3 L1679.9 462.2 Z"/>
<path fill="url(#u31)" d="M1630.3 610.6 L1683.3 462.6 L1675.4 461.7 Z"/>
<path fill="url(#u32)" d="M1630.3 610.6 L1678.7 462.1 L1670.8 461.1 Z"/>
<path fill="url(#u33)" d="M1630.3 610.6 L1673.8 461.5 L1666.8 460.7 Z"/>
<path fill="url(#u34)" d="M1630.3 610.6 L1669.7 461 L1662.7 460.2 Z"/>
<path fill="url(#u35)" d="M1630.3 610.6 L1665.6 460.5 L1658.6 459.7 Z"/>
<path fill="url(#u36)" d="M1630.3 610.6 L1661.3 460 L1655.1 459.3 Z"/>
<path fill="url(#u37)" d="M1630.3 610.6 L1657.7 459.6 L1651.5 458.9 Z"/>
<path fill="url(#u38)" d="M1630.3 610.6 L1654 459.2 L1647.9 458.4 Z"/>
<path fill="url(#u39)" d="M1630.3 610.6 L1650.4 458.7 L1644.3 458 Z"/>
<path fill="url(#u40)" d="M1630.3 610.6 L1646.6 458.3 L1641.4 457.7 Z"/>
<path fill="url(#u41)" d="M1630.3 610.6 L1643.9 458 L1636.9 457.1 Z"/>
<path fill="url(#u42)" d="M1630.3 610.6 L1639.4 457.4 L1634.1 456.8 Z"/>
<path fill="url(#u43)" d="M1630.3 610.6 L1636.3 457.1 L1631 456.4 Z"/>
<path fill="url(#u44)" d="M1630.3 610.6 L1633.2 456.7 L1628 456.1 Z"/>
<path fill="url(#u45)" d="M1630.3 610.6 L1630.1 456.3 L1624.9 455.7 Z"/>
<path fill="url(#u46)" d="M1630.3 610.6 L1627 456 L1621.8 455.3 Z"/>
<path fill="url(#u47)" d="M1630.3 610.6 L1623.9 455.6 L1618.7 455 Z"/>
<path fill="url(#u48)" d="M1630.3 610.6 L1621 455.2 L1614.9 454.5 Z"/>
<path fill="url(#u49)" d="M1630.3 610.6 L1617.4 454.8 L1611.3 454.1 Z"/>
<path fill="url(#u50)" d="M1630.3 610.6 L1613.8 454.4 L1607.6 453.7 Z"/>
<path fill="url(#u51)" d="M1630.3 610.6 L1610.2 454 L1604 453.2 Z"/>
<path fill="url(#u52)" d="M1630.3 610.6 L1606.6 453.5 L1600.4 452.8 Z"/>
<path fill="url(#u53)" d="M1630.3 610.6 L1602.9 453.1 L1596.8 452.4 Z"/>
<path fill="url(#u54)" d="M1630.3 610.6 L1599.3 452.7 L1593.2 451.9 Z"/>
<path fill="url(#u55)" d="M1630.3 610.6 L1595.7 452.2 L1589.6 451.5 Z"/>
<path fill="url(#u56)" d="M1630.3 610.6 L1592.1 451.8 L1586 451.1 Z"/>
<path fill="url(#u57)" d="M1630.3 610.6 L1588.5 451.4 L1582.3 450.7 Z"/>
<path fill="url(#u58)" d="M1630.3 610.6 L1584.9 451 L1578.7 450.2 Z"/>
<path fill="url(#u59)" d="M1630.3 610.6 L1581.3 450.5 L1575.1 449.8 Z"/>
<path fill="url(#u60)" d="M1630.3 610.6 L1577.6 450.1 L1571.5 449.4 Z"/>
<path fill="url(#u61)" d="M1630.3 610.6 L1574 449.7 L1567.9 448.9 Z"/>
<path fill="url(#u62)" d="M1630.3 610.6 L1570.4 449.2 L1564.3 448.5 Z"/>
<path fill="url(#u63)" d="M1630.3 610.6 L1567 448.8 L1560 448 Z"/>
<path fill="url(#u64)" d="M1630.3 610.6 L1562.9 448.3 L1555.8 447.5 Z"/>
<path fill="url(#u65)" d="M1630.3 610.6 L1558.7 447.8 L1551.7 447 Z"/>
<path fill="url(#u66)" d="M1630.3 610.6 L1554.6 447.4 L1547.6 446.5 Z"/>
<path fill="url(#u67)" d="M1630.3 610.6 L1550.5 446.9 L1543.4 446 Z"/>
<path fill="url(#u68)" d="M1630.3 610.6 L1546.3 446.4 L1539.3 445.5 Z"/>
<path fill="url(#u69)" d="M1630.3 610.6 L1542.2 445.9 L1535.2 445.1 Z"/>
<path fill="url(#u70)" d="M1630.3 610.6 L1538.1 445.4 L1531 444.6 Z"/>
<path fill="url(#u71)" d="M1630.3 610.6 L1533.9 444.9 L1526.9 444.1 Z"/>
<path fill="url(#u72)" d="M1630.3 610.6 L1529.8 444.4 L1522.8 443.6 Z"/>
<path fill="url(#u73)" d="M1630.3 610.6 L1525.7 443.9 L1518.7 443.1 Z"/>
<path fill="url(#u74)" d="M1630.3 610.6 L1521.5 443.4 L1514.5 442.6 Z"/>
<path fill="url(#u75)" d="M1630.3 610.6 L1517.4 442.9 L1510.4 442.1 Z"/>
<path fill="url(#u76)" d="M1630.3 610.6 L1513.3 442.5 L1506.3 441.6 Z"/>
<path fill="url(#u77)" d="M1630.3 610.6 L1509.2 442 L1502.1 441.1 Z"/>
<path fill="url(#u78)" d="M1630.3 610.6 L1505 441.5 L1498 440.6 Z"/>
<path fill="url(#u79)" d="M1630.3 610.6 L1500.9 441 L1465.1 436.7 Z"/>
<path fill="url(#u80)" d="M1630.3 610.6 L1490.6 403.8 L1496.1 446.6 Z"/>
<path fill="url(#u81)" d="M1630.3 610.6 L1495.7 443.2 L1496.8 451.9 Z"/>
<path fill="url(#u82)" d="M1630.3 610.6 L1496.3 448.3 L1497.5 457.1 Z"/>
<path fill="url(#u83)" d="M1630.3 610.6 L1497 453.5 L1498.1 462.2 Z"/>
<path fill="url(#u84)" d="M1630.3 610.6 L1497.7 458.6 L1498.8 467.4 Z"/>
<path fill="url(#u85)" d="M1630.3 610.6 L1498.3 463.6 L1499.5 473.3 Z"/>
<path fill="url(#u86)" d="M1630.3 610.6 L1499 469.3 L1500.3 478.9 Z"/>
<path fill="url(#u87)" d="M1630.3 610.6 L1499.7 475 L1501 484.6 Z"/>
<path fill="url(#u88)" d="M1630.3 610.6 L1500.5 480.8 L1501.6 489.6 Z"/>
<path fill="url(#u89)" d="M1630.3 610.6 L1501.2 486 L1502.3 494.7 Z"/>
<path fill="url(#u90)" d="M1630.3 610.6 L1501.8 491.1 L1502.9 499.9 Z"/>
<path fill="url(#u91)" d="M1630.3 610.6 L1502.5 496.3 L1503.6 505.1 Z"/>
<path fill="url(#u92)" d="M1630.3 610.6 L1503.1 501.4 L1504.3 510.2 Z"/>
<path fill="url(#u93)" d="M1630.3 610.6 L1503.8 506.6 L1504.9 515.4 Z"/>
<path fill="url(#u94)" d="M1630.3 610.6 L1504.5 511.8 L1505.6 520.5 Z"/>
<path fill="url(#u95)" d="M1630.3 610.6 L1505.1 516.9 L1506.2 525.7 Z"/>
<path fill="url(#u96)" d="M1630.3 610.6 L1505.8 522.1 L1506.9 530.8 Z"/>
<path fill="url(#u97)" d="M1630.3 610.6 L1506.4 527.2 L1507.5 536 Z"/>
<path fill="url(#u98)" d="M1630.3 610.6 L1507.1 532.4 L1508.2 541.2 Z"/>
<path fill="url(#u99)" d="M1630.3 610.6 L1507.7 537.5 L1508.9 546.3 Z"/>
<path fill="url(#u100)" d="M1630.3 610.6 L1508.4 542.7 L1509.5 551.5 Z"/>
<path fill="url(#u101)" d="M1630.3 610.6 L1509.1 548 L1510.1 555.9 Z"/>
<path fill="url(#u102)" d="M1630.3 610.6 L1509.7 552.7 L1510.7 560.6 Z"/>
<path fill="url(#u103)" d="M1630.3 610.6 L1510.3 557.3 L1511.3 565.2 Z"/>
<path fill="url(#u104)" d="M1630.3 610.6 L1510.9 562 L1511.9 569.9 Z"/>
<path fill="url(#u105)" d="M1630.3 610.6 L1511.5 566.6 L1512.5 574.5 Z"/>
<path fill="url(#u106)" d="M1630.3 610.6 L1512.1 571.3 L1513.1 579.1 Z"/>
<path fill="url(#u107)" d="M1630.3 610.6 L1512.6 575.9 L1513.7 583.8 Z"/>
<path fill="url(#u108)" d="M1630.3 610.6 L1513.2 580.5 L1514.2 588.4 Z"/>
<path fill="url(#u109)" d="M1630.3 610.6 L1513.8 585.2 L1514.8 593.1 Z"/>
<path fill="url(#u110)" d="M1630.3 610.6 L1514.4 589.8 L1515.4 597.7 Z"/>
<path fill="url(#u111)" d="M1630.3 610.6 L1515 594.6 L1515.9 601.7 Z"/>
<path fill="url(#u112)" d="M1630.3 610.6 L1515.6 598.8 L1516.5 605.8 Z"/>
<path fill="url(#u113)" d="M1630.3 610.6 L1516.1 602.9 L1517 609.9 Z"/>
<path fill="url(#u114)" d="M1630.3 610.6 L1516.6 607 L1517.5 614 Z"/>
<path fill="url(#u115)" d="M1630.3 610.6 L1517.2 611.1 L1518 618.2 Z"/>
<path fill="url(#u116)" d="M1630.3 610.6 L1517.7 615.3 L1518.6 622.3 Z"/>
<path fill="url(#u117)" d="M1630.3 610.6 L1518.2 619.4 L1519.1 626.4 Z"/>
<path fill="url(#u118)" d="M1630.3 610.6 L1518.7 623.5 L1519.6 630.5 Z"/>
<path fill="url(#u119)" d="M1630.3 610.6 L1519.3 627.6 L1520.2 634.7 Z"/>
<path fill="url(#u120)" d="M1630.3 610.6 L1519.8 631.6 L1520.8 639.5 Z"/>
<path fill="url(#u121)" d="M1630.3 610.6 L1520.4 636.4 L1521.3 643.4 Z"/>
<path fill="url(#u122)" d="M1630.3 610.6 L1520.9 640.5 L1521.8 647.6 Z"/>
<path fill="url(#u123)" d="M1630.3 610.6 L1521.4 644.5 L1522.4 652.4 Z"/>
<path fill="url(#u124)" d="M1630.3 610.6 L1522 649.1 L1523 657 Z"/>
<path fill="url(#u125)" d="M1630.3 610.6 L1522.6 653.8 L1523.6 661.7 Z"/>
<path fill="url(#u126)" d="M1630.3 610.6 L1523.2 658.2 L1524.3 667 Z"/>
<path fill="url(#u127)" d="M1630.3 610.6 L1523.8 663.4 L1524.9 672.2 Z"/>
<path fill="url(#u128)" d="M1630.3 610.6 L1524.5 668.4 L1525.7 678 Z"/>
<path fill="url(#u129)" d="M1630.3 610.6 L1525.2 674 L1526.4 683.7 Z"/>
<path fill="url(#u130)" d="M1630.3 610.6 L1525.9 679.5 L1527.2 690.1 Z"/>
<path fill="url(#u131)" d="M1630.3 610.6 L1526.7 685.7 L1528 696.2 Z"/>
<path fill="url(#u132)" d="M1630.3 610.6 L1527.5 691.7 L1528.9 703.1 Z"/>
<path fill="url(#u133)" d="M1630.3 610.6 L1528.3 698.4 L1529.8 709.8 Z"/>
<path fill="url(#u134)" d="M1630.3 610.6 L1529.1 705 L1530.7 717.2 Z"/>
<path fill="url(#u135)" d="M1630.3 610.6 L1530 712 L1531.7 725.2 Z"/>
<path fill="url(#u136)" d="M1630.3 610.6 L1531 719.7 L1532.7 732.9 Z"/>
<path fill="url(#u137)" d="M1630.3 610.6 L1532 727.3 L1533.8 741.3 Z"/>
<path fill="url(#u138)" d="M1630.3 610.6 L1533 735.4 L1534.9 750.3 Z"/>
<path fill="url(#u139)" d="M1630.3 610.6 L1534.1 743.9 L1536.1 759.7 Z"/>
<path fill="url(#u140)" d="M1630.3 610.6 L1535.3 753.1 L1537.4 769.7 Z"/>
<path fill="url(#u141)" d="M1630.3 610.6 L1536.5 762.7 L1538.8 780.2 Z"/>
<path fill="url(#u142)" d="M1630.3 610.6 L1537.8 772.8 L1540.2 791.2 Z"/>
<path fill="url(#u143)" d="M1630.3 610.6 L1539.2 783.5 L1541.6 802.7 Z"/>
<path fill="url(#u144)" d="M1630.3 610.6 L1540.6 794.4 L1543.3 815.5 Z"/>
<path fill="url(#u145)" d="M1630.3 610.6 L1542.1 806.6 L1544.9 828.6 Z"/>
<path fill="url(#u146)" d="M1630.3 610.6 L1543.7 819.2 L1546.8 842.8 Z"/>
<path fill="url(#u147)" d="M1630.3 610.6 L1545.5 832.9 L1548.6 857.5 Z"/>
<path fill="url(#u148)" d="M1630.3 610.6 L1547.3 847 L1550.7 873.3 Z"/>
<path fill="url(#u149)" d="M1630.3 610.6 L1549.2 862.1 L1552.8 890.2 Z"/>
<path fill="url(#u150)" d="M1630.3 610.6 L1551.3 878.1 L1555.2 908.8 Z"/>
<path fill="url(#u151)" d="M1630.3 610.6 L1553.5 895.8 L1557.7 928.2 Z"/>
<path fill="url(#u152)" d="M1630.3 610.6 L1555.9 914.3 L1560.4 949.4 Z"/>
<path fill="url(#u153)" d="M1630.3 610.6 L1558.5 934.4 L1563.3 972.1 Z"/>
<path fill="url(#u154)" d="M1630.3 610.6 L1561.2 956 L1566.4 996.4 Z"/>
<path fill="url(#u155)" d="M1630.3 610.6 L1564.2 979.2 L1569.7 1022.2 Z"/>
<path fill="url(#u156)" d="M1630.3 610.6 L1567.4 1004.5 L1572.9 1047.4 Z"/>
<path fill="url(#u157)" d="M1630.3 610.6 L1570.6 1029.8 L1576.1 1072.7 Z"/>
<path fill="url(#u158)" d="M1630.3 610.6 L1573.9 1055 L1579.4 1098 Z"/>
<path fill="url(#u159)" d="M1630.3 610.6 L1577.1 1080.3 L1582.6 1123.3 Z"/>
<path fill="url(#u160)" d="M1630.3 610.6 L1580.3 1105.6 L1585.8 1148.5 Z"/>
<path fill="url(#u161)" d="M1630.3 610.6 L1583.6 1130.8 L1589.1 1173.8 Z"/>
<path fill="url(#u162)" d="M1630.3 610.6 L1587.6 1162.6 L1593.5 1208.2 Z"/>
<path fill="url(#u163)" d="M1630.3 610.6 L1563.3 1204.6 L1599.1 1158.3 Z"/>
<path fill="url(#u164)" d="M1630.3 610.6 L1593.5 1165.5 L1607.6 1147.4 Z"/>
<path fill="url(#u165)" d="M1630.3 610.6 L1601.8 1154.8 L1615.8 1136.7 Z"/>
<path fill="url(#u166)" d="M1630.3 610.6 L1610.1 1144.1 L1624.1 1126 Z"/>
<path fill="url(#u167)" d="M1630.3 610.6 L1618.3 1133.4 L1632.4 1115.3 Z"/>
<path fill="url(#u168)" d="M1630.3 610.6 L1626.6 1122.8 L1640.6 1104.6 Z"/>
<path fill="url(#u169)" d="M1630.3 610.6 L1635 1111.9 L1648.5 1094.4 Z"/>
<path fill="url(#u170)" d="M1630.3 610.6 L1642.9 1101.6 L1656.4 1084.2 Z"/>
<path fill="url(#u171)" d="M1630.3 610.6 L1651 1091.2 L1664 1074.4 Z"/>
<path fill="url(#u172)" d="M1630.3 610.6 L1658.6 1081.3 L1671.6 1064.6 Z"/>
<path fill="url(#u173)" d="M1630.3 610.6 L1666.4 1071.3 L1678.8 1055.2 Z"/>
<path fill="url(#u174)" d="M1630.3 610.6 L1673.8 1061.7 L1685.7 1046.3 Z"/>
<path fill="url(#u175)" d="M1630.3 610.6 L1680.8 1052.7 L1692.7 1037.3 Z"/>
<path fill="url(#u176)" d="M1630.3 610.6 L1687.9 1043.5 L1699.2 1028.8 Z"/>
<path fill="url(#u177)" d="M1630.3 610.6 L1694.6 1034.8 L1705.9 1020.2 Z"/>
<path fill="url(#u178)" d="M1630.3 610.6 L1701.4 1026.1 L1712.2 1012.1 Z"/>
<path fill="url(#u179)" d="M1630.3 610.6 L1707.7 1017.8 L1718.5 1003.8 Z"/>
<path fill="url(#u180)" d="M1630.3 610.6 L1714.2 1009.5 L1724.5 996.2 Z"/>
<path fill="url(#u181)" d="M1630.3 610.6 L1720.2 1001.6 L1730.5 988.4 Z"/>
<path fill="url(#u182)" d="M1630.3 610.6 L1726.4 993.7 L1736.1 981.1 Z"/>
<path fill="url(#u183)" d="M1630.3 610.6 L1732.1 986.3 L1741.8 973.7 Z"/>
<path fill="url(#u184)" d="M1630.3 610.6 L1737.9 978.7 L1747.1 966.9 Z"/>
<path fill="url(#u185)" d="M1630.3 610.6 L1743.3 971.7 L1752.5 959.9 Z"/>
<path fill="url(#u186)" d="M1630.3 610.6 L1748.7 964.8 L1757.9 952.9 Z"/>
<path fill="url(#u187)" d="M1630.3 610.6 L1754.3 957.6 L1762.9 946.4 Z"/>
<path fill="url(#u188)" d="M1630.3 610.6 L1759.4 951 L1768 939.8 Z"/>
<path fill="url(#u189)" d="M1630.3 610.6 L1764.6 944.3 L1772.7 933.8 Z"/>
<path fill="url(#u190)" d="M1630.3 610.6 L1769.3 938.1 L1777.4 927.7 Z"/>
<path fill="url(#u191)" d="M1630.3 610.6 L1774.1 932 L1782.2 921.5 Z"/>
<path fill="url(#u192)" d="M1630.3 610.6 L1779 925.7 L1786.5 915.9 Z"/>
<path fill="url(#u193)" d="M1630.3 610.6 L1783.4 919.9 L1791 910.1 Z"/>
<path fill="url(#u194)" d="M1630.3 610.6 L1787.9 914.1 L1795.4 904.4 Z"/>
<path fill="url(#u195)" d="M1630.3 610.6 L1792.4 908.2 L1799.5 899.2 Z"/>
<path fill="url(#u196)" d="M1630.3 610.6 L1796.6 902.9 L1803.6 893.8 Z"/>
<path fill="url(#u197)" d="M1630.3 610.6 L1800.7 897.5 L1807.7 888.5 Z"/>
<path fill="url(#u198)" d="M1630.3 610.6 L1805 892.1 L1811.4 883.7 Z"/>
<path fill="url(#u199)" d="M1630.3 610.6 L1808.8 887.1 L1815.3 878.7 Z"/>
<path fill="url(#u200)" d="M1630.3 610.6 L1812.6 882.2 L1819.1 873.8 Z"/>
<path fill="url(#u201)" d="M1630.3 610.6 L1816.4 877.2 L1822.9 868.9 Z"/>
<path fill="url(#u202)" d="M1630.3 610.6 L1820.3 872.2 L1826.3 864.5 Z"/>
<path fill="url(#u203)" d="M1630.3 610.6 L1823.8 867.6 L1829.8 860 Z"/>
<path fill="url(#u204)" d="M1630.3 610.6 L1827.2 863.3 L1833.7 854.9 Z"/>
<path fill="url(#u205)" d="M1630.3 610.6 L1831.1 858.2 L1837.1 850.5 Z"/>
<path fill="url(#u206)" d="M1630.3 610.6 L1834.5 853.8 L1841 845.4 Z"/>
<path fill="url(#u207)" d="M1630.3 610.6 L1838.3 848.9 L1844.8 840.5 Z"/>
<path fill="url(#u208)" d="M1630.3 610.6 L1842.2 843.9 L1848.6 835.5 Z"/>
<path fill="url(#u209)" d="M1630.3 610.6 L1845.9 839.1 L1852.9 830.1 Z"/>
<path fill="url(#u210)" d="M1630.3 610.6 L1850 833.8 L1857 824.7 Z"/>
<path fill="url(#u211)" d="M1630.3 610.6 L1854.1 828.4 L1861.2 819.4 Z"/>
<path fill="url(#u212)" d="M1630.3 610.6 L1858.2 823.2 L1865.7 813.5 Z"/>
<path fill="url(#u213)" d="M1630.3 610.6 L1862.6 817.5 L1870.2 807.7 Z"/>
<path fill="url(#u214)" d="M1630.3 610.6 L1867.1 811.7 L1874.6 801.9 Z"/>
<path fill="url(#u215)" d="M1630.3 610.6 L1871.4 806.1 L1879.5 795.6 Z"/>
<path fill="url(#u216)" d="M1630.3 610.6 L1876.2 799.9 L1884.3 789.5 Z"/>
<path fill="url(#u217)" d="M1630.3 610.6 L1880.8 793.9 L1889.5 782.7 Z"/>
<path fill="url(#u218)" d="M1630.3 610.6 L1885.9 787.3 L1894.6 776.1 Z"/>
<path fill="url(#u219)" d="M1630.3 610.6 L1890.9 780.9 L1900.1 769 Z"/>
<path fill="url(#u220)" d="M1630.3 610.6 L1896.3 773.9 L1905.5 762 Z"/>
<path fill="url(#u221)" d="M1630.3 610.6 L1901.6 767.1 L1911.3 754.5 Z"/>
<path fill="url(#u222)" d="M1630.3 610.6 L1907.3 759.7 L1917 747.1 Z"/>
<path fill="url(#u223)" d="M1630.3 610.6 L1912.9 752.4 L1923.2 739.1 Z"/>
<path fill="url(#u224)" d="M1630.3 610.6 L1919 744.6 L1929.2 731.3 Z"/>
<path fill="url(#u225)" d="M1630.3 610.6 L1924.9 736.9 L1935.7 722.9 Z"/>
<path fill="url(#u226)" d="M1630.3 610.6 L1931.1 728.8 L1942.5 714.1 Z"/>
<path fill="url(#u227)" d="M1630.3 610.6 L1937.8 720.2 L1949.2 705.5 Z"/>
<path fill="url(#u228)" d="M1630.3 610.6 L1944.4 711.7 L1956.3 696.3 Z"/>
<path fill="url(#u229)" d="M1630.3 610.6 L1951.3 702.8 L1963.7 686.7 Z"/>
<path fill="url(#u230)" d="M1630.3 610.6 L1958.6 693.3 L1971 677.3 Z"/>
<path fill="url(#u231)" d="M1630.3 610.6 L1965.8 684 L1978.8 667.2 Z"/>
<path fill="url(#u232)" d="M1630.3 610.6 L1973.3 674.3 L1986.8 656.8 Z"/>
<path fill="url(#u233)" d="M1630.3 610.6 L1981.2 664.2 L1995.2 646 Z"/>
<path fill="url(#u234)" d="M1630.3 610.6 L1989.3 653.6 L2003.9 634.7 Z"/>
<path fill="url(#u235)" d="M1630.3 610.6 L1997.9 642.5 L2012.5 623.6 Z"/>
<path fill="url(#u236)" d="M1630.3 610.6 L2006.4 631.5 L2021.5 612 Z"/>
<path fill="url(#u237)" d="M1630.3 610.6 L2015.2 620.2 L2030.8 599.9 Z"/>
<path fill="url(#u238)" d="M1630.3 610.6 L2024.3 608.4 L2040.5 587.4 Z"/>
<path fill="url(#u239)" d="M1630.3 610.6 L2033.7 596.2 L2050.5 574.5 Z"/>
<path fill="url(#u240)" d="M1630.3 610.6 L2043.6 583.4 L2060.3 561.8 Z"/>
<path fill="url(#u241)" d="M1630.3 610.6 L2053.3 570.8 L2070.6 548.5 Z"/>
<path fill="url(#u242)" d="M1630.3 610.6 L2063.5 557.7 L2080.8 535.3 Z"/>
<path fill="url(#u243)" d="M1630.3 610.6 L2073.7 544.5 L2091 522.1 Z"/>
<path fill="url(#u244)" d="M1630.3 610.6 L2083.9 531.2 L2100.7 509.5 Z"/>
<path fill="url(#u245)" d="M1630.3 610.6 L2096.7 514.7 L2124.3 478.9 Z"/>
</g>
<rect x="1280.8" y="294.3" width="1153.7" height="1129.2" fill="none" stroke="#a0a0a0" stroke-width="3"/>
<text x="1722.4" y="281.9" font-size="34.4" fill="#dcdcdc" textLength="191.5" lengthAdjust="spacingAndGlyphs">CIE 1976 u'v'</text>
<rect x="1266.3" y="1422" width="13" height="3" fill="#dadada"/>
<text x="1265.3" y="1434.3" font-size="33.5" fill="#dadada" text-anchor="end">0</text>
<rect x="1266.3" y="1338.3" width="13" height="3" fill="#dadada"/>
<text x="1265.3" y="1350.6" font-size="33.5" fill="#dadada" text-anchor="end">0.05</text>
<rect x="1266.3" y="1251.4" width="13" height="3" fill="#dadada"/>
<text x="1265.3" y="1263.7" font-size="33.5" fill="#dadada" text-anchor="end">0.1</text>
<rect x="1266.3" y="1164.5" width="13" height="3" fill="#dadada"/>
<text x="1265.3" y="1176.8" font-size="33.5" fill="#dadada" text-anchor="end">0.15</text>
<rect x="1266.3" y="1077.6" width="13" height="3" fill="#dadada"/>
<text x="1265.3" y="1089.9" font-size="33.5" fill="#dadada" text-anchor="end">0.2</text>
<rect x="1266.3" y="990.7" width="13" height="3" fill="#dadada"/>
<text x="1265.3" y="1003" font-size="33.5" fill="#dadada" text-anchor="end">0.25</text>
<rect x="1266.3" y="903.8" width="13" height="3" fill="#dadada"/>
<text x="1265.3" y="916.1" font-size="33.5" fill="#dadada" text-anchor="end">0.3</text>
<rect x="1266.3" y="816.9" width="13" height="3" fill="#dadada"/>
<text x="1265.3" y="829.2" font-size="33.5" fill="#dadada" text-anchor="end">0.35</text>
<rect x="1266.3" y="730" width="13" height="3" fill="#dadada"/>
<text x="1265.3" y="742.3" font-size="33.5" fill="#dadada" text-anchor="end">0.4</text>
<rect x="1266.3" y="643.1" width="13" height="3" fill="#dadada"/>
<text x="1265.3" y="655.4" font-size="33.5" fill="#dadada" text-anchor="end">0.45</text>
<rect x="1266.3" y="556.2" width="13" height="3" fill="#dadada"/>
<text x="1265.3" y="568.5" font-size="33.5" fill="#dadada" text-anchor="end">0.5</text>
<rect x="1266.3" y="469.3" width="13" height="3" fill="#dadada"/>
<text x="1265.3" y="481.6" font-size="33.5" fill="#dadada" text-anchor="end">0.55</text>
<rect x="1266.3" y="382.4" width="13" height="3" fill="#dadada"/>
<text x="1265.3" y="394.7" font-size="33.5" fill="#dadada" text-anchor="end">0.6</text>
<rect x="1266.3" y="295.5" width="13" height="3" fill="#dadada"/>
<text x="1265.3" y="307.8" font-size="33.5" fill="#dadada" text-anchor="end">0.65</text>
<rect x="1279.3" y="1425" width="3" height="12.5" fill="#dadada"/>
<text x="1280.8" y="1472.7" font-size="33.5" fill="#dadada" text-anchor="middle">0</text>
<rect x="1453.5" y="1425" width="3" height="12.5" fill="#dadada"/>
<text x="1455" y="1472.7" font-size="33.5" fill="#dadada" text-anchor="middle">0.1</text>
<rect x="1631.6" y="1425" width="3" height="12.5" fill="#dadada"/>
<text x="1633.1" y="1472.7" font-size="33.5" fill="#dadada" text-anchor="middle">0.2</text>
<rect x="1809.8" y="1425" width="3" height="12.5" fill="#dadada"/>
<text x="1811.3" y="1472.7" font-size="33.5" fill="#dadada" text-anchor="middle">0.3</text>
<rect x="1988" y="1425" width="3" height="12.5" fill="#dadada"/>
<text x="1989.5" y="1472.7" font-size="33.5" fill="#dadada" text-anchor="middle">0.4</text>
<rect x="2166.2" y="1425" width="3" height="12.5" fill="#dadada"/>
<text x="2167.7" y="1472.7" font-size="33.5" fill="#dadada" text-anchor="middle">0.5</text>
<rect x="2344.3" y="1425" width="3" height="12.5" fill="#dadada"/>
<text x="2345.8" y="1472.7" font-size="33.5" fill="#dadada" text-anchor="middle">0.6</text>
<rect x="2557.6" y="294.3" width="1172.9" height="1129" fill="#232323"/>
<g clip-path="url(#xhs)">
<path fill="#090" stroke="#090" stroke-width="4" d="M2976.4 618.2 L131.2 -1558.4 L4231.6 -3735 Z"/>
<path fill="#900" stroke="#900" stroke-width="4" d="M3450.6 981 L6295.8 3157.6 L7551 -1195.6 Z"/>
<path fill="#009" stroke="#009" stroke-width="4" d="M2767.2 1343.8 L-1333.2 3520.4 L1512 5697 Z"/>
<g clip-path="url(#xf0)">
<path fill="#009902" d="M3026.3 646 L621.7 -1252.1 L548.4 -998 L3015.3 684.2 Z"/>
<path fill="#009908" d="M3020 667.7 L580 -1107.5 L511.2 -868.9 L3009.7 703.5 Z"/>
<path fill="#00990d" d="M3014.1 688.1 L540.8 -971.5 L476.5 -748.5 L3004.5 721.6 Z"/>
<path fill="#009912" d="M3008.6 707.2 L504.1 -844.1 L444.3 -636.7 L2999.7 738.4 Z"/>
<path fill="#009917" d="M3003.5 724.9 L470.2 -726.6 L413.4 -529.5 L2995 754.4 Z"/>
<path fill="#00991c" d="M2998.7 741.6 L437.9 -614.8 L384.1 -428.1 L2990.6 769.6 Z"/>
<path fill="#009921" d="M2994.1 757.5 L407.4 -508.8 L356.5 -332.5 L2986.5 784 Z"/>
<path fill="#009926" d="M2989.8 772.6 L378.5 -408.5 L330.6 -242.6 L2982.6 797.5 Z"/>
<path fill="#00992b" d="M2985.7 786.6 L351.5 -315.2 L305.2 -154.4 L2978.8 810.7 Z"/>
<path fill="#009930" d="M2981.8 800.3 L325.1 -223.6 L281.8 -73.2 L2975.3 822.9 Z"/>
<path fill="#009935" d="M2978.1 813 L300.7 -138.9 L258.8 6.4 L2971.8 834.8 Z"/>
<path fill="#00993a" d="M2974.6 825.3 L277.1 -57 L236.7 83 L2968.5 846.3 Z"/>
<path fill="#00993f" d="M2971.1 837.3 L254 23.1 L216.6 152.7 L2965.5 856.8 Z"/>
<path fill="#094" d="M2968 848.3 L232.9 96.2 L197 220.7 L2962.6 867 Z"/>
<path fill="#00994a" d="M2964.9 858.8 L212.7 166.5 L178.3 285.8 L2959.8 876.7 Z"/>
<path fill="#00994f" d="M2962 869 L193.2 234 L160.3 348 L2957.1 886.1 Z"/>
<path fill="#009954" d="M2959.2 878.6 L174.6 298.5 L143.2 407.4 L2954.5 895 Z"/>
<path fill="#009959" d="M2956.5 887.9 L156.8 360.1 L126.9 463.9 L2952.1 903.4 Z"/>
<path fill="#00995e" d="M2954 896.5 L140.2 417.8 L110.3 521.5 L2949.6 912.1 Z"/>
<path fill="#009963" d="M2951.5 905.3 L123.3 476.5 L94.9 575.1 L2947.2 920.1 Z"/>
<path fill="#009968" d="M2949.1 913.7 L107.1 532.4 L80.2 625.8 L2945.1 927.7 Z"/>
<path fill="#00996d" d="M2946.8 921.7 L91.9 585.4 L66.4 673.6 L2943 934.9 Z"/>
<path fill="#009973" d="M2944.7 929 L77.7 634.4 L52.3 722.6 L2940.9 942.2 Z"/>
<path fill="#009978" d="M2942.5 936.5 L63.3 684.6 L39.4 767.5 L2938.9 949 Z"/>
<path fill="#00997d" d="M2940.5 943.6 L49.7 731.8 L27.2 809.6 L2937.1 955.3 Z"/>
<path fill="#009982" d="M2938.6 950.1 L37.2 775 L14.8 852.8 L2935.2 961.8 Z"/>
<path fill="#009987" d="M2936.7 956.8 L24.4 819.4 L3.5 892 L2933.5 967.7 Z"/>
<path fill="#00998c" d="M2934.9 962.8 L12.8 859.7 L-8.2 932.3 L2931.8 973.7 Z"/>
<path fill="#009991" d="M2933.1 969 L0.8 901.2 L-18.6 968.6 L2930.2 979.2 Z"/>
<path fill="#009996" d="M2931.5 974.7 L-10 938.7 L-29.4 1006.1 L2928.6 984.8 Z"/>
<path fill="#009699" d="M2929.9 980.3 L-20.8 976.1 L-40.2 1043.5 L2927 990.4 Z"/>
<path fill="#009199" d="M2928.3 985.9 L-31.6 1013.6 L-51 1081 L2925.4 996 Z"/>
<path fill="#008c99" d="M2926.7 991.3 L-42 1049.9 L-63 1122.5 L2923.6 1002.2 Z"/>
<path fill="#008799" d="M2925 997.4 L-53.7 1090.2 L-74.6 1162.8 L2921.8 1008.3 Z"/>
<path fill="#008299" d="M2923.3 1003.3 L-65 1129.4 L-87.4 1207.2 L2919.9 1014.9 Z"/>
<path fill="#007d99" d="M2921.4 1009.8 L-77.4 1172.6 L-99.9 1250.4 L2918 1021.4 Z"/>
<path fill="#007899" d="M2919.6 1016.1 L-89.6 1214.7 L-113.5 1297.6 L2916 1028.5 Z"/>
<path fill="#007399" d="M2917.6 1022.8 L-102.5 1259.6 L-127.9 1347.8 L2913.8 1036 Z"/>
<path fill="#006d99" d="M2915.5 1030.1 L-116.6 1308.6 L-142.1 1396.7 L2911.7 1043.4 Z"/>
<path fill="#006899" d="M2913.5 1037.3 L-130.4 1356.4 L-157.4 1449.8 L2909.4 1051.3 Z"/>
<path fill="#006399" d="M2911.3 1044.9 L-145.1 1407.1 L-173.5 1505.7 L2907 1059.7 Z"/>
<path fill="#005e99" d="M2908.9 1053.1 L-160.8 1461.9 L-189.3 1560.4 L2904.6 1067.9 Z"/>
<path fill="#005999" d="M2906.6 1061.2 L-176.3 1515.4 L-206.2 1619.2 L2902.1 1076.7 Z"/>
<path fill="#005499" d="M2904.1 1069.6 L-192.6 1571.9 L-224 1680.8 L2899.4 1086 Z"/>
<path fill="#004f99" d="M2901.6 1078.5 L-209.7 1631.3 L-242.6 1745.4 L2896.6 1095.7 Z"/>
<path fill="#004a99" d="M2898.9 1087.9 L-227.6 1693.5 L-262 1812.8 L2893.7 1105.8 Z"/>
<path fill="#049" d="M2896.1 1097.7 L-246.4 1758.6 L-282.3 1883.1 L2890.7 1116.3 Z"/>
<path fill="#003f99" d="M2893.1 1107.9 L-266 1826.6 L-303.4 1956.2 L2887.5 1127.3 Z"/>
<path fill="#003a99" d="M2890 1118.5 L-286.4 1897.5 L-325.3 2032.3 L2884.2 1138.7 Z"/>
<path fill="#003599" d="M2886.9 1129.4 L-307.4 1970.1 L-349.3 2115.3 L2880.6 1151.2 Z"/>
<path fill="#003099" d="M2883.5 1141.3 L-330.3 2049.6 L-373.7 2200 L2877 1163.9 Z"/>
<path fill="#002b99" d="M2879.9 1153.7 L-354.1 2132 L-398.9 2287.6 L2873.2 1177 Z"/>
<path fill="#002699" d="M2876.3 1166.3 L-378.3 2216.1 L-426.2 2382.1 L2869.1 1191.2 Z"/>
<path fill="#002199" d="M2872.4 1179.8 L-404.2 2306 L-455.1 2482.3 L2864.8 1206.2 Z"/>
<path fill="#001c99" d="M2868.2 1194.1 L-431.8 2401.7 L-485.7 2588.3 L2860.2 1222.1 Z"/>
<path fill="#001799" d="M2863.9 1209.3 L-461.1 2503.1 L-517.9 2700.1 L2855.3 1238.9 Z"/>
<path fill="#001299" d="M2859.2 1225.4 L-492 2610.2 L-551.8 2817.7 L2850.2 1256.5 Z"/>
<path fill="#000c99" d="M2854.3 1242.3 L-524.5 2723.2 L-587.3 2941 L2844.9 1275 Z"/>
<path fill="#000799" d="M2849.3 1260 L-558.4 2840.7 L-625.7 3074.1 L2839.2 1295 Z"/>
<path fill="#000299" d="M2843.7 1279.1 L-595.1 2968.1 L-665.4 3211.8 L2833.2 1315.6 Z"/>
</g>
<g clip-path="url(#xf1)">
<path fill="#990200" d="M3392.1 1024.8 L6933.3 -782.6 L6637.6 -1008.8 L3347.8 990.9 Z"/>
<path fill="#990800" d="M3366.3 1005.1 L6761.4 -914.1 L6500 -1114.1 L3327.1 975.1 Z"/>
<path fill="#990d00" d="M3343.7 987.8 L6610.5 -1029.6 L6374.8 -1209.9 L3308.3 960.7 Z"/>
<path fill="#991200" d="M3323.3 972.2 L6474.8 -1133.4 L6260.5 -1297.3 L3291.2 947.6 Z"/>
<path fill="#991700" d="M3304.8 958 L6351 -1228.1 L6158.1 -1375.6 L3275.8 935.9 Z"/>
<path fill="#991c00" d="M3288.1 945.3 L6240 -1313 L6064.3 -1447.4 L3261.8 925.1 Z"/>
<path fill="#992100" d="M3273.1 933.7 L6139.5 -1389.8 L5976.7 -1514.4 L3248.6 915.1 Z"/>
<path fill="#992600" d="M3258.9 922.9 L6045.3 -1462 L5899.5 -1573.4 L3237.1 906.2 Z"/>
<path fill="#992b00" d="M3246.5 913.4 L5962.4 -1525.4 L5825.3 -1630.3 L3225.9 897.7 Z"/>
<path fill="#993000" d="M3234.6 904.3 L5883.4 -1585.8 L5759.1 -1680.9 L3216 890.1 Z"/>
<path fill="#993500" d="M3224 896.2 L5812.4 -1640.1 L5696.7 -1728.6 L3206.6 882.9 Z"/>
<path fill="#993a00" d="M3214.1 888.6 L5746.2 -1690.8 L5639.1 -1772.7 L3198 876.3 Z"/>
<path fill="#993f00" d="M3205 881.7 L5685.7 -1737 L5582.9 -1815.7 L3189.6 869.9 Z"/>
<path fill="#940" d="M3196.1 874.9 L5626.7 -1782.2 L5532.4 -1854.3 L3182 864.1 Z"/>
<path fill="#994a00" d="M3188.1 868.8 L5573.4 -1823 L5483.4 -1891.8 L3174.6 858.4 Z"/>
<path fill="#994f00" d="M3180.3 862.8 L5521.5 -1862.7 L5440 -1925 L3168.1 853.5 Z"/>
<path fill="#995400" d="M3173.4 857.5 L5475.3 -1898 L5398.1 -1957 L3161.8 848.7 Z"/>
<path fill="#995900" d="M3166.8 852.5 L5431.5 -1931.5 L5358.6 -1987.3 L3155.9 844.1 Z"/>
<path fill="#995e00" d="M3160.6 847.7 L5390 -1963.2 L5321.5 -2015.7 L3150.3 839.9 Z"/>
<path fill="#996300" d="M3154.8 843.2 L5351 -1993.1 L5286.7 -2042.3 L3145.1 835.9 Z"/>
<path fill="#996800" d="M3149.4 839.2 L5315.3 -2020.4 L5251 -2069.6 L3139.8 831.8 Z"/>
<path fill="#996d00" d="M3143.9 834.9 L5278.6 -2048.5 L5218.6 -2094.4 L3134.9 828.1 Z"/>
<path fill="#997200" d="M3138.8 831 L5244.3 -2074.7 L5188.6 -2117.3 L3130.4 824.6 Z"/>
<path fill="#997800" d="M3134.1 827.5 L5213.4 -2098.4 L5157.7 -2141 L3125.8 821.1 Z"/>
<path fill="#997d00" d="M3129.3 823.8 L5181.5 -2122.8 L5130 -2162.1 L3121.6 817.9 Z"/>
<path fill="#998200" d="M3124.9 820.4 L5151.9 -2145.4 L5104.8 -2181.4 L3117.8 815 Z"/>
<path fill="#998700" d="M3121 817.4 L5125.7 -2165.4 L5078.6 -2201.5 L3113.9 812 Z"/>
<path fill="#998c00" d="M3116.9 814.3 L5098.6 -2186.2 L5055.8 -2219 L3110.5 809.4 Z"/>
<path fill="#999200" d="M3113.3 811.6 L5074.8 -2204.4 L5031.9 -2237.2 L3106.9 806.6 Z"/>
<path fill="#990" d="M3110.9 809.7 L5058.6 -2216.8 L4981.5 -2275.8 L3099.3 800.8 Z"/>
<path fill="#919900" d="M3103.3 803.9 L5008.1 -2255.4 L4965.3 -2288.2 L3096.9 799 Z"/>
<path fill="#8c9900" d="M3099.8 801.2 L4984.3 -2273.6 L4941.5 -2306.4 L3093.3 796.3 Z"/>
<path fill="#869900" d="M3096.2 798.4 L4960.5 -2291.8 L4917.7 -2324.6 L3089.8 793.5 Z"/>
<path fill="#819900" d="M3092.6 795.7 L4936.7 -2310 L4893.8 -2342.8 L3086.2 790.8 Z"/>
<path fill="#7c9900" d="M3089.2 793.1 L4913.8 -2327.5 L4866.7 -2363.6 L3082.1 787.7 Z"/>
<path fill="#790" d="M3085.3 790.1 L4887.7 -2347.6 L4840.5 -2383.6 L3078.2 784.7 Z"/>
<path fill="#729900" d="M3081.3 787.1 L4861.5 -2367.6 L4814.3 -2403.7 L3074.3 781.7 Z"/>
<path fill="#6c9900" d="M3077.6 784.2 L4836.2 -2386.9 L4784.8 -2426.3 L3069.8 778.3 Z"/>
<path fill="#679900" d="M3073.3 780.9 L4807.7 -2408.8 L4756.2 -2448.1 L3065.6 775 Z"/>
<path fill="#629900" d="M3069 777.6 L4779.1 -2430.6 L4727.7 -2470 L3061.3 771.7 Z"/>
<path fill="#5d9900" d="M3064.7 774.3 L4750.5 -2452.5 L4699.1 -2491.8 L3057 768.4 Z"/>
<path fill="#589900" d="M3060.6 771.2 L4722.9 -2473.6 L4667.2 -2516.2 L3052.2 764.8 Z"/>
<path fill="#529900" d="M3055.9 767.6 L4691.9 -2497.3 L4636.2 -2539.9 L3047.6 761.2 Z"/>
<path fill="#4d9900" d="M3051.4 764.2 L4661.9 -2520.2 L4601.9 -2566.1 L3042.4 757.3 Z"/>
<path fill="#489900" d="M3046.4 760.4 L4628.6 -2545.7 L4568.6 -2591.6 L3037.4 753.5 Z"/>
<path fill="#439900" d="M3041.4 756.5 L4595.3 -2571.2 L4535.3 -2617.1 L3032.4 749.6 Z"/>
<path fill="#3e9900" d="M3036.6 752.8 L4562.9 -2596 L4498.6 -2645.2 L3026.9 745.4 Z"/>
<path fill="#389900" d="M3031.2 748.7 L4527.2 -2623.3 L4462.9 -2672.5 L3021.6 741.3 Z"/>
<path fill="#390" d="M3026 744.7 L4492.4 -2649.9 L4423.9 -2702.4 L3015.7 736.9 Z"/>
<path fill="#2e9900" d="M3020.3 740.4 L4454.3 -2679.1 L4385.8 -2731.5 L3010 732.5 Z"/>
<path fill="#299900" d="M3014.7 736.1 L4417.2 -2707.5 L4344.3 -2763.2 L3003.8 727.7 Z"/>
<path fill="#249900" d="M3008.6 731.4 L4376.7 -2738.4 L4303.9 -2794.2 L2997.7 723.1 Z"/>
<path fill="#1e9900" d="M3002.7 726.9 L4337.2 -2768.7 L4260 -2827.7 L2991.1 718.1 Z"/>
<path fill="#199900" d="M2996.3 722 L4294.3 -2801.5 L4217.2 -2860.5 L2984.7 713.1 Z"/>
<path fill="#149900" d="M2990 717.2 L4252.4 -2833.5 L4171 -2895.8 L2977.8 707.8 Z"/>
<path fill="#0f9900" d="M2983.3 712.1 L4208.1 -2867.4 L4122.4 -2933 L2970.5 702.3 Z"/>
<path fill="#0a9900" d="M2976.2 706.6 L4160.5 -2903.8 L4074.8 -2969.4 L2963.3 696.8 Z"/>
<path fill="#059900" d="M2969.2 701.3 L4113.9 -2939.5 L4023.9 -3008.4 L2955.7 691 Z"/>
<path fill="#019900" d="M2960 694.2 L4052.4 -2986.5 L4013.9 -3016 L2954.2 689.8 Z"/>
</g>
<g clip-path="url(#xf2)">
<path fill="#030099" d="M2783.8 1273.5 L1692.6 4986.7 L1821.3 4918.4 L2803.1 1263.3 Z"/>
<path fill="#080099" d="M2794.7 1267.7 L1765.2 4948.2 L1889.1 4882.4 L2813.3 1257.9 Z"/>
<path fill="#0d0099" d="M2805.2 1262.2 L1835.1 4911 L1954.3 4847.8 L2823.1 1252.7 Z"/>
<path fill="#120099" d="M2815.1 1256.9 L1901.3 4875.9 L2020.5 4812.6 L2833 1247.4 Z"/>
<path fill="#170099" d="M2825.2 1251.5 L1968.6 4840.2 L2083 4779.4 L2842.4 1242.4 Z"/>
<path fill="#1c0099" d="M2834.9 1246.4 L2033.2 4805.9 L2142.9 4747.7 L2851.4 1237.7 Z"/>
<path fill="#210099" d="M2844.2 1241.4 L2095.2 4773 L2200.1 4717.3 L2860 1233.1 Z"/>
<path fill="#260099" d="M2853 1236.8 L2153.5 4742 L2258.4 4686.3 L2868.7 1228.5 Z"/>
<path fill="#2b0099" d="M2861.9 1232.1 L2212.8 4710.5 L2312.9 4657.4 L2876.9 1224.1 Z"/>
<path fill="#310099" d="M2870.4 1227.6 L2269.5 4680.4 L2364.9 4629.8 L2884.7 1220 Z"/>
<path fill="#360099" d="M2878.3 1223.4 L2322.5 4652.3 L2417.8 4601.7 L2892.6 1215.8 Z"/>
<path fill="#3b0099" d="M2886.4 1219 L2376.5 4623.6 L2467.1 4575.5 L2900 1211.8 Z"/>
<path fill="#400099" d="M2894 1215 L2426.8 4596.9 L2517.4 4548.8 L2907.6 1207.8 Z"/>
<path fill="#450099" d="M2901.7 1211 L2478.2 4569.6 L2564 4524.1 L2914.6 1204.1 Z"/>
<path fill="#4a0099" d="M2908.8 1207.2 L2525.9 4544.3 L2611.7 4498.8 L2921.7 1200.3 Z"/>
<path fill="#500099" d="M2916.1 1203.3 L2574.6 4518.5 L2655.7 4475.4 L2928.3 1196.8 Z"/>
<path fill="#509" d="M2922.9 1199.7 L2619.7 4494.6 L2700.7 4451.5 L2935.1 1193.2 Z"/>
<path fill="#5a0099" d="M2929.8 1196 L2665.8 4470.1 L2742 4429.6 L2941.3 1189.9 Z"/>
<path fill="#5f0099" d="M2936.2 1192.6 L2708.1 4447.6 L2784.4 4407.1 L2947.6 1186.6 Z"/>
<path fill="#640099" d="M2942.7 1189.2 L2751.6 4424.5 L2823.1 4386.6 L2953.4 1183.5 Z"/>
<path fill="#690099" d="M2948.6 1186 L2791.3 4403.4 L2862.8 4365.5 L2959.4 1180.3 Z"/>
<path fill="#6f0099" d="M2954.6 1182.9 L2831 4382.4 L2902.6 4344.4 L2965.3 1177.2 Z"/>
<path fill="#740099" d="M2960.7 1179.6 L2871.8 4360.7 L2938.6 4325.3 L2970.7 1174.3 Z"/>
<path fill="#790099" d="M2966.3 1176.7 L2908.9 4341 L2975.7 4305.6 L2976.3 1171.3 Z"/>
<path fill="#7e0099" d="M2971.8 1173.7 L2946 4321.3 L3012.8 4285.9 L2981.9 1168.4 Z"/>
<path fill="#840099" d="M2977.6 1170.7 L2984.2 4301.1 L3046.1 4268.2 L2986.9 1165.7 Z"/>
<path fill="#890099" d="M2982.7 1167.9 L3018.6 4282.8 L3080.6 4249.9 L2992 1163 Z"/>
<path fill="#8e0099" d="M2987.9 1165.2 L3053 4264.5 L3115 4231.6 L2997.2 1160.2 Z"/>
<path fill="#930099" d="M2993.2 1162.4 L3088.5 4245.7 L3145.7 4215.3 L3001.8 1157.8 Z"/>
<path fill="#990098" d="M2996.9 1160.4 L3112.9 4232.7 L3203.5 4184.7 L3010.5 1153.2 Z"/>
<path fill="#990091" d="M3005.4 1155.9 L3169.6 4202.7 L3231.6 4169.7 L3014.7 1151 Z"/>
<path fill="#99008c" d="M3010.5 1153.2 L3204 4184.4 L3266 4151.5 L3019.8 1148.2 Z"/>
<path fill="#990087" d="M3015.6 1150.5 L3237.4 4166.7 L3304.1 4131.2 L3025.6 1145.2 Z"/>
<path fill="#990082" d="M3021 1147.6 L3273.4 4147.5 L3344.9 4109.6 L3031.7 1141.9 Z"/>
<path fill="#99007c" d="M3026.9 1144.5 L3313.1 4126.4 L3384.7 4088.5 L3037.6 1138.8 Z"/>
<path fill="#907" d="M3032.7 1141.4 L3351.8 4105.9 L3428.1 4065.4 L3044.2 1135.3 Z"/>
<path fill="#990072" d="M3038.9 1138.1 L3393.1 4084 L3474.2 4041 L3051.1 1131.6 Z"/>
<path fill="#99006d" d="M3045.5 1134.6 L3437.1 4060.6 L3522.9 4015.1 L3058.4 1127.8 Z"/>
<path fill="#990068" d="M3052.5 1130.9 L3483.7 4035.9 L3574.3 3987.8 L3066.1 1123.7 Z"/>
<path fill="#990063" d="M3059.9 1127 L3533 4009.7 L3628.4 3959.1 L3074.2 1119.4 Z"/>
<path fill="#99005e" d="M3067.7 1122.8 L3584.9 3982.2 L3685 3929 L3082.7 1114.9 Z"/>
<path fill="#990059" d="M3075.9 1118.5 L3639.5 3953.2 L3744.4 3897.5 L3091.6 1110.1 Z"/>
<path fill="#990053" d="M3084.3 1114 L3695.6 3923.4 L3810.1 3862.7 L3101.5 1104.9 Z"/>
<path fill="#99004e" d="M3093.7 1109 L3758.1 3890.2 L3877.3 3826.9 L3111.5 1099.5 Z"/>
<path fill="#990049" d="M3103.3 1103.9 L3822.2 3856.2 L3951 3787.9 L3122.6 1093.7 Z"/>
<path fill="#904" d="M3113.7 1098.4 L3891.6 3819.4 L4029.9 3746 L3134.4 1087.4 Z"/>
<path fill="#99003f" d="M3124.9 1092.5 L3966.3 3779.7 L4114.2 3701.2 L3147.1 1080.7 Z"/>
<path fill="#99003a" d="M3136.9 1086.1 L4046.3 3737.2 L4203.7 3653.7 L3160.5 1073.6 Z"/>
<path fill="#990035" d="M3149.7 1079.3 L4131.6 3692 L4298.5 3603.4 L3174.7 1066 Z"/>
<path fill="#990030" d="M3163.1 1072.2 L4221.2 3644.4 L4402.3 3548.3 L3190.3 1057.7 Z"/>
<path fill="#99002b" d="M3177.7 1064.4 L4318.6 3592.7 L4514.1 3488.9 L3207.1 1048.8 Z"/>
<path fill="#990026" d="M3193.4 1056.1 L4423 3537.3 L4637.6 3423.4 L3225.6 1039 Z"/>
<path fill="#990021" d="M3210.6 1046.9 L4538 3476.3 L4771.6 3352.2 L3245.7 1028.3 Z"/>
<path fill="#99001c" d="M3229.5 1036.9 L4663.5 3409.6 L4916.2 3275.5 L3267.4 1016.8 Z"/>
<path fill="#990017" d="M3249.6 1026.3 L4797.6 3338.5 L5078.9 3189.1 L3291.8 1003.9 Z"/>
<path fill="#901" d="M3272.1 1014.3 L4947.5 3258.9 L5257.4 3094.4 L3318.6 989.7 Z"/>
<path fill="#99000c" d="M3296.8 1001.2 L5112.2 3171.4 L5455.5 2989.2 L3348.3 973.9 Z"/>
<path fill="#990007" d="M3324.1 986.7 L5294.5 3074.7 L5675.9 2872.2 L3381.3 956.3 Z"/>
<path fill="#990003" d="M3355.7 969.9 L5505.3 2962.8 L5891.5 2757.8 L3413.7 939.2 Z"/>
<path fill="#900" d="M3399.9 946.5 L5799.3 2806.7 L5828 2791.5 L3404.1 944.2 Z"/>
</g>
</g>
<g clip-path="url(#xtr)">
<circle cx="2994.1" cy="982.4" r="85" fill="url(#xwr)"/>
<path fill="url(#x0)" d="M2994.1 982.4 L3493.5 999.8 L3448.8 965.6 Z"/>
<path fill="url(#x1)" d="M2994.1 982.4 L3459.5 973.8 L3432.8 953.4 Z"/>
<path fill="url(#x2)" d="M2994.1 982.4 L3443.7 961.7 L3417.7 941.8 Z"/>
<path fill="url(#x3)" d="M2994.1 982.4 L3428.3 949.9 L3403 930.6 Z"/>
<path fill="url(#x4)" d="M2994.1 982.4 L3413.3 938.4 L3388.7 919.6 Z"/>
<path fill="url(#x5)" d="M2994.1 982.4 L3398.5 927.1 L3375.4 909.4 Z"/>
<path fill="url(#x6)" d="M2994.1 982.4 L3384.6 916.5 L3362.9 899.9 Z"/>
<path fill="url(#x7)" d="M2994.1 982.4 L3371.7 906.6 L3350.6 890.5 Z"/>
<path fill="url(#x8)" d="M2994.1 982.4 L3359 896.9 L3339.4 881.9 Z"/>
<path fill="url(#x9)" d="M2994.1 982.4 L3347.3 888 L3328.4 873.5 Z"/>
<path fill="url(#x10)" d="M2994.1 982.4 L3336 879.3 L3317.8 865.4 Z"/>
<path fill="url(#x11)" d="M2994.1 982.4 L3325.1 871 L3307.6 857.6 Z"/>
<path fill="url(#x12)" d="M2994.1 982.4 L3314.5 862.9 L3298.4 850.6 Z"/>
<path fill="url(#x13)" d="M2994.1 982.4 L3304.9 855.5 L3289.5 843.7 Z"/>
<path fill="url(#x14)" d="M2994.1 982.4 L3295.7 848.5 L3280.9 837.2 Z"/>
<path fill="url(#x15)" d="M2994.1 982.4 L3286.9 841.7 L3272.8 831 Z"/>
<path fill="url(#x16)" d="M2994.1 982.4 L3278.5 835.3 L3265.1 825.1 Z"/>
<path fill="url(#x17)" d="M2994.1 982.4 L3270.5 829.2 L3257.9 819.5 Z"/>
<path fill="url(#x18)" d="M2994.1 982.4 L3263.1 823.5 L3250.4 813.8 Z"/>
<path fill="url(#x19)" d="M2994.1 982.4 L3255.5 817.7 L3243.6 808.6 Z"/>
<path fill="url(#x20)" d="M2994.1 982.4 L3248.3 812.2 L3237.1 803.7 Z"/>
<path fill="url(#x21)" d="M2994.1 982.4 L3241.6 807.1 L3231.1 799 Z"/>
<path fill="url(#x22)" d="M2994.1 982.4 L3235.4 802.3 L3224.9 794.3 Z"/>
<path fill="url(#x23)" d="M2994.1 982.4 L3229.1 797.5 L3219.2 790 Z"/>
<path fill="url(#x24)" d="M2994.1 982.4 L3223.3 793.1 L3213.5 785.6 Z"/>
<path fill="url(#x25)" d="M2994.1 982.4 L3217.4 788.5 L3208.2 781.6 Z"/>
<path fill="url(#x26)" d="M2994.1 982.4 L3212 784.4 L3202.9 777.5 Z"/>
<path fill="url(#x27)" d="M2994.1 982.4 L3206.5 780.2 L3198.1 773.8 Z"/>
<path fill="url(#x28)" d="M2994.1 982.4 L3201.5 776.4 L3193.1 770 Z"/>
<path fill="url(#x29)" d="M2994.1 982.4 L3196.4 772.5 L3188.7 766.6 Z"/>
<path fill="url(#x30)" d="M2994.1 982.4 L3191.9 769.1 L3184.2 763.2 Z"/>
<path fill="url(#x31)" d="M2994.1 982.4 L3187.2 765.5 L3180.2 760.1 Z"/>
<path fill="url(#x32)" d="M2994.1 982.4 L3183.1 762.3 L3176.1 757 Z"/>
<path fill="url(#x33)" d="M2994.1 982.4 L3179 759.2 L3171.9 753.8 Z"/>
<path fill="url(#x34)" d="M2994.1 982.4 L3174.7 755.9 L3168.4 751.1 Z"/>
<path fill="url(#x35)" d="M2994.1 982.4 L3171 753.1 L3164.7 748.2 Z"/>
<path fill="url(#x36)" d="M2994.1 982.4 L3167.3 750.2 L3160.9 745.4 Z"/>
<path fill="url(#x37)" d="M2994.1 982.4 L3163.4 747.3 L3157.8 743 Z"/>
<path fill="url(#x38)" d="M2994.1 982.4 L3160.1 744.7 L3154.5 740.4 Z"/>
<path fill="url(#x39)" d="M2994.1 982.4 L3156.8 742.2 L3151.2 737.9 Z"/>
<path fill="url(#x40)" d="M2994.1 982.4 L3153.5 739.7 L3147.9 735.4 Z"/>
<path fill="url(#x41)" d="M2994.1 982.4 L3150.2 737.2 L3144.6 732.9 Z"/>
<path fill="url(#x42)" d="M2994.1 982.4 L3146.9 734.6 L3141.3 730.3 Z"/>
<path fill="url(#x43)" d="M2994.1 982.4 L3143.6 732.1 L3138 727.8 Z"/>
<path fill="url(#x44)" d="M2994.1 982.4 L3140.3 729.6 L3134.7 725.3 Z"/>
<path fill="url(#x45)" d="M2994.1 982.4 L3137 727.1 L3131.4 722.8 Z"/>
<path fill="url(#x46)" d="M2994.1 982.4 L3133.7 724.5 L3128.1 720.2 Z"/>
<path fill="url(#x47)" d="M2994.1 982.4 L3130.4 722 L3124.8 717.7 Z"/>
<path fill="url(#x48)" d="M2994.1 982.4 L3127.2 719.6 L3120.9 714.8 Z"/>
<path fill="url(#x49)" d="M2994.1 982.4 L3123.5 716.7 L3117.2 711.9 Z"/>
<path fill="url(#x50)" d="M2994.1 982.4 L3119.8 713.9 L3113.5 709.1 Z"/>
<path fill="url(#x51)" d="M2994.1 982.4 L3116.1 711.1 L3109.8 706.2 Z"/>
<path fill="url(#x52)" d="M2994.1 982.4 L3112.4 708.2 L3106 703.4 Z"/>
<path fill="url(#x53)" d="M2994.1 982.4 L3108.6 705.4 L3102.3 700.6 Z"/>
<path fill="url(#x54)" d="M2994.1 982.4 L3104.9 702.5 L3098.6 697.7 Z"/>
<path fill="url(#x55)" d="M2994.1 982.4 L3101.4 699.8 L3094.4 694.4 Z"/>
<path fill="url(#x56)" d="M2994.1 982.4 L3097.2 696.7 L3090.2 691.3 Z"/>
<path fill="url(#x57)" d="M2994.1 982.4 L3093.1 693.5 L3086.1 688.1 Z"/>
<path fill="url(#x58)" d="M2994.1 982.4 L3089 690.3 L3082 685 Z"/>
<path fill="url(#x59)" d="M2994.1 982.4 L3084.9 687.2 L3077.8 681.8 Z"/>
<path fill="url(#x60)" d="M2994.1 982.4 L3080.7 684 L3073.7 678.7 Z"/>
<path fill="url(#x61)" d="M2994.1 982.4 L3076.7 681 L3069 675.1 Z"/>
<path fill="url(#x62)" d="M2994.1 982.4 L3072.2 677.5 L3064.5 671.6 Z"/>
<path fill="url(#x63)" d="M2994.1 982.4 L3067.7 674 L3060 668.1 Z"/>
<path fill="url(#x64)" d="M2994.1 982.4 L3063.1 670.6 L3055.4 664.7 Z"/>
<path fill="url(#x65)" d="M2994.1 982.4 L3058.6 667.1 L3050.9 661.2 Z"/>
<path fill="url(#x66)" d="M2994.1 982.4 L3054.1 663.6 L3046.3 657.7 Z"/>
<path fill="url(#x67)" d="M2994.1 982.4 L3049.7 660.3 L3041.2 653.8 Z"/>
<path fill="url(#x68)" d="M2994.1 982.4 L3044.7 656.5 L3036.3 650 Z"/>
<path fill="url(#x69)" d="M2994.1 982.4 L3039.8 652.7 L3031.3 646.2 Z"/>
<path fill="url(#x70)" d="M2994.1 982.4 L3034.8 648.9 L3026.4 642.4 Z"/>
<path fill="url(#x71)" d="M2994.1 982.4 L3029.8 645.1 L3021.4 638.7 Z"/>
<path fill="url(#x72)" d="M2994.1 982.4 L3024.9 641.3 L3016.5 634.9 Z"/>
<path fill="url(#x73)" d="M2994.1 982.4 L3020.1 637.6 L3011 630.7 Z"/>
<path fill="url(#x74)" d="M2994.1 982.4 L3014.7 633.5 L3005.6 626.5 Z"/>
<path fill="url(#x75)" d="M2994.1 982.4 L3009.4 629.4 L3000.2 622.4 Z"/>
<path fill="url(#x76)" d="M2994.1 982.4 L3004 625.3 L2994.9 618.3 Z"/>
<path fill="url(#x77)" d="M2994.1 982.4 L2998.6 621.2 L2989.5 614.2 Z"/>
<path fill="url(#x78)" d="M2994.1 982.4 L2993.3 617.1 L2984.1 610.1 Z"/>
<path fill="url(#x79)" d="M2994.1 982.4 L2987.8 612.9 L2979.3 606.5 Z"/>
<path fill="url(#x80)" d="M2994.1 982.4 L2982.9 609.2 L2951 584.8 Z"/>
<path fill="url(#x81)" d="M2994.1 982.4 L2986.6 565.9 L2970.6 621.2 Z"/>
<path fill="url(#x82)" d="M2994.1 982.4 L2973.4 611.8 L2966.5 635.5 Z"/>
<path fill="url(#x83)" d="M2994.1 982.4 L2969.3 625.7 L2962.5 649.5 Z"/>
<path fill="url(#x84)" d="M2994.1 982.4 L2965.3 639.7 L2958.5 663.5 Z"/>
<path fill="url(#x85)" d="M2994.1 982.4 L2961.2 653.9 L2954.6 676.8 Z"/>
<path fill="url(#x86)" d="M2994.1 982.4 L2957.3 667.4 L2950.7 690.3 Z"/>
<path fill="url(#x87)" d="M2994.1 982.4 L2953.4 681 L2947 703.1 Z"/>
<path fill="url(#x88)" d="M2994.1 982.4 L2949.7 694 L2943.3 716.1 Z"/>
<path fill="url(#x89)" d="M2994.1 982.4 L2945.9 707.2 L2939.7 728.4 Z"/>
<path fill="url(#x90)" d="M2994.1 982.4 L2942.2 719.8 L2936.3 740.2 Z"/>
<path fill="url(#x91)" d="M2994.1 982.4 L2938.8 731.8 L2932.9 752.2 Z"/>
<path fill="url(#x92)" d="M2994.1 982.4 L2935.2 744 L2929.6 763.5 Z"/>
<path fill="url(#x93)" d="M2994.1 982.4 L2931.9 755.6 L2926.5 774.3 Z"/>
<path fill="url(#x94)" d="M2994.1 982.4 L2928.7 766.6 L2923.3 785.3 Z"/>
<path fill="url(#x95)" d="M2994.1 982.4 L2925.5 777.8 L2920.4 795.6 Z"/>
<path fill="url(#x96)" d="M2994.1 982.4 L2922.4 788.4 L2917.5 805.4 Z"/>
<path fill="url(#x97)" d="M2994.1 982.4 L2919.5 798.4 L2914.6 815.4 Z"/>
<path fill="url(#x98)" d="M2994.1 982.4 L2916.6 808.6 L2912 824.7 Z"/>
<path fill="url(#x99)" d="M2994.1 982.4 L2913.9 818.1 L2909.2 834.2 Z"/>
<path fill="url(#x100)" d="M2994.1 982.4 L2911.1 827.7 L2906.7 843 Z"/>
<path fill="url(#x101)" d="M2994.1 982.4 L2908.5 836.7 L2904.1 852 Z"/>
<path fill="url(#x102)" d="M2994.1 982.4 L2905.9 845.9 L2901.7 860.3 Z"/>
<path fill="url(#x103)" d="M2994.1 982.4 L2903.4 854.4 L2899.2 868.8 Z"/>
<path fill="url(#x104)" d="M2994.1 982.4 L2900.9 863.1 L2897 876.6 Z"/>
<path fill="url(#x105)" d="M2994.1 982.4 L2898.6 871 L2894.7 884.6 Z"/>
<path fill="url(#x106)" d="M2994.1 982.4 L2896.3 879.2 L2892.6 891.9 Z"/>
<path fill="url(#x107)" d="M2994.1 982.4 L2894.1 886.7 L2890.4 899.4 Z"/>
<path fill="url(#x108)" d="M2994.1 982.4 L2891.9 894.2 L2888.3 906.9 Z"/>
<path fill="url(#x109)" d="M2994.1 982.4 L2889.7 901.9 L2886.3 913.7 Z"/>
<path fill="url(#x110)" d="M2994.1 982.4 L2887.7 908.8 L2884.3 920.7 Z"/>
<path fill="url(#x111)" d="M2994.1 982.4 L2885.6 916 L2882.5 927.1 Z"/>
<path fill="url(#x112)" d="M2994.1 982.4 L2883.8 922.5 L2880.6 933.5 Z"/>
<path fill="url(#x113)" d="M2994.1 982.4 L2881.9 929 L2878.7 940 Z"/>
<path fill="url(#x114)" d="M2994.1 982.4 L2880 935.7 L2877 945.9 Z"/>
<path fill="url(#x115)" d="M2994.1 982.4 L2878.2 941.7 L2875.3 951.8 Z"/>
<path fill="url(#x116)" d="M2994.1 982.4 L2876.5 947.6 L2873.6 957.8 Z"/>
<path fill="url(#x117)" d="M2994.1 982.4 L2874.7 953.8 L2872 963.2 Z"/>
<path fill="url(#x118)" d="M2994.1 982.4 L2873.2 959.3 L2870.5 968.6 Z"/>
<path fill="url(#x119)" d="M2994.1 982.4 L2871.6 964.8 L2868.9 974.1 Z"/>
<path fill="url(#x120)" d="M2994.1 982.4 L2870 970.3 L2867.3 979.6 Z"/>
<path fill="url(#x121)" d="M2994.1 982.4 L2868.4 976 L2865.9 984.5 Z"/>
<path fill="url(#x122)" d="M2994.1 982.4 L2866.9 981 L2864.5 989.4 Z"/>
<path fill="url(#x123)" d="M2994.1 982.4 L2865.5 985.8 L2862.8 995.1 Z"/>
<path fill="url(#x124)" d="M2994.1 982.4 L2863.9 991.3 L2861.2 1000.6 Z"/>
<path fill="url(#x125)" d="M2994.1 982.4 L2862.4 996.8 L2859.7 1006.1 Z"/>
<path fill="url(#x126)" d="M2994.1 982.4 L2860.8 1002.3 L2858.1 1011.6 Z"/>
<path fill="url(#x127)" d="M2994.1 982.4 L2859.2 1007.6 L2856.3 1017.8 Z"/>
<path fill="url(#x128)" d="M2994.1 982.4 L2857.5 1013.6 L2854.6 1023.8 Z"/>
<path fill="url(#x129)" d="M2994.1 982.4 L2855.8 1019.6 L2852.8 1029.7 Z"/>
<path fill="url(#x130)" d="M2994.1 982.4 L2854.1 1025.4 L2850.9 1036.4 Z"/>
<path fill="url(#x131)" d="M2994.1 982.4 L2852.2 1031.9 L2849.1 1042.9 Z"/>
<path fill="url(#x132)" d="M2994.1 982.4 L2850.4 1038.4 L2847.2 1049.4 Z"/>
<path fill="url(#x133)" d="M2994.1 982.4 L2848.5 1044.7 L2845.1 1056.6 Z"/>
<path fill="url(#x134)" d="M2994.1 982.4 L2846.5 1051.7 L2843.1 1063.6 Z"/>
<path fill="url(#x135)" d="M2994.1 982.4 L2844.5 1058.7 L2841.1 1070.5 Z"/>
<path fill="url(#x136)" d="M2994.1 982.4 L2842.5 1065.5 L2838.9 1078.2 Z"/>
<path fill="url(#x137)" d="M2994.1 982.4 L2840.4 1073 L2836.7 1085.7 Z"/>
<path fill="url(#x138)" d="M2994.1 982.4 L2838.3 1080.3 L2834.4 1093.9 Z"/>
<path fill="url(#x139)" d="M2994.1 982.4 L2836 1088.3 L2832.1 1101.9 Z"/>
<path fill="url(#x140)" d="M2994.1 982.4 L2833.7 1096.1 L2829.6 1110.5 Z"/>
<path fill="url(#x141)" d="M2994.1 982.4 L2831.3 1104.6 L2827.1 1119 Z"/>
<path fill="url(#x142)" d="M2994.1 982.4 L2828.8 1113.1 L2824.7 1127.5 Z"/>
<path fill="url(#x143)" d="M2994.1 982.4 L2826.4 1121.4 L2822 1136.7 Z"/>
<path fill="url(#x144)" d="M2994.1 982.4 L2823.8 1130.4 L2819.4 1145.7 Z"/>
<path fill="url(#x145)" d="M2994.1 982.4 L2821.3 1139.2 L2816.6 1155.3 Z"/>
<path fill="url(#x146)" d="M2994.1 982.4 L2818.6 1148.5 L2813.7 1165.5 Z"/>
<path fill="url(#x147)" d="M2994.1 982.4 L2815.7 1158.5 L2810.8 1175.5 Z"/>
<path fill="url(#x148)" d="M2994.1 982.4 L2812.9 1168.3 L2807.8 1186.1 Z"/>
<path fill="url(#x149)" d="M2994.1 982.4 L2809.9 1178.8 L2804.7 1196.6 Z"/>
<path fill="url(#x150)" d="M2994.1 982.4 L2806.9 1189.1 L2801.5 1207.8 Z"/>
<path fill="url(#x151)" d="M2994.1 982.4 L2803.8 1199.9 L2798.2 1219.4 Z"/>
<path fill="url(#x152)" d="M2994.1 982.4 L2800.5 1211.4 L2794.8 1230.9 Z"/>
<path fill="url(#x153)" d="M2994.1 982.4 L2797.2 1222.7 L2791.3 1243.1 Z"/>
<path fill="url(#x154)" d="M2994.1 982.4 L2793.8 1234.7 L2787.9 1255.1 Z"/>
<path fill="url(#x155)" d="M2994.1 982.4 L2790.3 1246.5 L2784.2 1267.7 Z"/>
<path fill="url(#x156)" d="M2994.1 982.4 L2786.8 1258.8 L2780.4 1280.9 Z"/>
<path fill="url(#x157)" d="M2994.1 982.4 L2783.1 1271.8 L2776.7 1293.9 Z"/>
<path fill="url(#x158)" d="M2994.1 982.4 L2779.4 1284.6 L2772.8 1307.5 Z"/>
<path fill="url(#x159)" d="M2994.1 982.4 L2775.5 1298.1 L2768.9 1321 Z"/>
<path fill="url(#x160)" d="M2994.1 982.4 L2771.6 1311.6 L2765 1334.5 Z"/>
<path fill="url(#x161)" d="M2994.1 982.4 L2767.7 1325.1 L2761.1 1348 Z"/>
<path fill="url(#x162)" d="M2994.1 982.4 L2764 1338 L2747.2 1396 Z"/>
<path fill="url(#x163)" d="M2994.1 982.4 L2722.6 1377.1 L2766.8 1353.6 Z"/>
<path fill="url(#x164)" d="M2994.1 982.4 L2762 1356.2 L2774.5 1349.6 Z"/>
<path fill="url(#x165)" d="M2994.1 982.4 L2769.3 1352.3 L2781.8 1345.7 Z"/>
<path fill="url(#x166)" d="M2994.1 982.4 L2776.7 1348.4 L2789.2 1341.8 Z"/>
<path fill="url(#x167)" d="M2994.1 982.4 L2784 1344.5 L2796.5 1337.9 Z"/>
<path fill="url(#x168)" d="M2994.1 982.4 L2791.4 1340.6 L2803.9 1334 Z"/>
<path fill="url(#x169)" d="M2994.1 982.4 L2798.7 1336.7 L2811.2 1330.1 Z"/>
<path fill="url(#x170)" d="M2994.1 982.4 L2806.1 1332.8 L2818.6 1326.2 Z"/>
<path fill="url(#x171)" d="M2994.1 982.4 L2813.4 1328.9 L2825.9 1322.3 Z"/>
<path fill="url(#x172)" d="M2994.1 982.4 L2820.8 1325 L2833.2 1318.4 Z"/>
<path fill="url(#x173)" d="M2994.1 982.4 L2828.3 1321 L2840 1314.8 Z"/>
<path fill="url(#x174)" d="M2994.1 982.4 L2835.1 1317.4 L2846.9 1311.1 Z"/>
<path fill="url(#x175)" d="M2994.1 982.4 L2842 1313.7 L2853.7 1307.5 Z"/>
<path fill="url(#x176)" d="M2994.1 982.4 L2848.9 1310 L2860.6 1303.8 Z"/>
<path fill="url(#x177)" d="M2994.1 982.4 L2855.8 1306.4 L2867.5 1300.2 Z"/>
<path fill="url(#x178)" d="M2994.1 982.4 L2862.9 1302.6 L2873.8 1296.8 Z"/>
<path fill="url(#x179)" d="M2994.1 982.4 L2869.3 1299.2 L2880.2 1293.4 Z"/>
<path fill="url(#x180)" d="M2994.1 982.4 L2875.7 1295.8 L2886.6 1290 Z"/>
<path fill="url(#x181)" d="M2994.1 982.4 L2882.1 1292.4 L2893.1 1286.6 Z"/>
<path fill="url(#x182)" d="M2994.1 982.4 L2888.6 1289 L2899.5 1283.2 Z"/>
<path fill="url(#x183)" d="M2994.1 982.4 L2895.2 1285.5 L2905.3 1280.1 Z"/>
<path fill="url(#x184)" d="M2994.1 982.4 L2901.1 1282.3 L2911.3 1276.9 Z"/>
<path fill="url(#x185)" d="M2994.1 982.4 L2907.1 1279.2 L2917.2 1273.8 Z"/>
<path fill="url(#x186)" d="M2994.1 982.4 L2913.1 1276 L2923.2 1270.6 Z"/>
<path fill="url(#x187)" d="M2994.1 982.4 L2919 1272.8 L2929.2 1267.4 Z"/>
<path fill="url(#x188)" d="M2994.1 982.4 L2925.2 1269.6 L2934.5 1264.6 Z"/>
<path fill="url(#x189)" d="M2994.1 982.4 L2930.7 1266.7 L2940 1261.7 Z"/>
<path fill="url(#x190)" d="M2994.1 982.4 L2936.2 1263.7 L2945.5 1258.8 Z"/>
<path fill="url(#x191)" d="M2994.1 982.4 L2941.7 1260.8 L2951.1 1255.8 Z"/>
<path fill="url(#x192)" d="M2994.1 982.4 L2947.2 1257.9 L2956.6 1252.9 Z"/>
<path fill="url(#x193)" d="M2994.1 982.4 L2952.9 1254.9 L2961.5 1250.3 Z"/>
<path fill="url(#x194)" d="M2994.1 982.4 L2957.9 1252.2 L2966.5 1247.6 Z"/>
<path fill="url(#x195)" d="M2994.1 982.4 L2963 1249.5 L2971.6 1244.9 Z"/>
<path fill="url(#x196)" d="M2994.1 982.4 L2968 1246.8 L2976.6 1242.3 Z"/>
<path fill="url(#x197)" d="M2994.1 982.4 L2973.1 1244.1 L2981.7 1239.6 Z"/>
<path fill="url(#x198)" d="M2994.1 982.4 L2978.3 1241.4 L2986.1 1237.2 Z"/>
<path fill="url(#x199)" d="M2994.1 982.4 L2982.9 1238.9 L2990.7 1234.8 Z"/>
<path fill="url(#x200)" d="M2994.1 982.4 L2987.5 1236.5 L2995.3 1232.4 Z"/>
<path fill="url(#x201)" d="M2994.1 982.4 L2992.1 1234.1 L2999.9 1229.9 Z"/>
<path fill="url(#x202)" d="M2994.1 982.4 L2996.6 1231.6 L3004.5 1227.5 Z"/>
<path fill="url(#x203)" d="M2994.1 982.4 L3000.1 1229.8 L3013.4 1222.7 Z"/>
<path fill="url(#x204)" d="M2994.1 982.4 L3009 1225 L3016.9 1220.9 Z"/>
<path fill="url(#x205)" d="M2994.1 982.4 L3013.6 1222.6 L3021.4 1218.5 Z"/>
<path fill="url(#x206)" d="M2994.1 982.4 L3018.1 1220.3 L3026.7 1215.7 Z"/>
<path fill="url(#x207)" d="M2994.1 982.4 L3023.1 1217.6 L3031.7 1213 Z"/>
<path fill="url(#x208)" d="M2994.1 982.4 L3028 1215 L3037.4 1210 Z"/>
<path fill="url(#x209)" d="M2994.1 982.4 L3033.5 1212.1 L3042.9 1207.1 Z"/>
<path fill="url(#x210)" d="M2994.1 982.4 L3039 1209.1 L3048.4 1204.2 Z"/>
<path fill="url(#x211)" d="M2994.1 982.4 L3044.4 1206.3 L3054.5 1200.9 Z"/>
<path fill="url(#x212)" d="M2994.1 982.4 L3050.3 1203.1 L3060.5 1197.7 Z"/>
<path fill="url(#x213)" d="M2994.1 982.4 L3056.2 1200 L3067.1 1194.2 Z"/>
<path fill="url(#x214)" d="M2994.1 982.4 L3062.6 1196.6 L3073.5 1190.8 Z"/>
<path fill="url(#x215)" d="M2994.1 982.4 L3068.8 1193.3 L3080.6 1187.1 Z"/>
<path fill="url(#x216)" d="M2994.1 982.4 L3075.7 1189.6 L3087.4 1183.4 Z"/>
<path fill="url(#x217)" d="M2994.1 982.4 L3082.5 1186.1 L3094.9 1179.4 Z"/>
<path fill="url(#x218)" d="M2994.1 982.4 L3089.6 1182.3 L3102.9 1175.2 Z"/>
<path fill="url(#x219)" d="M2994.1 982.4 L3097.5 1178.1 L3110.7 1171.1 Z"/>
<path fill="url(#x220)" d="M2994.1 982.4 L3105.1 1174.1 L3119.1 1166.6 Z"/>
<path fill="url(#x221)" d="M2994.1 982.4 L3113.2 1169.8 L3128 1161.9 Z"/>
<path fill="url(#x222)" d="M2994.1 982.4 L3121.8 1165.2 L3137.4 1156.9 Z"/>
<path fill="url(#x223)" d="M2994.1 982.4 L3130.8 1160.4 L3147.2 1151.7 Z"/>
<path fill="url(#x224)" d="M2994.1 982.4 L3140.4 1155.3 L3156.8 1146.6 Z"/>
<path fill="url(#x225)" d="M2994.1 982.4 L3149.9 1150.3 L3167.1 1141.2 Z"/>
<path fill="url(#x226)" d="M2994.1 982.4 L3159.8 1145 L3177.8 1135.5 Z"/>
<path fill="url(#x227)" d="M2994.1 982.4 L3170.1 1139.6 L3189.6 1129.2 Z"/>
<path fill="url(#x228)" d="M2994.1 982.4 L3181.4 1133.6 L3201.7 1122.8 Z"/>
<path fill="url(#x229)" d="M2994.1 982.4 L3193.2 1127.3 L3214.3 1116.1 Z"/>
<path fill="url(#x230)" d="M2994.1 982.4 L3205.4 1120.8 L3227.3 1109.2 Z"/>
<path fill="url(#x231)" d="M2994.1 982.4 L3218 1114.2 L3241.4 1101.7 Z"/>
<path fill="url(#x232)" d="M2994.1 982.4 L3231.6 1106.9 L3255.8 1094.1 Z"/>
<path fill="url(#x233)" d="M2994.1 982.4 L3245.5 1099.5 L3271.2 1085.9 Z"/>
<path fill="url(#x234)" d="M2994.1 982.4 L3260.3 1091.7 L3287.6 1077.2 Z"/>
<path fill="url(#x235)" d="M2994.1 982.4 L3276.2 1083.2 L3304.3 1068.3 Z"/>
<path fill="url(#x236)" d="M2994.1 982.4 L3292.4 1074.6 L3322.1 1058.9 Z"/>
<path fill="url(#x237)" d="M2994.1 982.4 L3309.5 1065.5 L3340.8 1049 Z"/>
<path fill="url(#x238)" d="M2994.1 982.4 L3327.6 1056 L3360.4 1038.5 Z"/>
<path fill="url(#x239)" d="M2994.1 982.4 L3346.6 1045.9 L3380.9 1027.7 Z"/>
<path fill="url(#x240)" d="M2994.1 982.4 L3366.4 1035.3 L3402.3 1016.3 Z"/>
<path fill="url(#x241)" d="M2994.1 982.4 L3387.2 1024.3 L3424.7 1004.4 Z"/>
<path fill="url(#x242)" d="M2994.1 982.4 L3409.1 1012.7 L3447.4 992.4 Z"/>
<path fill="url(#x243)" d="M2994.1 982.4 L3431.6 1000.7 L3469.9 980.4 Z"/>
<path fill="url(#x244)" d="M2994.1 982.4 L3459.6 985.9 L3504.4 962.1 Z"/>
</g>
<rect x="2557.6" y="294.3" width="1172.9" height="1129" fill="none" stroke="#a0a0a0" stroke-width="3"/>
<text x="3028" y="281.9" font-size="34.4" fill="#dcdcdc" textLength="173.7" lengthAdjust="spacingAndGlyphs">CIE 1931 xy</text>
<rect x="2543.1" y="1421.8" width="13" height="3" fill="#dadada"/>
<text x="2542.1" y="1434.1" font-size="33.5" fill="#dadada" text-anchor="end">0</text>
<rect x="2543.1" y="1288.5" width="13" height="3" fill="#dadada"/>
<text x="2542.1" y="1300.8" font-size="33.5" fill="#dadada" text-anchor="end">0.1</text>
<rect x="2543.1" y="1154.2" width="13" height="3" fill="#dadada"/>
<text x="2542.1" y="1166.5" font-size="33.5" fill="#dadada" text-anchor="end">0.2</text>
<rect x="2543.1" y="1019.8" width="13" height="3" fill="#dadada"/>
<text x="2542.1" y="1032.1" font-size="33.5" fill="#dadada" text-anchor="end">0.3</text>
<rect x="2543.1" y="885.5" width="13" height="3" fill="#dadada"/>
<text x="2542.1" y="897.8" font-size="33.5" fill="#dadada" text-anchor="end">0.4</text>
<rect x="2543.1" y="751.1" width="13" height="3" fill="#dadada"/>
<text x="2542.1" y="763.4" font-size="33.5" fill="#dadada" text-anchor="end">0.5</text>
<rect x="2543.1" y="616.7" width="13" height="3" fill="#dadada"/>
<text x="2542.1" y="629" font-size="33.5" fill="#dadada" text-anchor="end">0.6</text>
<rect x="2543.1" y="482.4" width="13" height="3" fill="#dadada"/>
<text x="2542.1" y="494.7" font-size="33.5" fill="#dadada" text-anchor="end">0.7</text>
<rect x="2543.1" y="348" width="13" height="3" fill="#dadada"/>
<text x="2542.1" y="360.3" font-size="33.5" fill="#dadada" text-anchor="end">0.8</text>
<rect x="2556.1" y="1424.8" width="3" height="12.5" fill="#dadada"/>
<text x="2557.6" y="1472.7" font-size="33.5" fill="#dadada" text-anchor="middle">0</text>
<rect x="2694" y="1424.8" width="3" height="12.5" fill="#dadada"/>
<text x="2695.5" y="1472.7" font-size="33.5" fill="#dadada" text-anchor="middle">0.1</text>
<rect x="2833.4" y="1424.8" width="3" height="12.5" fill="#dadada"/>
<text x="2834.9" y="1472.7" font-size="33.5" fill="#dadada" text-anchor="middle">0.2</text>
<rect x="2972.9" y="1424.8" width="3" height="12.5" fill="#dadada"/>
<text x="2974.4" y="1472.7" font-size="33.5" fill="#dadada" text-anchor="middle">0.3</text>
<rect x="3112.4" y="1424.8" width="3" height="12.5" fill="#dadada"/>
<text x="3113.9" y="1472.7" font-size="33.5" fill="#dadada" text-anchor="middle">0.4</text>
<rect x="3251.8" y="1424.8" width="3" height="12.5" fill="#dadada"/>
<text x="3253.3" y="1472.7" font-size="33.5" fill="#dadada" text-anchor="middle">0.5</text>
<rect x="3391.3" y="1424.8" width="3" height="12.5" fill="#dadada"/>
<text x="3392.8" y="1472.7" font-size="33.5" fill="#dadada" text-anchor="middle">0.6</text>
<rect x="3530.8" y="1424.8" width="3" height="12.5" fill="#dadada"/>
<text x="3532.3" y="1472.7" font-size="33.5" fill="#dadada" text-anchor="middle">0.7</text>
<rect x="3670.3" y="1424.8" width="3" height="12.5" fill="#dadada"/>
<text x="3671.8" y="1472.7" font-size="33.5" fill="#dadada" text-anchor="middle">0.8</text>
<rect x="1486.6" y="427.3" width="31" height="31" fill="none" stroke="#fff" stroke-width="3.2"/>
<rect x="1527" y="480.1" width="31" height="31" fill="none" stroke="#fff" stroke-width="3.2"/>
<rect x="1590.1" y="461.8" width="31" height="31" fill="none" stroke="#fff" stroke-width="3.2"/>
<rect x="1624" y="446.2" width="31" height="31" fill="none" stroke="#fff" stroke-width="3.2"/>
<rect x="1670.9" y="455.9" width="31" height="31" fill="none" stroke="#fff" stroke-width="3.2"/>
<rect x="1723.4" y="468.3" width="31" height="31" fill="none" stroke="#fff" stroke-width="3.2"/>
<rect x="1795.8" y="476.9" width="31" height="31" fill="none" stroke="#fff" stroke-width="3.2"/>
<rect x="1586.9" y="509" width="31" height="31" fill="none" stroke="#fff" stroke-width="3.2"/>
<rect x="1677.1" y="549.2" width="31" height="31" fill="none" stroke="#fff" stroke-width="3.2"/>
<rect x="1696.3" y="540.3" width="31" height="31" fill="none" stroke="#fff" stroke-width="3.2"/>
<rect x="1535.8" y="574.8" width="31" height="31" fill="none" stroke="#fff" stroke-width="3.2"/>
<rect x="1509" y="615.5" width="31" height="31" fill="none" stroke="#fff" stroke-width="3.2"/>
<rect x="1518.1" y="681.3" width="31" height="31" fill="none" stroke="#fff" stroke-width="3.2"/>
<rect x="1573.6" y="674.2" width="31" height="31" fill="none" stroke="#fff" stroke-width="3.2"/>
<rect x="1611" y="687.5" width="31" height="31" fill="none" stroke="#fff" stroke-width="3.2"/>
<rect x="1668" y="724.7" width="31" height="31" fill="none" stroke="#fff" stroke-width="3.2"/>
<rect x="1777.8" y="664.5" width="31" height="31" fill="none" stroke="#fff" stroke-width="3.2"/>
<rect x="2064.2" y="496.7" width="31" height="31" fill="none" stroke="#fff" stroke-width="3.2"/>
<rect x="1930.9" y="540.3" width="31" height="31" fill="none" stroke="#fff" stroke-width="3.2"/>
<rect x="1827" y="568.3" width="31" height="31" fill="none" stroke="#fff" stroke-width="3.2"/>
<rect x="1581.3" y="790.2" width="31" height="31" fill="none" stroke="#fff" stroke-width="3.2"/>
<rect x="1581.3" y="895.8" width="31" height="31" fill="none" stroke="#fff" stroke-width="3.2"/>
<rect x="1805.5" y="833.9" width="31" height="31" fill="none" stroke="#fff" stroke-width="3.2"/>
<rect x="1573.6" y="1128.9" width="31" height="31" fill="none" stroke="#fff" stroke-width="3.2"/>
<rect x="1614.9" y="592.5" width="31" height="31" fill="none" stroke="#000" stroke-width="3.2"/>
<circle cx="1449.6" cy="418.3" r="9.3" fill="#00ff00" stroke="#000" stroke-width="2.6"/>
<circle cx="1508.8" cy="480.9" r="9.3" fill="#4a8a4c" stroke="#000" stroke-width="2.6"/>
<circle cx="1592.9" cy="461.7" r="9.3" fill="#a4b450" stroke="#000" stroke-width="2.6"/>
<circle cx="1636" cy="439.9" r="9.3" fill="#ffff00" stroke="#000" stroke-width="2.6"/>
<circle cx="1692.3" cy="451.7" r="9.3" fill="#e8c428" stroke="#000" stroke-width="2.6"/>
<circle cx="1758.4" cy="467.9" r="9.3" fill="#e8a23c" stroke="#000" stroke-width="2.6"/>
<circle cx="1592.9" cy="518" r="9.3" fill="#5c6a4a" stroke="#000" stroke-width="2.6"/>
<circle cx="1726.8" cy="549.3" r="9.3" fill="#705446" stroke="#000" stroke-width="2.6"/>
<circle cx="1702.1" cy="564.7" r="9.3" fill="#c49482" stroke="#000" stroke-width="2.6"/>
<circle cx="1530.7" cy="592.7" r="9.3" fill="#6cb8a2" stroke="#000" stroke-width="2.6"/>
<circle cx="1492.9" cy="633.1" r="9.3" fill="#00ffff" stroke="#000" stroke-width="2.6"/>
<circle cx="1627.4" cy="607" r="9.3" fill="#606060" stroke="#000" stroke-width="2.6"/>
<circle cx="1627.4" cy="611.6" r="9.3" fill="#a4a4a4" stroke="#000" stroke-width="2.6"/>
<circle cx="1627.4" cy="639.6" r="9.3" fill="#000000" stroke="#000" stroke-width="2.6"/>
<circle cx="1508.8" cy="708.3" r="9.3" fill="#008a9c" stroke="#000" stroke-width="2.6"/>
<circle cx="1582.9" cy="702.4" r="9.3" fill="#5e7ea0" stroke="#000" stroke-width="2.6"/>
<circle cx="1624.5" cy="711.9" r="9.3" fill="#8884b0" stroke="#000" stroke-width="2.6"/>
<circle cx="1698.5" cy="754.9" r="9.3" fill="#5e4070" stroke="#000" stroke-width="2.6"/>
<circle cx="1842.5" cy="483.2" r="9.3" fill="#d88434" stroke="#000" stroke-width="2.6"/>
<circle cx="2164.1" cy="509.2" r="9.3" fill="#ff0000" stroke="#000" stroke-width="2.6"/>
<circle cx="2005.4" cy="555.8" r="9.3" fill="#b02e40" stroke="#000" stroke-width="2.6"/>
<circle cx="1880" cy="583.5" r="9.3" fill="#c25a6a" stroke="#000" stroke-width="2.6"/>
<circle cx="1817.8" cy="689.7" r="9.3" fill="#c05ca0" stroke="#000" stroke-width="2.6"/>
<circle cx="1590" cy="821.4" r="9.3" fill="#4c5ea2" stroke="#000" stroke-width="2.6"/>
<circle cx="1595.9" cy="930.5" r="9.3" fill="#3c4894" stroke="#000" stroke-width="2.6"/>
<circle cx="1858.5" cy="861.8" r="9.3" fill="#ff00ff" stroke="#000" stroke-width="2.6"/>
<circle cx="1595.9" cy="1155.3" r="9.3" fill="#0000ff" stroke="#000" stroke-width="2.6"/>
<rect x="2960.4" y="599.4" width="31" height="31" fill="none" stroke="#fff" stroke-width="3.2"/>
<rect x="2966.9" y="745.5" width="31" height="31" fill="none" stroke="#fff" stroke-width="3.2"/>
<rect x="3066" y="742.5" width="31" height="31" fill="none" stroke="#fff" stroke-width="3.2"/>
<rect x="3126.2" y="727.5" width="31" height="31" fill="none" stroke="#fff" stroke-width="3.2"/>
<rect x="3163.4" y="768.3" width="31" height="31" fill="none" stroke="#fff" stroke-width="3.2"/>
<rect x="3204.1" y="814.9" width="31" height="31" fill="none" stroke="#fff" stroke-width="3.2"/>
<rect x="3256.7" y="858.3" width="31" height="31" fill="none" stroke="#fff" stroke-width="3.2"/>
<rect x="3012.5" y="830.2" width="31" height="31" fill="none" stroke="#fff" stroke-width="3.2"/>
<rect x="2907" y="921" width="31" height="31" fill="none" stroke="#fff" stroke-width="3.2"/>
<rect x="2854.5" y="964.9" width="31" height="31" fill="none" stroke="#fff" stroke-width="3.2"/>
<rect x="3068.9" y="927.5" width="31" height="31" fill="none" stroke="#fff" stroke-width="3.2"/>
<rect x="3100.8" y="915.4" width="31" height="31" fill="none" stroke="#fff" stroke-width="3.2"/>
<rect x="2832.1" y="1042.8" width="31" height="31" fill="none" stroke="#fff" stroke-width="3.2"/>
<rect x="2889" y="1047.8" width="31" height="31" fill="none" stroke="#fff" stroke-width="3.2"/>
<rect x="2912.9" y="1064.9" width="31" height="31" fill="none" stroke="#fff" stroke-width="3.2"/>
<rect x="3063.3" y="1074.4" width="31" height="31" fill="none" stroke="#fff" stroke-width="3.2"/>
<rect x="2944.4" y="1108.9" width="31" height="31" fill="none" stroke="#fff" stroke-width="3.2"/>
<rect x="2841.2" y="1150.5" width="31" height="31" fill="none" stroke="#fff" stroke-width="3.2"/>
<rect x="2988.1" y="1199.1" width="31" height="31" fill="none" stroke="#fff" stroke-width="3.2"/>
<rect x="2811" y="1218.3" width="31" height="31" fill="none" stroke="#fff" stroke-width="3.2"/>
<rect x="2751" y="1324.1" width="31" height="31" fill="none" stroke="#fff" stroke-width="3.2"/>
<rect x="3434.8" y="961.8" width="31" height="31" fill="none" stroke="#fff" stroke-width="3.2"/>
<rect x="3184.4" y="986.9" width="31" height="31" fill="none" stroke="#fff" stroke-width="3.2"/>
<rect x="3291.2" y="980.1" width="31" height="31" fill="none" stroke="#fff" stroke-width="3.2"/>
<rect x="2976" y="964.9" width="31" height="31" fill="none" stroke="#000" stroke-width="3.2"/>
<circle cx="2919.5" cy="486.6" r="9.3" fill="#00ff00" stroke="#000" stroke-width="2.6"/>
<circle cx="2951.1" cy="714.3" r="9.3" fill="#4a8a4c" stroke="#000" stroke-width="2.6"/>
<circle cx="3085.3" cy="717.3" r="9.3" fill="#a4b450" stroke="#000" stroke-width="2.6"/>
<circle cx="3163.5" cy="695.8" r="9.3" fill="#ffff00" stroke="#000" stroke-width="2.6"/>
<circle cx="3022.8" cy="829.4" r="9.3" fill="#5c6a4a" stroke="#000" stroke-width="2.6"/>
<circle cx="3207" cy="752.3" r="9.3" fill="#e8c428" stroke="#000" stroke-width="2.6"/>
<circle cx="3254.2" cy="815.1" r="9.3" fill="#e8a23c" stroke="#000" stroke-width="2.6"/>
<circle cx="3313.5" cy="867.6" r="9.3" fill="#d88434" stroke="#000" stroke-width="2.6"/>
<circle cx="3134.9" cy="930.9" r="9.3" fill="#705446" stroke="#000" stroke-width="2.6"/>
<circle cx="3097.4" cy="945.6" r="9.3" fill="#c49482" stroke="#000" stroke-width="2.6"/>
<circle cx="3228.5" cy="1011.3" r="9.3" fill="#c25a6a" stroke="#000" stroke-width="2.6"/>
<circle cx="3347.1" cy="1008.6" r="9.3" fill="#b02e40" stroke="#000" stroke-width="2.6"/>
<circle cx="3506.7" cy="992.7" r="9.3" fill="#ff0000" stroke="#000" stroke-width="2.6"/>
<circle cx="2894.5" cy="933.8" r="9.3" fill="#6cb8a2" stroke="#000" stroke-width="2.6"/>
<circle cx="2832.5" cy="977.2" r="9.3" fill="#00ffff" stroke="#000" stroke-width="2.6"/>
<circle cx="2988.9" cy="980.1" r="9.3" fill="#a4a4a4" stroke="#000" stroke-width="2.6"/>
<circle cx="2965.8" cy="1017.6" r="9.3" fill="#000000" stroke="#000" stroke-width="2.6"/>
<circle cx="2816.9" cy="1068" r="9.3" fill="#008a9c" stroke="#000" stroke-width="2.6"/>
<circle cx="2892.1" cy="1073.9" r="9.3" fill="#5e7ea0" stroke="#000" stroke-width="2.6"/>
<circle cx="2922.5" cy="1089.9" r="9.3" fill="#8884b0" stroke="#000" stroke-width="2.6"/>
<circle cx="3094.5" cy="1101.7" r="9.3" fill="#c05ca0" stroke="#000" stroke-width="2.6"/>
<circle cx="2963.2" cy="1136.5" r="9.3" fill="#5e4070" stroke="#000" stroke-width="2.6"/>
<circle cx="2847.6" cy="1173.8" r="9.3" fill="#4c5ea2" stroke="#000" stroke-width="2.6"/>
<circle cx="2816.9" cy="1242.8" r="9.3" fill="#3c4894" stroke="#000" stroke-width="2.6"/>
<circle cx="3022.8" cy="1223.5" r="9.3" fill="#ff00ff" stroke="#000" stroke-width="2.6"/>
<circle cx="2766.5" cy="1345.4" r="9.3" fill="#0000ff" stroke="#000" stroke-width="2.6"/>
<rect x="23" y="1568" width="3793" height="306" fill="#000"/>
<g clip-path="url(#swclip)">
<text transform="translate(53 1625) rotate(-90)" font-size="28.3" fill="#e8e8e8" text-anchor="middle" textLength="79" lengthAdjust="spacingAndGlyphs">Actual</text>
<text transform="translate(53 1743) rotate(-90)" font-size="28.3" fill="#e8e8e8" text-anchor="middle" textLength="78" lengthAdjust="spacingAndGlyphs">Target</text>
<rect x="63" y="1578" width="134" height="106" fill="#f8fcff"/>
<rect x="63" y="1684" width="134" height="107" fill="#fdfdfd"/>
<rect x="64" y="1579" width="132" height="211" fill="none" stroke="#fff" stroke-width="2.5"/>
<text x="130" y="1822.4" font-size="28.3" fill="#ffffff" text-anchor="middle" textLength="69.6" lengthAdjust="spacingAndGlyphs" stroke="#fff" stroke-width="0.5">White</text>
<rect x="219.1" y="1578" width="134" height="106" fill="#e4e5e9"/>
<rect x="219.1" y="1684" width="134" height="107" fill="#e3e3e3"/>
<rect x="220.1" y="1579" width="132" height="211" fill="none" stroke="#fff" stroke-width="2.5"/>
<text x="286.1" y="1822.4" font-size="28.3" fill="#ffffff" text-anchor="middle" textLength="96.8" lengthAdjust="spacingAndGlyphs" stroke="#fff" stroke-width="0.5">Gray 80</text>
<rect x="375.2" y="1578" width="134" height="106" fill="#cfd2d3"/>
<rect x="375.2" y="1684" width="134" height="107" fill="#cbcbcb"/>
<rect x="376.2" y="1579" width="132" height="211" fill="none" stroke="#fff" stroke-width="2.5"/>
<text x="442.2" y="1822.4" font-size="28.3" fill="#ffffff" text-anchor="middle" textLength="96.8" lengthAdjust="spacingAndGlyphs" stroke="#fff" stroke-width="0.5">Gray 65</text>
<rect x="531.3" y="1578" width="134" height="106" fill="#b5b9bc"/>
<rect x="531.3" y="1684" width="134" height="107" fill="#b3b3b3"/>
<rect x="532.3" y="1579" width="132" height="211" fill="none" stroke="#fff" stroke-width="2.5"/>
<text x="598.3" y="1822.4" font-size="28.3" fill="#ffffff" text-anchor="middle" textLength="96.8" lengthAdjust="spacingAndGlyphs" stroke="#fff" stroke-width="0.5">Gray 50</text>
<rect x="687.4" y="1578" width="134" height="106" fill="#999d9e"/>
<rect x="687.4" y="1684" width="134" height="107" fill="#999999"/>
<rect x="688.4" y="1579" width="132" height="211" fill="none" stroke="#fff" stroke-width="2.5"/>
<text x="754.4" y="1822.4" font-size="28.3" fill="#ffffff" text-anchor="middle" textLength="96.8" lengthAdjust="spacingAndGlyphs" stroke="#fff" stroke-width="0.5">Gray 35</text>
<rect x="843.5" y="1578" width="134" height="106" fill="#050505"/>
<rect x="843.5" y="1684" width="134" height="107" fill="#020202"/>
<rect x="844.5" y="1579" width="132" height="211" fill="none" stroke="#fff" stroke-width="2.5"/>
<text x="910.5" y="1822.4" font-size="28.3" fill="#ffffff" text-anchor="middle" textLength="66.5" lengthAdjust="spacingAndGlyphs" stroke="#fff" stroke-width="0.5">Black</text>
<rect x="999.6" y="1578" width="134" height="106" fill="#7b5444"/>
<rect x="999.6" y="1684" width="134" height="107" fill="#735244"/>
<rect x="1000.6" y="1579" width="132" height="211" fill="none" stroke="#fff" stroke-width="2.5"/>
<text x="1066.6" y="1822.4" font-size="28.3" fill="#ffffff" text-anchor="middle" textLength="117.9" lengthAdjust="spacingAndGlyphs" stroke="#fff" stroke-width="0.5">Dark Skin</text>
<rect x="1155.7" y="1578" width="134" height="106" fill="#c99884"/>
<rect x="1155.7" y="1684" width="134" height="107" fill="#c29682"/>
<rect x="1156.7" y="1579" width="132" height="211" fill="none" stroke="#fff" stroke-width="2.5"/>
<text x="1222.7" y="1822.4" font-size="28.3" fill="#ffffff" text-anchor="middle" textLength="119.5" lengthAdjust="spacingAndGlyphs" stroke="#fff" stroke-width="0.5">Light Skin</text>
<rect x="1311.8" y="1578" width="134" height="106" fill="#5a7fa5"/>
<rect x="1311.8" y="1684" width="134" height="107" fill="#5f7a9b"/>
<rect x="1312.8" y="1579" width="132" height="211" fill="none" stroke="#fff" stroke-width="2.5"/>
<text x="1378.8" y="1822.4" font-size="28.3" fill="#ffffff" text-anchor="middle" textLength="107.4" lengthAdjust="spacingAndGlyphs" stroke="#fff" stroke-width="0.5">Blue Sky</text>
<rect x="1467.9" y="1578" width="134" height="106" fill="#586e42"/>
<rect x="1467.9" y="1684" width="134" height="107" fill="#5c6a46"/>
<rect x="1468.9" y="1579" width="132" height="211" fill="none" stroke="#fff" stroke-width="2.5"/>
<text x="1534.9" y="1822.4" font-size="28.3" fill="#ffffff" text-anchor="middle" textLength="89.2" lengthAdjust="spacingAndGlyphs" stroke="#fff" stroke-width="0.5">Foliage</text>
<rect x="1624" y="1578" width="134" height="106" fill="#8482b6"/>
<rect x="1624" y="1684" width="134" height="107" fill="#827eac"/>
<rect x="1625" y="1579" width="132" height="211" fill="none" stroke="#fff" stroke-width="2.5"/>
<text x="1650.2" y="1822.4" font-size="28.3" fill="#ffffff" textLength="54.5" lengthAdjust="spacingAndGlyphs" stroke="#fff" stroke-width="0.5">Blue</text>
<text x="1650.2" y="1853.2" font-size="28.3" fill="#ffffff" textLength="81.6" lengthAdjust="spacingAndGlyphs" stroke="#fff" stroke-width="0.5">Flower</text>
<rect x="1780.1" y="1578" width="134" height="106" fill="#38c0b0"/>
<rect x="1780.1" y="1684" width="134" height="107" fill="#69bca8"/>
<rect x="1781.1" y="1579" width="132" height="211" fill="none" stroke="#fff" stroke-width="2.5"/>
<text x="1809.3" y="1822.4" font-size="28.3" fill="#ffffff" textLength="74.1" lengthAdjust="spacingAndGlyphs" stroke="#fff" stroke-width="0.5">Bluish</text>
<text x="1809.3" y="1853.2" font-size="28.3" fill="#ffffff" textLength="75.6" lengthAdjust="spacingAndGlyphs" stroke="#fff" stroke-width="0.5">Green</text>
<rect x="1936.2" y="1578" width="134" height="106" fill="#e87600"/>
<rect x="1936.2" y="1684" width="134" height="107" fill="#d67830"/>
<rect x="1937.2" y="1579" width="132" height="211" fill="none" stroke="#fff" stroke-width="2.5"/>
<text x="2003.2" y="1822.4" font-size="28.3" fill="#ffffff" text-anchor="middle" textLength="90.8" lengthAdjust="spacingAndGlyphs" stroke="#fff" stroke-width="0.5">Orange</text>
<rect x="2092.3" y="1578" width="134" height="106" fill="#485cac"/>
<rect x="2092.3" y="1684" width="134" height="107" fill="#4a5aa0"/>
<rect x="2093.3" y="1579" width="132" height="211" fill="none" stroke="#fff" stroke-width="2.5"/>
<text x="2110.1" y="1822.4" font-size="28.3" fill="#ffffff" textLength="98.3" lengthAdjust="spacingAndGlyphs" stroke="#fff" stroke-width="0.5">Purplish</text>
<text x="2110.1" y="1853.2" font-size="28.3" fill="#ffffff" textLength="54.5" lengthAdjust="spacingAndGlyphs" stroke="#fff" stroke-width="0.5">Blue</text>
<rect x="2248.4" y="1578" width="134" height="106" fill="#d24a60"/>
<rect x="2248.4" y="1684" width="134" height="107" fill="#c05260"/>
<rect x="2249.4" y="1579" width="132" height="211" fill="none" stroke="#fff" stroke-width="2.5"/>
<text x="2257.9" y="1822.4" font-size="28.3" fill="#ffffff" textLength="114.9" lengthAdjust="spacingAndGlyphs" stroke="#fff" stroke-width="0.5">Moderate</text>
<text x="2257.9" y="1853.2" font-size="28.3" fill="#ffffff" textLength="49.9" lengthAdjust="spacingAndGlyphs" stroke="#fff" stroke-width="0.5">Red</text>
<rect x="2404.5" y="1578" width="134" height="106" fill="#623c76"/>
<rect x="2404.5" y="1684" width="134" height="107" fill="#5e3c6c"/>
<rect x="2405.5" y="1579" width="132" height="211" fill="none" stroke="#fff" stroke-width="2.5"/>
<text x="2471.5" y="1822.4" font-size="28.3" fill="#ffffff" text-anchor="middle" textLength="78.7" lengthAdjust="spacingAndGlyphs" stroke="#fff" stroke-width="0.5">Purple</text>
<rect x="2560.6" y="1578" width="134" height="106" fill="#98be23"/>
<rect x="2560.6" y="1684" width="134" height="107" fill="#a0b946"/>
<rect x="2561.6" y="1579" width="132" height="211" fill="none" stroke="#fff" stroke-width="2.5"/>
<text x="2587.5" y="1822.4" font-size="28.3" fill="#ffffff" textLength="80.2" lengthAdjust="spacingAndGlyphs" stroke="#fff" stroke-width="0.5">Yellow</text>
<text x="2587.5" y="1853.2" font-size="28.3" fill="#ffffff" textLength="75.6" lengthAdjust="spacingAndGlyphs" stroke="#fff" stroke-width="0.5">Green</text>
<rect x="2716.7" y="1578" width="134" height="106" fill="#f0a500"/>
<rect x="2716.7" y="1684" width="134" height="107" fill="#e6a541"/>
<rect x="2717.7" y="1579" width="132" height="211" fill="none" stroke="#fff" stroke-width="2.5"/>
<text x="2738.3" y="1822.4" font-size="28.3" fill="#ffffff" textLength="90.8" lengthAdjust="spacingAndGlyphs" stroke="#fff" stroke-width="0.5">Orange</text>
<text x="2738.3" y="1853.2" font-size="28.3" fill="#ffffff" textLength="80.2" lengthAdjust="spacingAndGlyphs" stroke="#fff" stroke-width="0.5">Yellow</text>
<rect x="2872.8" y="1578" width="134" height="106" fill="#343ca0"/>
<rect x="2872.8" y="1684" width="134" height="107" fill="#343c96"/>
<rect x="2873.8" y="1579" width="132" height="211" fill="none" stroke="#fff" stroke-width="2.5"/>
<text x="2939.8" y="1822.4" font-size="28.3" fill="#ffffff" text-anchor="middle" textLength="54.5" lengthAdjust="spacingAndGlyphs" stroke="#fff" stroke-width="0.5">Blue</text>
<rect x="3028.9" y="1578" width="134" height="106" fill="#14963c"/>
<rect x="3028.9" y="1684" width="134" height="107" fill="#4b964b"/>
<rect x="3029.9" y="1579" width="132" height="211" fill="none" stroke="#fff" stroke-width="2.5"/>
<text x="3095.9" y="1822.4" font-size="28.3" fill="#ffffff" text-anchor="middle" textLength="75.6" lengthAdjust="spacingAndGlyphs" stroke="#fff" stroke-width="0.5">Green</text>
<rect x="3185" y="1578" width="134" height="106" fill="#c31e3c"/>
<rect x="3185" y="1684" width="134" height="107" fill="#af323c"/>
<rect x="3186" y="1579" width="132" height="211" fill="none" stroke="#fff" stroke-width="2.5"/>
<text x="3252" y="1822.4" font-size="28.3" fill="#ffffff" text-anchor="middle" textLength="49.9" lengthAdjust="spacingAndGlyphs" stroke="#fff" stroke-width="0.5">Red</text>
<rect x="3341.1" y="1578" width="134" height="106" fill="#f0cd00"/>
<rect x="3341.1" y="1684" width="134" height="107" fill="#e6c85a"/>
<rect x="3342.1" y="1579" width="132" height="211" fill="none" stroke="#fff" stroke-width="2.5"/>
<text x="3408.1" y="1822.4" font-size="28.3" fill="#ffffff" text-anchor="middle" textLength="80.2" lengthAdjust="spacingAndGlyphs" stroke="#fff" stroke-width="0.5">Yellow</text>
<rect x="3497.2" y="1578" width="134" height="106" fill="#cd50a0"/>
<rect x="3497.2" y="1684" width="134" height="107" fill="#b95591"/>
<rect x="3498.2" y="1579" width="132" height="211" fill="none" stroke="#fff" stroke-width="2.5"/>
<text x="3564.2" y="1822.4" font-size="28.3" fill="#ffffff" text-anchor="middle" textLength="105.9" lengthAdjust="spacingAndGlyphs" stroke="#fff" stroke-width="0.5">Magenta</text>
<rect x="3653.3" y="1578" width="134" height="106" fill="#0096b9"/>
<rect x="3653.3" y="1684" width="134" height="107" fill="#4b91aa"/>
<rect x="3654.3" y="1579" width="132" height="211" fill="none" stroke="#fff" stroke-width="2.5"/>
<text x="3720.3" y="1822.4" font-size="28.3" fill="#ffffff" text-anchor="middle" textLength="63.5" lengthAdjust="spacingAndGlyphs" stroke="#fff" stroke-width="0.5">Cyan</text>
<rect x="3809.4" y="1578" width="134" height="106" fill="#ff0000"/>
<rect x="3809.4" y="1684" width="134" height="107" fill="#ff0000"/>
<rect x="3810.4" y="1579" width="132" height="211" fill="none" stroke="#fff" stroke-width="2.5"/>
<text x="3876.4" y="1822.4" font-size="28.3" fill="#ffffff" text-anchor="middle" textLength="127.1" lengthAdjust="spacingAndGlyphs" stroke="#fff" stroke-width="0.5">100% Red</text>
</g>
<rect x="23" y="1874" width="3793" height="37" fill="#5c5c5c"/>
<rect x="23" y="1874" width="3793" height="2" fill="#6e6e6e"/>
<rect x="25" y="1877" width="32" height="31" rx="5" fill="#8a8a8a"/>
<path d="M37 1892 L48 1882 L48 1902 Z" fill="#444"/>
<rect x="63" y="1877" width="2995" height="31" rx="15.5" fill="#444"/>
<rect x="3784" y="1877" width="30" height="31" rx="5" fill="#8a8a8a"/>
<path d="M3806 1892 L3795 1882 L3795 1902 Z" fill="#444"/>
<rect x="0" y="2018.5" width="3840" height="2.5" fill="#222"/>
<rect x="72" y="2020" width="3768" height="1" fill="#555"/>
<rect x="2" y="1927" width="108" height="91" rx="8" fill="url(#gBb)"/>
<rect x="9.5" y="1934.5" width="94" height="54" rx="5" fill="#ffffff"/>
<text x="56" y="2010" font-size="16.4" fill="#2a2a2a" text-anchor="middle" stroke="#2a2a2a" stroke-width="0.6">White</text>
<rect x="113.7" y="1927" width="108" height="91" rx="8" fill="url(#gBb)"/>
<rect x="121.2" y="1934.5" width="94" height="54" rx="5" fill="#e6e6e6"/>
<text x="167.7" y="2010" font-size="16.4" fill="#2a2a2a" text-anchor="middle" stroke="#2a2a2a" stroke-width="0.6">Gray 80</text>
<rect x="225.4" y="1927" width="108" height="91" rx="8" fill="url(#gBb)"/>
<rect x="232.9" y="1934.5" width="94" height="54" rx="5" fill="#d2d2d2"/>
<text x="279.4" y="2010" font-size="16.4" fill="#2a2a2a" text-anchor="middle" stroke="#2a2a2a" stroke-width="0.6">Gray 65</text>
<rect x="337.1" y="1927" width="108" height="91" rx="8" fill="url(#gBb)"/>
<rect x="344.6" y="1934.5" width="94" height="54" rx="5" fill="#bababa"/>
<text x="391.1" y="2010" font-size="16.4" fill="#2a2a2a" text-anchor="middle" stroke="#2a2a2a" stroke-width="0.6">Gray 50</text>
<rect x="448.8" y="1927" width="108" height="91" rx="8" fill="url(#gBb)"/>
<rect x="456.3" y="1934.5" width="94" height="54" rx="5" fill="#a0a0a0"/>
<text x="502.8" y="2010" font-size="16.4" fill="#2a2a2a" text-anchor="middle" stroke="#2a2a2a" stroke-width="0.6">Gray 35</text>
<rect x="560.5" y="1927" width="108" height="91" rx="8" fill="url(#gBb)"/>
<rect x="568" y="1934.5" width="94" height="54" rx="5" fill="#000000"/>
<text x="614.5" y="2010" font-size="16.4" fill="#2a2a2a" text-anchor="middle" stroke="#2a2a2a" stroke-width="0.6">Black</text>
<rect x="672.2" y="1927" width="108" height="91" rx="8" fill="url(#gBb)"/>
<rect x="679.7" y="1934.5" width="94" height="54" rx="5" fill="#735244"/>
<text x="726.2" y="2010" font-size="16.4" fill="#2a2a2a" text-anchor="middle" stroke="#2a2a2a" stroke-width="0.6">Dark Skin</text>
<rect x="783.9" y="1927" width="108" height="91" rx="8" fill="url(#gBb)"/>
<rect x="791.4" y="1934.5" width="94" height="54" rx="5" fill="#c29682"/>
<text x="837.9" y="2010" font-size="16.4" fill="#2a2a2a" text-anchor="middle" stroke="#2a2a2a" stroke-width="0.6">Light Skin</text>
<rect x="895.6" y="1927" width="108" height="91" rx="8" fill="url(#gBb)"/>
<rect x="903.1" y="1934.5" width="94" height="54" rx="5" fill="#5f7a9c"/>
<text x="949.6" y="2010" font-size="16.4" fill="#2a2a2a" text-anchor="middle" stroke="#2a2a2a" stroke-width="0.6">Blue Sky</text>
<rect x="1007.3" y="1927" width="108" height="91" rx="8" fill="url(#gBb)"/>
<rect x="1014.8" y="1934.5" width="94" height="54" rx="5" fill="#586b44"/>
<text x="1061.3" y="2010" font-size="16.4" fill="#2a2a2a" text-anchor="middle" stroke="#2a2a2a" stroke-width="0.6">Foliage</text>
<rect x="1119" y="1927" width="108" height="91" rx="8" fill="url(#gBb)"/>
<rect x="1126.5" y="1934.5" width="94" height="54" rx="5" fill="#8380b0"/>
<text x="1173" y="2010" font-size="16.4" fill="#2a2a2a" text-anchor="middle" stroke="#2a2a2a" stroke-width="0.6">Blue Flower</text>
<rect x="1230.7" y="1927" width="108" height="91" rx="8" fill="url(#gBb)"/>
<rect x="1238.2" y="1934.5" width="94" height="54" rx="5" fill="#67bda9"/>
<text x="1284.7" y="2010" font-size="16.4" fill="#2a2a2a" text-anchor="middle" stroke="#2a2a2a" stroke-width="0.6">Bluish Green</text>
<rect x="1342.4" y="1927" width="108" height="91" rx="8" fill="url(#gBb)"/>
<rect x="1349.9" y="1934.5" width="94" height="54" rx="5" fill="#d67e2c"/>
<text x="1396.4" y="2010" font-size="16.4" fill="#2a2a2a" text-anchor="middle" stroke="#2a2a2a" stroke-width="0.6">Orange</text>
<rect x="1454.1" y="1927" width="108" height="91" rx="8" fill="url(#gBb)"/>
<rect x="1461.6" y="1934.5" width="94" height="54" rx="5" fill="#4a5aa4"/>
<text x="1508.1" y="2010" font-size="16.4" fill="#2a2a2a" text-anchor="middle" stroke="#2a2a2a" stroke-width="0.6">Purplish Blue</text>
<rect x="1565.8" y="1927" width="108" height="91" rx="8" fill="url(#gBb)"/>
<rect x="1573.3" y="1934.5" width="94" height="54" rx="5" fill="#c15a63"/>
<text x="1619.8" y="2010" font-size="16.4" fill="#2a2a2a" text-anchor="middle" stroke="#2a2a2a" stroke-width="0.6">Moderate Red</text>
<rect x="1677.5" y="1927" width="108" height="91" rx="8" fill="url(#gBb)"/>
<rect x="1685" y="1934.5" width="94" height="54" rx="5" fill="#5e3c6c"/>
<text x="1731.5" y="2010" font-size="16.4" fill="#2a2a2a" text-anchor="middle" stroke="#2a2a2a" stroke-width="0.6">Purple</text>
<rect x="1789.2" y="1927" width="108" height="91" rx="8" fill="url(#gBb)"/>
<rect x="1796.7" y="1934.5" width="94" height="54" rx="5" fill="#9dbc40"/>
<text x="1843.2" y="2010" font-size="16.4" fill="#2a2a2a" text-anchor="middle" stroke="#2a2a2a" stroke-width="0.6">Yellow Green</text>
<rect x="1900.9" y="1927" width="108" height="91" rx="8" fill="url(#gBb)"/>
<rect x="1908.4" y="1934.5" width="94" height="54" rx="5" fill="#e0a32e"/>
<text x="1954.9" y="2010" font-size="16.4" fill="#2a2a2a" text-anchor="middle" stroke="#2a2a2a" stroke-width="0.6">Orange Yellow</text>
<rect x="2012.6" y="1927" width="108" height="91" rx="8" fill="url(#gBb)"/>
<rect x="2020.1" y="1934.5" width="94" height="54" rx="5" fill="#383d96"/>
<text x="2066.6" y="2010" font-size="16.4" fill="#2a2a2a" text-anchor="middle" stroke="#2a2a2a" stroke-width="0.6">Blue</text>
<rect x="2124.3" y="1927" width="108" height="91" rx="8" fill="url(#gBb)"/>
<rect x="2131.8" y="1934.5" width="94" height="54" rx="5" fill="#469449"/>
<text x="2178.3" y="2010" font-size="16.4" fill="#2a2a2a" text-anchor="middle" stroke="#2a2a2a" stroke-width="0.6">Green</text>
<rect x="2236" y="1927" width="108" height="91" rx="8" fill="url(#gBb)"/>
<rect x="2243.5" y="1934.5" width="94" height="54" rx="5" fill="#af363c"/>
<text x="2290" y="2010" font-size="16.4" fill="#2a2a2a" text-anchor="middle" stroke="#2a2a2a" stroke-width="0.6">Red</text>
<rect x="2347.7" y="1927" width="108" height="91" rx="8" fill="url(#gBb)"/>
<rect x="2355.2" y="1934.5" width="94" height="54" rx="5" fill="#e7c71f"/>
<text x="2401.7" y="2010" font-size="16.4" fill="#2a2a2a" text-anchor="middle" stroke="#2a2a2a" stroke-width="0.6">Yellow</text>
<rect x="2459.4" y="1927" width="108" height="91" rx="8" fill="url(#gBb)"/>
<rect x="2466.9" y="1934.5" width="94" height="54" rx="5" fill="#bb5695"/>
<text x="2513.4" y="2010" font-size="16.4" fill="#2a2a2a" text-anchor="middle" stroke="#2a2a2a" stroke-width="0.6">Magenta</text>
<rect x="2571.1" y="1927" width="108" height="91" rx="8" fill="url(#gBb)"/>
<rect x="2578.6" y="1934.5" width="94" height="54" rx="5" fill="#0885a1"/>
<text x="2625.1" y="2010" font-size="16.4" fill="#2a2a2a" text-anchor="middle" stroke="#2a2a2a" stroke-width="0.6">Cyan</text>
<rect x="2682.8" y="1927" width="108" height="91" rx="8" fill="url(#gBb)"/>
<rect x="2690.3" y="1934.5" width="94" height="54" rx="5" fill="#ff0000"/>
<text x="2736.8" y="2010" font-size="16.4" fill="#2a2a2a" text-anchor="middle" stroke="#2a2a2a" stroke-width="0.6">100% Red</text>
<rect x="2794.5" y="1927" width="108" height="91" rx="8" fill="url(#gBb)"/>
<rect x="2802" y="1934.5" width="94" height="54" rx="5" fill="#00ff00"/>
<text x="2848.5" y="2010" font-size="16.4" fill="#2a2a2a" text-anchor="middle" stroke="#2a2a2a" stroke-width="0.6">100% Green</text>
<rect x="2906.2" y="1927" width="108" height="91" rx="8" fill="url(#gBb)"/>
<rect x="2913.7" y="1934.5" width="94" height="54" rx="5" fill="#0000ff"/>
<text x="2960.2" y="2010" font-size="16.4" fill="#2a2a2a" text-anchor="middle" stroke="#2a2a2a" stroke-width="0.6">100% Blue</text>
<rect x="3017.9" y="1927" width="108" height="91" rx="8" fill="url(#gBb)"/>
<rect x="3025.4" y="1934.5" width="94" height="54" rx="5" fill="#00ffff"/>
<text x="3071.9" y="2010" font-size="16.4" fill="#2a2a2a" text-anchor="middle" stroke="#2a2a2a" stroke-width="0.6">100% Cyan</text>
<rect x="3129.6" y="1927" width="108" height="91" rx="8" fill="url(#gBb)"/>
<rect x="3137.1" y="1934.5" width="94" height="35" rx="5" fill="#ff00ff"/>
<text x="3151.8" y="1991.5" font-size="16.4" fill="#2a2a2a" stroke="#2a2a2a" stroke-width="0.6">100%</text>
<text x="3151.8" y="2010" font-size="16.4" fill="#2a2a2a" stroke="#2a2a2a" stroke-width="0.6">Magenta</text>
<rect x="3241.3" y="1927" width="108" height="91" rx="8" fill="#252525"/>
<rect x="3248.8" y="1934.5" width="94" height="54" rx="5" fill="#ffff00"/>
<text x="3295.3" y="2010" font-size="16.4" fill="#ffffff" text-anchor="middle" font-weight="bold">100% Yellow</text>
<rect x="3355.5" y="1926.6" width="71.5" height="27" rx="6" fill="url(#gBb)"/>
<circle cx="3391" cy="1940" r="10" fill="#888"/><path d="M3384 1943 L3391 1936 L3398 1943 Z" fill="#333"/>
<rect x="3355.5" y="1954" width="71.5" height="64" rx="6" fill="url(#gBb)"/>
<rect x="3369" y="1963.5" width="45" height="45" rx="6" fill="#9a9a9a" stroke="#222" stroke-width="4"/>
<rect x="3381" y="1976" width="21" height="20" fill="#000"/>
<rect x="3429.4" y="1926.6" width="67" height="44.5" rx="5" fill="url(#gBb)"/>
<circle cx="3462.9" cy="1949" r="14.5" fill="#9c9c9c"/>
<rect x="3497.3" y="1926.6" width="67" height="44.5" rx="5" fill="url(#gBb)"/>
<circle cx="3530.8" cy="1949" r="14.5" fill="#9c9c9c"/>
<rect x="3565.2" y="1926.6" width="67" height="44.5" rx="5" fill="url(#gBb)"/>
<circle cx="3598.7" cy="1949" r="14.5" fill="#9c9c9c"/>
<rect x="3633.1" y="1926.6" width="67" height="44.5" rx="5" fill="url(#gBb)"/>
<circle cx="3666.6" cy="1949" r="14.5" fill="#9c9c9c"/>
<rect x="3701" y="1926.6" width="67" height="44.5" rx="5" fill="url(#gBb)"/>
<circle cx="3734.5" cy="1949" r="14.5" fill="#9c9c9c"/>
<rect x="3768.9" y="1926.6" width="67" height="44.5" rx="5" fill="url(#gBb)"/>
<circle cx="3802.4" cy="1949" r="14.5" fill="#9c9c9c"/>
<rect x="3456.9" y="1942.5" width="12" height="12" fill="#333"/>
<path d="M3524.8 1941 L3538.8 1949 L3524.8 1957 Z" fill="#333"/>
<text x="3598.7" y="1955" font-size="17" fill="#333" text-anchor="middle" font-weight="bold">[··]</text>
<text x="3666.6" y="1956" font-size="24" fill="#333" text-anchor="middle" font-weight="bold">∞</text>
<path d="M3726.5 1949 a8 8 0 1 1 3 6" fill="none" stroke="#333" stroke-width="3"/>
<path d="M3794.4 1949 l5 6 l9 -12" fill="none" stroke="#333" stroke-width="3.5"/>
<rect x="3429.4" y="1972.8" width="204" height="45" rx="5" fill="url(#gBb)"/>
<rect x="3633.5" y="1972.8" width="206.5" height="45" rx="5" fill="url(#gNext)"/>
<circle cx="3475" cy="1995.3" r="14.7" fill="#9c9c9c"/>
<text x="3475" y="2002" font-size="24" fill="#333" text-anchor="middle">«</text>
<circle cx="3795" cy="1995.3" r="14.7" fill="#bdbdbd"/>
<text x="3795" y="2002" font-size="24" fill="#333" text-anchor="middle">»</text>
<text x="3515.5" y="2007.5" font-size="32.7" fill="#333" font-weight="bold" textLength="76" lengthAdjust="spacingAndGlyphs">Back</text>
<text x="3675.5" y="2007.5" font-size="32.7" fill="#333" font-weight="bold" textLength="78" lengthAdjust="spacingAndGlyphs">Next</text>
</svg>
</body></html>
